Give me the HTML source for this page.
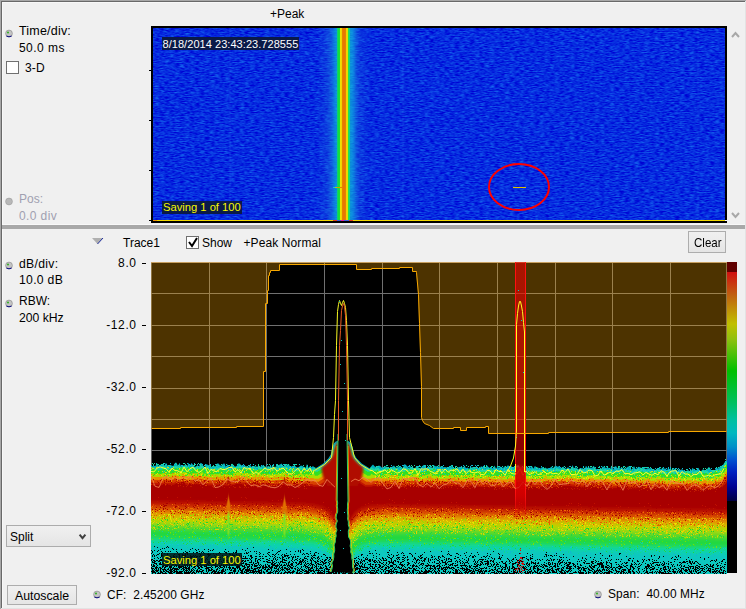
<!DOCTYPE html>
<html><head><meta charset="utf-8"><style>
html,body{margin:0;padding:0;width:746px;height:609px;overflow:hidden;background:#f0f0f0;font-family:"Liberation Sans", sans-serif;}
#root{position:absolute;left:0;top:0;width:746px;height:609px;background:#f0f0f0;}
.b{position:absolute;box-sizing:border-box;}
</style></head><body><div id="root">
<div class="b" style="left:0;top:0;width:746px;height:1px;background:#a8a8a8"></div>
<div class="b" style="left:0;top:0;width:1px;height:609px;background:#a8a8a8"></div>
<div class="b" style="left:1px;top:1px;width:744px;height:1px;background:#696969"></div>
<div class="b" style="left:1px;top:1px;width:1px;height:607px;background:#696969"></div>
<div class="b" style="left:2px;top:2px;width:743px;height:1px;background:#f8f8f8"></div>
<div class="b" style="left:2px;top:2px;width:1px;height:606px;background:#f8f8f8"></div>
<div class="b" style="left:745px;top:1px;width:1px;height:608px;background:#e3e3e3"></div>
<div class="b" style="left:1px;top:608px;width:745px;height:1px;background:#e3e3e3"></div>
<div class="b" style="left:2px;top:225px;width:743px;height:4px;background:#a8a8a8"></div>
<div class="b" style="left:2px;top:224px;width:743px;height:1px;background:#f8f8f8"></div>
<!-- checkbox 3-D -->
<div class="b" style="left:6px;top:61px;width:13px;height:13px;border:1px solid #707070;background:#fff"></div>
<!-- checkbox show -->
<div class="b" style="left:186px;top:236px;width:13px;height:13px;border:1px solid #707070;background:#fff"></div>
<!-- Clear button -->
<div class="b" style="left:688px;top:231px;width:38px;height:22px;border:1px solid #adadad;background:linear-gradient(#f0f0f0,#e5e5e5)"></div>
<!-- Split dropdown -->
<div class="b" style="left:6px;top:525px;width:85px;height:22px;border:1px solid #acacac;background:linear-gradient(#f0f0f0,#e5e5e5)"></div>
<!-- Autoscale button -->
<div class="b" style="left:7px;top:585px;width:70px;height:20px;border:1px solid #adadad;background:linear-gradient(#f0f0f0,#e5e5e5)"></div>
<svg width="746" height="609" style="position:absolute;left:0;top:0">
<defs>
<linearGradient id="dens" gradientUnits="userSpaceOnUse" x1="0" y1="460" x2="0" y2="573">
<stop offset="0" stop-color="#000"/>
<stop offset="0.04" stop-color="#00b8c8"/>
<stop offset="0.09" stop-color="#40e020"/>
<stop offset="0.15" stop-color="#b0e000"/>
<stop offset="0.19" stop-color="#f07000"/>
<stop offset="0.24" stop-color="#b00000"/>
<stop offset="0.41" stop-color="#a80000"/>
<stop offset="0.48" stop-color="#e03000"/>
<stop offset="0.55" stop-color="#e8a000"/>
<stop offset="0.62" stop-color="#b0e000"/>
<stop offset="0.70" stop-color="#30d810"/>
<stop offset="0.77" stop-color="#00d070"/>
<stop offset="0.85" stop-color="#00b0b0"/>
<stop offset="1" stop-color="#006868"/>
</linearGradient>
<linearGradient id="cbar" x1="0" y1="0" x2="0" y2="1">
<stop offset="0" stop-color="#d01010"/>
<stop offset="0.10" stop-color="#c06010"/>
<stop offset="0.227" stop-color="#c0c000"/>
<stop offset="0.293" stop-color="#90c010"/>
<stop offset="0.432" stop-color="#00c000"/>
<stop offset="0.572" stop-color="#00c060"/>
<stop offset="0.646" stop-color="#00c0a0"/>
<stop offset="0.703" stop-color="#00b8c0"/>
<stop offset="0.764" stop-color="#0090c8"/>
<stop offset="0.821" stop-color="#0050d0"/>
<stop offset="0.873" stop-color="#0020c0"/>
<stop offset="0.939" stop-color="#000090"/>
<stop offset="1" stop-color="#000040"/>
</linearGradient>
<linearGradient id="stripe" x1="0" y1="0" x2="1" y2="0">
<stop offset="0" stop-color="#1050e0"/>
<stop offset="0.14" stop-color="#10a8e8"/>
<stop offset="0.24" stop-color="#10c8c0"/>
<stop offset="0.30" stop-color="#10e040"/>
<stop offset="0.38" stop-color="#40e020"/>
<stop offset="0.40" stop-color="#e8e000"/>
<stop offset="0.46" stop-color="#f0c000"/>
<stop offset="0.48" stop-color="#e08000"/>
<stop offset="0.65" stop-color="#e08000"/>
<stop offset="0.67" stop-color="#f0d000"/>
<stop offset="0.74" stop-color="#c0e000"/>
<stop offset="0.77" stop-color="#20e060"/>
<stop offset="0.83" stop-color="#10c8b0"/>
<stop offset="0.90" stop-color="#10a8e8"/>
<stop offset="1" stop-color="#1050e0"/>
</linearGradient>
<linearGradient id="lower" gradientUnits="userSpaceOnUse" x1="0" y1="505" x2="0" y2="573">
<stop offset="0" stop-color="#a80000"/>
<stop offset="0.0735" stop-color="#c82000"/>
<stop offset="0.162" stop-color="#e06800"/>
<stop offset="0.235" stop-color="#e0b000"/>
<stop offset="0.309" stop-color="#b0d800"/>
<stop offset="0.397" stop-color="#50d820"/>
<stop offset="0.515" stop-color="#20d840"/>
<stop offset="0.603" stop-color="#10d890"/>
<stop offset="0.662" stop-color="#10d8c0"/>
<stop offset="1" stop-color="#10d0d8"/>
</linearGradient>
<clipPath id="plot"><rect x="151" y="262" width="576" height="312"/></clipPath>
</defs>
<rect x="151" y="26" width="576" height="197" fill="#000"/>
<filter id="bn" x="153" y="28" width="572" height="192" filterUnits="userSpaceOnUse" color-interpolation-filters="sRGB"><feTurbulence type="fractalNoise" baseFrequency="0.2 0.8" numOctaves="2" seed="4"/><feColorMatrix type="matrix" values="0.15 0 0 0 -0.05  0.6 0 0 0 -0.13  0.15 0 0 0 0.8  0 0 0 0 1"/></filter>
<rect x="153" y="28" width="572" height="192" fill="#1446d8"/>
<rect x="153" y="28" width="572" height="192" filter="url(#bn)"/>
<rect x="229" y="28" width="2" height="192" fill="rgba(90,150,255,0.10)"/><rect x="402" y="28" width="2" height="192" fill="rgba(90,150,255,0.10)"/><rect x="697" y="28" width="2" height="192" fill="rgba(90,150,255,0.08)"/>
<linearGradient id="halo" gradientUnits="userSpaceOnUse" x1="316" y1="0" x2="370" y2="0"><stop offset="0" stop-color="#2070e0" stop-opacity="0"/><stop offset="0.18" stop-color="#2070e0" stop-opacity="0.35"/><stop offset="0.296" stop-color="#1888e0" stop-opacity="0.8"/><stop offset="0.333" stop-color="#10a0e0" stop-opacity="0.95"/><stop offset="0.37" stop-color="#10b4e0"/><stop offset="0.389" stop-color="#10c0d0"/><stop offset="0.63" stop-color="#10c0d0"/><stop offset="0.667" stop-color="#10b4e0"/><stop offset="0.704" stop-color="#10a0e0" stop-opacity="0.95"/><stop offset="0.74" stop-color="#1888e0" stop-opacity="0.75"/><stop offset="0.82" stop-color="#2070e0" stop-opacity="0.3"/><stop offset="1" stop-color="#2070e0" stop-opacity="0"/></linearGradient>
<rect x="316" y="28" width="54" height="192" fill="url(#halo)"/>
<rect x="316" y="28" width="54" height="192" filter="url(#bn)" opacity="0.3"/>
<rect x="337" y="28" width="1" height="192" fill="#10d070"/><rect x="338" y="28" width="1" height="192" fill="#10e040"/><rect x="339" y="28" width="1" height="192" fill="#18e038"/><rect x="340" y="28" width="1" height="192" fill="#f0e000"/><rect x="341" y="28" width="1" height="192" fill="#f0d400"/><rect x="342" y="28" width="1" height="192" fill="#e88000"/><rect x="343" y="28" width="1" height="192" fill="#e87800"/><rect x="344" y="28" width="1" height="192" fill="#e87800"/><rect x="345" y="28" width="1" height="192" fill="#e88000"/><rect x="346" y="28" width="1" height="192" fill="#f0d400"/><rect x="347" y="28" width="1" height="192" fill="#e0e000"/><rect x="348" y="28" width="1" height="192" fill="#20e050"/><rect x="349" y="28" width="1" height="192" fill="#10d090"/>
<rect x="333" y="187" width="2" height="1" fill="#10d0c0"/><rect x="335" y="187" width="2" height="1" fill="#a0e000"/><rect x="337" y="187" width="5" height="1" fill="#e88000"/>
<rect x="153" y="220" width="572" height="1" fill="#f0d800"/><rect x="153" y="220" width="4" height="1" fill="#f09000"/><rect x="333" y="220" width="4" height="1" fill="#e04020"/><rect x="337" y="220" width="12" height="1" fill="#4060e0"/><rect x="341" y="220" width="3" height="1" fill="#e020a0"/><rect x="349" y="220" width="4" height="1" fill="#e04020"/>
<line x1="725" y1="220.5" x2="727" y2="220.5" stroke="#fff" stroke-width="1"/>
<rect x="149" y="70" width="2" height="1" fill="#000"/>
<rect x="149" y="120" width="2" height="1" fill="#000"/>
<rect x="149" y="170" width="2" height="1" fill="#000"/>
<rect x="149" y="220" width="2" height="1" fill="#000"/>
<ellipse cx="519" cy="187" rx="30" ry="23" fill="none" stroke="#ff0000" stroke-width="2"/>
<rect x="513" y="187" width="13" height="1" fill="#e0c000"/>
<rect x="162" y="37" width="137" height="13" fill="#0a1a48"/>
<rect x="162" y="201" width="80" height="13" fill="#0a1a48"/>
<g clip-path="url(#plot)">
<rect x="151" y="262" width="576" height="312" fill="#000"/>
<rect x="151" y="262" width="1" height="312" fill="#606060"/><rect x="726" y="262" width="1" height="312" fill="#606060"/>
<rect x="151" y="293" width="576" height="1" fill="#707070"/>
<rect x="151" y="325" width="576" height="1" fill="#707070"/>
<rect x="151" y="356" width="576" height="1" fill="#707070"/>
<rect x="151" y="388" width="576" height="1" fill="#707070"/>
<rect x="151" y="419" width="576" height="1" fill="#707070"/>
<rect x="151" y="450" width="576" height="1" fill="#707070"/>
<rect x="151" y="482" width="576" height="1" fill="#707070"/>
<rect x="151" y="513" width="576" height="1" fill="#707070"/>
<rect x="151" y="544" width="576" height="1" fill="#707070"/>
<rect x="209" y="262" width="1" height="312" fill="#707070"/>
<rect x="266" y="262" width="1" height="312" fill="#707070"/>
<rect x="324" y="262" width="1" height="312" fill="#707070"/>
<rect x="382" y="262" width="1" height="312" fill="#707070"/>
<rect x="439" y="262" width="1" height="312" fill="#707070"/>
<rect x="497" y="262" width="1" height="312" fill="#707070"/>
<rect x="555" y="262" width="1" height="312" fill="#707070"/>
<rect x="612" y="262" width="1" height="312" fill="#707070"/>
<rect x="670" y="262" width="1" height="312" fill="#707070"/>
<polygon points="151,262 151,428 180,428 180,427 236,427 236,426 263,426 263,371 265,371 265,303 267,303 267,290 268,290 268,275 269,275 269,272 270,272 270,270 279,270 279,264 356,264 356,269 371,269 371,268 399,268 399,267 412,267 412,271 416,271 416,272 418,294 419,323 420,352 421,386 421,417 422,420 424,423 429,425 433,428 453,428 453,427 460,427 460,430 466,430 466,427 485,427 485,426 488,426 488,433 548,433 548,432 668,432 668,431 726,431 727,431 727,262" fill="rgba(255,170,0,0.3)"/>
<rect x="151" y="262" width="576" height="1" fill="#c8a060"/>
<polygon points="130,465.2 151,465.2 152.5,466.3 154.0,465.9 155.5,465.8 157.0,463.2 158.5,465.8 160.0,465.3 161.5,464.0 163.0,464.6 164.5,465.4 166.0,462.7 167.5,465.4 169.0,465.3 170.5,464.7 172.0,465.8 173.5,466.3 175.0,462.7 176.5,462.7 178.0,465.8 179.5,462.8 181.0,466.5 182.5,465.6 184.0,466.1 185.5,463.4 187.0,466.7 188.5,462.8 190.0,465.4 191.5,463.1 193.0,464.7 194.5,466.8 196.0,466.5 197.5,464.9 199.0,466.7 200.5,462.7 202.0,463.5 203.5,466.7 205.0,466.9 206.5,464.1 208.0,464.9 209.5,465.5 211.0,466.8 212.5,466.4 214.0,466.1 215.5,466.3 217.0,463.4 218.5,463.6 220.0,465.2 221.5,465.8 223.0,463.8 224.5,463.4 226.0,467.0 227.5,464.3 229.0,466.9 230.5,465.9 232.0,463.6 233.5,465.0 235.0,466.8 236.5,466.3 238.0,463.4 239.5,463.6 241.0,465.0 242.5,465.9 244.0,465.1 245.5,466.0 247.0,467.2 248.5,466.7 250.0,464.7 251.5,466.7 253.0,467.2 254.5,466.1 256.0,466.6 257.5,466.4 259.0,466.3 260.5,466.7 262.0,465.5 263.5,465.5 265.0,466.6 266.5,467.7 268.0,465.7 269.5,466.7 271.0,467.5 272.5,465.3 274.0,466.9 275.5,467.4 277.0,465.1 278.5,465.1 280.0,464.6 281.5,463.5 283.0,465.8 284.5,466.4 286.0,465.8 287.5,464.2 289.0,464.2 290.5,467.5 292.0,465.9 293.5,465.7 295.0,465.8 296.5,467.3 298.0,467.4 299.5,466.4 301.0,465.4 302.5,465.9 304.0,467.1 305.5,468.0 307.0,464.1 308.5,467.9 310.0,465.9 311.5,467.3 313.0,465.9 315.3,468.5 323.3,463.5 328.3,458.5 330.8,454.5 332.3,447.5 333.8,443.5 335.8,441.5 337.3,441.0 347.7,441.0 349.2,441.5 351.2,443.5 352.7,447.5 354.2,454.5 356.7,458.5 361.7,463.5 369.7,468.5 371.5,465.9 373.0,464.6 374.5,466.2 376.0,467.1 377.5,466.2 379.0,465.4 380.5,466.2 382.0,467.8 383.5,467.6 385.0,466.3 386.5,466.5 388.0,468.2 389.5,468.0 391.0,467.4 392.5,466.6 394.0,465.6 395.5,467.4 397.0,467.4 398.5,466.4 400.0,466.3 401.5,468.2 403.0,467.5 404.5,464.0 406.0,465.0 407.5,466.5 409.0,468.0 410.5,466.0 412.0,467.7 413.5,467.9 415.0,467.9 416.5,466.6 418.0,467.1 419.5,468.2 421.0,467.4 422.5,466.1 424.0,464.7 425.5,468.1 427.0,467.8 428.5,466.7 430.0,466.8 431.5,468.6 433.0,467.3 434.5,465.6 436.0,466.5 437.5,465.7 439.0,467.1 440.5,466.5 442.0,466.6 443.5,467.2 445.0,466.9 446.5,467.4 448.0,467.5 449.5,466.5 451.0,465.8 452.5,467.1 454.0,468.1 455.5,468.1 457.0,468.6 458.5,467.3 460.0,466.8 461.5,466.9 463.0,467.5 464.5,465.5 466.0,468.3 467.5,467.6 469.0,468.8 470.5,468.5 472.0,466.9 473.5,467.5 475.0,468.6 476.5,467.7 478.0,468.1 479.5,468.4 481.0,466.3 482.5,467.0 484.0,465.4 485.5,468.5 487.0,465.6 488.5,467.0 490.0,468.1 491.5,467.8 493.0,468.3 494.5,465.5 496.0,468.6 497.5,466.8 499.0,467.7 500.5,466.6 502.0,467.7 503.5,467.5 505.0,465.9 506.5,467.0 508.0,465.0 509.5,467.1 511.0,465.4 512.5,468.1 514.0,466.7 515.5,466.9 517.0,465.6 518.5,465.3 520.0,467.4 521.5,467.6 523.0,467.1 524.5,467.1 526.0,467.0 527.5,466.7 529.0,468.3 530.5,467.6 532.0,466.3 533.5,468.5 535.0,465.8 536.5,467.8 538.0,467.2 539.5,469.2 541.0,467.8 542.5,467.1 544.0,468.6 545.5,467.4 547.0,468.7 548.5,467.9 550.0,468.1 551.5,466.6 553.0,468.3 554.5,466.4 556.0,465.8 557.5,466.8 559.0,466.3 560.5,468.3 562.0,467.4 563.5,466.6 565.0,469.5 566.5,468.7 568.0,466.9 569.5,468.7 571.0,469.4 572.5,465.1 574.0,468.5 575.5,466.9 577.0,468.1 578.5,469.5 580.0,467.9 581.5,468.3 583.0,468.2 584.5,469.6 586.0,465.7 587.5,467.7 589.0,467.7 590.5,467.5 592.0,467.7 593.5,465.8 595.0,467.6 596.5,469.3 598.0,469.1 599.5,469.1 601.0,469.5 602.5,466.6 604.0,466.8 605.5,467.8 607.0,467.8 608.5,467.7 610.0,469.5 611.5,465.5 613.0,469.8 614.5,466.8 616.0,466.0 617.5,468.2 619.0,466.6 620.5,468.4 622.0,467.6 623.5,469.1 625.0,468.9 626.5,467.8 628.0,466.5 629.5,466.6 631.0,469.7 632.5,468.4 634.0,466.1 635.5,468.9 637.0,468.3 638.5,466.8 640.0,467.2 641.5,468.1 643.0,467.1 644.5,468.2 646.0,469.1 647.5,468.3 649.0,468.2 650.5,468.0 652.0,470.3 653.5,468.9 655.0,469.7 656.5,469.9 658.0,468.8 659.5,467.8 661.0,469.5 662.5,467.6 664.0,468.6 665.5,468.5 667.0,470.3 668.5,467.0 670.0,470.4 671.5,469.6 673.0,469.7 674.5,468.4 676.0,470.2 677.5,470.8 679.0,469.1 680.5,470.0 682.0,469.2 683.5,470.2 685.0,471.3 686.5,471.1 688.0,470.1 689.5,471.0 691.0,471.2 692.5,467.7 694.0,469.3 695.5,470.0 697.0,469.8 698.5,467.7 700.0,471.0 701.5,470.7 703.0,469.2 704.5,470.1 706.0,470.2 707.5,468.6 709.0,466.8 710.5,468.9 712.0,470.9 713.5,469.7 715.0,470.6 716.5,467.1 718.0,468.7 719.5,467.1 721.0,465.8 722.5,465.9 724.0,463.3 725.5,461.0 745,455.0 745,625 130,625" fill="#00b0c0"/>
<filter id="er0p4_1p2" filterUnits="userSpaceOnUse" x="100" y="250" width="700" height="400"><feMorphology operator="erode" radius="0.4 1.2"/></filter>
<g filter="url(#er0p4_1p2)"><polygon points="130,465.9 151,465.9 153,466.2 155,466.4 157,466.9 159,466.3 161,466.9 163,464.2 165,465.5 167,467.0 169,466.1 171,466.9 173,464.6 175,465.6 177,465.0 179,465.9 181,466.0 183,464.4 185,465.0 187,465.2 189,467.1 191,466.7 193,464.9 195,466.8 197,464.9 199,466.3 201,464.9 203,464.5 205,467.2 207,465.2 209,465.2 211,467.6 213,467.2 215,465.5 217,467.5 219,466.3 221,466.7 223,465.3 225,467.6 227,466.8 229,467.7 231,467.5 233,465.7 235,465.9 237,465.4 239,465.3 241,465.1 243,465.8 245,466.8 247,465.0 249,467.0 251,466.0 253,466.0 255,467.5 257,466.5 259,466.0 261,466.6 263,467.2 265,465.3 267,468.1 269,465.3 271,467.5 273,467.8 275,465.3 277,467.6 279,466.4 281,467.0 283,465.4 285,465.5 287,465.9 289,468.3 291,466.0 293,467.7 295,468.2 297,468.3 299,466.5 301,466.6 303,467.1 305,467.8 307,465.9 309,467.8 311,467.9 313,468.1 315,465.7 316,469 324,464 329,459 331.5,455 333,448 334.5,444 336.5,442 338,441.5 347,441.5 348.5,442 350.5,444 352,448 353.5,455 356,459 361,464 369,469 371,465.9 373,467.3 375,468.3 377,466.2 379,468.0 381,468.7 383,467.7 385,468.2 387,466.2 389,467.2 391,466.3 393,468.4 395,466.8 397,467.3 399,468.9 401,468.5 403,468.9 405,467.3 407,467.4 409,468.1 411,467.4 413,466.8 415,467.2 417,466.4 419,467.1 421,469.0 423,468.9 425,467.9 427,467.5 429,467.1 431,466.3 433,466.9 435,468.5 437,468.7 439,467.2 441,468.5 443,468.5 445,468.3 447,468.2 449,468.5 451,467.3 453,468.3 455,467.1 457,467.7 459,468.6 461,468.4 463,467.2 465,469.2 467,468.3 469,468.1 471,466.4 473,468.0 475,467.1 477,468.4 479,467.8 481,468.9 483,468.4 485,468.8 487,467.5 489,468.4 491,468.7 493,469.0 495,467.6 497,469.1 499,469.2 501,468.6 503,469.5 505,469.5 507,468.2 509,468.2 511,467.1 513,469.2 515,469.5 517,468.1 519,468.8 521,468.9 523,468.9 525,467.2 527,469.1 529,468.5 531,468.8 533,468.1 535,468.7 537,469.1 539,468.7 541,469.0 543,466.9 545,467.4 547,468.2 549,468.9 551,467.6 553,469.0 555,468.8 557,467.1 559,468.4 561,467.7 563,467.2 565,467.4 567,468.0 569,467.6 571,467.6 573,467.2 575,468.5 577,468.2 579,468.9 581,468.9 583,467.9 585,469.9 587,467.2 589,468.4 591,468.0 593,468.4 595,467.6 597,469.7 599,468.4 601,467.4 603,469.1 605,467.6 607,468.9 609,468.3 611,469.1 613,470.2 615,469.8 617,468.6 619,469.8 621,469.3 623,468.5 625,467.9 627,469.2 629,469.1 631,470.3 633,470.4 635,469.3 637,468.6 639,470.3 641,467.7 643,468.0 645,469.5 647,469.7 649,468.3 651,469.8 653,470.7 655,469.2 657,469.4 659,468.8 661,469.1 663,471.2 665,469.5 667,471.3 669,471.2 671,470.3 673,469.3 675,471.5 677,470.1 679,469.9 681,469.7 683,471.8 685,470.3 687,469.8 689,470.4 691,469.3 693,470.8 695,470.2 697,469.7 699,471.2 701,471.3 703,468.8 705,470.3 707,469.5 709,471.4 711,470.9 713,469.3 715,469.3 717,468.1 719,469.8 721,466.8 723,465.6 725,461.7 745,455.7 745,625 130,625" fill="#20d8a0"/></g>
<filter id="er0p8_2p8" filterUnits="userSpaceOnUse" x="100" y="250" width="700" height="400"><feMorphology operator="erode" radius="0.8 2.8"/></filter>
<g filter="url(#er0p8_2p8)"><polygon points="130,465.9 151,465.9 153,466.2 155,466.4 157,466.9 159,466.3 161,466.9 163,464.2 165,465.5 167,467.0 169,466.1 171,466.9 173,464.6 175,465.6 177,465.0 179,465.9 181,466.0 183,464.4 185,465.0 187,465.2 189,467.1 191,466.7 193,464.9 195,466.8 197,464.9 199,466.3 201,464.9 203,464.5 205,467.2 207,465.2 209,465.2 211,467.6 213,467.2 215,465.5 217,467.5 219,466.3 221,466.7 223,465.3 225,467.6 227,466.8 229,467.7 231,467.5 233,465.7 235,465.9 237,465.4 239,465.3 241,465.1 243,465.8 245,466.8 247,465.0 249,467.0 251,466.0 253,466.0 255,467.5 257,466.5 259,466.0 261,466.6 263,467.2 265,465.3 267,468.1 269,465.3 271,467.5 273,467.8 275,465.3 277,467.6 279,466.4 281,467.0 283,465.4 285,465.5 287,465.9 289,468.3 291,466.0 293,467.7 295,468.2 297,468.3 299,466.5 301,466.6 303,467.1 305,467.8 307,465.9 309,467.8 311,467.9 313,468.1 315,465.7 316,469 324,464 329,459 331.5,455 333,448 334.5,444 336.5,442 338,441.5 347,441.5 348.5,442 350.5,444 352,448 353.5,455 356,459 361,464 369,469 371,465.9 373,467.3 375,468.3 377,466.2 379,468.0 381,468.7 383,467.7 385,468.2 387,466.2 389,467.2 391,466.3 393,468.4 395,466.8 397,467.3 399,468.9 401,468.5 403,468.9 405,467.3 407,467.4 409,468.1 411,467.4 413,466.8 415,467.2 417,466.4 419,467.1 421,469.0 423,468.9 425,467.9 427,467.5 429,467.1 431,466.3 433,466.9 435,468.5 437,468.7 439,467.2 441,468.5 443,468.5 445,468.3 447,468.2 449,468.5 451,467.3 453,468.3 455,467.1 457,467.7 459,468.6 461,468.4 463,467.2 465,469.2 467,468.3 469,468.1 471,466.4 473,468.0 475,467.1 477,468.4 479,467.8 481,468.9 483,468.4 485,468.8 487,467.5 489,468.4 491,468.7 493,469.0 495,467.6 497,469.1 499,469.2 501,468.6 503,469.5 505,469.5 507,468.2 509,468.2 511,467.1 513,469.2 515,469.5 517,468.1 519,468.8 521,468.9 523,468.9 525,467.2 527,469.1 529,468.5 531,468.8 533,468.1 535,468.7 537,469.1 539,468.7 541,469.0 543,466.9 545,467.4 547,468.2 549,468.9 551,467.6 553,469.0 555,468.8 557,467.1 559,468.4 561,467.7 563,467.2 565,467.4 567,468.0 569,467.6 571,467.6 573,467.2 575,468.5 577,468.2 579,468.9 581,468.9 583,467.9 585,469.9 587,467.2 589,468.4 591,468.0 593,468.4 595,467.6 597,469.7 599,468.4 601,467.4 603,469.1 605,467.6 607,468.9 609,468.3 611,469.1 613,470.2 615,469.8 617,468.6 619,469.8 621,469.3 623,468.5 625,467.9 627,469.2 629,469.1 631,470.3 633,470.4 635,469.3 637,468.6 639,470.3 641,467.7 643,468.0 645,469.5 647,469.7 649,468.3 651,469.8 653,470.7 655,469.2 657,469.4 659,468.8 661,469.1 663,471.2 665,469.5 667,471.3 669,471.2 671,470.3 673,469.3 675,471.5 677,470.1 679,469.9 681,469.7 683,471.8 685,470.3 687,469.8 689,470.4 691,469.3 693,470.8 695,470.2 697,469.7 699,471.2 701,471.3 703,468.8 705,470.3 707,469.5 709,471.4 711,470.9 713,469.3 715,469.3 717,468.1 719,469.8 721,466.8 723,465.6 725,461.7 745,455.7 745,625 130,625" fill="#30e020"/></g>
<filter id="er1p2_7" filterUnits="userSpaceOnUse" x="100" y="250" width="700" height="400"><feMorphology operator="erode" radius="1.2 7"/></filter>
<g filter="url(#er1p2_7)"><polygon points="130,465.9 151,465.9 153,466.2 155,466.4 157,466.9 159,466.3 161,466.9 163,464.2 165,465.5 167,467.0 169,466.1 171,466.9 173,464.6 175,465.6 177,465.0 179,465.9 181,466.0 183,464.4 185,465.0 187,465.2 189,467.1 191,466.7 193,464.9 195,466.8 197,464.9 199,466.3 201,464.9 203,464.5 205,467.2 207,465.2 209,465.2 211,467.6 213,467.2 215,465.5 217,467.5 219,466.3 221,466.7 223,465.3 225,467.6 227,466.8 229,467.7 231,467.5 233,465.7 235,465.9 237,465.4 239,465.3 241,465.1 243,465.8 245,466.8 247,465.0 249,467.0 251,466.0 253,466.0 255,467.5 257,466.5 259,466.0 261,466.6 263,467.2 265,465.3 267,468.1 269,465.3 271,467.5 273,467.8 275,465.3 277,467.6 279,466.4 281,467.0 283,465.4 285,465.5 287,465.9 289,468.3 291,466.0 293,467.7 295,468.2 297,468.3 299,466.5 301,466.6 303,467.1 305,467.8 307,465.9 309,467.8 311,467.9 313,468.1 315,465.7 316,469 324,464 329,459 331.5,455 333,448 334.5,444 336.5,442 338,441.5 347,441.5 348.5,442 350.5,444 352,448 353.5,455 356,459 361,464 369,469 371,465.9 373,467.3 375,468.3 377,466.2 379,468.0 381,468.7 383,467.7 385,468.2 387,466.2 389,467.2 391,466.3 393,468.4 395,466.8 397,467.3 399,468.9 401,468.5 403,468.9 405,467.3 407,467.4 409,468.1 411,467.4 413,466.8 415,467.2 417,466.4 419,467.1 421,469.0 423,468.9 425,467.9 427,467.5 429,467.1 431,466.3 433,466.9 435,468.5 437,468.7 439,467.2 441,468.5 443,468.5 445,468.3 447,468.2 449,468.5 451,467.3 453,468.3 455,467.1 457,467.7 459,468.6 461,468.4 463,467.2 465,469.2 467,468.3 469,468.1 471,466.4 473,468.0 475,467.1 477,468.4 479,467.8 481,468.9 483,468.4 485,468.8 487,467.5 489,468.4 491,468.7 493,469.0 495,467.6 497,469.1 499,469.2 501,468.6 503,469.5 505,469.5 507,468.2 509,468.2 511,467.1 513,469.2 515,469.5 517,468.1 519,468.8 521,468.9 523,468.9 525,467.2 527,469.1 529,468.5 531,468.8 533,468.1 535,468.7 537,469.1 539,468.7 541,469.0 543,466.9 545,467.4 547,468.2 549,468.9 551,467.6 553,469.0 555,468.8 557,467.1 559,468.4 561,467.7 563,467.2 565,467.4 567,468.0 569,467.6 571,467.6 573,467.2 575,468.5 577,468.2 579,468.9 581,468.9 583,467.9 585,469.9 587,467.2 589,468.4 591,468.0 593,468.4 595,467.6 597,469.7 599,468.4 601,467.4 603,469.1 605,467.6 607,468.9 609,468.3 611,469.1 613,470.2 615,469.8 617,468.6 619,469.8 621,469.3 623,468.5 625,467.9 627,469.2 629,469.1 631,470.3 633,470.4 635,469.3 637,468.6 639,470.3 641,467.7 643,468.0 645,469.5 647,469.7 649,468.3 651,469.8 653,470.7 655,469.2 657,469.4 659,468.8 661,469.1 663,471.2 665,469.5 667,471.3 669,471.2 671,470.3 673,469.3 675,471.5 677,470.1 679,469.9 681,469.7 683,471.8 685,470.3 687,469.8 689,470.4 691,469.3 693,470.8 695,470.2 697,469.7 699,471.2 701,471.3 703,468.8 705,470.3 707,469.5 709,471.4 711,470.9 713,469.3 715,469.3 717,468.1 719,469.8 721,466.8 723,465.6 725,461.7 745,455.7 745,625 130,625" fill="#a8e000"/></g>
<filter id="er1p6_10" filterUnits="userSpaceOnUse" x="100" y="250" width="700" height="400"><feMorphology operator="erode" radius="1.6 10"/></filter>
<g filter="url(#er1p6_10)"><polygon points="130,465.9 151,465.9 153,466.2 155,466.4 157,466.9 159,466.3 161,466.9 163,464.2 165,465.5 167,467.0 169,466.1 171,466.9 173,464.6 175,465.6 177,465.0 179,465.9 181,466.0 183,464.4 185,465.0 187,465.2 189,467.1 191,466.7 193,464.9 195,466.8 197,464.9 199,466.3 201,464.9 203,464.5 205,467.2 207,465.2 209,465.2 211,467.6 213,467.2 215,465.5 217,467.5 219,466.3 221,466.7 223,465.3 225,467.6 227,466.8 229,467.7 231,467.5 233,465.7 235,465.9 237,465.4 239,465.3 241,465.1 243,465.8 245,466.8 247,465.0 249,467.0 251,466.0 253,466.0 255,467.5 257,466.5 259,466.0 261,466.6 263,467.2 265,465.3 267,468.1 269,465.3 271,467.5 273,467.8 275,465.3 277,467.6 279,466.4 281,467.0 283,465.4 285,465.5 287,465.9 289,468.3 291,466.0 293,467.7 295,468.2 297,468.3 299,466.5 301,466.6 303,467.1 305,467.8 307,465.9 309,467.8 311,467.9 313,468.1 315,465.7 316,469 324,464 329,459 331.5,455 333,448 334.5,444 336.5,442 338,441.5 347,441.5 348.5,442 350.5,444 352,448 353.5,455 356,459 361,464 369,469 371,465.9 373,467.3 375,468.3 377,466.2 379,468.0 381,468.7 383,467.7 385,468.2 387,466.2 389,467.2 391,466.3 393,468.4 395,466.8 397,467.3 399,468.9 401,468.5 403,468.9 405,467.3 407,467.4 409,468.1 411,467.4 413,466.8 415,467.2 417,466.4 419,467.1 421,469.0 423,468.9 425,467.9 427,467.5 429,467.1 431,466.3 433,466.9 435,468.5 437,468.7 439,467.2 441,468.5 443,468.5 445,468.3 447,468.2 449,468.5 451,467.3 453,468.3 455,467.1 457,467.7 459,468.6 461,468.4 463,467.2 465,469.2 467,468.3 469,468.1 471,466.4 473,468.0 475,467.1 477,468.4 479,467.8 481,468.9 483,468.4 485,468.8 487,467.5 489,468.4 491,468.7 493,469.0 495,467.6 497,469.1 499,469.2 501,468.6 503,469.5 505,469.5 507,468.2 509,468.2 511,467.1 513,469.2 515,469.5 517,468.1 519,468.8 521,468.9 523,468.9 525,467.2 527,469.1 529,468.5 531,468.8 533,468.1 535,468.7 537,469.1 539,468.7 541,469.0 543,466.9 545,467.4 547,468.2 549,468.9 551,467.6 553,469.0 555,468.8 557,467.1 559,468.4 561,467.7 563,467.2 565,467.4 567,468.0 569,467.6 571,467.6 573,467.2 575,468.5 577,468.2 579,468.9 581,468.9 583,467.9 585,469.9 587,467.2 589,468.4 591,468.0 593,468.4 595,467.6 597,469.7 599,468.4 601,467.4 603,469.1 605,467.6 607,468.9 609,468.3 611,469.1 613,470.2 615,469.8 617,468.6 619,469.8 621,469.3 623,468.5 625,467.9 627,469.2 629,469.1 631,470.3 633,470.4 635,469.3 637,468.6 639,470.3 641,467.7 643,468.0 645,469.5 647,469.7 649,468.3 651,469.8 653,470.7 655,469.2 657,469.4 659,468.8 661,469.1 663,471.2 665,469.5 667,471.3 669,471.2 671,470.3 673,469.3 675,471.5 677,470.1 679,469.9 681,469.7 683,471.8 685,470.3 687,469.8 689,470.4 691,469.3 693,470.8 695,470.2 697,469.7 699,471.2 701,471.3 703,468.8 705,470.3 707,469.5 709,471.4 711,470.9 713,469.3 715,469.3 717,468.1 719,469.8 721,466.8 723,465.6 725,461.7 745,455.7 745,625 130,625" fill="#e89000"/></g>
<filter id="er2_13" filterUnits="userSpaceOnUse" x="100" y="250" width="700" height="400"><feMorphology operator="erode" radius="2 13"/></filter>
<g filter="url(#er2_13)"><polygon points="130,465.9 151,465.9 153,466.2 155,466.4 157,466.9 159,466.3 161,466.9 163,464.2 165,465.5 167,467.0 169,466.1 171,466.9 173,464.6 175,465.6 177,465.0 179,465.9 181,466.0 183,464.4 185,465.0 187,465.2 189,467.1 191,466.7 193,464.9 195,466.8 197,464.9 199,466.3 201,464.9 203,464.5 205,467.2 207,465.2 209,465.2 211,467.6 213,467.2 215,465.5 217,467.5 219,466.3 221,466.7 223,465.3 225,467.6 227,466.8 229,467.7 231,467.5 233,465.7 235,465.9 237,465.4 239,465.3 241,465.1 243,465.8 245,466.8 247,465.0 249,467.0 251,466.0 253,466.0 255,467.5 257,466.5 259,466.0 261,466.6 263,467.2 265,465.3 267,468.1 269,465.3 271,467.5 273,467.8 275,465.3 277,467.6 279,466.4 281,467.0 283,465.4 285,465.5 287,465.9 289,468.3 291,466.0 293,467.7 295,468.2 297,468.3 299,466.5 301,466.6 303,467.1 305,467.8 307,465.9 309,467.8 311,467.9 313,468.1 315,465.7 316,469 324,464 329,459 331.5,455 333,448 334.5,444 336.5,442 338,441.5 347,441.5 348.5,442 350.5,444 352,448 353.5,455 356,459 361,464 369,469 371,465.9 373,467.3 375,468.3 377,466.2 379,468.0 381,468.7 383,467.7 385,468.2 387,466.2 389,467.2 391,466.3 393,468.4 395,466.8 397,467.3 399,468.9 401,468.5 403,468.9 405,467.3 407,467.4 409,468.1 411,467.4 413,466.8 415,467.2 417,466.4 419,467.1 421,469.0 423,468.9 425,467.9 427,467.5 429,467.1 431,466.3 433,466.9 435,468.5 437,468.7 439,467.2 441,468.5 443,468.5 445,468.3 447,468.2 449,468.5 451,467.3 453,468.3 455,467.1 457,467.7 459,468.6 461,468.4 463,467.2 465,469.2 467,468.3 469,468.1 471,466.4 473,468.0 475,467.1 477,468.4 479,467.8 481,468.9 483,468.4 485,468.8 487,467.5 489,468.4 491,468.7 493,469.0 495,467.6 497,469.1 499,469.2 501,468.6 503,469.5 505,469.5 507,468.2 509,468.2 511,467.1 513,469.2 515,469.5 517,468.1 519,468.8 521,468.9 523,468.9 525,467.2 527,469.1 529,468.5 531,468.8 533,468.1 535,468.7 537,469.1 539,468.7 541,469.0 543,466.9 545,467.4 547,468.2 549,468.9 551,467.6 553,469.0 555,468.8 557,467.1 559,468.4 561,467.7 563,467.2 565,467.4 567,468.0 569,467.6 571,467.6 573,467.2 575,468.5 577,468.2 579,468.9 581,468.9 583,467.9 585,469.9 587,467.2 589,468.4 591,468.0 593,468.4 595,467.6 597,469.7 599,468.4 601,467.4 603,469.1 605,467.6 607,468.9 609,468.3 611,469.1 613,470.2 615,469.8 617,468.6 619,469.8 621,469.3 623,468.5 625,467.9 627,469.2 629,469.1 631,470.3 633,470.4 635,469.3 637,468.6 639,470.3 641,467.7 643,468.0 645,469.5 647,469.7 649,468.3 651,469.8 653,470.7 655,469.2 657,469.4 659,468.8 661,469.1 663,471.2 665,469.5 667,471.3 669,471.2 671,470.3 673,469.3 675,471.5 677,470.1 679,469.9 681,469.7 683,471.8 685,470.3 687,469.8 689,470.4 691,469.3 693,470.8 695,470.2 697,469.7 699,471.2 701,471.3 703,468.8 705,470.3 707,469.5 709,471.4 711,470.9 713,469.3 715,469.3 717,468.1 719,469.8 721,466.8 723,465.6 725,461.7 745,455.7 745,625 130,625" fill="#d84000"/></g>
<filter id="er2p5_15p5" filterUnits="userSpaceOnUse" x="100" y="250" width="700" height="400"><feMorphology operator="erode" radius="2.5 15.5"/></filter>
<g filter="url(#er2p5_15p5)"><polygon points="130,465.9 151,465.9 153,466.2 155,466.4 157,466.9 159,466.3 161,466.9 163,464.2 165,465.5 167,467.0 169,466.1 171,466.9 173,464.6 175,465.6 177,465.0 179,465.9 181,466.0 183,464.4 185,465.0 187,465.2 189,467.1 191,466.7 193,464.9 195,466.8 197,464.9 199,466.3 201,464.9 203,464.5 205,467.2 207,465.2 209,465.2 211,467.6 213,467.2 215,465.5 217,467.5 219,466.3 221,466.7 223,465.3 225,467.6 227,466.8 229,467.7 231,467.5 233,465.7 235,465.9 237,465.4 239,465.3 241,465.1 243,465.8 245,466.8 247,465.0 249,467.0 251,466.0 253,466.0 255,467.5 257,466.5 259,466.0 261,466.6 263,467.2 265,465.3 267,468.1 269,465.3 271,467.5 273,467.8 275,465.3 277,467.6 279,466.4 281,467.0 283,465.4 285,465.5 287,465.9 289,468.3 291,466.0 293,467.7 295,468.2 297,468.3 299,466.5 301,466.6 303,467.1 305,467.8 307,465.9 309,467.8 311,467.9 313,468.1 315,465.7 316,469 324,464 329,459 331.5,455 333,448 334.5,444 336.5,442 338,441.5 347,441.5 348.5,442 350.5,444 352,448 353.5,455 356,459 361,464 369,469 371,465.9 373,467.3 375,468.3 377,466.2 379,468.0 381,468.7 383,467.7 385,468.2 387,466.2 389,467.2 391,466.3 393,468.4 395,466.8 397,467.3 399,468.9 401,468.5 403,468.9 405,467.3 407,467.4 409,468.1 411,467.4 413,466.8 415,467.2 417,466.4 419,467.1 421,469.0 423,468.9 425,467.9 427,467.5 429,467.1 431,466.3 433,466.9 435,468.5 437,468.7 439,467.2 441,468.5 443,468.5 445,468.3 447,468.2 449,468.5 451,467.3 453,468.3 455,467.1 457,467.7 459,468.6 461,468.4 463,467.2 465,469.2 467,468.3 469,468.1 471,466.4 473,468.0 475,467.1 477,468.4 479,467.8 481,468.9 483,468.4 485,468.8 487,467.5 489,468.4 491,468.7 493,469.0 495,467.6 497,469.1 499,469.2 501,468.6 503,469.5 505,469.5 507,468.2 509,468.2 511,467.1 513,469.2 515,469.5 517,468.1 519,468.8 521,468.9 523,468.9 525,467.2 527,469.1 529,468.5 531,468.8 533,468.1 535,468.7 537,469.1 539,468.7 541,469.0 543,466.9 545,467.4 547,468.2 549,468.9 551,467.6 553,469.0 555,468.8 557,467.1 559,468.4 561,467.7 563,467.2 565,467.4 567,468.0 569,467.6 571,467.6 573,467.2 575,468.5 577,468.2 579,468.9 581,468.9 583,467.9 585,469.9 587,467.2 589,468.4 591,468.0 593,468.4 595,467.6 597,469.7 599,468.4 601,467.4 603,469.1 605,467.6 607,468.9 609,468.3 611,469.1 613,470.2 615,469.8 617,468.6 619,469.8 621,469.3 623,468.5 625,467.9 627,469.2 629,469.1 631,470.3 633,470.4 635,469.3 637,468.6 639,470.3 641,467.7 643,468.0 645,469.5 647,469.7 649,468.3 651,469.8 653,470.7 655,469.2 657,469.4 659,468.8 661,469.1 663,471.2 665,469.5 667,471.3 669,471.2 671,470.3 673,469.3 675,471.5 677,470.1 679,469.9 681,469.7 683,471.8 685,470.3 687,469.8 689,470.4 691,469.3 693,470.8 695,470.2 697,469.7 699,471.2 701,471.3 703,468.8 705,470.3 707,469.5 709,471.4 711,470.9 713,469.3 715,469.3 717,468.1 719,469.8 721,466.8 723,465.6 725,461.7 745,455.7 745,625 130,625" fill="#c01800"/></g>
<filter id="er3_18" filterUnits="userSpaceOnUse" x="100" y="250" width="700" height="400"><feMorphology operator="erode" radius="3 18"/></filter>
<g filter="url(#er3_18)"><polygon points="130,465.9 151,465.9 153,466.2 155,466.4 157,466.9 159,466.3 161,466.9 163,464.2 165,465.5 167,467.0 169,466.1 171,466.9 173,464.6 175,465.6 177,465.0 179,465.9 181,466.0 183,464.4 185,465.0 187,465.2 189,467.1 191,466.7 193,464.9 195,466.8 197,464.9 199,466.3 201,464.9 203,464.5 205,467.2 207,465.2 209,465.2 211,467.6 213,467.2 215,465.5 217,467.5 219,466.3 221,466.7 223,465.3 225,467.6 227,466.8 229,467.7 231,467.5 233,465.7 235,465.9 237,465.4 239,465.3 241,465.1 243,465.8 245,466.8 247,465.0 249,467.0 251,466.0 253,466.0 255,467.5 257,466.5 259,466.0 261,466.6 263,467.2 265,465.3 267,468.1 269,465.3 271,467.5 273,467.8 275,465.3 277,467.6 279,466.4 281,467.0 283,465.4 285,465.5 287,465.9 289,468.3 291,466.0 293,467.7 295,468.2 297,468.3 299,466.5 301,466.6 303,467.1 305,467.8 307,465.9 309,467.8 311,467.9 313,468.1 315,465.7 316,469 324,464 329,459 331.5,455 333,448 334.5,444 336.5,442 338,441.5 347,441.5 348.5,442 350.5,444 352,448 353.5,455 356,459 361,464 369,469 371,465.9 373,467.3 375,468.3 377,466.2 379,468.0 381,468.7 383,467.7 385,468.2 387,466.2 389,467.2 391,466.3 393,468.4 395,466.8 397,467.3 399,468.9 401,468.5 403,468.9 405,467.3 407,467.4 409,468.1 411,467.4 413,466.8 415,467.2 417,466.4 419,467.1 421,469.0 423,468.9 425,467.9 427,467.5 429,467.1 431,466.3 433,466.9 435,468.5 437,468.7 439,467.2 441,468.5 443,468.5 445,468.3 447,468.2 449,468.5 451,467.3 453,468.3 455,467.1 457,467.7 459,468.6 461,468.4 463,467.2 465,469.2 467,468.3 469,468.1 471,466.4 473,468.0 475,467.1 477,468.4 479,467.8 481,468.9 483,468.4 485,468.8 487,467.5 489,468.4 491,468.7 493,469.0 495,467.6 497,469.1 499,469.2 501,468.6 503,469.5 505,469.5 507,468.2 509,468.2 511,467.1 513,469.2 515,469.5 517,468.1 519,468.8 521,468.9 523,468.9 525,467.2 527,469.1 529,468.5 531,468.8 533,468.1 535,468.7 537,469.1 539,468.7 541,469.0 543,466.9 545,467.4 547,468.2 549,468.9 551,467.6 553,469.0 555,468.8 557,467.1 559,468.4 561,467.7 563,467.2 565,467.4 567,468.0 569,467.6 571,467.6 573,467.2 575,468.5 577,468.2 579,468.9 581,468.9 583,467.9 585,469.9 587,467.2 589,468.4 591,468.0 593,468.4 595,467.6 597,469.7 599,468.4 601,467.4 603,469.1 605,467.6 607,468.9 609,468.3 611,469.1 613,470.2 615,469.8 617,468.6 619,469.8 621,469.3 623,468.5 625,467.9 627,469.2 629,469.1 631,470.3 633,470.4 635,469.3 637,468.6 639,470.3 641,467.7 643,468.0 645,469.5 647,469.7 649,468.3 651,469.8 653,470.7 655,469.2 657,469.4 659,468.8 661,469.1 663,471.2 665,469.5 667,471.3 669,471.2 671,470.3 673,469.3 675,471.5 677,470.1 679,469.9 681,469.7 683,471.8 685,470.3 687,469.8 689,470.4 691,469.3 693,470.8 695,470.2 697,469.7 699,471.2 701,471.3 703,468.8 705,470.3 707,469.5 709,471.4 711,470.9 713,469.3 715,469.3 717,468.1 719,469.8 721,466.8 723,465.6 725,461.7 745,455.7 745,625 130,625" fill="#a80000"/></g>
<path d="M725 461h1v1h-1zm-569 2h1v1h-1zm8 0h1v1h-1zm6 0h1v1h-1zm17 0h1v1h-1zm7 0h1v1h-1zm-31 1h1v1h-1zm3 0h1v1h-1zm8 0h1v1h-1zm15 0h1v1h-1zm8 0h1v1h-1zm2 0h1v1h-1zm3 0h1v1h-1zm3 0h1v1h-1zm5 0h1v1h-1zm5 0h1v1h-1zm2 0h1v1h-1zm26 0h1v1h-1zm7 0h1v1h-1zm3 0h1v1h-1zm14 0h1v1h-1zm6 0h1v1h-1zm3 0h1v1h-1zm7 0h1v1h-1zm2 0h1v1h-1zm9 0h1v1h-1zm5 0h1v1h-1zm-148 1h1v1h-1zm8 0h2v1h-2zm22 0h2v1h-2zm7 0h1v1h-1zm3 0h1v1h-1zm14 0h1v1h-1zm5 0h1v1h-1zm14 0h1v1h-1zm4 0h1v1h-1zm3 0h2v1h-2zm11 0h1v1h-1zm2 0h1v1h-1zm5 0h1v1h-1zm12 0h1v1h-1zm2 0h1v1h-1zm3 0h1v1h-1zm4 0h1v1h-1zm2 0h1v1h-1zm4 0h1v1h-1zm6 0h1v1h-1zm2 0h1v1h-1zm23 0h1v1h-1zm84 0h1v1h-1zm11 0h2v1h-2zm3 0h1v1h-1zm4 0h1v1h-1zm10 0h1v1h-1zm6 0h1v1h-1zm2 0h1v1h-1zm6 0h1v1h-1zm10 0h1v1h-1zm8 0h1v1h-1zm12 0h1v1h-1zm8 0h2v1h-2zm4 0h1v1h-1zm2 0h1v1h-1zm7 0h1v1h-1zm238 0h1v1h-1zm-571 1h1v1h-1zm10 0h1v1h-1zm11 0h1v1h-1zm10 0h1v1h-1zm6 0h1v1h-1zm5 0h1v1h-1zm5 0h1v1h-1zm5 0h1v1h-1zm5 0h1v1h-1zm9 0h1v1h-1zm7 0h1v1h-1zm2 0h1v1h-1zm11 0h1v1h-1zm3 0h4v1h-4zm12 0h1v1h-1zm7 0h1v1h-1zm11 0h1v1h-1zm13 0h1v1h-1zm11 0h1v1h-1zm83 0h1v1h-1zm23 0h1v1h-1zm8 0h2v1h-2zm8 0h3v1h-3zm6 0h1v1h-1zm2 0h2v1h-2zm6 0h2v1h-2zm12 0h1v1h-1zm7 0h1v1h-1zm3 0h1v1h-1zm3 0h1v1h-1zm6 0h1v1h-1zm3 0h1v1h-1zm6 0h1v1h-1zm6 0h1v1h-1zm7 0h1v1h-1zm15 0h1v1h-1zm12 0h1v1h-1zm4 0h1v1h-1zm8 0h1v1h-1zm7 0h2v1h-2zm12 0h1v1h-1zm18 0h1v1h-1zm10 0h2v1h-2zm6 0h1v1h-1zm8 0h1v1h-1zm16 0h1v1h-1zm2 0h1v1h-1zm5 0h1v1h-1zm17 0h1v1h-1zm7 0h1v1h-1zm91 0h1v1h-1zm-518 1h1v1h-1zm2 0h1v1h-1zm4 0h1v1h-1zm2 0h1v1h-1zm3 0h1v1h-1zm3 0h2v1h-2zm26 0h1v1h-1zm8 0h1v1h-1zm10 0h1v1h-1zm12 0h1v1h-1zm17 0h2v1h-2zm3 0h1v1h-1zm7 0h1v1h-1zm3 0h1v1h-1zm6 0h1v1h-1zm77 0h1v1h-1zm5 0h2v1h-2zm13 0h1v1h-1zm8 0h1v1h-1zm13 0h1v1h-1zm2 0h1v1h-1zm13 0h1v1h-1zm8 0h1v1h-1zm11 0h2v1h-2zm11 0h1v1h-1zm5 0h2v1h-2zm8 0h1v1h-1zm7 0h2v1h-2zm10 0h2v1h-2zm11 0h1v1h-1zm2 0h1v1h-1zm2 0h1v1h-1zm3 0h1v1h-1zm11 0h1v1h-1zm22 0h1v1h-1zm4 0h1v1h-1zm5 0h1v1h-1zm2 0h1v1h-1zm3 0h1v1h-1zm23 0h1v1h-1zm7 0h1v1h-1zm16 0h1v1h-1zm3 0h2v1h-2zm16 0h1v1h-1zm8 0h1v1h-1zm5 0h1v1h-1zm2 0h1v1h-1zm3 0h1v1h-1zm11 0h1v1h-1zm4 0h1v1h-1zm5 0h1v1h-1zm2 0h1v1h-1zm-368 1h1v1h-1zm74 0h1v1h-1zm5 0h1v1h-1zm6 0h1v1h-1zm16 0h2v1h-2zm5 0h1v1h-1zm2 0h1v1h-1zm7 0h1v1h-1zm4 0h1v1h-1zm7 0h1v1h-1zm12 0h1v1h-1zm6 0h1v1h-1zm4 0h1v1h-1zm6 0h1v1h-1zm22 0h1v1h-1zm4 0h1v1h-1zm17 0h1v1h-1zm10 0h1v1h-1zm19 0h2v1h-2zm4 0h1v1h-1zm7 0h1v1h-1zm3 0h1v1h-1zm7 0h1v1h-1zm5 0h1v1h-1zm10 0h1v1h-1zm7 0h1v1h-1zm9 0h1v1h-1zm5 0h2v1h-2zm4 0h1v1h-1zm11 0h1v1h-1zm9 0h1v1h-1zm5 0h2v1h-2zm8 0h1v1h-1zm5 0h1v1h-1zm11 0h1v1h-1zm5 0h1v1h-1zm8 0h1v1h-1zm4 0h1v1h-1zm2 0h1v1h-1zm9 0h1v1h-1zm4 0h1v1h-1zm3 0h1v1h-1zm2 0h2v1h-2zm3 0h1v1h-1zm4 0h1v1h-1zm7 0h1v1h-1zm8 0h1v1h-1zm14 0h1v1h-1zm4 0h1v1h-1zm-221 1h2v1h-2zm4 0h1v1h-1zm3 0h1v1h-1zm2 0h1v1h-1zm4 0h1v1h-1zm2 0h1v1h-1zm10 0h2v1h-2zm6 0h1v1h-1zm5 0h1v1h-1zm5 0h1v1h-1zm4 0h1v1h-1zm10 0h1v1h-1zm11 0h1v1h-1zm8 0h2v1h-2zm5 0h1v1h-1zm11 0h1v1h-1zm7 0h1v1h-1zm6 0h1v1h-1zm6 0h1v1h-1zm12 0h1v1h-1zm8 0h1v1h-1zm3 0h1v1h-1zm4 0h1v1h-1zm5 0h1v1h-1zm4 0h1v1h-1zm12 0h1v1h-1zm6 0h1v1h-1zm5 0h1v1h-1zm7 0h1v1h-1zm10 0h1v1h-1zm8 0h1v1h-1zm3 0h1v1h-1zm7 0h1v1h-1zm19 0h2v1h-2zm3 0h1v1h-1zm-77 1h1v1h-1zm2 0h1v1h-1zm5 0h2v1h-2zm5 0h1v1h-1zm6 0h1v1h-1zm4 0h4v1h-4zm14 0h1v1h-1zm6 0h1v1h-1zm14 0h2v1h-2zm13 0h1v1h-1zm-36 1h1v1h-1zm2 0h1v1h-1zm2 0h3v1h-3zm11 0h2v1h-2z" fill="#10b8d0"/>
<path d="M725 465h1v1h-1zm-1 1h1v1h-1zm-573 1h1v1h-1zm5 0h1v1h-1zm11 0h2v1h-2zm6 0h1v1h-1zm-21 1h2v1h-2zm12 0h1v1h-1zm15 0h1v1h-1zm28 0h1v1h-1zm27 0h2v1h-2zm15 0h2v1h-2zm24 0h1v1h-1zm6 0h1v1h-1zm7 0h1v1h-1zm4 0h1v1h-1zm3 0h1v1h-1zm-142 1h1v1h-1zm20 0h1v1h-1zm26 0h1v1h-1zm11 0h1v1h-1zm5 0h2v1h-2zm11 0h1v1h-1zm11 0h1v1h-1zm2 0h1v1h-1zm2 0h1v1h-1zm10 0h1v1h-1zm4 0h1v1h-1zm19 0h1v1h-1zm17 0h1v1h-1zm3 0h1v1h-1zm12 0h1v1h-1zm85 0h1v1h-1zm7 0h1v1h-1zm32 0h1v1h-1zm9 0h1v1h-1zm2 0h2v1h-2zm3 0h1v1h-1zm11 0h1v1h-1zm23 0h1v1h-1zm6 0h1v1h-1zm-313 1h1v1h-1zm28 0h1v1h-1zm20 0h1v1h-1zm11 0h1v1h-1zm5 0h1v1h-1zm7 0h1v1h-1zm6 0h1v1h-1zm62 0h1v1h-1zm2 0h1v1h-1zm77 0h1v1h-1zm19 0h1v1h-1zm4 0h3v1h-3zm12 0h1v1h-1zm5 0h1v1h-1zm19 0h1v1h-1zm7 0h1v1h-1zm8 0h1v1h-1zm9 0h1v1h-1zm3 0h2v1h-2zm15 0h1v1h-1zm6 0h1v1h-1zm6 0h1v1h-1zm9 0h1v1h-1zm2 0h1v1h-1zm2 0h1v1h-1zm29 0h2v1h-2zm5 0h1v1h-1zm6 0h1v1h-1zm8 0h1v1h-1zm2 0h1v1h-1zm44 0h1v1h-1zm4 0h1v1h-1zm-453 1h1v1h-1zm4 0h1v1h-1zm16 0h1v1h-1zm2 0h1v1h-1zm38 0h1v1h-1zm9 0h1v1h-1zm17 0h1v1h-1zm8 0h1v1h-1zm8 0h1v1h-1zm5 0h1v1h-1zm21 0h1v1h-1zm6 0h1v1h-1zm17 0h1v1h-1zm81 0h1v1h-1zm27 0h1v1h-1zm7 0h1v1h-1zm12 0h1v1h-1zm2 0h1v1h-1zm17 0h1v1h-1zm10 0h1v1h-1zm14 0h1v1h-1zm15 0h1v1h-1zm10 0h1v1h-1zm4 0h1v1h-1zm11 0h1v1h-1zm9 0h1v1h-1zm4 0h1v1h-1zm4 0h1v1h-1zm15 0h1v1h-1zm20 0h1v1h-1zm4 0h1v1h-1zm7 0h1v1h-1zm15 0h1v1h-1zm2 0h1v1h-1zm19 0h1v1h-1zm12 0h1v1h-1zm21 0h2v1h-2zm3 0h1v1h-1zm62 0h1v1h-1zm4 0h1v1h-1zm-555 1h2v1h-2zm12 0h1v1h-1zm36 0h1v1h-1zm8 0h1v1h-1zm5 0h1v1h-1zm15 0h1v1h-1zm41 0h1v1h-1zm2 0h1v1h-1zm2 0h2v1h-2zm18 0h1v1h-1zm71 0h1v1h-1zm2 0h1v1h-1zm2 0h2v1h-2zm9 0h2v1h-2zm47 0h1v1h-1zm37 0h1v1h-1zm4 0h1v1h-1zm4 0h1v1h-1zm14 0h1v1h-1zm21 0h1v1h-1zm16 0h1v1h-1zm13 0h1v1h-1zm18 0h1v1h-1zm25 0h1v1h-1zm14 0h1v1h-1zm6 0h1v1h-1zm6 0h1v1h-1zm37 0h1v1h-1zm8 0h2v1h-2zm3 0h1v1h-1zm9 0h1v1h-1zm8 0h1v1h-1zm3 0h1v1h-1zm20 0h1v1h-1zm9 0h2v1h-2zm-463 1h1v1h-1zm31 0h1v1h-1zm5 0h1v1h-1zm11 0h1v1h-1zm16 0h1v1h-1zm81 0h1v1h-1zm11 0h1v1h-1zm6 0h2v1h-2zm14 0h1v1h-1zm2 0h1v1h-1zm6 0h1v1h-1zm7 0h1v1h-1zm4 0h1v1h-1zm9 0h1v1h-1zm3 0h1v1h-1zm9 0h1v1h-1zm29 0h1v1h-1zm30 0h1v1h-1zm10 0h1v1h-1zm15 0h1v1h-1zm18 0h1v1h-1zm11 0h1v1h-1zm5 0h1v1h-1zm26 0h1v1h-1zm13 0h1v1h-1zm6 0h2v1h-2zm4 0h1v1h-1zm12 0h1v1h-1zm6 0h1v1h-1zm45 0h1v1h-1zm5 0h1v1h-1zm12 0h1v1h-1zm10 0h1v1h-1zm-333 1h1v1h-1zm11 0h1v1h-1zm4 0h1v1h-1zm19 0h1v1h-1zm45 0h1v1h-1zm8 0h2v1h-2zm7 0h1v1h-1zm2 0h1v1h-1zm19 0h1v1h-1zm18 0h1v1h-1zm21 0h2v1h-2zm6 0h1v1h-1zm25 0h1v1h-1zm40 0h1v1h-1zm82 0h1v1h-1zm2 0h1v1h-1zm18 0h1v1h-1zm-214 1h1v1h-1zm16 0h1v1h-1zm4 0h1v1h-1zm16 0h1v1h-1zm20 0h1v1h-1zm25 0h1v1h-1zm13 0h1v1h-1zm3 0h1v1h-1zm16 0h1v1h-1zm27 0h1v1h-1zm32 0h1v1h-1zm31 0h1v1h-1zm-62 1h1v1h-1zm6 0h1v1h-1zm32 0h1v1h-1zm2 0h1v1h-1zm5 0h1v1h-1zm24 0h1v1h-1zm-36 1h1v1h-1zm5 0h1v1h-1zm23 0h1v1h-1z" fill="#e0e000"/>
<path d="M725 467h1v1h-1zm-1 1h1v1h-1zm-571 1h1v1h-1zm16 0h1v1h-1zm24 0h1v1h-1zm-42 1h1v1h-1zm11 0h1v1h-1zm14 0h3v1h-3zm15 0h1v1h-1zm7 0h1v1h-1zm6 0h1v1h-1zm9 0h1v1h-1zm9 0h1v1h-1zm15 0h1v1h-1zm14 0h1v1h-1zm13 0h1v1h-1zm10 0h1v1h-1zm8 0h1v1h-1zm-125 1h1v1h-1zm3 0h1v1h-1zm5 0h1v1h-1zm2 0h2v1h-2zm4 0h1v1h-1zm6 0h1v1h-1zm19 0h1v1h-1zm17 0h1v1h-1zm29 0h1v1h-1zm20 0h1v1h-1zm10 0h1v1h-1zm3 0h1v1h-1zm3 0h1v1h-1zm4 0h1v1h-1zm21 0h1v1h-1zm7 0h1v1h-1zm75 0h1v1h-1zm43 0h1v1h-1zm2 0h1v1h-1zm5 0h1v1h-1zm10 0h1v1h-1zm29 0h1v1h-1zm-310 1h1v1h-1zm3 0h2v1h-2zm6 0h1v1h-1zm3 0h1v1h-1zm19 0h1v1h-1zm24 0h1v1h-1zm11 0h1v1h-1zm4 0h1v1h-1zm9 0h1v1h-1zm2 0h1v1h-1zm3 0h1v1h-1zm2 0h1v1h-1zm12 0h1v1h-1zm3 0h1v1h-1zm3 0h1v1h-1zm2 0h1v1h-1zm11 0h1v1h-1zm2 0h1v1h-1zm11 0h1v1h-1zm7 0h2v1h-2zm7 0h1v1h-1zm85 0h1v1h-1zm6 0h1v1h-1zm7 0h1v1h-1zm12 0h1v1h-1zm20 0h1v1h-1zm3 0h1v1h-1zm28 0h1v1h-1zm55 0h1v1h-1zm11 0h1v1h-1zm24 0h1v1h-1zm9 0h1v1h-1zm20 0h1v1h-1zm9 0h1v1h-1zm3 0h1v1h-1zm5 0h2v1h-2zm6 0h1v1h-1zm-359 1h1v1h-1zm50 0h1v1h-1zm77 0h1v1h-1zm9 0h1v1h-1zm7 0h1v1h-1zm50 0h1v1h-1zm2 0h1v1h-1zm22 0h1v1h-1zm17 0h2v1h-2zm15 0h1v1h-1zm17 0h1v1h-1zm5 0h2v1h-2zm14 0h1v1h-1zm5 0h1v1h-1zm6 0h1v1h-1zm24 0h1v1h-1zm32 0h1v1h-1zm7 0h1v1h-1zm56 0h1v1h-1zm49 0h1v1h-1zm4 0h1v1h-1zm-325 1h1v1h-1zm5 0h1v1h-1zm8 0h1v1h-1zm15 0h1v1h-1zm39 0h1v1h-1zm19 0h1v1h-1zm7 0h1v1h-1zm5 0h1v1h-1zm20 0h1v1h-1zm9 0h1v1h-1zm5 0h1v1h-1zm30 0h1v1h-1zm17 0h1v1h-1zm18 0h1v1h-1zm6 0h1v1h-1zm2 0h2v1h-2zm12 0h1v1h-1zm14 0h1v1h-1zm5 0h1v1h-1zm2 0h1v1h-1zm3 0h1v1h-1zm12 0h1v1h-1zm22 0h1v1h-1zm6 0h1v1h-1zm8 0h1v1h-1zm3 0h1v1h-1zm23 0h1v1h-1zm-214 1h2v1h-2zm33 0h1v1h-1zm8 0h1v1h-1zm4 0h1v1h-1zm20 0h1v1h-1zm16 0h1v1h-1zm8 0h1v1h-1zm9 0h2v1h-2zm6 0h1v1h-1zm6 0h1v1h-1zm13 0h1v1h-1zm40 0h1v1h-1zm15 0h1v1h-1zm2 0h1v1h-1zm36 0h1v1h-1zm-75 1h1v1h-1zm5 0h1v1h-1zm12 0h1v1h-1zm21 0h1v1h-1zm22 0h1v1h-1zm-21 1h2v1h-2zm19 0h1v1h-1z" fill="#20d840"/>
<path d="M725 466h1v1h-1zm0 2h1v1h-1zm-552 1h1v1h-1zm6 0h1v1h-1zm9 0h2v1h-2zm535 0h1v1h-1zm-553 1h1v1h-1zm26 0h1v1h-1zm13 0h1v1h-1zm5 0h1v1h-1zm17 0h1v1h-1zm11 0h1v1h-1zm15 0h1v1h-1zm13 0h1v1h-1zm2 0h1v1h-1zm20 0h1v1h-1zm-141 1h1v1h-1zm13 0h1v1h-1zm24 0h1v1h-1zm3 0h1v1h-1zm39 0h1v1h-1zm5 0h1v1h-1zm20 0h2v1h-2zm6 0h1v1h-1zm6 0h1v1h-1zm3 0h1v1h-1zm6 0h1v1h-1zm9 0h1v1h-1zm20 0h1v1h-1zm2 0h1v1h-1zm76 0h1v1h-1zm9 0h1v1h-1zm10 0h1v1h-1zm5 0h1v1h-1zm5 0h1v1h-1zm41 0h1v1h-1zm17 0h1v1h-1zm-301 1h1v1h-1zm6 0h1v1h-1zm6 0h1v1h-1zm8 0h1v1h-1zm17 0h1v1h-1zm4 0h1v1h-1zm25 0h1v1h-1zm2 0h1v1h-1zm7 0h1v1h-1zm9 0h1v1h-1zm20 0h1v1h-1zm3 0h1v1h-1zm168 0h1v1h-1zm5 0h1v1h-1zm21 0h1v1h-1zm13 0h1v1h-1zm3 0h1v1h-1zm36 0h1v1h-1zm5 0h1v1h-1zm2 0h2v1h-2zm4 0h1v1h-1zm3 0h1v1h-1zm4 0h1v1h-1zm5 0h1v1h-1zm6 0h1v1h-1zm24 0h1v1h-1zm6 0h1v1h-1zm8 0h1v1h-1zm-382 1h1v1h-1zm38 0h2v1h-2zm27 0h1v1h-1zm9 0h1v1h-1zm9 0h1v1h-1zm10 0h2v1h-2zm78 0h1v1h-1zm4 0h1v1h-1zm5 0h1v1h-1zm7 0h1v1h-1zm25 0h1v1h-1zm14 0h2v1h-2zm33 0h1v1h-1zm8 0h1v1h-1zm11 0h1v1h-1zm18 0h1v1h-1zm5 0h2v1h-2zm21 0h1v1h-1zm4 0h1v1h-1zm16 0h1v1h-1zm14 0h1v1h-1zm3 0h1v1h-1zm13 0h1v1h-1zm8 0h1v1h-1zm6 0h1v1h-1zm31 0h1v1h-1zm31 0h1v1h-1zm-349 1h1v1h-1zm3 0h1v1h-1zm70 0h1v1h-1zm5 0h2v1h-2zm66 0h1v1h-1zm20 0h1v1h-1zm47 0h1v1h-1zm6 0h1v1h-1zm25 0h1v1h-1zm24 0h1v1h-1zm10 0h1v1h-1zm24 0h1v1h-1zm11 0h1v1h-1zm6 0h1v1h-1zm9 0h1v1h-1zm2 0h1v1h-1zm45 0h2v1h-2zm10 0h1v1h-1zm32 0h1v1h-1zm-220 1h1v1h-1zm9 0h1v1h-1zm21 0h1v1h-1zm15 0h1v1h-1zm5 0h2v1h-2zm9 0h1v1h-1zm22 0h1v1h-1zm16 0h1v1h-1zm17 0h2v1h-2zm22 0h1v1h-1zm9 0h1v1h-1zm3 0h1v1h-1zm5 0h1v1h-1zm6 0h1v1h-1zm15 0h1v1h-1zm28 0h1v1h-1zm7 0h1v1h-1zm-556 1h1v1h-1zm2 0h1v1h-1zm6 0h1v1h-1zm17 0h1v1h-1zm10 0h1v1h-1zm5 0h1v1h-1zm3 0h1v1h-1zm454 0h1v1h-1zm6 0h1v1h-1zm9 0h2v1h-2zm6 0h1v1h-1zm9 0h1v1h-1zm-514 1h1v1h-1zm35 0h1v1h-1zm13 0h1v1h-1zm6 0h1v1h-1zm2 0h1v1h-1zm12 0h1v1h-1zm13 0h3v1h-3zm21 0h1v1h-1zm16 0h1v1h-1zm7 0h1v1h-1zm7 0h1v1h-1zm376 0h1v1h-1zm5 0h1v1h-1zm3 0h1v1h-1zm25 0h1v1h-1zm-557 1h1v1h-1zm18 0h1v1h-1zm8 0h1v1h-1zm2 0h1v1h-1zm6 0h2v1h-2zm5 0h1v1h-1zm14 0h1v1h-1zm42 0h1v1h-1zm4 0h1v1h-1zm9 0h1v1h-1zm20 0h1v1h-1zm30 0h1v1h-1zm76 0h1v1h-1zm2 0h1v1h-1zm9 0h1v1h-1zm23 0h2v1h-2zm21 0h3v1h-3zm4 0h1v1h-1zm11 0h2v1h-2zm6 0h1v1h-1zm3 0h1v1h-1zm10 0h1v1h-1zm248 0h1v1h-1zm-514 1h1v1h-1zm4 0h1v1h-1zm2 0h1v1h-1zm9 0h1v1h-1zm3 0h1v1h-1zm12 0h1v1h-1zm19 0h1v1h-1zm8 0h1v1h-1zm5 0h1v1h-1zm3 0h1v1h-1zm2 0h1v1h-1zm2 0h1v1h-1zm3 0h2v1h-2zm3 0h1v1h-1zm13 0h1v1h-1zm2 0h2v1h-2zm77 0h1v1h-1zm13 0h1v1h-1zm4 0h1v1h-1zm6 0h1v1h-1zm2 0h1v1h-1zm8 0h1v1h-1zm5 0h1v1h-1zm8 0h1v1h-1zm6 0h1v1h-1zm12 0h1v1h-1zm18 0h1v1h-1zm3 0h1v1h-1zm2 0h1v1h-1zm12 0h1v1h-1zm2 0h1v1h-1zm12 0h1v1h-1zm27 0h2v1h-2zm14 0h1v1h-1zm56 0h1v1h-1zm2 0h1v1h-1zm7 0h1v1h-1zm5 0h1v1h-1zm3 0h2v1h-2zm9 0h1v1h-1zm10 0h1v1h-1zm10 0h1v1h-1zm3 0h1v1h-1zm85 0h2v1h-2zm-418 1h2v1h-2zm108 0h1v1h-1zm4 0h1v1h-1zm5 0h2v1h-2zm11 0h1v1h-1zm2 0h1v1h-1zm14 0h1v1h-1zm8 0h1v1h-1zm12 0h1v1h-1zm12 0h1v1h-1zm12 0h1v1h-1zm39 0h1v1h-1zm10 0h1v1h-1zm6 0h1v1h-1zm8 0h1v1h-1zm6 0h2v1h-2zm15 0h1v1h-1zm37 0h1v1h-1zm4 0h1v1h-1zm11 0h1v1h-1zm10 0h1v1h-1zm3 0h2v1h-2zm3 0h1v1h-1zm2 0h1v1h-1zm8 0h1v1h-1zm2 0h1v1h-1zm3 0h1v1h-1zm61 0h1v1h-1zm-210 1h1v1h-1zm11 0h1v1h-1zm16 0h1v1h-1zm7 0h1v1h-1zm26 0h1v1h-1zm14 0h1v1h-1zm36 0h1v1h-1zm6 0h1v1h-1zm5 0h1v1h-1zm17 0h1v1h-1zm2 0h1v1h-1zm8 0h1v1h-1zm5 0h1v1h-1zm7 0h1v1h-1zm5 0h1v1h-1zm7 0h1v1h-1zm6 0h1v1h-1zm7 0h1v1h-1zm22 0h1v1h-1zm-71 1h1v1h-1zm20 0h1v1h-1zm3 0h1v1h-1zm16 0h1v1h-1zm6 0h1v1h-1zm2 0h1v1h-1zm5 0h1v1h-1zm12 0h1v1h-1zm6 0h1v1h-1zm-40 1h1v1h-1zm8 0h1v1h-1zm16 0h1v1h-1zm3 0h1v1h-1z" fill="#a8e000"/>
<path d="M164 473h1v1h-1zm8 0h2v1h-2zm21 0h1v1h-1zm5 0h1v1h-1zm-47 1h1v1h-1zm2 0h1v1h-1zm6 0h1v1h-1zm23 0h2v1h-2zm7 0h1v1h-1zm6 0h1v1h-1zm14 0h1v1h-1zm11 0h1v1h-1zm4 0h1v1h-1zm3 0h1v1h-1zm6 0h1v1h-1zm11 0h1v1h-1zm11 0h1v1h-1zm8 0h1v1h-1zm2 0h1v1h-1zm20 0h2v1h-2zm5 0h2v1h-2zm3 0h1v1h-1zm5 0h1v1h-1zm-144 1h1v1h-1zm6 0h1v1h-1zm5 0h1v1h-1zm2 0h1v1h-1zm5 0h1v1h-1zm3 0h1v1h-1zm18 0h1v1h-1zm19 0h1v1h-1zm3 0h1v1h-1zm9 0h1v1h-1zm12 0h1v1h-1zm14 0h1v1h-1zm6 0h1v1h-1zm3 0h1v1h-1zm17 0h1v1h-1zm10 0h2v1h-2zm105 0h1v1h-1zm5 0h2v1h-2zm26 0h2v1h-2zm20 0h1v1h-1zm7 0h1v1h-1zm29 0h1v1h-1zm-277 1h1v1h-1zm4 0h1v1h-1zm12 0h1v1h-1zm4 0h1v1h-1zm2 0h2v1h-2zm3 0h1v1h-1zm9 0h1v1h-1zm14 0h1v1h-1zm6 0h1v1h-1zm6 0h1v1h-1zm2 0h1v1h-1zm3 0h1v1h-1zm8 0h1v1h-1zm7 0h1v1h-1zm12 0h1v1h-1zm16 0h1v1h-1zm73 0h1v1h-1zm10 0h1v1h-1zm2 0h2v1h-2zm34 0h1v1h-1zm2 0h1v1h-1zm12 0h1v1h-1zm7 0h2v1h-2zm15 0h1v1h-1zm2 0h1v1h-1zm30 0h1v1h-1zm3 0h1v1h-1zm4 0h1v1h-1zm42 0h1v1h-1zm18 0h1v1h-1zm8 0h1v1h-1zm29 0h1v1h-1zm121 0h1v1h-1zm4 0h1v1h-1zm-420 1h1v1h-1zm84 0h1v1h-1zm13 0h1v1h-1zm10 0h1v1h-1zm8 0h1v1h-1zm9 0h1v1h-1zm7 0h1v1h-1zm18 0h2v1h-2zm3 0h1v1h-1zm16 0h1v1h-1zm13 0h1v1h-1zm2 0h2v1h-2zm5 0h1v1h-1zm7 0h1v1h-1zm2 0h1v1h-1zm2 0h1v1h-1zm9 0h1v1h-1zm33 0h1v1h-1zm21 0h1v1h-1zm48 0h2v1h-2zm36 0h1v1h-1zm6 0h1v1h-1zm6 0h1v1h-1zm52 0h1v1h-1zm-214 1h1v1h-1zm10 0h1v1h-1zm13 0h1v1h-1zm15 0h1v1h-1zm14 0h1v1h-1zm14 0h1v1h-1zm3 0h1v1h-1zm11 0h1v1h-1zm32 0h2v1h-2zm24 0h1v1h-1zm10 0h1v1h-1zm4 0h1v1h-1zm10 0h1v1h-1zm6 0h1v1h-1zm4 0h2v1h-2zm7 0h1v1h-1zm20 0h1v1h-1zm21 0h1v1h-1zm-568 1h1v1h-1zm7 0h1v1h-1zm19 0h1v1h-1zm9 0h1v1h-1zm6 0h1v1h-1zm6 0h1v1h-1zm445 0h1v1h-1zm5 0h2v1h-2zm8 0h1v1h-1zm4 0h2v1h-2zm3 0h1v1h-1zm13 0h1v1h-1zm4 0h1v1h-1zm23 0h1v1h-1zm4 0h1v1h-1zm-545 1h1v1h-1zm9 0h1v1h-1zm6 0h1v1h-1zm4 0h1v1h-1zm3 0h2v1h-2zm4 0h1v1h-1zm9 0h1v1h-1zm3 0h1v1h-1zm2 0h1v1h-1zm17 0h1v1h-1zm19 0h1v1h-1zm15 0h1v1h-1zm3 0h1v1h-1zm10 0h1v1h-1zm5 0h1v1h-1zm14 0h1v1h-1zm8 0h1v1h-1zm7 0h1v1h-1zm373 0h1v1h-1zm6 0h1v1h-1zm16 0h1v1h-1zm9 0h2v1h-2zm5 0h1v1h-1zm-556 1h1v1h-1zm18 0h1v1h-1zm18 0h1v1h-1zm6 0h1v1h-1zm25 0h1v1h-1zm16 0h1v1h-1zm11 0h1v1h-1zm7 0h1v1h-1zm5 0h1v1h-1zm4 0h1v1h-1zm5 0h1v1h-1zm16 0h1v1h-1zm3 0h1v1h-1zm2 0h1v1h-1zm3 0h1v1h-1zm11 0h1v1h-1zm81 0h1v1h-1zm6 0h3v1h-3zm48 0h1v1h-1zm8 0h1v1h-1zm14 0h1v1h-1zm22 0h2v1h-2zm6 0h1v1h-1zm-281 1h1v1h-1zm9 0h1v1h-1zm11 0h1v1h-1zm8 0h1v1h-1zm2 0h1v1h-1zm13 0h1v1h-1zm10 0h1v1h-1zm9 0h1v1h-1zm2 0h3v1h-3zm8 0h1v1h-1zm13 0h1v1h-1zm3 0h1v1h-1zm3 0h1v1h-1zm83 0h1v1h-1zm16 0h1v1h-1zm4 0h1v1h-1zm6 0h1v1h-1zm17 0h1v1h-1zm9 0h2v1h-2zm3 0h1v1h-1zm4 0h1v1h-1zm10 0h1v1h-1zm23 0h1v1h-1zm4 0h2v1h-2zm11 0h1v1h-1zm4 0h1v1h-1zm10 0h1v1h-1zm9 0h1v1h-1zm31 0h1v1h-1zm9 0h1v1h-1zm32 0h1v1h-1zm2 0h1v1h-1zm4 0h1v1h-1zm9 0h1v1h-1zm5 0h1v1h-1zm10 0h1v1h-1zm-312 1h1v1h-1zm74 0h1v1h-1zm4 0h1v1h-1zm12 0h1v1h-1zm5 0h1v1h-1zm14 0h1v1h-1zm3 0h1v1h-1zm4 0h1v1h-1zm16 0h1v1h-1zm22 0h2v1h-2zm19 0h1v1h-1zm12 0h1v1h-1zm13 0h1v1h-1zm47 0h2v1h-2zm20 0h1v1h-1zm2 0h1v1h-1zm39 0h1v1h-1zm6 0h2v1h-2zm9 0h1v1h-1zm6 0h2v1h-2zm3 0h1v1h-1zm3 0h2v1h-2zm8 0h1v1h-1zm2 0h1v1h-1zm12 0h1v1h-1zm11 0h1v1h-1zm50 0h1v1h-1zm-225 1h1v1h-1zm6 0h1v1h-1zm24 0h1v1h-1zm6 0h1v1h-1zm23 0h2v1h-2zm39 0h1v1h-1zm8 0h1v1h-1zm5 0h1v1h-1zm12 0h1v1h-1zm3 0h1v1h-1zm21 0h1v1h-1zm9 0h1v1h-1zm19 0h1v1h-1zm3 0h1v1h-1zm21 0h1v1h-1zm8 0h1v1h-1zm2 0h1v1h-1zm6 0h1v1h-1zm12 0h1v1h-1zm-76 1h4v1h-4zm9 0h1v1h-1zm15 0h1v1h-1zm28 0h1v1h-1zm7 0h1v1h-1zm13 0h1v1h-1zm-37 1h1v1h-1zm13 0h1v1h-1zm7 0h1v1h-1zm13 0h1v1h-1zm3 0h1v1h-1z" fill="#e89000"/>
<path d="M157 473h1v1h-1zm18 0h1v1h-1zm10 0h2v1h-2zm538 0h1v1h-1zm-567 1h1v1h-1zm9 0h1v1h-1zm4 0h1v1h-1zm8 0h1v1h-1zm7 0h1v1h-1zm9 0h1v1h-1zm8 0h1v1h-1zm44 0h1v1h-1zm7 0h1v1h-1zm6 0h1v1h-1zm6 0h1v1h-1zm8 0h1v1h-1zm8 0h1v1h-1zm8 0h1v1h-1zm-137 1h1v1h-1zm10 0h1v1h-1zm40 0h1v1h-1zm8 0h1v1h-1zm16 0h1v1h-1zm3 0h1v1h-1zm3 0h1v1h-1zm17 0h1v1h-1zm19 0h1v1h-1zm7 0h1v1h-1zm22 0h1v1h-1zm83 0h1v1h-1zm15 0h2v1h-2zm7 0h1v1h-1zm15 0h2v1h-2zm41 0h1v1h-1zm4 0h1v1h-1zm3 0h1v1h-1zm2 0h1v1h-1zm14 0h1v1h-1zm-268 1h1v1h-1zm28 0h1v1h-1zm10 0h2v1h-2zm12 0h1v1h-1zm2 0h1v1h-1zm6 0h3v1h-3zm14 0h1v1h-1zm11 0h1v1h-1zm8 0h1v1h-1zm72 0h1v1h-1zm3 0h1v1h-1zm6 0h1v1h-1zm4 0h1v1h-1zm20 0h2v1h-2zm35 0h2v1h-2zm18 0h1v1h-1zm12 0h1v1h-1zm7 0h1v1h-1zm5 0h1v1h-1zm8 0h1v1h-1zm2 0h1v1h-1zm5 0h1v1h-1zm4 0h1v1h-1zm8 0h1v1h-1zm4 0h1v1h-1zm7 0h1v1h-1zm6 0h1v1h-1zm2 0h1v1h-1zm8 0h1v1h-1zm11 0h1v1h-1zm9 0h1v1h-1zm9 0h1v1h-1zm10 0h1v1h-1zm2 0h1v1h-1zm7 0h1v1h-1zm4 0h1v1h-1zm3 0h1v1h-1zm20 0h1v1h-1zm7 0h1v1h-1zm8 0h1v1h-1zm-326 1h1v1h-1zm72 0h1v1h-1zm10 0h1v1h-1zm5 0h1v1h-1zm2 0h2v1h-2zm3 0h1v1h-1zm8 0h1v1h-1zm2 0h1v1h-1zm3 0h1v1h-1zm3 0h1v1h-1zm10 0h1v1h-1zm18 0h1v1h-1zm3 0h1v1h-1zm41 0h1v1h-1zm15 0h1v1h-1zm14 0h1v1h-1zm17 0h1v1h-1zm6 0h1v1h-1zm5 0h1v1h-1zm17 0h1v1h-1zm7 0h1v1h-1zm10 0h1v1h-1zm12 0h1v1h-1zm2 0h1v1h-1zm5 0h1v1h-1zm12 0h1v1h-1zm3 0h1v1h-1zm10 0h1v1h-1zm6 0h1v1h-1zm7 0h1v1h-1zm89 0h2v1h-2zm-224 1h1v1h-1zm24 0h1v1h-1zm15 0h1v1h-1zm6 0h1v1h-1zm16 0h2v1h-2zm4 0h1v1h-1zm2 0h1v1h-1zm5 0h1v1h-1zm9 0h1v1h-1zm6 0h2v1h-2zm3 0h1v1h-1zm2 0h1v1h-1zm16 0h1v1h-1zm6 0h1v1h-1zm21 0h1v1h-1zm9 0h1v1h-1zm35 0h1v1h-1zm4 0h1v1h-1zm5 0h1v1h-1zm16 0h1v1h-1zm4 0h1v1h-1zm-63 1h1v1h-1zm29 0h1v1h-1zm8 0h1v1h-1zm6 0h1v1h-1zm9 0h1v1h-1zm3 0h1v1h-1zm6 0h1v1h-1zm9 0h2v1h-2zm6 0h1v1h-1zm-45 1h1v1h-1zm2 0h1v1h-1zm11 0h1v1h-1zm8 0h1v1h-1zm9 0h1v1h-1zm9 0h1v1h-1z" fill="#f0e000"/>
<path d="M725 474h1v1h-1zm-559 2h1v1h-1zm6 0h1v1h-1zm3 0h1v1h-1zm7 0h2v1h-2zm10 0h1v1h-1zm7 0h2v1h-2zm-15 1h1v1h-1zm8 0h1v1h-1zm12 0h1v1h-1zm12 0h1v1h-1zm8 0h1v1h-1zm3 0h1v1h-1zm4 0h1v1h-1zm47 0h1v1h-1zm8 0h2v1h-2zm7 0h1v1h-1zm-110 1h1v1h-1zm14 0h1v1h-1zm10 0h1v1h-1zm9 0h1v1h-1zm11 0h1v1h-1zm12 0h1v1h-1zm4 0h1v1h-1zm8 0h1v1h-1zm11 0h1v1h-1zm9 0h1v1h-1zm16 0h2v1h-2zm6 0h1v1h-1zm2 0h4v1h-4zm5 0h1v1h-1zm4 0h1v1h-1zm110 0h1v1h-1zm2 0h1v1h-1zm2 0h1v1h-1zm19 0h1v1h-1zm13 0h1v1h-1zm8 0h1v1h-1zm10 0h1v1h-1zm4 0h1v1h-1zm-271 1h1v1h-1zm17 0h1v1h-1zm7 0h1v1h-1zm3 0h1v1h-1zm9 0h1v1h-1zm5 0h1v1h-1zm6 0h1v1h-1zm2 0h1v1h-1zm5 0h1v1h-1zm31 0h1v1h-1zm113 0h1v1h-1zm4 0h1v1h-1zm19 0h1v1h-1zm13 0h1v1h-1zm2 0h1v1h-1zm11 0h2v1h-2zm10 0h1v1h-1zm8 0h1v1h-1zm23 0h2v1h-2zm29 0h1v1h-1zm14 0h1v1h-1zm25 0h1v1h-1zm5 0h1v1h-1zm8 0h1v1h-1zm2 0h1v1h-1zm8 0h1v1h-1zm9 0h1v1h-1zm16 0h1v1h-1zm12 0h1v1h-1zm8 0h1v1h-1zm8 0h1v1h-1zm-241 1h1v1h-1zm2 0h1v1h-1zm2 0h1v1h-1zm6 0h1v1h-1zm2 0h2v1h-2zm12 0h1v1h-1zm6 0h1v1h-1zm5 0h1v1h-1zm5 0h1v1h-1zm5 0h1v1h-1zm32 0h1v1h-1zm10 0h2v1h-2zm16 0h1v1h-1zm19 0h1v1h-1zm8 0h1v1h-1zm26 0h1v1h-1zm3 0h1v1h-1zm4 0h1v1h-1zm6 0h1v1h-1zm17 0h1v1h-1zm2 0h1v1h-1zm14 0h1v1h-1zm10 0h1v1h-1zm23 0h1v1h-1zm9 0h1v1h-1zm4 0h1v1h-1zm-148 1h1v1h-1zm11 0h1v1h-1zm11 0h1v1h-1zm32 0h3v1h-3zm6 0h1v1h-1zm3 0h1v1h-1zm6 0h1v1h-1zm3 0h1v1h-1zm21 0h1v1h-1zm9 0h1v1h-1zm8 0h1v1h-1zm28 0h1v1h-1zm3 0h1v1h-1zm13 0h1v1h-1zm2 0h1v1h-1zm11 0h1v1h-1zm3 0h1v1h-1zm12 0h1v1h-1zm9 0h1v1h-1zm32 0h1v1h-1zm-562 1h1v1h-1zm7 0h2v1h-2zm10 0h1v1h-1zm6 0h1v1h-1zm11 0h2v1h-2zm449 0h1v1h-1zm2 0h1v1h-1zm8 0h1v1h-1zm9 0h1v1h-1zm7 0h1v1h-1zm2 0h1v1h-1zm16 0h1v1h-1zm3 0h1v1h-1zm9 0h1v1h-1zm6 0h1v1h-1zm-520 1h1v1h-1zm10 0h1v1h-1zm4 0h2v1h-2zm7 0h1v1h-1zm4 0h2v1h-2zm3 0h1v1h-1zm20 0h1v1h-1zm34 0h1v1h-1zm10 0h1v1h-1zm5 0h1v1h-1zm2 0h1v1h-1zm5 0h1v1h-1zm408 0h1v1h-1zm6 0h1v1h-1zm2 0h1v1h-1zm15 0h1v1h-1zm-562 1h1v1h-1zm2 0h1v1h-1zm12 0h1v1h-1zm48 0h1v1h-1zm7 0h1v1h-1zm2 0h2v1h-2zm6 0h1v1h-1zm16 0h1v1h-1zm5 0h1v1h-1zm4 0h1v1h-1zm7 0h1v1h-1zm5 0h1v1h-1zm17 0h1v1h-1zm9 0h3v1h-3zm4 0h1v1h-1zm13 0h1v1h-1zm76 0h1v1h-1zm2 0h1v1h-1zm8 0h1v1h-1zm2 0h1v1h-1zm7 0h1v1h-1zm3 0h1v1h-1zm2 0h1v1h-1zm4 0h1v1h-1zm24 0h1v1h-1zm4 0h1v1h-1zm16 0h1v1h-1zm11 0h1v1h-1zm3 0h1v1h-1zm4 0h1v1h-1zm6 0h1v1h-1zm3 0h1v1h-1zm-278 1h2v1h-2zm10 0h1v1h-1zm29 0h2v1h-2zm7 0h1v1h-1zm6 0h2v1h-2zm12 0h1v1h-1zm2 0h1v1h-1zm2 0h2v1h-2zm3 0h1v1h-1zm11 0h1v1h-1zm2 0h1v1h-1zm2 0h1v1h-1zm18 0h1v1h-1zm68 0h1v1h-1zm2 0h1v1h-1zm4 0h2v1h-2zm3 0h1v1h-1zm3 0h1v1h-1zm3 0h1v1h-1zm2 0h1v1h-1zm11 0h1v1h-1zm5 0h1v1h-1zm4 0h1v1h-1zm3 0h1v1h-1zm2 0h2v1h-2zm11 0h1v1h-1zm6 0h1v1h-1zm2 0h1v1h-1zm13 0h2v1h-2zm10 0h2v1h-2zm18 0h1v1h-1zm2 0h1v1h-1zm13 0h2v1h-2zm12 0h1v1h-1zm12 0h1v1h-1zm4 0h1v1h-1zm4 0h1v1h-1zm3 0h1v1h-1zm12 0h1v1h-1zm5 0h1v1h-1zm4 0h1v1h-1zm6 0h1v1h-1zm19 0h1v1h-1zm3 0h1v1h-1zm14 0h1v1h-1zm4 0h1v1h-1zm24 0h1v1h-1zm8 0h2v1h-2zm-324 1h1v1h-1zm83 0h1v1h-1zm14 0h1v1h-1zm9 0h1v1h-1zm3 0h1v1h-1zm3 0h1v1h-1zm16 0h1v1h-1zm28 0h1v1h-1zm7 0h1v1h-1zm6 0h1v1h-1zm11 0h1v1h-1zm4 0h1v1h-1zm6 0h1v1h-1zm7 0h1v1h-1zm3 0h1v1h-1zm5 0h1v1h-1zm14 0h2v1h-2zm8 0h1v1h-1zm7 0h1v1h-1zm5 0h1v1h-1zm2 0h1v1h-1zm12 0h1v1h-1zm4 0h1v1h-1zm16 0h1v1h-1zm8 0h1v1h-1zm8 0h2v1h-2zm8 0h1v1h-1zm11 0h1v1h-1zm6 0h2v1h-2zm8 0h1v1h-1zm4 0h1v1h-1zm2 0h1v1h-1zm3 0h1v1h-1zm11 0h1v1h-1zm3 0h1v1h-1zm13 0h1v1h-1zm8 0h1v1h-1zm46 0h1v1h-1zm4 0h1v1h-1zm-225 1h1v1h-1zm15 0h1v1h-1zm2 0h3v1h-3zm5 0h1v1h-1zm11 0h2v1h-2zm3 0h1v1h-1zm5 0h2v1h-2zm3 0h1v1h-1zm7 0h1v1h-1zm5 0h2v1h-2zm7 0h1v1h-1zm33 0h1v1h-1zm6 0h2v1h-2zm3 0h1v1h-1zm5 0h1v1h-1zm2 0h1v1h-1zm2 0h1v1h-1zm12 0h1v1h-1zm3 0h1v1h-1zm21 0h2v1h-2zm6 0h1v1h-1zm2 0h1v1h-1zm21 0h1v1h-1zm4 0h1v1h-1zm7 0h1v1h-1zm3 0h1v1h-1zm11 0h2v1h-2zm11 0h1v1h-1zm3 0h1v1h-1zm6 0h1v1h-1zm-76 1h2v1h-2zm7 0h1v1h-1zm5 0h1v1h-1zm14 0h1v1h-1zm21 0h1v1h-1zm13 0h1v1h-1zm5 0h4v1h-4zm6 0h1v1h-1zm-39 1h1v1h-1zm2 0h1v1h-1zm11 0h1v1h-1zm4 0h1v1h-1zm2 0h2v1h-2zm6 0h1v1h-1zm3 0h1v1h-1zm5 0h1v1h-1zm2 0h1v1h-1z" fill="#d84000"/>
<path d="M725 459h1v1h-1zm-573 4h1v1h-1zm2 0h1v1h-1zm9 0h1v1h-1zm12 0h1v1h-1zm8 0h2v1h-2zm15 0h1v1h-1zm526 0h1v1h-1zm-571 1h1v1h-1zm3 0h3v1h-3zm5 0h2v1h-2zm15 0h1v1h-1zm9 0h1v1h-1zm9 0h2v1h-2zm6 0h1v1h-1zm16 0h1v1h-1zm5 0h1v1h-1zm5 0h1v1h-1zm5 0h2v1h-2zm6 0h1v1h-1zm21 0h1v1h-1zm11 0h1v1h-1zm8 0h1v1h-1zm7 0h1v1h-1zm2 0h1v1h-1zm2 0h1v1h-1zm5 0h1v1h-1zm2 0h2v1h-2zm-142 1h1v1h-1zm12 0h1v1h-1zm3 0h2v1h-2zm10 0h1v1h-1zm8 0h1v1h-1zm4 0h1v1h-1zm3 0h2v1h-2zm7 0h1v1h-1zm4 0h1v1h-1zm5 0h1v1h-1zm4 0h1v1h-1zm5 0h1v1h-1zm4 0h1v1h-1zm7 0h1v1h-1zm4 0h1v1h-1zm6 0h2v1h-2zm9 0h1v1h-1zm7 0h1v1h-1zm3 0h1v1h-1zm15 0h1v1h-1zm4 0h1v1h-1zm4 0h1v1h-1zm4 0h1v1h-1zm2 0h1v1h-1zm7 0h1v1h-1zm9 0h1v1h-1zm83 0h2v1h-2zm12 0h1v1h-1zm13 0h1v1h-1zm3 0h1v1h-1zm10 0h1v1h-1zm5 0h2v1h-2zm3 0h1v1h-1zm6 0h1v1h-1zm14 0h1v1h-1zm14 0h1v1h-1zm12 0h1v1h-1zm8 0h1v1h-1zm-329 1h1v1h-1zm10 0h1v1h-1zm3 0h1v1h-1zm5 0h1v1h-1zm4 0h1v1h-1zm4 0h1v1h-1zm19 0h1v1h-1zm8 0h1v1h-1zm2 0h2v1h-2zm4 0h1v1h-1zm15 0h2v1h-2zm16 0h1v1h-1zm6 0h1v1h-1zm5 0h1v1h-1zm5 0h1v1h-1zm9 0h1v1h-1zm6 0h1v1h-1zm12 0h1v1h-1zm3 0h1v1h-1zm14 0h1v1h-1zm3 0h1v1h-1zm66 0h1v1h-1zm2 0h1v1h-1zm6 0h1v1h-1zm12 0h2v1h-2zm3 0h1v1h-1zm13 0h1v1h-1zm7 0h2v1h-2zm9 0h1v1h-1zm5 0h1v1h-1zm4 0h1v1h-1zm4 0h1v1h-1zm9 0h1v1h-1zm6 0h1v1h-1zm12 0h1v1h-1zm16 0h1v1h-1zm2 0h1v1h-1zm5 0h2v1h-2zm6 0h1v1h-1zm2 0h1v1h-1zm3 0h1v1h-1zm3 0h1v1h-1zm4 0h1v1h-1zm7 0h3v1h-3zm10 0h1v1h-1zm2 0h1v1h-1zm3 0h1v1h-1zm21 0h1v1h-1zm12 0h1v1h-1zm12 0h1v1h-1zm12 0h1v1h-1zm2 0h2v1h-2zm14 0h1v1h-1zm3 0h1v1h-1zm4 0h1v1h-1zm7 0h2v1h-2zm6 0h1v1h-1zm5 0h1v1h-1zm2 0h1v1h-1zm89 0h1v1h-1zm2 0h1v1h-1zm-492 1h1v1h-1zm17 0h1v1h-1zm3 0h1v1h-1zm4 0h1v1h-1zm2 0h1v1h-1zm14 0h1v1h-1zm6 0h1v1h-1zm5 0h1v1h-1zm3 0h1v1h-1zm2 0h1v1h-1zm3 0h1v1h-1zm10 0h1v1h-1zm5 0h1v1h-1zm72 0h1v1h-1zm7 0h1v1h-1zm4 0h2v1h-2zm3 0h1v1h-1zm4 0h1v1h-1zm7 0h1v1h-1zm2 0h1v1h-1zm8 0h1v1h-1zm6 0h1v1h-1zm12 0h1v1h-1zm4 0h1v1h-1zm14 0h1v1h-1zm6 0h1v1h-1zm2 0h1v1h-1zm2 0h1v1h-1zm4 0h1v1h-1zm2 0h1v1h-1zm10 0h2v1h-2zm4 0h1v1h-1zm2 0h1v1h-1zm2 0h1v1h-1zm3 0h2v1h-2zm9 0h1v1h-1zm13 0h1v1h-1zm3 0h1v1h-1zm3 0h1v1h-1zm12 0h1v1h-1zm2 0h1v1h-1zm10 0h1v1h-1zm7 0h1v1h-1zm11 0h1v1h-1zm17 0h2v1h-2zm6 0h1v1h-1zm6 0h1v1h-1zm10 0h1v1h-1zm5 0h2v1h-2zm9 0h1v1h-1zm6 0h1v1h-1zm5 0h1v1h-1zm3 0h1v1h-1zm2 0h1v1h-1zm2 0h1v1h-1zm7 0h1v1h-1zm4 0h1v1h-1zm6 0h1v1h-1zm2 0h1v1h-1zm2 0h2v1h-2zm4 0h1v1h-1zm10 0h1v1h-1zm56 0h1v1h-1zm2 0h1v1h-1zm-414 1h1v1h-1zm6 0h1v1h-1zm65 0h1v1h-1zm2 0h2v1h-2zm8 0h1v1h-1zm3 0h1v1h-1zm3 0h1v1h-1zm2 0h1v1h-1zm4 0h1v1h-1zm3 0h1v1h-1zm2 0h1v1h-1zm17 0h1v1h-1zm5 0h1v1h-1zm11 0h1v1h-1zm13 0h1v1h-1zm31 0h2v1h-2zm9 0h1v1h-1zm6 0h1v1h-1zm7 0h1v1h-1zm3 0h1v1h-1zm7 0h1v1h-1zm4 0h1v1h-1zm12 0h1v1h-1zm9 0h2v1h-2zm17 0h1v1h-1zm3 0h1v1h-1zm5 0h1v1h-1zm13 0h1v1h-1zm10 0h1v1h-1zm3 0h2v1h-2zm7 0h1v1h-1zm8 0h1v1h-1zm16 0h1v1h-1zm6 0h1v1h-1zm6 0h1v1h-1zm10 0h2v1h-2zm18 0h1v1h-1zm4 0h1v1h-1zm10 0h1v1h-1zm24 0h1v1h-1zm7 0h1v1h-1zm2 0h1v1h-1zm3 0h2v1h-2zm13 0h1v1h-1zm-217 1h1v1h-1zm4 0h1v1h-1zm2 0h1v1h-1zm4 0h1v1h-1zm13 0h1v1h-1zm15 0h1v1h-1zm5 0h1v1h-1zm3 0h1v1h-1zm3 0h1v1h-1zm5 0h1v1h-1zm9 0h1v1h-1zm9 0h1v1h-1zm7 0h1v1h-1zm3 0h1v1h-1zm12 0h2v1h-2zm12 0h2v1h-2zm22 0h1v1h-1zm2 0h1v1h-1zm3 0h2v1h-2zm4 0h1v1h-1zm3 0h1v1h-1zm8 0h2v1h-2zm4 0h1v1h-1zm14 0h1v1h-1zm2 0h1v1h-1zm3 0h1v1h-1zm2 0h1v1h-1zm9 0h1v1h-1zm8 0h1v1h-1zm12 0h1v1h-1zm-61 1h1v1h-1zm12 0h1v1h-1zm4 0h1v1h-1zm7 0h2v1h-2zm8 0h1v1h-1zm14 0h1v1h-1zm2 0h1v1h-1zm13 0h1v1h-1zm7 0h3v1h-3zm-39 1h1v1h-1zm3 0h1v1h-1zm2 0h1v1h-1zm19 0h1v1h-1zm4 0h1v1h-1z" fill="#20d8a0"/>
<path d="M724 467h1v1h-1zm-564 2h2v1h-2zm5 0h1v1h-1zm13 0h1v1h-1zm17 0h1v1h-1zm-37 1h1v1h-1zm7 0h1v1h-1zm7 0h1v1h-1zm11 0h1v1h-1zm3 0h1v1h-1zm3 0h2v1h-2zm16 0h1v1h-1zm47 0h1v1h-1zm15 0h1v1h-1zm19 0h1v1h-1zm-134 1h1v1h-1zm11 0h1v1h-1zm18 0h1v1h-1zm3 0h1v1h-1zm31 0h1v1h-1zm8 0h1v1h-1zm3 0h1v1h-1zm13 0h1v1h-1zm4 0h1v1h-1zm34 0h1v1h-1zm13 0h1v1h-1zm99 0h1v1h-1zm36 0h1v1h-1zm7 0h1v1h-1zm2 0h1v1h-1zm23 0h1v1h-1zm2 0h1v1h-1zm8 0h1v1h-1zm13 0h1v1h-1zm9 0h1v1h-1zm-326 1h1v1h-1zm36 0h1v1h-1zm6 0h1v1h-1zm11 0h1v1h-1zm2 0h1v1h-1zm14 0h1v1h-1zm10 0h1v1h-1zm13 0h1v1h-1zm9 0h1v1h-1zm5 0h1v1h-1zm11 0h1v1h-1zm20 0h1v1h-1zm133 0h1v1h-1zm9 0h1v1h-1zm18 0h1v1h-1zm5 0h1v1h-1zm34 0h1v1h-1zm5 0h2v1h-2zm17 0h1v1h-1zm5 0h1v1h-1zm37 0h1v1h-1zm31 0h1v1h-1zm23 0h1v1h-1zm4 0h1v1h-1zm4 0h1v1h-1zm93 0h1v1h-1zm2 0h1v1h-1zm-512 1h2v1h-2zm15 0h1v1h-1zm6 0h1v1h-1zm40 0h1v1h-1zm5 0h1v1h-1zm13 0h1v1h-1zm2 0h1v1h-1zm92 0h1v1h-1zm45 0h1v1h-1zm16 0h1v1h-1zm2 0h1v1h-1zm12 0h1v1h-1zm2 0h1v1h-1zm9 0h2v1h-2zm21 0h1v1h-1zm18 0h1v1h-1zm50 0h1v1h-1zm3 0h1v1h-1zm27 0h1v1h-1zm10 0h1v1h-1zm27 0h1v1h-1zm11 0h1v1h-1zm19 0h1v1h-1zm5 0h1v1h-1zm4 0h1v1h-1zm7 0h1v1h-1zm-288 1h1v1h-1zm9 0h1v1h-1zm12 0h1v1h-1zm8 0h1v1h-1zm12 0h1v1h-1zm11 0h1v1h-1zm6 0h1v1h-1zm6 0h1v1h-1zm3 0h1v1h-1zm8 0h1v1h-1zm30 0h1v1h-1zm48 0h1v1h-1zm3 0h1v1h-1zm14 0h1v1h-1zm25 0h1v1h-1zm12 0h1v1h-1zm3 0h1v1h-1zm34 0h1v1h-1zm5 0h1v1h-1zm47 0h1v1h-1zm15 0h1v1h-1zm5 0h1v1h-1zm20 0h1v1h-1zm-225 1h1v1h-1zm6 0h1v1h-1zm7 0h1v1h-1zm8 0h1v1h-1zm5 0h1v1h-1zm3 0h1v1h-1zm9 0h1v1h-1zm40 0h1v1h-1zm9 0h1v1h-1zm7 0h1v1h-1zm17 0h1v1h-1zm31 0h1v1h-1zm6 0h1v1h-1zm30 0h1v1h-1zm8 0h1v1h-1zm6 0h1v1h-1zm3 0h1v1h-1zm29 0h1v1h-1zm-78 1h1v1h-1zm3 0h1v1h-1zm2 0h1v1h-1zm7 0h1v1h-1zm6 0h1v1h-1zm7 0h1v1h-1zm44 0h1v1h-1zm-2 1h1v1h-1zm5 0h1v1h-1zm3 0h1v1h-1z" fill="#10d0a0"/>
<path d="M725 472h1v1h-1zm-1 2h1v1h-1zm-543 2h1v1h-1zm6 0h2v1h-2zm-35 1h2v1h-2zm10 0h1v1h-1zm16 0h3v1h-3zm12 0h1v1h-1zm18 0h1v1h-1zm17 0h1v1h-1zm4 0h1v1h-1zm4 0h2v1h-2zm12 0h1v1h-1zm7 0h1v1h-1zm4 0h1v1h-1zm11 0h1v1h-1zm6 0h1v1h-1zm15 0h1v1h-1zm-134 1h1v1h-1zm8 0h1v1h-1zm10 0h2v1h-2zm8 0h1v1h-1zm2 0h1v1h-1zm2 0h1v1h-1zm17 0h1v1h-1zm14 0h1v1h-1zm4 0h1v1h-1zm6 0h1v1h-1zm3 0h1v1h-1zm6 0h1v1h-1zm20 0h1v1h-1zm2 0h1v1h-1zm18 0h1v1h-1zm11 0h2v1h-2zm97 0h1v1h-1zm7 0h1v1h-1zm11 0h1v1h-1zm5 0h2v1h-2zm7 0h2v1h-2zm5 0h1v1h-1zm7 0h1v1h-1zm9 0h1v1h-1zm10 0h1v1h-1zm38 0h1v1h-1zm7 0h2v1h-2zm3 0h1v1h-1zm230 0h1v1h-1zm-517 1h1v1h-1zm6 0h1v1h-1zm11 0h1v1h-1zm14 0h1v1h-1zm6 0h1v1h-1zm2 0h2v1h-2zm3 0h1v1h-1zm20 0h1v1h-1zm3 0h1v1h-1zm2 0h1v1h-1zm5 0h1v1h-1zm12 0h2v1h-2zm6 0h1v1h-1zm3 0h1v1h-1zm5 0h1v1h-1zm75 0h1v1h-1zm2 0h1v1h-1zm2 0h1v1h-1zm3 0h1v1h-1zm6 0h1v1h-1zm3 0h1v1h-1zm4 0h1v1h-1zm5 0h1v1h-1zm16 0h1v1h-1zm5 0h3v1h-3zm6 0h1v1h-1zm5 0h1v1h-1zm10 0h1v1h-1zm20 0h1v1h-1zm4 0h1v1h-1zm16 0h2v1h-2zm20 0h1v1h-1zm9 0h1v1h-1zm29 0h2v1h-2zm6 0h1v1h-1zm2 0h1v1h-1zm10 0h1v1h-1zm5 0h1v1h-1zm6 0h1v1h-1zm5 0h2v1h-2zm8 0h1v1h-1zm20 0h1v1h-1zm2 0h1v1h-1zm9 0h2v1h-2zm12 0h1v1h-1zm-321 1h1v1h-1zm82 0h1v1h-1zm22 0h1v1h-1zm10 0h1v1h-1zm21 0h1v1h-1zm18 0h1v1h-1zm2 0h1v1h-1zm2 0h2v1h-2zm13 0h1v1h-1zm5 0h1v1h-1zm3 0h1v1h-1zm4 0h1v1h-1zm3 0h1v1h-1zm17 0h1v1h-1zm10 0h1v1h-1zm5 0h2v1h-2zm13 0h1v1h-1zm5 0h2v1h-2zm22 0h1v1h-1zm3 0h1v1h-1zm6 0h1v1h-1zm3 0h1v1h-1zm40 0h1v1h-1zm6 0h1v1h-1zm2 0h1v1h-1zm14 0h1v1h-1zm8 0h1v1h-1zm10 0h1v1h-1zm8 0h1v1h-1zm5 0h1v1h-1zm3 0h1v1h-1zm45 0h1v1h-1zm5 0h1v1h-1zm-226 1h2v1h-2zm4 0h1v1h-1zm13 0h1v1h-1zm11 0h1v1h-1zm6 0h2v1h-2zm3 0h1v1h-1zm8 0h1v1h-1zm26 0h1v1h-1zm11 0h1v1h-1zm19 0h1v1h-1zm8 0h1v1h-1zm15 0h1v1h-1zm20 0h1v1h-1zm5 0h1v1h-1zm13 0h1v1h-1zm9 0h1v1h-1zm2 0h1v1h-1zm3 0h1v1h-1zm6 0h1v1h-1zm14 0h1v1h-1zm16 0h1v1h-1zm3 0h1v1h-1zm3 0h1v1h-1zm-65 1h1v1h-1zm9 0h1v1h-1zm17 0h1v1h-1zm2 0h1v1h-1zm9 0h1v1h-1zm4 0h1v1h-1zm-7 1h1v1h-1zm6 0h1v1h-1zm18 0h2v1h-2zm3 0h1v1h-1zm3 0h1v1h-1zm2 0h1v1h-1z" fill="#f0a000"/>
<path d="M724 478h2v1h-2zm-571 1h1v1h-1zm13 0h1v1h-1zm10 0h1v1h-1zm6 0h1v1h-1zm-22 1h1v1h-1zm10 0h1v1h-1zm8 0h1v1h-1zm11 0h1v1h-1zm5 0h1v1h-1zm10 0h1v1h-1zm8 0h1v1h-1zm6 0h1v1h-1zm25 0h1v1h-1zm20 0h1v1h-1zm6 0h1v1h-1zm18 0h1v1h-1zm5 0h1v1h-1zm431 0h1v1h-1zm2 0h1v1h-1zm-564 1h1v1h-1zm5 0h1v1h-1zm2 0h1v1h-1zm2 0h1v1h-1zm15 0h1v1h-1zm2 0h1v1h-1zm7 0h1v1h-1zm2 0h1v1h-1zm8 0h1v1h-1zm4 0h1v1h-1zm11 0h1v1h-1zm3 0h1v1h-1zm6 0h1v1h-1zm4 0h1v1h-1zm2 0h1v1h-1zm23 0h1v1h-1zm44 0h2v1h-2zm6 0h1v1h-1zm113 0h3v1h-3zm13 0h1v1h-1zm3 0h1v1h-1zm6 0h1v1h-1zm7 0h1v1h-1zm4 0h1v1h-1zm22 0h1v1h-1zm3 0h1v1h-1zm6 0h1v1h-1zm3 0h1v1h-1zm-329 1h1v1h-1zm6 0h1v1h-1zm7 0h1v1h-1zm7 0h1v1h-1zm3 0h3v1h-3zm14 0h1v1h-1zm3 0h1v1h-1zm3 0h1v1h-1zm16 0h1v1h-1zm2 0h1v1h-1zm21 0h1v1h-1zm13 0h1v1h-1zm2 0h1v1h-1zm15 0h1v1h-1zm24 0h1v1h-1zm2 0h2v1h-2zm13 0h1v1h-1zm71 0h1v1h-1zm5 0h1v1h-1zm14 0h2v1h-2zm3 0h1v1h-1zm17 0h1v1h-1zm6 0h1v1h-1zm2 0h1v1h-1zm12 0h1v1h-1zm5 0h1v1h-1zm2 0h1v1h-1zm25 0h1v1h-1zm15 0h1v1h-1zm22 0h1v1h-1zm9 0h1v1h-1zm7 0h1v1h-1zm5 0h1v1h-1zm2 0h1v1h-1zm19 0h1v1h-1zm5 0h1v1h-1zm8 0h1v1h-1zm11 0h1v1h-1zm3 0h1v1h-1zm5 0h1v1h-1zm2 0h1v1h-1zm8 0h1v1h-1zm8 0h1v1h-1zm20 0h1v1h-1zm10 0h1v1h-1zm2 0h1v1h-1zm88 0h1v1h-1zm2 0h1v1h-1zm2 0h1v1h-1zm-572 1h1v1h-1zm2 0h1v1h-1zm22 0h1v1h-1zm3 0h1v1h-1zm2 0h1v1h-1zm2 0h2v1h-2zm6 0h1v1h-1zm24 0h1v1h-1zm12 0h1v1h-1zm2 0h1v1h-1zm18 0h1v1h-1zm7 0h1v1h-1zm2 0h2v1h-2zm3 0h1v1h-1zm5 0h2v1h-2zm4 0h1v1h-1zm2 0h2v1h-2zm25 0h3v1h-3zm126 0h1v1h-1zm6 0h1v1h-1zm3 0h1v1h-1zm9 0h1v1h-1zm20 0h1v1h-1zm22 0h1v1h-1zm9 0h1v1h-1zm3 0h1v1h-1zm2 0h1v1h-1zm4 0h1v1h-1zm20 0h1v1h-1zm7 0h1v1h-1zm7 0h1v1h-1zm25 0h3v1h-3zm11 0h1v1h-1zm17 0h1v1h-1zm24 0h1v1h-1zm8 0h1v1h-1zm4 0h1v1h-1zm4 0h1v1h-1zm12 0h1v1h-1zm10 0h1v1h-1zm2 0h2v1h-2zm7 0h1v1h-1zm7 0h1v1h-1zm-508 1h1v1h-1zm5 0h1v1h-1zm4 0h2v1h-2zm4 0h1v1h-1zm11 0h1v1h-1zm11 0h2v1h-2zm3 0h1v1h-1zm2 0h1v1h-1zm2 0h1v1h-1zm4 0h1v1h-1zm5 0h1v1h-1zm14 0h1v1h-1zm11 0h1v1h-1zm7 0h1v1h-1zm4 0h1v1h-1zm17 0h1v1h-1zm9 0h1v1h-1zm6 0h1v1h-1zm5 0h1v1h-1zm8 0h1v1h-1zm4 0h1v1h-1zm6 0h2v1h-2zm6 0h1v1h-1zm2 0h2v1h-2zm3 0h1v1h-1zm68 0h1v1h-1zm7 0h1v1h-1zm5 0h2v1h-2zm4 0h1v1h-1zm14 0h1v1h-1zm19 0h1v1h-1zm8 0h1v1h-1zm10 0h1v1h-1zm4 0h1v1h-1zm5 0h1v1h-1zm17 0h1v1h-1zm17 0h1v1h-1zm24 0h1v1h-1zm4 0h1v1h-1zm4 0h1v1h-1zm8 0h1v1h-1zm5 0h1v1h-1zm17 0h1v1h-1zm2 0h1v1h-1zm7 0h1v1h-1zm7 0h1v1h-1zm6 0h1v1h-1zm16 0h2v1h-2zm11 0h1v1h-1zm21 0h1v1h-1zm4 0h2v1h-2zm4 0h1v1h-1zm6 0h1v1h-1zm10 0h1v1h-1zm2 0h1v1h-1zm13 0h1v1h-1zm30 0h1v1h-1zm18 0h1v1h-1zm16 0h2v1h-2zm-563 1h1v1h-1zm7 0h1v1h-1zm3 0h1v1h-1zm9 0h1v1h-1zm10 0h1v1h-1zm10 0h1v1h-1zm5 0h1v1h-1zm3 0h1v1h-1zm3 0h1v1h-1zm6 0h1v1h-1zm3 0h1v1h-1zm13 0h1v1h-1zm3 0h3v1h-3zm6 0h3v1h-3zm25 0h2v1h-2zm5 0h1v1h-1zm24 0h2v1h-2zm3 0h1v1h-1zm5 0h1v1h-1zm5 0h1v1h-1zm73 0h1v1h-1zm4 0h1v1h-1zm8 0h1v1h-1zm3 0h1v1h-1zm2 0h1v1h-1zm12 0h1v1h-1zm5 0h1v1h-1zm10 0h2v1h-2zm3 0h1v1h-1zm8 0h1v1h-1zm4 0h1v1h-1zm4 0h1v1h-1zm12 0h1v1h-1zm3 0h2v1h-2zm48 0h1v1h-1zm4 0h1v1h-1zm3 0h1v1h-1zm4 0h2v1h-2zm5 0h2v1h-2zm4 0h1v1h-1zm24 0h2v1h-2zm4 0h1v1h-1zm8 0h2v1h-2zm16 0h1v1h-1zm8 0h1v1h-1zm2 0h1v1h-1zm5 0h1v1h-1zm2 0h1v1h-1zm4 0h1v1h-1zm5 0h1v1h-1zm9 0h1v1h-1zm13 0h1v1h-1zm2 0h1v1h-1zm8 0h1v1h-1zm6 0h1v1h-1zm8 0h2v1h-2zm11 0h1v1h-1zm3 0h1v1h-1zm22 0h1v1h-1zm13 0h1v1h-1zm8 0h1v1h-1zm7 0h1v1h-1zm4 0h1v1h-1zm3 0h1v1h-1zm-562 1h1v1h-1zm14 0h1v1h-1zm3 0h1v1h-1zm32 0h1v1h-1zm10 0h1v1h-1zm12 0h1v1h-1zm30 0h3v1h-3zm5 0h3v1h-3zm16 0h2v1h-2zm4 0h1v1h-1zm2 0h1v1h-1zm2 0h1v1h-1zm92 0h2v1h-2zm9 0h1v1h-1zm4 0h1v1h-1zm27 0h1v1h-1zm18 0h3v1h-3zm9 0h1v1h-1zm4 0h1v1h-1zm7 0h1v1h-1zm15 0h1v1h-1zm28 0h1v1h-1zm20 0h1v1h-1zm8 0h1v1h-1zm24 0h1v1h-1zm8 0h1v1h-1zm9 0h1v1h-1zm10 0h1v1h-1zm5 0h1v1h-1zm7 0h2v1h-2zm8 0h1v1h-1zm18 0h1v1h-1zm7 0h1v1h-1zm3 0h1v1h-1zm6 0h1v1h-1zm3 0h1v1h-1zm6 0h1v1h-1zm6 0h1v1h-1zm2 0h1v1h-1zm15 0h1v1h-1zm6 0h1v1h-1zm4 0h1v1h-1zm5 0h1v1h-1zm2 0h2v1h-2zm12 0h1v1h-1zm15 0h1v1h-1zm-502 1h2v1h-2zm3 0h1v1h-1zm5 0h1v1h-1zm7 0h1v1h-1zm4 0h1v1h-1zm17 0h1v1h-1zm2 0h1v1h-1zm5 0h1v1h-1zm19 0h1v1h-1zm15 0h1v1h-1zm3 0h1v1h-1zm5 0h2v1h-2zm14 0h1v1h-1zm70 0h1v1h-1zm14 0h2v1h-2zm6 0h2v1h-2zm7 0h1v1h-1zm25 0h2v1h-2zm3 0h1v1h-1zm7 0h1v1h-1zm2 0h1v1h-1zm9 0h1v1h-1zm5 0h4v1h-4zm13 0h1v1h-1zm7 0h1v1h-1zm7 0h1v1h-1zm7 0h1v1h-1zm4 0h2v1h-2zm15 0h1v1h-1zm2 0h1v1h-1zm6 0h1v1h-1zm3 0h1v1h-1zm2 0h1v1h-1zm18 0h1v1h-1zm16 0h1v1h-1zm12 0h1v1h-1zm14 0h1v1h-1zm2 0h1v1h-1zm2 0h1v1h-1zm2 0h2v1h-2zm3 0h1v1h-1zm3 0h1v1h-1zm3 0h2v1h-2zm9 0h1v1h-1zm13 0h2v1h-2zm10 0h1v1h-1zm4 0h1v1h-1zm8 0h1v1h-1zm15 0h2v1h-2zm5 0h1v1h-1zm8 0h2v1h-2zm14 0h3v1h-3zm23 0h1v1h-1zm4 0h1v1h-1zm8 0h1v1h-1zm5 0h1v1h-1zm-418 1h1v1h-1zm6 0h1v1h-1zm75 0h1v1h-1zm6 0h1v1h-1zm5 0h1v1h-1zm2 0h1v1h-1zm19 0h1v1h-1zm2 0h1v1h-1zm5 0h1v1h-1zm3 0h2v1h-2zm6 0h1v1h-1zm2 0h1v1h-1zm3 0h2v1h-2zm3 0h1v1h-1zm4 0h1v1h-1zm9 0h1v1h-1zm6 0h1v1h-1zm17 0h1v1h-1zm9 0h2v1h-2zm4 0h1v1h-1zm2 0h1v1h-1zm11 0h3v1h-3zm7 0h1v1h-1zm11 0h1v1h-1zm4 0h1v1h-1zm9 0h1v1h-1zm2 0h1v1h-1zm6 0h1v1h-1zm13 0h1v1h-1zm3 0h1v1h-1zm18 0h1v1h-1zm18 0h1v1h-1zm10 0h1v1h-1zm2 0h1v1h-1zm2 0h1v1h-1zm2 0h1v1h-1zm10 0h1v1h-1zm13 0h1v1h-1zm2 0h1v1h-1zm7 0h1v1h-1zm5 0h3v1h-3zm14 0h1v1h-1zm15 0h1v1h-1zm3 0h1v1h-1zm3 0h1v1h-1zm7 0h1v1h-1zm3 0h1v1h-1zm10 0h1v1h-1zm19 0h1v1h-1zm-222 1h1v1h-1zm5 0h1v1h-1zm5 0h1v1h-1zm17 0h1v1h-1zm5 0h1v1h-1zm12 0h1v1h-1zm6 0h2v1h-2zm3 0h1v1h-1zm20 0h1v1h-1zm2 0h1v1h-1zm7 0h1v1h-1zm19 0h1v1h-1zm9 0h1v1h-1zm8 0h1v1h-1zm9 0h1v1h-1zm2 0h1v1h-1zm15 0h1v1h-1zm12 0h1v1h-1zm3 0h1v1h-1zm2 0h1v1h-1zm13 0h1v1h-1zm2 0h1v1h-1zm16 0h1v1h-1zm3 0h1v1h-1zm14 0h1v1h-1zm4 0h1v1h-1zm6 0h2v1h-2zm-80 1h1v1h-1zm3 0h1v1h-1zm3 0h1v1h-1zm2 0h1v1h-1zm4 0h1v1h-1zm2 0h1v1h-1zm5 0h1v1h-1zm3 0h1v1h-1zm29 0h1v1h-1zm4 0h1v1h-1zm5 0h1v1h-1zm7 0h1v1h-1zm12 0h1v1h-1zm-37 1h1v1h-1zm3 0h1v1h-1zm10 0h1v1h-1zm9 0h1v1h-1zm3 0h1v1h-1zm5 0h1v1h-1z" fill="#a80000"/>
<path d="M181 467h1v1h-1zm7 0h1v1h-1zm2 0h1v1h-1zm-27 1h1v1h-1zm15 0h1v1h-1zm2 0h2v1h-2zm7 0h2v1h-2zm5 0h1v1h-1zm30 0h1v1h-1zm20 0h1v1h-1zm38 0h1v1h-1zm15 0h1v1h-1zm-93 1h1v1h-1zm3 0h2v1h-2zm20 0h1v1h-1zm2 0h1v1h-1zm4 0h1v1h-1zm17 0h1v1h-1zm13 0h2v1h-2zm8 0h1v1h-1zm10 0h1v1h-1zm8 0h1v1h-1zm6 0h1v1h-1zm93 0h1v1h-1zm2 0h1v1h-1zm17 0h1v1h-1zm3 0h1v1h-1zm2 0h1v1h-1zm23 0h2v1h-2zm12 0h1v1h-1zm7 0h1v1h-1zm2 0h1v1h-1zm8 0h1v1h-1zm6 0h1v1h-1zm21 0h2v1h-2zm233 0h1v1h-1zm-345 1h1v1h-1zm7 0h1v1h-1zm5 0h1v1h-1zm7 0h2v1h-2zm17 0h1v1h-1zm15 0h1v1h-1zm2 0h1v1h-1zm2 0h1v1h-1zm4 0h1v1h-1zm11 0h1v1h-1zm25 0h1v1h-1zm3 0h1v1h-1zm2 0h1v1h-1zm15 0h1v1h-1zm4 0h1v1h-1zm2 0h1v1h-1zm3 0h1v1h-1zm7 0h1v1h-1zm2 0h1v1h-1zm11 0h1v1h-1zm9 0h1v1h-1zm46 0h1v1h-1zm33 0h1v1h-1zm12 0h1v1h-1zm6 0h1v1h-1zm4 0h1v1h-1zm87 0h1v1h-1zm-223 1h1v1h-1zm3 0h2v1h-2zm8 0h1v1h-1zm11 0h1v1h-1zm7 0h1v1h-1zm9 0h1v1h-1zm23 0h1v1h-1zm12 0h1v1h-1zm4 0h1v1h-1zm24 0h1v1h-1zm7 0h1v1h-1zm18 0h1v1h-1zm16 0h1v1h-1zm20 0h1v1h-1zm6 0h1v1h-1zm3 0h2v1h-2zm49 0h1v1h-1zm-75 1h1v1h-1zm12 0h1v1h-1zm34 0h1v1h-1zm11 0h1v1h-1zm-537 1h1v1h-1zm39 0h1v1h-1zm481 0h1v1h-1zm31 0h1v1h-1zm-557 1h1v1h-1zm12 0h1v1h-1zm21 0h1v1h-1zm4 0h1v1h-1zm6 0h1v1h-1zm6 0h1v1h-1zm3 0h2v1h-2zm15 0h2v1h-2zm7 0h1v1h-1zm3 0h2v1h-2zm4 0h1v1h-1zm6 0h1v1h-1zm15 0h1v1h-1zm5 0h1v1h-1zm5 0h1v1h-1zm29 0h1v1h-1zm-142 1h1v1h-1zm11 0h1v1h-1zm4 0h1v1h-1zm11 0h1v1h-1zm6 0h2v1h-2zm9 0h1v1h-1zm3 0h1v1h-1zm5 0h2v1h-2zm4 0h1v1h-1zm4 0h1v1h-1zm22 0h1v1h-1zm19 0h1v1h-1zm13 0h1v1h-1zm20 0h1v1h-1zm5 0h2v1h-2zm4 0h1v1h-1zm7 0h1v1h-1zm4 0h1v1h-1zm72 0h1v1h-1zm4 0h1v1h-1zm4 0h1v1h-1zm19 0h2v1h-2zm6 0h1v1h-1zm3 0h1v1h-1zm20 0h1v1h-1zm5 0h2v1h-2zm3 0h1v1h-1zm7 0h1v1h-1zm6 0h1v1h-1zm19 0h1v1h-1zm5 0h1v1h-1zm5 0h1v1h-1zm8 0h1v1h-1zm-246 1h1v1h-1zm4 0h1v1h-1zm43 0h1v1h-1zm8 0h1v1h-1zm7 0h1v1h-1zm71 0h1v1h-1zm3 0h1v1h-1zm3 0h1v1h-1zm2 0h1v1h-1zm34 0h1v1h-1zm2 0h1v1h-1zm6 0h1v1h-1zm11 0h1v1h-1zm2 0h1v1h-1zm14 0h1v1h-1zm2 0h1v1h-1zm3 0h1v1h-1zm10 0h1v1h-1zm6 0h1v1h-1zm13 0h1v1h-1zm2 0h1v1h-1zm18 0h1v1h-1zm9 0h1v1h-1zm4 0h1v1h-1zm3 0h1v1h-1zm8 0h1v1h-1zm3 0h1v1h-1zm30 0h1v1h-1zm41 0h1v1h-1zm12 0h1v1h-1zm4 0h1v1h-1zm96 0h1v1h-1zm-411 1h1v1h-1zm69 0h1v1h-1zm5 0h1v1h-1zm7 0h1v1h-1zm10 0h1v1h-1zm29 0h1v1h-1zm17 0h1v1h-1zm19 0h1v1h-1zm2 0h2v1h-2zm15 0h2v1h-2zm14 0h1v1h-1zm13 0h1v1h-1zm15 0h1v1h-1zm2 0h1v1h-1zm9 0h1v1h-1zm5 0h1v1h-1zm3 0h2v1h-2zm11 0h2v1h-2zm11 0h1v1h-1zm8 0h1v1h-1zm6 0h1v1h-1zm2 0h2v1h-2zm27 0h1v1h-1zm26 0h1v1h-1zm2 0h2v1h-2zm6 0h1v1h-1zm5 0h3v1h-3zm10 0h1v1h-1zm-148 1h1v1h-1zm14 0h1v1h-1zm4 0h1v1h-1zm11 0h1v1h-1zm4 0h1v1h-1zm2 0h1v1h-1zm22 0h1v1h-1zm36 0h1v1h-1zm2 0h1v1h-1zm3 0h1v1h-1zm21 0h1v1h-1zm9 0h1v1h-1zm3 0h1v1h-1zm11 0h1v1h-1zm37 0h1v1h-1zm9 0h1v1h-1zm21 0h1v1h-1zm-78 1h1v1h-1zm4 0h1v1h-1zm23 0h1v1h-1zm3 0h2v1h-2zm24 0h1v1h-1zm7 0h1v1h-1zm9 0h1v1h-1zm-28 1h1v1h-1zm20 0h2v1h-2zm12 0h1v1h-1z" fill="#30e020"/>
<path d="M724 477h2v1h-2zm-563 2h1v1h-1zm3 1h1v1h-1zm2 0h1v1h-1zm27 0h1v1h-1zm2 0h1v1h-1zm10 0h1v1h-1zm35 0h1v1h-1zm5 0h1v1h-1zm2 0h1v1h-1zm7 0h2v1h-2zm27 0h2v1h-2zm16 0h1v1h-1zm2 0h1v1h-1zm-142 1h1v1h-1zm7 0h1v1h-1zm5 0h1v1h-1zm7 0h1v1h-1zm7 0h1v1h-1zm14 0h1v1h-1zm19 0h1v1h-1zm15 0h1v1h-1zm7 0h2v1h-2zm18 0h1v1h-1zm14 0h1v1h-1zm6 0h1v1h-1zm15 0h1v1h-1zm86 0h1v1h-1zm8 0h1v1h-1zm16 0h1v1h-1zm3 0h1v1h-1zm3 0h1v1h-1zm2 0h1v1h-1zm30 0h1v1h-1zm22 0h1v1h-1zm6 0h1v1h-1zm3 0h1v1h-1zm7 0h1v1h-1zm-247 1h1v1h-1zm6 0h1v1h-1zm13 0h1v1h-1zm5 0h1v1h-1zm3 0h1v1h-1zm30 0h1v1h-1zm4 0h1v1h-1zm11 0h1v1h-1zm6 0h1v1h-1zm68 0h1v1h-1zm18 0h1v1h-1zm10 0h1v1h-1zm11 0h1v1h-1zm30 0h1v1h-1zm6 0h1v1h-1zm5 0h1v1h-1zm11 0h1v1h-1zm2 0h1v1h-1zm22 0h1v1h-1zm8 0h1v1h-1zm5 0h1v1h-1zm8 0h1v1h-1zm7 0h1v1h-1zm7 0h1v1h-1zm8 0h1v1h-1zm18 0h1v1h-1zm2 0h1v1h-1zm3 0h1v1h-1zm10 0h1v1h-1zm12 0h1v1h-1zm8 0h1v1h-1zm7 0h1v1h-1zm2 0h1v1h-1zm11 0h1v1h-1zm3 0h1v1h-1zm5 0h1v1h-1zm12 0h1v1h-1zm98 0h1v1h-1zm-419 1h1v1h-1zm75 0h2v1h-2zm22 0h2v1h-2zm6 0h1v1h-1zm9 0h1v1h-1zm2 0h1v1h-1zm2 0h1v1h-1zm7 0h1v1h-1zm10 0h1v1h-1zm27 0h1v1h-1zm29 0h2v1h-2zm9 0h2v1h-2zm6 0h1v1h-1zm2 0h1v1h-1zm3 0h1v1h-1zm11 0h2v1h-2zm4 0h1v1h-1zm4 0h2v1h-2zm5 0h1v1h-1zm3 0h1v1h-1zm10 0h1v1h-1zm9 0h1v1h-1zm13 0h1v1h-1zm5 0h1v1h-1zm13 0h2v1h-2zm17 0h1v1h-1zm16 0h1v1h-1zm15 0h2v1h-2zm-146 1h2v1h-2zm16 0h2v1h-2zm11 0h1v1h-1zm2 0h1v1h-1zm6 0h1v1h-1zm2 0h1v1h-1zm22 0h1v1h-1zm5 0h1v1h-1zm19 0h1v1h-1zm3 0h1v1h-1zm11 0h1v1h-1zm2 0h2v1h-2zm7 0h1v1h-1zm5 0h1v1h-1zm14 0h1v1h-1zm9 0h1v1h-1zm7 0h1v1h-1zm5 0h1v1h-1zm5 0h1v1h-1zm13 0h1v1h-1zm6 0h1v1h-1zm4 0h1v1h-1zm15 0h1v1h-1zm25 0h1v1h-1zm4 0h1v1h-1zm6 0h1v1h-1zm6 0h1v1h-1zm-571 1h1v1h-1zm7 0h1v1h-1zm5 0h1v1h-1zm6 0h1v1h-1zm7 0h1v1h-1zm2 0h1v1h-1zm7 0h1v1h-1zm13 0h1v1h-1zm438 0h2v1h-2zm18 0h1v1h-1zm9 0h1v1h-1zm14 0h1v1h-1zm2 0h1v1h-1zm4 0h1v1h-1zm21 0h1v1h-1zm4 0h1v1h-1zm-552 1h1v1h-1zm20 0h1v1h-1zm5 0h1v1h-1zm3 0h1v1h-1zm4 0h2v1h-2zm22 0h3v1h-3zm10 0h1v1h-1zm11 0h1v1h-1zm6 0h1v1h-1zm6 0h1v1h-1zm6 0h1v1h-1zm2 0h1v1h-1zm14 0h1v1h-1zm2 0h1v1h-1zm12 0h1v1h-1zm17 0h1v1h-1zm2 0h1v1h-1zm386 0h1v1h-1zm3 0h1v1h-1zm3 0h1v1h-1zm4 0h1v1h-1zm6 0h1v1h-1zm-500 1h1v1h-1zm11 0h1v1h-1zm4 0h1v1h-1zm7 0h1v1h-1zm5 0h1v1h-1zm5 0h2v1h-2zm5 0h2v1h-2zm5 0h1v1h-1zm2 0h1v1h-1zm2 0h1v1h-1zm9 0h1v1h-1zm3 0h2v1h-2zm8 0h1v1h-1zm2 0h1v1h-1zm4 0h1v1h-1zm6 0h1v1h-1zm8 0h1v1h-1zm10 0h2v1h-2zm94 0h1v1h-1zm6 0h3v1h-3zm6 0h1v1h-1zm14 0h1v1h-1zm4 0h2v1h-2zm3 0h1v1h-1zm8 0h2v1h-2zm3 0h1v1h-1zm7 0h1v1h-1zm2 0h1v1h-1zm3 0h1v1h-1zm3 0h1v1h-1zm11 0h1v1h-1zm6 0h1v1h-1zm4 0h1v1h-1zm17 0h1v1h-1zm-185 1h1v1h-1zm2 0h1v1h-1zm76 0h1v1h-1zm4 0h1v1h-1zm13 0h1v1h-1zm7 0h1v1h-1zm30 0h1v1h-1zm5 0h1v1h-1zm2 0h1v1h-1zm14 0h1v1h-1zm4 0h1v1h-1zm3 0h1v1h-1zm2 0h1v1h-1zm3 0h2v1h-2zm5 0h1v1h-1zm10 0h1v1h-1zm10 0h1v1h-1zm5 0h1v1h-1zm6 0h1v1h-1zm2 0h1v1h-1zm4 0h1v1h-1zm3 0h1v1h-1zm2 0h1v1h-1zm5 0h3v1h-3zm5 0h1v1h-1zm2 0h1v1h-1zm4 0h1v1h-1zm6 0h2v1h-2zm9 0h1v1h-1zm2 0h1v1h-1zm7 0h1v1h-1zm8 0h1v1h-1zm3 0h1v1h-1zm4 0h1v1h-1zm3 0h1v1h-1zm3 0h1v1h-1zm10 0h1v1h-1zm3 0h1v1h-1zm8 0h1v1h-1zm4 0h1v1h-1zm10 0h1v1h-1zm11 0h2v1h-2zm4 0h1v1h-1zm2 0h1v1h-1zm2 0h1v1h-1zm-137 1h1v1h-1zm2 0h1v1h-1zm6 0h1v1h-1zm15 0h1v1h-1zm11 0h1v1h-1zm13 0h1v1h-1zm3 0h1v1h-1zm28 0h1v1h-1zm7 0h1v1h-1zm6 0h1v1h-1zm16 0h3v1h-3zm19 0h1v1h-1zm8 0h1v1h-1zm13 0h1v1h-1zm25 0h1v1h-1zm50 0h1v1h-1zm-77 1h1v1h-1zm8 0h1v1h-1zm6 0h1v1h-1zm10 0h1v1h-1zm7 0h1v1h-1zm3 0h1v1h-1zm4 0h1v1h-1zm3 0h1v1h-1zm6 0h1v1h-1zm9 0h2v1h-2zm3 0h1v1h-1zm3 0h1v1h-1zm4 0h1v1h-1zm-31 1h1v1h-1zm16 0h1v1h-1zm4 0h1v1h-1zm6 0h1v1h-1zm3 0h1v1h-1zm12 0h1v1h-1z" fill="#c01800"/>
<path d="M155 467h1v1h-1zm14 0h2v1h-2zm3 0h1v1h-1zm20 0h2v1h-2zm6 0h1v1h-1zm525 0h1v1h-1zm-552 1h1v1h-1zm4 0h1v1h-1zm34 0h1v1h-1zm4 0h1v1h-1zm11 0h1v1h-1zm5 0h1v1h-1zm2 0h1v1h-1zm10 0h1v1h-1zm4 0h1v1h-1zm2 0h1v1h-1zm7 0h1v1h-1zm2 0h2v1h-2zm6 0h1v1h-1zm7 0h1v1h-1zm-50 1h1v1h-1zm19 0h1v1h-1zm3 0h1v1h-1zm16 0h1v1h-1zm6 0h1v1h-1zm15 0h1v1h-1zm7 0h1v1h-1zm3 0h1v1h-1zm7 0h1v1h-1zm6 0h1v1h-1zm4 0h2v1h-2zm76 0h1v1h-1zm19 0h1v1h-1zm20 0h1v1h-1zm16 0h1v1h-1zm15 0h1v1h-1zm9 0h1v1h-1zm11 0h1v1h-1zm6 0h1v1h-1zm6 0h1v1h-1zm2 0h1v1h-1zm-182 1h1v1h-1zm6 0h1v1h-1zm85 0h1v1h-1zm32 0h1v1h-1zm3 0h1v1h-1zm6 0h1v1h-1zm3 0h1v1h-1zm7 0h1v1h-1zm5 0h1v1h-1zm4 0h1v1h-1zm17 0h1v1h-1zm15 0h1v1h-1zm11 0h1v1h-1zm5 0h1v1h-1zm66 0h1v1h-1zm29 0h2v1h-2zm18 0h1v1h-1zm9 0h1v1h-1zm6 0h1v1h-1zm3 0h1v1h-1zm-123 1h1v1h-1zm2 0h1v1h-1zm13 0h1v1h-1zm2 0h1v1h-1zm15 0h1v1h-1zm12 0h2v1h-2zm3 0h1v1h-1zm13 0h1v1h-1zm6 0h1v1h-1zm4 0h1v1h-1zm7 0h1v1h-1zm8 0h1v1h-1zm5 0h1v1h-1zm7 0h1v1h-1zm2 0h1v1h-1zm33 0h1v1h-1zm6 0h1v1h-1zm5 0h1v1h-1zm14 1h1v1h-1zm15 0h1v1h-1zm9 0h1v1h-1zm21 0h1v1h-1zm-37 1h1v1h-1zm6 0h1v1h-1zm10 0h1v1h-1zm3 0h1v1h-1zm10 0h1v1h-1z" fill="#00b0c0"/>
<filter id="sblur" filterUnits="userSpaceOnUse" x="290" y="420" width="110" height="90"><feGaussianBlur stdDeviation="0.9"/></filter>
<g filter="url(#sblur)"><polygon points="337.5,442.5 336,444.5 334.5,448.5 333,455 330.5,459.5 325.5,464.5 321.5,467.5 322.5,475 327,486 339,486 339,441" fill="#b00800"/><polygon points="347.5,442.5 349,444.5 350.5,448.5 352,455 354.5,459.5 359.5,464.5 363.5,467.5 362.5,475 358,486 346,486 346,441" fill="#b00800"/></g>
<filter id="vblur" filterUnits="userSpaceOnUse" x="100" y="440" width="700" height="200"><feGaussianBlur stdDeviation="0.6 2"/></filter>
<g filter="url(#vblur)">
<polygon points="140,502.0 151,502.0 153,502.0 155,502.1 157,502.1 159,502.1 161,502.2 163,502.2 165,502.2 167,502.3 169,502.3 171,502.3 173,502.3 175,502.4 177,502.4 179,502.4 181,502.5 183,502.5 185,502.5 187,502.6 189,502.6 191,502.6 193,502.7 195,502.7 197,502.7 199,502.8 201,502.8 203,502.8 205,502.8 207,502.9 209,502.9 211,502.9 213,503.0 215,503.0 217,503.0 219,503.1 221,503.1 223,503.1 225,503.2 227,503.2 229,503.2 231,503.3 233,503.3 235,503.3 237,503.3 239,503.4 241,503.4 243,503.4 245,503.5 247,503.5 249,503.5 251,503.6 253,503.6 255,503.6 257,503.7 259,503.7 261,503.7 263,503.8 265,503.8 267,503.8 269,503.9 271,503.9 273,503.9 275,503.9 277,504.0 279,504.0 281,504.1 283,504.1 285,504.1 287,504.2 289,504.2 291,504.3 293,504.3 295,504.4 297,504.4 299,504.5 301,504.6 303,504.7 305,504.8 307,504.9 309,505.1 311,505.3 313,505.5 315,505.8 317,506.2 319,506.7 321,507.3 323,508.1 325,509.1 327,510.3 329,511.9 331,514.0 333,516.6 335,520.0 337,524.3 339,526.9 341,527.0 343,527.0 345,527.0 347,527.1 349,522.2 351,518.5 353,515.6 355,513.3 357,511.5 359,510.2 361,509.1 363,508.3 365,507.7 367,507.2 369,506.8 371,506.5 373,506.3 375,506.2 377,506.1 379,506.0 381,505.9 383,505.9 385,505.9 387,505.8 389,505.8 391,505.8 393,505.9 395,505.9 397,505.9 399,505.9 401,505.9 403,506.0 405,506.0 407,506.0 409,506.0 411,506.1 413,506.1 415,506.1 417,506.2 419,506.2 421,506.2 423,506.3 425,506.3 427,506.3 429,506.4 431,506.4 433,506.4 435,506.4 437,506.5 439,506.5 441,506.5 443,506.6 445,506.6 447,506.6 449,506.7 451,506.7 453,506.7 455,506.8 457,506.8 459,506.8 461,506.9 463,506.9 465,506.9 467,506.9 469,507.0 471,507.0 473,507.0 475,507.1 477,507.1 479,507.1 481,507.2 483,507.2 485,507.2 487,507.3 489,507.3 491,507.3 493,507.4 495,507.4 497,507.4 499,507.4 501,507.5 503,507.5 505,507.5 507,507.6 509,507.6 511,507.6 513,507.7 515,507.7 517,507.7 519,507.8 521,507.8 523,507.8 525,507.9 527,507.9 529,507.9 531,507.9 533,508.0 535,508.0 537,508.0 539,508.1 541,508.1 543,508.1 545,508.2 547,508.2 549,508.2 551,508.3 553,508.3 555,508.3 557,508.4 559,508.4 561,508.4 563,508.4 565,508.5 567,508.5 569,508.5 571,508.6 573,508.6 575,508.6 577,508.7 579,508.7 581,508.7 583,508.8 585,508.8 587,508.8 589,508.9 591,508.9 593,508.9 595,508.9 597,509.0 599,509.0 601,509.0 603,509.1 605,509.1 607,509.1 609,509.2 611,509.2 613,509.2 615,509.3 617,509.3 619,509.3 621,509.4 623,509.4 625,509.4 627,509.5 629,509.5 631,509.5 633,509.5 635,509.6 637,509.6 639,509.6 641,509.7 643,509.7 645,509.7 647,509.8 649,509.8 651,509.8 653,509.9 655,509.9 657,509.9 659,510.0 661,510.0 663,510.0 665,510.0 667,510.1 669,510.1 671,510.1 673,510.2 675,510.2 677,510.2 679,510.3 681,510.3 683,510.3 685,510.4 687,510.4 689,510.4 691,510.5 693,510.5 695,510.5 697,510.5 699,510.6 701,510.6 703,510.6 705,510.7 707,510.7 709,510.7 711,510.8 713,510.8 715,510.8 717,510.9 719,510.9 721,510.9 723,511.0 725,511.0 740,511.0 740,620 140,620" fill="#c82000"/>
<polygon points="140,508.0 151,508.0 153,508.0 155,508.1 157,508.1 159,508.1 161,508.2 163,508.2 165,508.2 167,508.3 169,508.3 171,508.3 173,508.3 175,508.4 177,508.4 179,508.4 181,508.5 183,508.5 185,508.5 187,508.6 189,508.6 191,508.6 193,508.7 195,508.7 197,508.7 199,508.8 201,508.8 203,508.8 205,508.8 207,508.9 209,508.9 211,508.9 213,509.0 215,509.0 217,509.0 219,509.1 221,509.1 223,509.1 225,509.2 227,509.2 229,509.2 231,509.3 233,509.3 235,509.3 237,509.3 239,509.4 241,509.4 243,509.4 245,509.5 247,509.5 249,509.5 251,509.6 253,509.6 255,509.6 257,509.7 259,509.7 261,509.7 263,509.8 265,509.8 267,509.8 269,509.9 271,509.9 273,509.9 275,509.9 277,510.0 279,510.0 281,510.1 283,510.1 285,510.1 287,510.2 289,510.2 291,510.3 293,510.3 295,510.4 297,510.4 299,510.5 301,510.6 303,510.7 305,510.8 307,510.9 309,511.1 311,511.3 313,511.5 315,511.8 317,512.2 319,512.7 321,513.3 323,514.1 325,515.1 327,516.3 329,517.9 331,520.0 333,522.6 335,526.0 337,530.3 339,532.9 341,533.0 343,533.0 345,533.0 347,533.1 349,528.2 351,524.5 353,521.6 355,519.3 357,517.5 359,516.2 361,515.1 363,514.3 365,513.7 367,513.2 369,512.8 371,512.5 373,512.3 375,512.2 377,512.1 379,512.0 381,511.9 383,511.9 385,511.9 387,511.8 389,511.8 391,511.8 393,511.9 395,511.9 397,511.9 399,511.9 401,511.9 403,512.0 405,512.0 407,512.0 409,512.0 411,512.1 413,512.1 415,512.1 417,512.2 419,512.2 421,512.2 423,512.3 425,512.3 427,512.3 429,512.4 431,512.4 433,512.4 435,512.4 437,512.5 439,512.5 441,512.5 443,512.6 445,512.6 447,512.6 449,512.7 451,512.7 453,512.7 455,512.8 457,512.8 459,512.8 461,512.9 463,512.9 465,512.9 467,512.9 469,513.0 471,513.0 473,513.0 475,513.1 477,513.1 479,513.1 481,513.2 483,513.2 485,513.2 487,513.3 489,513.3 491,513.3 493,513.4 495,513.4 497,513.4 499,513.4 501,513.5 503,513.5 505,513.5 507,513.6 509,513.6 511,513.6 513,513.7 515,513.7 517,513.7 519,513.8 521,513.8 523,513.8 525,513.9 527,513.9 529,513.9 531,513.9 533,514.0 535,514.0 537,514.0 539,514.1 541,514.1 543,514.1 545,514.2 547,514.2 549,514.2 551,514.3 553,514.3 555,514.3 557,514.4 559,514.4 561,514.4 563,514.4 565,514.5 567,514.5 569,514.5 571,514.6 573,514.6 575,514.6 577,514.7 579,514.7 581,514.7 583,514.8 585,514.8 587,514.8 589,514.9 591,514.9 593,514.9 595,514.9 597,515.0 599,515.0 601,515.0 603,515.1 605,515.1 607,515.1 609,515.2 611,515.2 613,515.2 615,515.3 617,515.3 619,515.3 621,515.4 623,515.4 625,515.4 627,515.5 629,515.5 631,515.5 633,515.5 635,515.6 637,515.6 639,515.6 641,515.7 643,515.7 645,515.7 647,515.8 649,515.8 651,515.8 653,515.9 655,515.9 657,515.9 659,516.0 661,516.0 663,516.0 665,516.0 667,516.1 669,516.1 671,516.1 673,516.2 675,516.2 677,516.2 679,516.3 681,516.3 683,516.3 685,516.4 687,516.4 689,516.4 691,516.5 693,516.5 695,516.5 697,516.5 699,516.6 701,516.6 703,516.6 705,516.7 707,516.7 709,516.7 711,516.8 713,516.8 715,516.8 717,516.9 719,516.9 721,516.9 723,517.0 725,517.0 740,517.0 740,620 140,620" fill="#e06800"/>
<polygon points="140,513.0 151,513.0 153,513.0 155,513.1 157,513.1 159,513.1 161,513.2 163,513.2 165,513.2 167,513.3 169,513.3 171,513.3 173,513.3 175,513.4 177,513.4 179,513.4 181,513.5 183,513.5 185,513.5 187,513.6 189,513.6 191,513.6 193,513.7 195,513.7 197,513.7 199,513.8 201,513.8 203,513.8 205,513.8 207,513.9 209,513.9 211,513.9 213,514.0 215,514.0 217,514.0 219,514.1 221,514.1 223,514.1 225,514.2 227,514.2 229,514.2 231,514.3 233,514.3 235,514.3 237,514.3 239,514.4 241,514.4 243,514.4 245,514.5 247,514.5 249,514.5 251,514.6 253,514.6 255,514.6 257,514.7 259,514.7 261,514.7 263,514.8 265,514.8 267,514.8 269,514.9 271,514.9 273,514.9 275,514.9 277,515.0 279,515.0 281,515.1 283,515.1 285,515.1 287,515.2 289,515.2 291,515.3 293,515.3 295,515.4 297,515.4 299,515.5 301,515.6 303,515.7 305,515.8 307,515.9 309,516.1 311,516.3 313,516.5 315,516.8 317,517.2 319,517.7 321,518.3 323,519.1 325,520.1 327,521.3 329,522.9 331,525.0 333,527.6 335,531.0 337,535.3 339,537.9 341,538.0 343,538.0 345,538.0 347,538.1 349,533.2 351,529.5 353,526.6 355,524.3 357,522.5 359,521.2 361,520.1 363,519.3 365,518.7 367,518.2 369,517.8 371,517.5 373,517.3 375,517.2 377,517.1 379,517.0 381,516.9 383,516.9 385,516.9 387,516.8 389,516.8 391,516.8 393,516.9 395,516.9 397,516.9 399,516.9 401,516.9 403,517.0 405,517.0 407,517.0 409,517.0 411,517.1 413,517.1 415,517.1 417,517.2 419,517.2 421,517.2 423,517.3 425,517.3 427,517.3 429,517.4 431,517.4 433,517.4 435,517.4 437,517.5 439,517.5 441,517.5 443,517.6 445,517.6 447,517.6 449,517.7 451,517.7 453,517.7 455,517.8 457,517.8 459,517.8 461,517.9 463,517.9 465,517.9 467,517.9 469,518.0 471,518.0 473,518.0 475,518.1 477,518.1 479,518.1 481,518.2 483,518.2 485,518.2 487,518.3 489,518.3 491,518.3 493,518.4 495,518.4 497,518.4 499,518.4 501,518.5 503,518.5 505,518.5 507,518.6 509,518.6 511,518.6 513,518.7 515,518.7 517,518.7 519,518.8 521,518.8 523,518.8 525,518.9 527,518.9 529,518.9 531,518.9 533,519.0 535,519.0 537,519.0 539,519.1 541,519.1 543,519.1 545,519.2 547,519.2 549,519.2 551,519.3 553,519.3 555,519.3 557,519.4 559,519.4 561,519.4 563,519.4 565,519.5 567,519.5 569,519.5 571,519.6 573,519.6 575,519.6 577,519.7 579,519.7 581,519.7 583,519.8 585,519.8 587,519.8 589,519.9 591,519.9 593,519.9 595,519.9 597,520.0 599,520.0 601,520.0 603,520.1 605,520.1 607,520.1 609,520.2 611,520.2 613,520.2 615,520.3 617,520.3 619,520.3 621,520.4 623,520.4 625,520.4 627,520.5 629,520.5 631,520.5 633,520.5 635,520.6 637,520.6 639,520.6 641,520.7 643,520.7 645,520.7 647,520.8 649,520.8 651,520.8 653,520.9 655,520.9 657,520.9 659,521.0 661,521.0 663,521.0 665,521.0 667,521.1 669,521.1 671,521.1 673,521.2 675,521.2 677,521.2 679,521.3 681,521.3 683,521.3 685,521.4 687,521.4 689,521.4 691,521.5 693,521.5 695,521.5 697,521.5 699,521.6 701,521.6 703,521.6 705,521.7 707,521.7 709,521.7 711,521.8 713,521.8 715,521.8 717,521.9 719,521.9 721,521.9 723,522.0 725,522.0 740,522.0 740,620 140,620" fill="#e0b000"/>
<polygon points="140,518.0 151,518.0 153,518.0 155,518.1 157,518.1 159,518.1 161,518.2 163,518.2 165,518.2 167,518.3 169,518.3 171,518.3 173,518.3 175,518.4 177,518.4 179,518.4 181,518.5 183,518.5 185,518.5 187,518.6 189,518.6 191,518.6 193,518.7 195,518.7 197,518.7 199,518.8 201,518.8 203,518.8 205,518.8 207,518.9 209,518.9 211,518.9 213,519.0 215,519.0 217,519.0 219,519.1 221,519.1 223,519.1 225,519.2 227,519.2 229,519.2 231,519.3 233,519.3 235,519.3 237,519.3 239,519.4 241,519.4 243,519.4 245,519.5 247,519.5 249,519.5 251,519.6 253,519.6 255,519.6 257,519.7 259,519.7 261,519.7 263,519.8 265,519.8 267,519.8 269,519.9 271,519.9 273,519.9 275,519.9 277,520.0 279,520.0 281,520.1 283,520.1 285,520.1 287,520.2 289,520.2 291,520.3 293,520.3 295,520.4 297,520.4 299,520.5 301,520.6 303,520.7 305,520.8 307,520.9 309,521.1 311,521.3 313,521.5 315,521.8 317,522.2 319,522.7 321,523.3 323,524.1 325,525.1 327,526.3 329,527.9 331,530.0 333,532.6 335,536.0 337,540.3 339,542.9 341,543.0 343,543.0 345,543.0 347,543.1 349,538.2 351,534.5 353,531.6 355,529.3 357,527.5 359,526.2 361,525.1 363,524.3 365,523.7 367,523.2 369,522.8 371,522.5 373,522.3 375,522.2 377,522.1 379,522.0 381,521.9 383,521.9 385,521.9 387,521.8 389,521.8 391,521.8 393,521.9 395,521.9 397,521.9 399,521.9 401,521.9 403,522.0 405,522.0 407,522.0 409,522.0 411,522.1 413,522.1 415,522.1 417,522.2 419,522.2 421,522.2 423,522.3 425,522.3 427,522.3 429,522.4 431,522.4 433,522.4 435,522.4 437,522.5 439,522.5 441,522.5 443,522.6 445,522.6 447,522.6 449,522.7 451,522.7 453,522.7 455,522.8 457,522.8 459,522.8 461,522.9 463,522.9 465,522.9 467,522.9 469,523.0 471,523.0 473,523.0 475,523.1 477,523.1 479,523.1 481,523.2 483,523.2 485,523.2 487,523.3 489,523.3 491,523.3 493,523.4 495,523.4 497,523.4 499,523.4 501,523.5 503,523.5 505,523.5 507,523.6 509,523.6 511,523.6 513,523.7 515,523.7 517,523.7 519,523.8 521,523.8 523,523.8 525,523.9 527,523.9 529,523.9 531,523.9 533,524.0 535,524.0 537,524.0 539,524.1 541,524.1 543,524.1 545,524.2 547,524.2 549,524.2 551,524.3 553,524.3 555,524.3 557,524.4 559,524.4 561,524.4 563,524.4 565,524.5 567,524.5 569,524.5 571,524.6 573,524.6 575,524.6 577,524.7 579,524.7 581,524.7 583,524.8 585,524.8 587,524.8 589,524.9 591,524.9 593,524.9 595,524.9 597,525.0 599,525.0 601,525.0 603,525.1 605,525.1 607,525.1 609,525.2 611,525.2 613,525.2 615,525.3 617,525.3 619,525.3 621,525.4 623,525.4 625,525.4 627,525.5 629,525.5 631,525.5 633,525.5 635,525.6 637,525.6 639,525.6 641,525.7 643,525.7 645,525.7 647,525.8 649,525.8 651,525.8 653,525.9 655,525.9 657,525.9 659,526.0 661,526.0 663,526.0 665,526.0 667,526.1 669,526.1 671,526.1 673,526.2 675,526.2 677,526.2 679,526.3 681,526.3 683,526.3 685,526.4 687,526.4 689,526.4 691,526.5 693,526.5 695,526.5 697,526.5 699,526.6 701,526.6 703,526.6 705,526.7 707,526.7 709,526.7 711,526.8 713,526.8 715,526.8 717,526.9 719,526.9 721,526.9 723,527.0 725,527.0 740,527.0 740,620 140,620" fill="#b0d800"/>
<polygon points="140,524.0 151,524.0 153,524.0 155,524.1 157,524.1 159,524.1 161,524.2 163,524.2 165,524.2 167,524.3 169,524.3 171,524.3 173,524.3 175,524.4 177,524.4 179,524.4 181,524.5 183,524.5 185,524.5 187,524.6 189,524.6 191,524.6 193,524.7 195,524.7 197,524.7 199,524.8 201,524.8 203,524.8 205,524.8 207,524.9 209,524.9 211,524.9 213,525.0 215,525.0 217,525.0 219,525.1 221,525.1 223,525.1 225,525.2 227,525.2 229,525.2 231,525.3 233,525.3 235,525.3 237,525.3 239,525.4 241,525.4 243,525.4 245,525.5 247,525.5 249,525.5 251,525.6 253,525.6 255,525.6 257,525.7 259,525.7 261,525.7 263,525.8 265,525.8 267,525.8 269,525.9 271,525.9 273,525.9 275,525.9 277,526.0 279,526.0 281,526.1 283,526.1 285,526.1 287,526.2 289,526.2 291,526.3 293,526.3 295,526.4 297,526.4 299,526.5 301,526.6 303,526.7 305,526.8 307,526.9 309,527.1 311,527.3 313,527.5 315,527.8 317,528.2 319,528.7 321,529.3 323,530.1 325,531.1 327,532.3 329,533.9 331,536.0 333,538.6 335,542.0 337,546.3 339,548.9 341,549.0 343,549.0 345,549.0 347,549.1 349,544.2 351,540.5 353,537.6 355,535.3 357,533.5 359,532.2 361,531.1 363,530.3 365,529.7 367,529.2 369,528.8 371,528.5 373,528.3 375,528.2 377,528.1 379,528.0 381,527.9 383,527.9 385,527.9 387,527.8 389,527.8 391,527.8 393,527.9 395,527.9 397,527.9 399,527.9 401,527.9 403,528.0 405,528.0 407,528.0 409,528.0 411,528.1 413,528.1 415,528.1 417,528.2 419,528.2 421,528.2 423,528.3 425,528.3 427,528.3 429,528.4 431,528.4 433,528.4 435,528.4 437,528.5 439,528.5 441,528.5 443,528.6 445,528.6 447,528.6 449,528.7 451,528.7 453,528.7 455,528.8 457,528.8 459,528.8 461,528.9 463,528.9 465,528.9 467,528.9 469,529.0 471,529.0 473,529.0 475,529.1 477,529.1 479,529.1 481,529.2 483,529.2 485,529.2 487,529.3 489,529.3 491,529.3 493,529.4 495,529.4 497,529.4 499,529.4 501,529.5 503,529.5 505,529.5 507,529.6 509,529.6 511,529.6 513,529.7 515,529.7 517,529.7 519,529.8 521,529.8 523,529.8 525,529.9 527,529.9 529,529.9 531,529.9 533,530.0 535,530.0 537,530.0 539,530.1 541,530.1 543,530.1 545,530.2 547,530.2 549,530.2 551,530.3 553,530.3 555,530.3 557,530.4 559,530.4 561,530.4 563,530.4 565,530.5 567,530.5 569,530.5 571,530.6 573,530.6 575,530.6 577,530.7 579,530.7 581,530.7 583,530.8 585,530.8 587,530.8 589,530.9 591,530.9 593,530.9 595,530.9 597,531.0 599,531.0 601,531.0 603,531.1 605,531.1 607,531.1 609,531.2 611,531.2 613,531.2 615,531.3 617,531.3 619,531.3 621,531.4 623,531.4 625,531.4 627,531.5 629,531.5 631,531.5 633,531.5 635,531.6 637,531.6 639,531.6 641,531.7 643,531.7 645,531.7 647,531.8 649,531.8 651,531.8 653,531.9 655,531.9 657,531.9 659,532.0 661,532.0 663,532.0 665,532.0 667,532.1 669,532.1 671,532.1 673,532.2 675,532.2 677,532.2 679,532.3 681,532.3 683,532.3 685,532.4 687,532.4 689,532.4 691,532.5 693,532.5 695,532.5 697,532.5 699,532.6 701,532.6 703,532.6 705,532.7 707,532.7 709,532.7 711,532.8 713,532.8 715,532.8 717,532.9 719,532.9 721,532.9 723,533.0 725,533.0 740,533.0 740,620 140,620" fill="#60d820"/>
<polygon points="140,529.0 151,529.0 153,529.0 155,529.1 157,529.1 159,529.1 161,529.2 163,529.2 165,529.2 167,529.3 169,529.3 171,529.3 173,529.3 175,529.4 177,529.4 179,529.4 181,529.5 183,529.5 185,529.5 187,529.6 189,529.6 191,529.6 193,529.7 195,529.7 197,529.7 199,529.8 201,529.8 203,529.8 205,529.8 207,529.9 209,529.9 211,529.9 213,530.0 215,530.0 217,530.0 219,530.1 221,530.1 223,530.1 225,530.2 227,530.2 229,530.2 231,530.3 233,530.3 235,530.3 237,530.3 239,530.4 241,530.4 243,530.4 245,530.5 247,530.5 249,530.5 251,530.6 253,530.6 255,530.6 257,530.7 259,530.7 261,530.7 263,530.8 265,530.8 267,530.8 269,530.9 271,530.9 273,530.9 275,530.9 277,531.0 279,531.0 281,531.1 283,531.1 285,531.1 287,531.2 289,531.2 291,531.3 293,531.3 295,531.4 297,531.4 299,531.5 301,531.6 303,531.7 305,531.8 307,531.9 309,532.1 311,532.3 313,532.5 315,532.8 317,533.2 319,533.7 321,534.3 323,535.1 325,536.1 327,537.3 329,538.9 331,541.0 333,543.6 335,547.0 337,551.3 339,553.9 341,554.0 343,554.0 345,554.0 347,554.1 349,549.2 351,545.5 353,542.6 355,540.3 357,538.5 359,537.2 361,536.1 363,535.3 365,534.7 367,534.2 369,533.8 371,533.5 373,533.3 375,533.2 377,533.1 379,533.0 381,532.9 383,532.9 385,532.9 387,532.8 389,532.8 391,532.8 393,532.9 395,532.9 397,532.9 399,532.9 401,532.9 403,533.0 405,533.0 407,533.0 409,533.0 411,533.1 413,533.1 415,533.1 417,533.2 419,533.2 421,533.2 423,533.3 425,533.3 427,533.3 429,533.4 431,533.4 433,533.4 435,533.4 437,533.5 439,533.5 441,533.5 443,533.6 445,533.6 447,533.6 449,533.7 451,533.7 453,533.7 455,533.8 457,533.8 459,533.8 461,533.9 463,533.9 465,533.9 467,533.9 469,534.0 471,534.0 473,534.0 475,534.1 477,534.1 479,534.1 481,534.2 483,534.2 485,534.2 487,534.3 489,534.3 491,534.3 493,534.4 495,534.4 497,534.4 499,534.4 501,534.5 503,534.5 505,534.5 507,534.6 509,534.6 511,534.6 513,534.7 515,534.7 517,534.7 519,534.8 521,534.8 523,534.8 525,534.9 527,534.9 529,534.9 531,534.9 533,535.0 535,535.0 537,535.0 539,535.1 541,535.1 543,535.1 545,535.2 547,535.2 549,535.2 551,535.3 553,535.3 555,535.3 557,535.4 559,535.4 561,535.4 563,535.4 565,535.5 567,535.5 569,535.5 571,535.6 573,535.6 575,535.6 577,535.7 579,535.7 581,535.7 583,535.8 585,535.8 587,535.8 589,535.9 591,535.9 593,535.9 595,535.9 597,536.0 599,536.0 601,536.0 603,536.1 605,536.1 607,536.1 609,536.2 611,536.2 613,536.2 615,536.3 617,536.3 619,536.3 621,536.4 623,536.4 625,536.4 627,536.5 629,536.5 631,536.5 633,536.5 635,536.6 637,536.6 639,536.6 641,536.7 643,536.7 645,536.7 647,536.8 649,536.8 651,536.8 653,536.9 655,536.9 657,536.9 659,537.0 661,537.0 663,537.0 665,537.0 667,537.1 669,537.1 671,537.1 673,537.2 675,537.2 677,537.2 679,537.3 681,537.3 683,537.3 685,537.4 687,537.4 689,537.4 691,537.5 693,537.5 695,537.5 697,537.5 699,537.6 701,537.6 703,537.6 705,537.7 707,537.7 709,537.7 711,537.8 713,537.8 715,537.8 717,537.9 719,537.9 721,537.9 723,538.0 725,538.0 740,538.0 740,620 140,620" fill="#20d840"/>
<polygon points="140,539.0 151,539.0 153,539.0 155,539.1 157,539.1 159,539.1 161,539.2 163,539.2 165,539.2 167,539.3 169,539.3 171,539.3 173,539.3 175,539.4 177,539.4 179,539.4 181,539.5 183,539.5 185,539.5 187,539.6 189,539.6 191,539.6 193,539.7 195,539.7 197,539.7 199,539.8 201,539.8 203,539.8 205,539.8 207,539.9 209,539.9 211,539.9 213,540.0 215,540.0 217,540.0 219,540.1 221,540.1 223,540.1 225,540.2 227,540.2 229,540.2 231,540.3 233,540.3 235,540.3 237,540.3 239,540.4 241,540.4 243,540.4 245,540.5 247,540.5 249,540.5 251,540.6 253,540.6 255,540.6 257,540.7 259,540.7 261,540.7 263,540.8 265,540.8 267,540.8 269,540.9 271,540.9 273,540.9 275,540.9 277,541.0 279,541.0 281,541.1 283,541.1 285,541.1 287,541.2 289,541.2 291,541.3 293,541.3 295,541.4 297,541.4 299,541.5 301,541.6 303,541.7 305,541.8 307,541.9 309,542.1 311,542.3 313,542.5 315,542.8 317,543.2 319,543.7 321,544.3 323,545.1 325,546.1 327,547.3 329,548.9 331,551.0 333,553.6 335,557.0 337,561.3 339,563.9 341,564.0 343,564.0 345,564.0 347,564.1 349,559.2 351,555.5 353,552.6 355,550.3 357,548.5 359,547.2 361,546.1 363,545.3 365,544.7 367,544.2 369,543.8 371,543.5 373,543.3 375,543.2 377,543.1 379,543.0 381,542.9 383,542.9 385,542.9 387,542.8 389,542.8 391,542.8 393,542.9 395,542.9 397,542.9 399,542.9 401,542.9 403,543.0 405,543.0 407,543.0 409,543.0 411,543.1 413,543.1 415,543.1 417,543.2 419,543.2 421,543.2 423,543.3 425,543.3 427,543.3 429,543.4 431,543.4 433,543.4 435,543.4 437,543.5 439,543.5 441,543.5 443,543.6 445,543.6 447,543.6 449,543.7 451,543.7 453,543.7 455,543.8 457,543.8 459,543.8 461,543.9 463,543.9 465,543.9 467,543.9 469,544.0 471,544.0 473,544.0 475,544.1 477,544.1 479,544.1 481,544.2 483,544.2 485,544.2 487,544.3 489,544.3 491,544.3 493,544.4 495,544.4 497,544.4 499,544.4 501,544.5 503,544.5 505,544.5 507,544.6 509,544.6 511,544.6 513,544.7 515,544.7 517,544.7 519,544.8 521,544.8 523,544.8 525,544.9 527,544.9 529,544.9 531,544.9 533,545.0 535,545.0 537,545.0 539,545.1 541,545.1 543,545.1 545,545.2 547,545.2 549,545.2 551,545.3 553,545.3 555,545.3 557,545.4 559,545.4 561,545.4 563,545.4 565,545.5 567,545.5 569,545.5 571,545.6 573,545.6 575,545.6 577,545.7 579,545.7 581,545.7 583,545.8 585,545.8 587,545.8 589,545.9 591,545.9 593,545.9 595,545.9 597,546.0 599,546.0 601,546.0 603,546.1 605,546.1 607,546.1 609,546.2 611,546.2 613,546.2 615,546.3 617,546.3 619,546.3 621,546.4 623,546.4 625,546.4 627,546.5 629,546.5 631,546.5 633,546.5 635,546.6 637,546.6 639,546.6 641,546.7 643,546.7 645,546.7 647,546.8 649,546.8 651,546.8 653,546.9 655,546.9 657,546.9 659,547.0 661,547.0 663,547.0 665,547.0 667,547.1 669,547.1 671,547.1 673,547.2 675,547.2 677,547.2 679,547.3 681,547.3 683,547.3 685,547.4 687,547.4 689,547.4 691,547.5 693,547.5 695,547.5 697,547.5 699,547.6 701,547.6 703,547.6 705,547.7 707,547.7 709,547.7 711,547.8 713,547.8 715,547.8 717,547.9 719,547.9 721,547.9 723,548.0 725,548.0 740,548.0 740,620 140,620" fill="#10d8a0"/>
<polygon points="140,544.0 151,544.0 153,544.0 155,544.1 157,544.1 159,544.1 161,544.2 163,544.2 165,544.2 167,544.3 169,544.3 171,544.3 173,544.3 175,544.4 177,544.4 179,544.4 181,544.5 183,544.5 185,544.5 187,544.6 189,544.6 191,544.6 193,544.7 195,544.7 197,544.7 199,544.8 201,544.8 203,544.8 205,544.8 207,544.9 209,544.9 211,544.9 213,545.0 215,545.0 217,545.0 219,545.1 221,545.1 223,545.1 225,545.2 227,545.2 229,545.2 231,545.3 233,545.3 235,545.3 237,545.3 239,545.4 241,545.4 243,545.4 245,545.5 247,545.5 249,545.5 251,545.6 253,545.6 255,545.6 257,545.7 259,545.7 261,545.7 263,545.8 265,545.8 267,545.8 269,545.9 271,545.9 273,545.9 275,545.9 277,546.0 279,546.0 281,546.1 283,546.1 285,546.1 287,546.2 289,546.2 291,546.3 293,546.3 295,546.4 297,546.4 299,546.5 301,546.6 303,546.7 305,546.8 307,546.9 309,547.1 311,547.3 313,547.5 315,547.8 317,548.2 319,548.7 321,549.3 323,550.1 325,551.1 327,552.3 329,553.9 331,556.0 333,558.6 335,562.0 337,566.3 339,568.9 341,569.0 343,569.0 345,569.0 347,569.1 349,564.2 351,560.5 353,557.6 355,555.3 357,553.5 359,552.2 361,551.1 363,550.3 365,549.7 367,549.2 369,548.8 371,548.5 373,548.3 375,548.2 377,548.1 379,548.0 381,547.9 383,547.9 385,547.9 387,547.8 389,547.8 391,547.8 393,547.9 395,547.9 397,547.9 399,547.9 401,547.9 403,548.0 405,548.0 407,548.0 409,548.0 411,548.1 413,548.1 415,548.1 417,548.2 419,548.2 421,548.2 423,548.3 425,548.3 427,548.3 429,548.4 431,548.4 433,548.4 435,548.4 437,548.5 439,548.5 441,548.5 443,548.6 445,548.6 447,548.6 449,548.7 451,548.7 453,548.7 455,548.8 457,548.8 459,548.8 461,548.9 463,548.9 465,548.9 467,548.9 469,549.0 471,549.0 473,549.0 475,549.1 477,549.1 479,549.1 481,549.2 483,549.2 485,549.2 487,549.3 489,549.3 491,549.3 493,549.4 495,549.4 497,549.4 499,549.4 501,549.5 503,549.5 505,549.5 507,549.6 509,549.6 511,549.6 513,549.7 515,549.7 517,549.7 519,549.8 521,549.8 523,549.8 525,549.9 527,549.9 529,549.9 531,549.9 533,550.0 535,550.0 537,550.0 539,550.1 541,550.1 543,550.1 545,550.2 547,550.2 549,550.2 551,550.3 553,550.3 555,550.3 557,550.4 559,550.4 561,550.4 563,550.4 565,550.5 567,550.5 569,550.5 571,550.6 573,550.6 575,550.6 577,550.7 579,550.7 581,550.7 583,550.8 585,550.8 587,550.8 589,550.9 591,550.9 593,550.9 595,550.9 597,551.0 599,551.0 601,551.0 603,551.1 605,551.1 607,551.1 609,551.2 611,551.2 613,551.2 615,551.3 617,551.3 619,551.3 621,551.4 623,551.4 625,551.4 627,551.5 629,551.5 631,551.5 633,551.5 635,551.6 637,551.6 639,551.6 641,551.7 643,551.7 645,551.7 647,551.8 649,551.8 651,551.8 653,551.9 655,551.9 657,551.9 659,552.0 661,552.0 663,552.0 665,552.0 667,552.1 669,552.1 671,552.1 673,552.2 675,552.2 677,552.2 679,552.3 681,552.3 683,552.3 685,552.4 687,552.4 689,552.4 691,552.5 693,552.5 695,552.5 697,552.5 699,552.6 701,552.6 703,552.6 705,552.7 707,552.7 709,552.7 711,552.8 713,552.8 715,552.8 717,552.9 719,552.9 721,552.9 723,553.0 725,553.0 740,553.0 740,620 140,620" fill="#10c8c0"/>
</g>
<path d="M172 504h1v1h-1zm15 0h1v1h-1zm-27 1h1v1h-1zm37 0h1v1h-1zm20 0h1v1h-1zm3 0h1v1h-1zm11 0h1v1h-1zm3 0h1v1h-1zm4 0h2v1h-2zm19 0h1v1h-1zm15 0h1v1h-1zm-120 1h1v1h-1zm9 0h1v1h-1zm17 0h1v1h-1zm26 0h1v1h-1zm7 0h1v1h-1zm4 0h1v1h-1zm5 0h1v1h-1zm6 0h1v1h-1zm30 0h1v1h-1zm6 0h1v1h-1zm4 0h1v1h-1zm20 0h1v1h-1zm13 0h1v1h-1zm9 0h1v1h-1zm-157 1h1v1h-1zm22 0h1v1h-1zm15 0h1v1h-1zm10 0h1v1h-1zm25 0h2v1h-2zm4 0h1v1h-1zm11 0h1v1h-1zm23 0h1v1h-1zm8 0h1v1h-1zm12 0h2v1h-2zm16 0h1v1h-1zm-141 1h1v1h-1zm14 0h1v1h-1zm4 0h1v1h-1zm16 0h3v1h-3zm12 0h1v1h-1zm10 0h1v1h-1zm4 0h1v1h-1zm9 0h1v1h-1zm9 0h1v1h-1zm19 0h1v1h-1zm10 0h1v1h-1zm23 0h1v1h-1zm5 0h1v1h-1zm77 0h1v1h-1zm19 0h1v1h-1zm9 0h1v1h-1zm5 0h2v1h-2zm5 0h1v1h-1zm4 0h1v1h-1zm2 0h1v1h-1zm3 0h1v1h-1zm17 0h1v1h-1zm10 0h1v1h-1zm4 0h1v1h-1zm17 0h1v1h-1zm-302 1h1v1h-1zm10 0h1v1h-1zm8 0h1v1h-1zm14 0h1v1h-1zm17 0h1v1h-1zm21 0h1v1h-1zm6 0h1v1h-1zm8 0h1v1h-1zm3 0h1v1h-1zm29 0h1v1h-1zm27 0h1v1h-1zm5 0h1v1h-1zm12 0h1v1h-1zm47 0h1v1h-1zm14 0h1v1h-1zm3 0h1v1h-1zm7 0h1v1h-1zm25 0h2v1h-2zm20 0h1v1h-1zm5 0h1v1h-1zm6 0h1v1h-1zm13 0h1v1h-1zm9 0h2v1h-2zm6 0h2v1h-2zm3 0h1v1h-1zm12 0h1v1h-1zm3 0h1v1h-1zm4 0h3v1h-3zm8 0h1v1h-1zm8 0h1v1h-1zm2 0h1v1h-1zm-291 1h1v1h-1zm8 0h1v1h-1zm14 0h1v1h-1zm9 0h1v1h-1zm17 0h1v1h-1zm5 0h1v1h-1zm3 0h1v1h-1zm18 0h1v1h-1zm19 0h1v1h-1zm49 0h1v1h-1zm17 0h1v1h-1zm2 0h2v1h-2zm16 0h1v1h-1zm6 0h1v1h-1zm17 0h1v1h-1zm11 0h2v1h-2zm22 0h1v1h-1zm15 0h1v1h-1zm16 0h1v1h-1zm6 0h1v1h-1zm3 0h1v1h-1zm9 0h1v1h-1zm17 0h1v1h-1zm5 0h1v1h-1zm3 0h1v1h-1zm29 0h1v1h-1zm3 0h2v1h-2zm3 0h1v1h-1zm2 0h1v1h-1zm27 0h1v1h-1zm-298 1h1v1h-1zm20 0h1v1h-1zm53 0h1v1h-1zm16 0h1v1h-1zm24 0h1v1h-1zm29 0h1v1h-1zm2 0h1v1h-1zm7 0h1v1h-1zm4 0h1v1h-1zm24 0h1v1h-1zm22 0h2v1h-2zm15 0h1v1h-1zm6 0h1v1h-1zm11 0h1v1h-1zm19 0h1v1h-1zm28 0h1v1h-1zm4 0h1v1h-1zm15 0h1v1h-1zm-273 1h1v1h-1zm36 0h1v1h-1zm16 0h1v1h-1zm6 0h2v1h-2zm6 0h1v1h-1zm6 0h1v1h-1zm12 0h1v1h-1zm4 0h1v1h-1zm5 0h1v1h-1zm5 0h1v1h-1zm9 0h1v1h-1zm16 0h2v1h-2zm5 0h1v1h-1zm10 0h1v1h-1zm4 0h1v1h-1zm14 0h1v1h-1zm20 0h1v1h-1zm15 0h1v1h-1zm7 0h2v1h-2zm12 0h1v1h-1zm5 0h1v1h-1zm13 0h1v1h-1zm29 0h1v1h-1zm23 0h1v1h-1zm4 0h1v1h-1zm6 0h1v1h-1zm5 0h1v1h-1zm12 0h1v1h-1zm14 0h1v1h-1zm4 0h1v1h-1zm2 0h1v1h-1zm2 0h1v1h-1zm3 0h1v1h-1zm8 0h1v1h-1zm10 0h1v1h-1zm9 0h1v1h-1zm32 0h1v1h-1zm6 0h1v1h-1zm-397 1h1v1h-1zm2 0h1v1h-1zm34 0h1v1h-1zm8 0h1v1h-1zm40 0h1v1h-1zm4 0h1v1h-1zm6 0h1v1h-1zm26 0h1v1h-1zm12 0h2v1h-2zm32 0h1v1h-1zm25 0h1v1h-1zm4 0h2v1h-2zm12 0h1v1h-1zm4 0h1v1h-1zm9 0h1v1h-1zm5 0h1v1h-1zm11 0h1v1h-1zm27 0h1v1h-1zm10 0h1v1h-1zm11 0h1v1h-1zm2 0h1v1h-1zm2 0h1v1h-1zm3 0h1v1h-1zm12 0h1v1h-1zm28 0h1v1h-1zm15 0h2v1h-2zm5 0h1v1h-1zm2 0h1v1h-1zm2 0h1v1h-1zm40 0h1v1h-1zm7 0h1v1h-1zm-399 1h1v1h-1zm4 0h1v1h-1zm32 0h1v1h-1zm7 0h1v1h-1zm110 0h1v1h-1zm13 0h1v1h-1zm4 0h1v1h-1zm5 0h1v1h-1zm11 0h1v1h-1zm11 0h1v1h-1zm19 0h1v1h-1zm12 0h1v1h-1zm21 0h1v1h-1zm2 0h1v1h-1zm14 0h1v1h-1zm9 0h1v1h-1zm16 0h1v1h-1zm9 0h1v1h-1zm16 0h2v1h-2zm7 0h1v1h-1zm13 0h1v1h-1zm5 0h1v1h-1zm20 0h1v1h-1zm3 0h1v1h-1zm5 0h1v1h-1zm-366 1h1v1h-1zm33 0h1v1h-1zm2 0h1v1h-1zm182 0h1v1h-1zm11 0h1v1h-1zm2 0h1v1h-1zm8 0h1v1h-1zm19 0h1v1h-1zm14 0h1v1h-1zm18 0h1v1h-1zm4 0h1v1h-1zm17 0h1v1h-1zm6 0h1v1h-1zm5 0h1v1h-1zm10 0h1v1h-1zm18 0h2v1h-2zm7 0h1v1h-1zm6 0h1v1h-1zm10 0h1v1h-1zm7 0h1v1h-1zm3 0h1v1h-1zm10 0h1v1h-1zm6 0h1v1h-1zm-100 1h1v1h-1zm6 0h1v1h-1zm13 0h1v1h-1zm2 0h1v1h-1zm33 0h1v1h-1zm5 0h1v1h-1zm8 0h1v1h-1zm7 0h1v1h-1zm-338 1h1v1h-1zm307 0h1v1h-1zm5 0h1v1h-1zm6 0h1v1h-1zm16 0h1v1h-1zm3 0h1v1h-1zm16 0h1v1h-1zm9 0h1v1h-1zm-365 2h1v1h-1zm-25 1h1v1h-1zm2 2h1v1h-1zm3 2h1v1h-1zm14 0h1v1h-1zm0 2h1v1h-1zm-11 2h1v1h-1zm1 1h1v1h-1zm-1 1h2v1h-2zm3 0h1v1h-1zm-2 1h1v1h-1zm2 0h1v1h-1zm2 1h1v1h-1zm1 1h1v1h-1zm2 1h1v1h-1z" fill="#f07000"/>
<path d="M159 510h1v1h-1zm12 0h2v1h-2zm8 0h1v1h-1zm3 0h1v1h-1zm27 0h1v1h-1zm-57 1h1v1h-1zm20 0h1v1h-1zm6 0h1v1h-1zm12 0h3v1h-3zm4 0h1v1h-1zm10 0h1v1h-1zm2 0h1v1h-1zm13 0h1v1h-1zm4 0h1v1h-1zm5 0h1v1h-1zm5 0h1v1h-1zm4 0h2v1h-2zm15 0h1v1h-1zm22 0h1v1h-1zm-123 1h1v1h-1zm2 0h1v1h-1zm20 0h1v1h-1zm8 0h1v1h-1zm9 0h1v1h-1zm14 0h1v1h-1zm31 0h2v1h-2zm5 0h1v1h-1zm11 0h1v1h-1zm3 0h1v1h-1zm44 0h1v1h-1zm3 0h1v1h-1zm6 0h1v1h-1zm-151 1h1v1h-1zm33 0h1v1h-1zm17 0h1v1h-1zm27 0h1v1h-1zm4 0h1v1h-1zm6 0h1v1h-1zm8 0h1v1h-1zm20 0h1v1h-1zm5 0h1v1h-1zm2 0h1v1h-1zm16 0h1v1h-1zm11 0h1v1h-1zm91 0h1v1h-1zm-180 1h1v1h-1zm15 0h1v1h-1zm33 0h1v1h-1zm18 0h2v1h-2zm11 0h1v1h-1zm7 0h2v1h-2zm7 0h1v1h-1zm90 0h1v1h-1zm31 0h1v1h-1zm6 0h2v1h-2zm10 0h1v1h-1zm9 0h1v1h-1zm10 0h1v1h-1zm-183 1h1v1h-1zm2 0h1v1h-1zm19 0h1v1h-1zm11 0h1v1h-1zm69 0h2v1h-2zm3 0h1v1h-1zm23 0h1v1h-1zm19 0h1v1h-1zm46 0h1v1h-1zm2 0h1v1h-1zm21 0h1v1h-1zm3 0h1v1h-1zm10 0h1v1h-1zm3 0h1v1h-1zm7 0h1v1h-1zm-209 1h1v1h-1zm56 0h1v1h-1zm6 0h1v1h-1zm4 0h1v1h-1zm5 0h1v1h-1zm17 0h2v1h-2zm29 0h1v1h-1zm27 0h1v1h-1zm34 0h1v1h-1zm5 0h1v1h-1zm15 0h1v1h-1zm3 0h1v1h-1zm2 0h1v1h-1zm9 0h1v1h-1zm7 0h1v1h-1zm4 0h1v1h-1zm9 0h1v1h-1zm6 0h1v1h-1zm15 0h1v1h-1zm10 0h1v1h-1zm6 0h1v1h-1zm2 0h1v1h-1zm9 0h1v1h-1zm4 0h1v1h-1zm-272 1h2v1h-2zm4 0h1v1h-1zm81 0h1v1h-1zm2 0h2v1h-2zm31 0h1v1h-1zm13 0h1v1h-1zm28 0h1v1h-1zm6 0h1v1h-1zm9 0h2v1h-2zm13 0h2v1h-2zm15 0h1v1h-1zm21 0h1v1h-1zm3 0h1v1h-1zm7 0h2v1h-2zm5 0h1v1h-1zm39 0h1v1h-1zm9 0h1v1h-1zm15 0h1v1h-1zm11 0h1v1h-1zm8 0h1v1h-1zm4 0h2v1h-2zm3 0h1v1h-1zm-287 1h1v1h-1zm133 0h1v1h-1zm17 0h1v1h-1zm31 0h1v1h-1zm12 0h1v1h-1zm6 0h1v1h-1zm4 0h1v1h-1zm17 0h1v1h-1zm6 0h1v1h-1zm12 0h1v1h-1zm12 0h1v1h-1zm4 0h1v1h-1zm10 0h2v1h-2zm8 0h1v1h-1zm17 0h1v1h-1zm8 0h2v1h-2zm11 0h1v1h-1zm5 0h1v1h-1zm4 0h2v1h-2zm24 0h1v1h-1zm2 0h2v1h-2zm17 0h1v1h-1zm-396 1h1v1h-1zm214 0h1v1h-1zm21 0h1v1h-1zm7 0h1v1h-1zm3 0h1v1h-1zm2 0h1v1h-1zm5 0h1v1h-1zm20 0h1v1h-1zm3 0h1v1h-1zm5 0h1v1h-1zm6 0h1v1h-1zm8 0h2v1h-2zm8 0h1v1h-1zm16 0h1v1h-1zm11 0h1v1h-1zm25 0h1v1h-1zm4 0h1v1h-1zm4 0h4v1h-4zm11 0h2v1h-2zm8 0h1v1h-1zm17 0h1v1h-1zm-366 1h1v1h-1zm262 0h2v1h-2zm14 0h1v1h-1zm15 0h1v1h-1zm14 0h1v1h-1zm27 0h2v1h-2zm6 0h1v1h-1zm3 0h2v1h-2zm8 0h1v1h-1zm3 0h1v1h-1zm6 0h1v1h-1zm-388 1h1v1h-1zm344 0h1v1h-1zm9 0h1v1h-1zm-327 2h1v1h-1zm-195 2h1v1h-1zm3 0h2v1h-2zm12 0h1v1h-1zm8 0h1v1h-1zm2 0h1v1h-1zm14 0h1v1h-1zm6 0h1v1h-1zm4 0h1v1h-1zm4 0h1v1h-1zm141 0h1v1h-1zm2 0h1v1h-1zm-191 1h1v1h-1zm6 0h1v1h-1zm22 0h1v1h-1zm26 0h1v1h-1zm2 0h1v1h-1zm40 0h1v1h-1zm7 0h2v1h-2zm-113 1h2v1h-2zm25 0h1v1h-1zm31 0h1v1h-1zm13 0h1v1h-1zm17 0h1v1h-1zm3 0h1v1h-1zm8 0h1v1h-1zm6 0h1v1h-1zm24 0h1v1h-1zm7 0h1v1h-1zm-133 1h1v1h-1zm7 0h1v1h-1zm4 0h1v1h-1zm3 0h1v1h-1zm6 0h1v1h-1zm53 0h1v1h-1zm16 0h1v1h-1zm2 0h1v1h-1zm21 0h1v1h-1zm20 0h1v1h-1zm9 0h1v1h-1zm4 0h1v1h-1zm13 0h1v1h-1zm69 0h1v1h-1zm-226 1h1v1h-1zm46 0h1v1h-1zm3 0h1v1h-1zm5 0h1v1h-1zm6 0h4v1h-4zm6 0h1v1h-1zm8 0h1v1h-1zm5 0h1v1h-1zm2 0h1v1h-1zm57 0h1v1h-1zm25 0h1v1h-1zm50 0h1v1h-1zm5 0h1v1h-1zm4 0h1v1h-1zm9 0h2v1h-2zm4 0h2v1h-2zm4 0h1v1h-1zm5 0h1v1h-1zm5 0h1v1h-1zm17 0h1v1h-1zm4 0h1v1h-1zm25 0h1v1h-1zm18 0h1v1h-1zm-244 1h1v1h-1zm20 0h1v1h-1zm17 0h1v1h-1zm20 0h1v1h-1zm9 0h1v1h-1zm12 0h1v1h-1zm6 0h1v1h-1zm27 0h1v1h-1zm48 0h1v1h-1zm2 0h1v1h-1zm12 0h1v1h-1zm4 0h1v1h-1zm4 0h1v1h-1zm3 0h1v1h-1zm3 0h1v1h-1zm24 0h2v1h-2zm10 0h1v1h-1zm8 0h1v1h-1zm2 0h1v1h-1zm13 0h1v1h-1zm2 0h2v1h-2zm9 0h1v1h-1zm13 0h1v1h-1zm29 0h1v1h-1zm2 0h1v1h-1zm9 0h1v1h-1zm-234 1h1v1h-1zm12 0h1v1h-1zm4 0h1v1h-1zm52 0h1v1h-1zm7 0h1v1h-1zm3 0h1v1h-1zm13 0h2v1h-2zm15 0h1v1h-1zm4 0h1v1h-1zm8 0h1v1h-1zm27 0h1v1h-1zm10 0h1v1h-1zm4 0h1v1h-1zm2 0h1v1h-1zm7 0h1v1h-1zm21 0h1v1h-1zm30 0h1v1h-1zm17 0h1v1h-1zm24 0h1v1h-1zm-245 1h1v1h-1zm2 0h1v1h-1zm10 0h1v1h-1zm43 0h1v1h-1zm2 0h1v1h-1zm2 0h1v1h-1zm6 0h1v1h-1zm5 0h1v1h-1zm4 0h1v1h-1zm29 0h1v1h-1zm6 0h1v1h-1zm25 0h1v1h-1zm5 0h1v1h-1zm5 0h1v1h-1zm29 0h1v1h-1zm40 0h2v1h-2zm16 0h1v1h-1zm17 0h1v1h-1zm5 0h1v1h-1zm20 0h2v1h-2zm3 0h1v1h-1zm15 0h1v1h-1zm4 0h1v1h-1zm2 0h1v1h-1zm17 0h1v1h-1zm4 0h1v1h-1zm10 0h1v1h-1zm2 0h1v1h-1zm11 0h1v1h-1zm3 0h1v1h-1zm-294 1h1v1h-1zm53 0h1v1h-1zm2 0h1v1h-1zm6 0h1v1h-1zm13 0h1v1h-1zm20 0h1v1h-1zm11 0h1v1h-1zm15 0h1v1h-1zm2 0h1v1h-1zm15 0h1v1h-1zm28 0h1v1h-1zm19 0h1v1h-1zm2 0h2v1h-2zm6 0h1v1h-1zm8 0h1v1h-1zm2 0h2v1h-2zm10 0h1v1h-1zm2 0h1v1h-1zm4 0h1v1h-1zm13 0h1v1h-1zm23 0h1v1h-1zm20 0h1v1h-1zm3 0h1v1h-1zm10 0h1v1h-1zm18 0h1v1h-1zm3 0h1v1h-1zm7 0h3v1h-3zm5 0h1v1h-1zm7 0h1v1h-1zm8 0h2v1h-2zm7 0h1v1h-1zm20 0h1v1h-1zm-386 1h1v1h-1zm21 0h1v1h-1zm3 0h1v1h-1zm114 0h1v1h-1zm8 0h1v1h-1zm26 0h1v1h-1zm7 0h1v1h-1zm3 0h1v1h-1zm9 0h1v1h-1zm4 0h2v1h-2zm17 0h1v1h-1zm3 0h1v1h-1zm14 0h1v1h-1zm44 0h1v1h-1zm12 0h1v1h-1zm22 0h1v1h-1zm10 0h1v1h-1zm5 0h3v1h-3zm11 0h1v1h-1zm23 0h1v1h-1zm2 0h1v1h-1zm16 0h1v1h-1zm-386 1h1v1h-1zm2 0h1v1h-1zm30 0h1v1h-1zm3 0h1v1h-1zm181 0h2v1h-2zm4 0h2v1h-2zm5 0h1v1h-1zm37 0h1v1h-1zm5 0h1v1h-1zm2 0h1v1h-1zm9 0h1v1h-1zm4 0h1v1h-1zm13 0h1v1h-1zm7 0h1v1h-1zm2 0h1v1h-1zm40 0h1v1h-1zm22 0h1v1h-1zm14 0h1v1h-1zm-375 1h1v1h-1zm9 0h1v1h-1zm267 0h1v1h-1zm9 0h1v1h-1zm7 0h1v1h-1zm4 0h1v1h-1zm3 0h1v1h-1zm9 0h1v1h-1zm8 0h1v1h-1zm11 0h1v1h-1zm16 0h1v1h-1zm39 0h1v1h-1zm5 0h1v1h-1zm-386 1h1v1h-1zm8 0h1v1h-1zm325 0h1v1h-1zm3 0h1v1h-1zm20 0h1v1h-1zm2 0h1v1h-1zm-360 1h1v1h-1zm2 1h1v1h-1zm25 0h1v1h-1zm-2 1h1v1h-1zm-1 2h1v1h-1zm-12 7h1v1h-1zm-2 1h1v1h-1zm6 1h1v1h-1zm-2 1h1v1h-1zm3 0h1v1h-1z" fill="#e0d000"/>
<path d="M195 514h1v1h-1zm11 0h1v1h-1zm4 0h1v1h-1zm-59 1h1v1h-1zm3 0h1v1h-1zm2 0h1v1h-1zm11 0h1v1h-1zm4 0h1v1h-1zm16 0h1v1h-1zm7 0h2v1h-2zm3 0h1v1h-1zm4 0h1v1h-1zm18 0h1v1h-1zm14 0h1v1h-1zm9 0h1v1h-1zm3 0h1v1h-1zm11 0h1v1h-1zm13 0h1v1h-1zm-103 1h1v1h-1zm7 0h1v1h-1zm8 0h1v1h-1zm24 0h2v1h-2zm4 0h1v1h-1zm2 0h1v1h-1zm19 0h1v1h-1zm7 0h1v1h-1zm12 0h1v1h-1zm30 0h1v1h-1zm9 0h1v1h-1zm18 0h1v1h-1zm-153 1h1v1h-1zm11 0h1v1h-1zm9 0h1v1h-1zm18 0h1v1h-1zm9 0h1v1h-1zm5 0h2v1h-2zm3 0h1v1h-1zm11 0h1v1h-1zm5 0h1v1h-1zm4 0h1v1h-1zm4 0h2v1h-2zm4 0h1v1h-1zm10 0h1v1h-1zm6 0h1v1h-1zm9 0h2v1h-2zm5 0h1v1h-1zm8 0h1v1h-1zm8 0h1v1h-1zm6 0h1v1h-1zm4 0h1v1h-1zm2 0h1v1h-1zm13 0h2v1h-2zm79 0h2v1h-2zm-231 1h1v1h-1zm7 0h1v1h-1zm2 0h1v1h-1zm17 0h1v1h-1zm2 0h1v1h-1zm2 0h1v1h-1zm8 0h1v1h-1zm2 0h1v1h-1zm3 0h1v1h-1zm15 0h1v1h-1zm11 0h1v1h-1zm4 0h3v1h-3zm46 0h1v1h-1zm2 0h1v1h-1zm3 0h1v1h-1zm10 0h1v1h-1zm10 0h1v1h-1zm11 0h1v1h-1zm10 0h1v1h-1zm83 0h1v1h-1zm3 0h1v1h-1zm10 0h1v1h-1zm29 0h1v1h-1zm21 0h1v1h-1zm4 0h1v1h-1zm-255 1h1v1h-1zm10 0h2v1h-2zm10 0h1v1h-1zm4 0h1v1h-1zm32 0h1v1h-1zm13 0h1v1h-1zm2 0h1v1h-1zm3 0h1v1h-1zm24 0h1v1h-1zm7 0h1v1h-1zm46 0h1v1h-1zm8 0h1v1h-1zm2 0h1v1h-1zm30 0h1v1h-1zm3 0h2v1h-2zm5 0h1v1h-1zm5 0h1v1h-1zm10 0h1v1h-1zm23 0h1v1h-1zm3 0h1v1h-1zm13 0h1v1h-1zm17 0h1v1h-1zm26 0h1v1h-1zm11 0h1v1h-1zm3 0h1v1h-1zm9 0h1v1h-1zm-255 1h1v1h-1zm12 0h1v1h-1zm16 0h1v1h-1zm12 0h1v1h-1zm43 0h1v1h-1zm5 0h1v1h-1zm14 0h1v1h-1zm7 0h1v1h-1zm30 0h1v1h-1zm55 0h1v1h-1zm6 0h1v1h-1zm31 0h1v1h-1zm14 0h1v1h-1zm10 0h1v1h-1zm11 0h1v1h-1zm4 0h1v1h-1zm28 0h1v1h-1zm4 0h1v1h-1zm3 0h1v1h-1zm7 0h1v1h-1zm-273 1h2v1h-2zm48 0h1v1h-1zm13 0h1v1h-1zm7 0h1v1h-1zm52 0h2v1h-2zm21 0h1v1h-1zm20 0h1v1h-1zm20 0h2v1h-2zm40 0h1v1h-1zm2 0h1v1h-1zm5 0h1v1h-1zm3 0h1v1h-1zm4 0h1v1h-1zm13 0h1v1h-1zm26 0h2v1h-2zm17 0h1v1h-1zm20 0h1v1h-1zm13 0h1v1h-1zm7 0h1v1h-1zm-240 1h1v1h-1zm2 0h2v1h-2zm16 0h1v1h-1zm5 0h1v1h-1zm2 0h1v1h-1zm3 0h1v1h-1zm32 0h1v1h-1zm12 0h1v1h-1zm30 0h1v1h-1zm5 0h2v1h-2zm9 0h1v1h-1zm6 0h1v1h-1zm17 0h2v1h-2zm35 0h1v1h-1zm17 0h2v1h-2zm4 0h1v1h-1zm2 0h1v1h-1zm11 0h2v1h-2zm11 0h1v1h-1zm3 0h1v1h-1zm21 0h1v1h-1zm13 0h1v1h-1zm6 0h1v1h-1zm10 0h2v1h-2zm9 0h1v1h-1zm2 0h1v1h-1zm3 0h1v1h-1zm6 0h1v1h-1zm3 0h1v1h-1zm7 0h1v1h-1zm11 0h1v1h-1zm-244 1h1v1h-1zm3 0h1v1h-1zm8 0h1v1h-1zm27 0h1v1h-1zm5 0h1v1h-1zm2 0h1v1h-1zm10 0h1v1h-1zm3 0h2v1h-2zm13 0h1v1h-1zm29 0h1v1h-1zm32 0h1v1h-1zm8 0h1v1h-1zm5 0h1v1h-1zm12 0h1v1h-1zm14 0h1v1h-1zm7 0h1v1h-1zm13 0h1v1h-1zm8 0h1v1h-1zm4 0h2v1h-2zm25 0h1v1h-1zm11 0h2v1h-2zm-360 1h1v1h-1zm179 0h1v1h-1zm3 0h1v1h-1zm2 0h1v1h-1zm8 0h1v1h-1zm34 0h1v1h-1zm10 0h1v1h-1zm7 0h1v1h-1zm4 0h1v1h-1zm16 0h1v1h-1zm11 0h1v1h-1zm6 0h1v1h-1zm3 0h1v1h-1zm18 0h1v1h-1zm2 0h1v1h-1zm2 0h1v1h-1zm4 0h1v1h-1zm7 0h1v1h-1zm13 0h1v1h-1zm4 0h2v1h-2zm4 0h1v1h-1zm4 0h1v1h-1zm5 0h1v1h-1zm-372 1h1v1h-1zm29 0h1v1h-1zm252 0h1v1h-1zm14 0h1v1h-1zm14 0h2v1h-2zm13 0h1v1h-1zm4 0h4v1h-4zm24 0h1v1h-1zm2 0h1v1h-1zm11 0h1v1h-1zm15 0h1v1h-1zm3 0h1v1h-1zm5 0h1v1h-1zm5 0h1v1h-1zm-392 1h1v1h-1zm25 0h1v1h-1zm319 0h1v1h-1zm7 0h1v1h-1zm29 0h1v1h-1zm2 0h1v1h-1zm12 0h1v1h-1zm-372 2h1v1h-1zm-1 2h1v1h-1zm1 2h1v1h-1zm-3 6h1v1h-1zm-8 1h1v1h-1zm4 1h1v1h-1zm-2 1h1v1h-1zm4 0h1v1h-1z" fill="#e06000"/>
<path d="M166 514h1v1h-1zm6 0h1v1h-1zm10 0h1v1h-1zm11 0h1v1h-1zm3 0h1v1h-1zm7 0h1v1h-1zm9 0h1v1h-1zm2 0h1v1h-1zm-45 1h1v1h-1zm21 0h2v1h-2zm3 0h1v1h-1zm13 0h1v1h-1zm9 0h1v1h-1zm17 0h1v1h-1zm9 0h1v1h-1zm12 0h1v1h-1zm6 0h3v1h-3zm-108 1h1v1h-1zm11 0h1v1h-1zm3 0h1v1h-1zm17 0h1v1h-1zm43 0h1v1h-1zm2 0h2v1h-2zm14 0h1v1h-1zm3 0h1v1h-1zm2 0h1v1h-1zm10 0h1v1h-1zm14 0h1v1h-1zm2 0h1v1h-1zm14 0h1v1h-1zm13 0h1v1h-1zm3 0h1v1h-1zm-144 1h1v1h-1zm7 0h1v1h-1zm3 0h1v1h-1zm26 0h1v1h-1zm19 0h1v1h-1zm10 0h1v1h-1zm12 0h1v1h-1zm2 0h1v1h-1zm2 0h1v1h-1zm6 0h1v1h-1zm2 0h1v1h-1zm6 0h1v1h-1zm19 0h1v1h-1zm31 0h1v1h-1zm2 0h1v1h-1zm5 0h1v1h-1zm4 0h1v1h-1zm84 0h1v1h-1zm4 0h1v1h-1zm2 0h1v1h-1zm-247 1h1v1h-1zm4 0h1v1h-1zm8 0h1v1h-1zm10 0h1v1h-1zm17 0h1v1h-1zm3 0h1v1h-1zm10 0h1v1h-1zm11 0h1v1h-1zm5 0h1v1h-1zm22 0h1v1h-1zm13 0h2v1h-2zm6 0h1v1h-1zm16 0h1v1h-1zm2 0h1v1h-1zm6 0h1v1h-1zm19 0h1v1h-1zm2 0h1v1h-1zm4 0h2v1h-2zm4 0h1v1h-1zm51 0h1v1h-1zm8 0h1v1h-1zm8 0h1v1h-1zm6 0h1v1h-1zm8 0h1v1h-1zm4 0h1v1h-1zm7 0h1v1h-1zm41 0h1v1h-1zm13 0h1v1h-1zm-237 1h1v1h-1zm12 0h1v1h-1zm2 0h1v1h-1zm19 0h1v1h-1zm21 0h1v1h-1zm15 0h1v1h-1zm22 0h1v1h-1zm67 0h1v1h-1zm19 0h1v1h-1zm10 0h1v1h-1zm19 0h1v1h-1zm29 0h1v1h-1zm2 0h1v1h-1zm7 0h1v1h-1zm11 0h1v1h-1zm4 0h1v1h-1zm4 0h1v1h-1zm5 0h1v1h-1zm2 0h1v1h-1zm26 0h1v1h-1zm-244 1h1v1h-1zm14 0h1v1h-1zm72 0h1v1h-1zm3 0h1v1h-1zm14 0h2v1h-2zm14 0h1v1h-1zm7 0h1v1h-1zm4 0h1v1h-1zm6 0h1v1h-1zm7 0h1v1h-1zm41 0h1v1h-1zm3 0h1v1h-1zm12 0h1v1h-1zm21 0h1v1h-1zm6 0h1v1h-1zm7 0h1v1h-1zm5 0h1v1h-1zm7 0h1v1h-1zm5 0h1v1h-1zm8 0h1v1h-1zm11 0h1v1h-1zm23 0h1v1h-1zm3 0h2v1h-2zm23 0h1v1h-1zm-284 1h1v1h-1zm8 0h1v1h-1zm3 0h1v1h-1zm41 0h2v1h-2zm11 0h1v1h-1zm13 0h1v1h-1zm2 0h1v1h-1zm13 0h1v1h-1zm2 0h1v1h-1zm2 0h3v1h-3zm4 0h1v1h-1zm11 0h1v1h-1zm3 0h1v1h-1zm25 0h1v1h-1zm6 0h1v1h-1zm24 0h1v1h-1zm18 0h1v1h-1zm15 0h1v1h-1zm10 0h2v1h-2zm3 0h1v1h-1zm7 0h1v1h-1zm2 0h2v1h-2zm16 0h1v1h-1zm12 0h1v1h-1zm11 0h1v1h-1zm2 0h1v1h-1zm28 0h1v1h-1zm3 0h1v1h-1zm5 0h1v1h-1zm15 0h1v1h-1zm7 0h1v1h-1zm6 0h1v1h-1zm12 0h1v1h-1zm3 0h1v1h-1zm7 0h1v1h-1zm-335 1h1v1h-1zm33 0h1v1h-1zm13 0h1v1h-1zm2 0h1v1h-1zm31 0h1v1h-1zm13 0h1v1h-1zm4 0h1v1h-1zm5 0h1v1h-1zm22 0h1v1h-1zm24 0h1v1h-1zm3 0h1v1h-1zm12 0h1v1h-1zm18 0h1v1h-1zm3 0h1v1h-1zm11 0h1v1h-1zm8 0h1v1h-1zm3 0h1v1h-1zm13 0h1v1h-1zm16 0h1v1h-1zm7 0h1v1h-1zm8 0h1v1h-1zm11 0h1v1h-1zm4 0h1v1h-1zm2 0h2v1h-2zm32 0h1v1h-1zm9 0h1v1h-1zm14 0h1v1h-1zm29 0h1v1h-1zm17 0h1v1h-1zm4 0h1v1h-1zm-341 1h1v1h-1zm6 0h1v1h-1zm119 0h1v1h-1zm8 0h1v1h-1zm19 0h1v1h-1zm22 0h1v1h-1zm10 0h1v1h-1zm6 0h1v1h-1zm12 0h1v1h-1zm4 0h1v1h-1zm4 0h1v1h-1zm3 0h1v1h-1zm6 0h1v1h-1zm13 0h1v1h-1zm4 0h1v1h-1zm9 0h1v1h-1zm2 0h1v1h-1zm26 0h1v1h-1zm17 0h1v1h-1zm3 0h1v1h-1zm20 0h1v1h-1zm8 0h1v1h-1zm18 0h1v1h-1zm4 0h1v1h-1zm11 0h1v1h-1zm-388 1h1v1h-1zm40 0h1v1h-1zm184 0h1v1h-1zm60 0h1v1h-1zm9 0h1v1h-1zm2 0h1v1h-1zm16 0h1v1h-1zm4 0h1v1h-1zm6 0h1v1h-1zm8 0h2v1h-2zm15 0h1v1h-1zm4 0h1v1h-1zm17 0h1v1h-1zm16 0h2v1h-2zm-378 1h1v1h-1zm4 0h1v1h-1zm29 0h1v1h-1zm242 0h2v1h-2zm6 0h1v1h-1zm32 0h1v1h-1zm39 0h1v1h-1zm9 0h1v1h-1zm17 0h1v1h-1zm7 0h1v1h-1zm2 0h1v1h-1zm3 0h1v1h-1zm3 0h1v1h-1zm-362 1h1v1h-1zm310 0h1v1h-1zm8 0h1v1h-1zm2 0h1v1h-1zm6 0h1v1h-1zm19 0h1v1h-1zm6 0h1v1h-1zm6 0h1v1h-1zm6 0h1v1h-1zm-365 2h1v1h-1zm-3 2h1v1h-1zm-17 5h1v1h-1zm1 1h1v1h-1zm12 0h2v1h-2zm-11 3h1v1h-1zm8 0h1v1h-1z" fill="#90e000"/>
<path d="M154 519h1v1h-1zm16 0h1v1h-1zm11 0h1v1h-1zm3 0h1v1h-1zm4 0h2v1h-2zm-26 1h1v1h-1zm9 0h1v1h-1zm7 0h1v1h-1zm3 0h2v1h-2zm5 0h1v1h-1zm7 0h1v1h-1zm24 0h1v1h-1zm5 0h2v1h-2zm35 0h1v1h-1zm2 0h1v1h-1zm7 0h2v1h-2zm-115 1h1v1h-1zm9 0h1v1h-1zm11 0h1v1h-1zm3 0h1v1h-1zm5 0h2v1h-2zm9 0h1v1h-1zm12 0h1v1h-1zm20 0h2v1h-2zm11 0h1v1h-1zm8 0h1v1h-1zm17 0h1v1h-1zm11 0h1v1h-1zm32 0h1v1h-1zm7 0h1v1h-1zm2 0h1v1h-1zm-155 1h1v1h-1zm27 0h1v1h-1zm8 0h1v1h-1zm30 0h1v1h-1zm21 0h1v1h-1zm3 0h1v1h-1zm16 0h1v1h-1zm12 0h1v1h-1zm5 0h1v1h-1zm12 0h1v1h-1zm3 0h1v1h-1zm7 0h1v1h-1zm18 0h1v1h-1zm68 0h1v1h-1zm7 0h1v1h-1zm-238 1h1v1h-1zm6 0h1v1h-1zm12 0h1v1h-1zm35 0h1v1h-1zm17 0h2v1h-2zm5 0h1v1h-1zm11 0h1v1h-1zm15 0h1v1h-1zm5 0h1v1h-1zm5 0h1v1h-1zm13 0h1v1h-1zm3 0h1v1h-1zm32 0h1v1h-1zm6 0h1v1h-1zm117 0h1v1h-1zm2 0h1v1h-1zm4 0h1v1h-1zm10 0h1v1h-1zm14 0h1v1h-1zm2 0h1v1h-1zm-289 1h1v1h-1zm6 0h1v1h-1zm17 0h1v1h-1zm11 0h1v1h-1zm69 0h1v1h-1zm7 0h1v1h-1zm15 0h1v1h-1zm4 0h1v1h-1zm10 0h1v1h-1zm50 0h1v1h-1zm3 0h1v1h-1zm3 0h1v1h-1zm9 0h1v1h-1zm10 0h1v1h-1zm24 0h1v1h-1zm5 0h1v1h-1zm9 0h3v1h-3zm15 0h1v1h-1zm3 0h1v1h-1zm2 0h1v1h-1zm16 0h1v1h-1zm3 0h1v1h-1zm2 0h1v1h-1zm10 0h1v1h-1zm2 0h1v1h-1zm9 0h1v1h-1zm3 0h3v1h-3zm6 0h1v1h-1zm2 0h1v1h-1zm19 0h1v1h-1zm8 0h1v1h-1zm2 0h1v1h-1zm-290 1h1v1h-1zm12 0h1v1h-1zm4 0h2v1h-2zm64 0h1v1h-1zm66 0h1v1h-1zm9 0h1v1h-1zm30 0h1v1h-1zm3 0h1v1h-1zm7 0h1v1h-1zm2 0h1v1h-1zm5 0h1v1h-1zm10 0h1v1h-1zm2 0h1v1h-1zm3 0h1v1h-1zm11 0h1v1h-1zm7 0h1v1h-1zm30 0h1v1h-1zm12 0h1v1h-1zm16 0h1v1h-1zm11 0h1v1h-1zm32 0h1v1h-1zm3 0h1v1h-1zm4 0h1v1h-1zm3 0h1v1h-1zm2 0h1v1h-1zm9 0h1v1h-1zm-318 1h1v1h-1zm31 0h1v1h-1zm9 0h1v1h-1zm40 0h1v1h-1zm8 0h1v1h-1zm6 0h1v1h-1zm2 0h1v1h-1zm16 0h1v1h-1zm9 0h1v1h-1zm18 0h1v1h-1zm13 0h1v1h-1zm19 0h1v1h-1zm7 0h1v1h-1zm13 0h1v1h-1zm19 0h1v1h-1zm25 0h2v1h-2zm17 0h1v1h-1zm12 0h1v1h-1zm19 0h4v1h-4zm8 0h1v1h-1zm13 0h1v1h-1zm9 0h1v1h-1zm11 0h1v1h-1zm8 0h1v1h-1zm4 0h1v1h-1zm5 0h1v1h-1zm11 0h1v1h-1zm3 0h1v1h-1zm15 0h1v1h-1zm12 0h1v1h-1zm-342 1h1v1h-1zm2 0h1v1h-1zm42 0h1v1h-1zm5 0h1v1h-1zm9 0h1v1h-1zm3 0h1v1h-1zm7 0h1v1h-1zm6 0h1v1h-1zm25 0h1v1h-1zm2 0h1v1h-1zm9 0h1v1h-1zm14 0h1v1h-1zm14 0h1v1h-1zm3 0h1v1h-1zm12 0h1v1h-1zm2 0h1v1h-1zm10 0h1v1h-1zm27 0h1v1h-1zm7 0h1v1h-1zm22 0h1v1h-1zm17 0h1v1h-1zm8 0h1v1h-1zm7 0h1v1h-1zm15 0h1v1h-1zm11 0h1v1h-1zm5 0h1v1h-1zm3 0h1v1h-1zm3 0h1v1h-1zm2 0h1v1h-1zm5 0h1v1h-1zm3 0h1v1h-1zm6 0h1v1h-1zm12 0h1v1h-1zm29 0h1v1h-1zm4 0h1v1h-1zm3 0h1v1h-1zm3 0h2v1h-2zm8 0h1v1h-1zm21 0h1v1h-1zm-343 1h1v1h-1zm5 0h1v1h-1zm10 0h1v1h-1zm32 0h2v1h-2zm5 0h1v1h-1zm21 0h1v1h-1zm6 0h1v1h-1zm11 0h3v1h-3zm16 0h1v1h-1zm9 0h1v1h-1zm7 0h1v1h-1zm13 0h1v1h-1zm2 0h1v1h-1zm51 0h1v1h-1zm28 0h1v1h-1zm2 0h1v1h-1zm3 0h1v1h-1zm17 0h1v1h-1zm11 0h1v1h-1zm4 0h1v1h-1zm8 0h1v1h-1zm21 0h1v1h-1zm25 0h1v1h-1zm5 0h1v1h-1zm4 0h1v1h-1zm5 0h1v1h-1zm9 0h1v1h-1zm3 0h1v1h-1zm20 0h1v1h-1zm-386 1h1v1h-1zm31 0h1v1h-1zm4 0h1v1h-1zm119 0h1v1h-1zm9 0h1v1h-1zm9 0h1v1h-1zm15 0h1v1h-1zm7 0h1v1h-1zm6 0h1v1h-1zm16 0h1v1h-1zm6 0h1v1h-1zm6 0h2v1h-2zm3 0h1v1h-1zm31 0h1v1h-1zm7 0h1v1h-1zm11 0h2v1h-2zm12 0h1v1h-1zm5 0h2v1h-2zm17 0h1v1h-1zm2 0h1v1h-1zm8 0h2v1h-2zm6 0h1v1h-1zm12 0h1v1h-1zm13 0h1v1h-1zm4 0h1v1h-1zm7 0h1v1h-1zm4 0h1v1h-1zm12 0h1v1h-1zm-386 1h1v1h-1zm29 0h2v1h-2zm185 0h1v1h-1zm2 0h1v1h-1zm9 0h1v1h-1zm3 0h1v1h-1zm8 0h1v1h-1zm3 0h1v1h-1zm7 0h1v1h-1zm6 0h1v1h-1zm13 0h1v1h-1zm6 0h1v1h-1zm10 0h1v1h-1zm76 0h1v1h-1zm13 0h1v1h-1zm7 0h1v1h-1zm9 0h1v1h-1zm11 0h1v1h-1zm-395 1h1v1h-1zm2 0h1v1h-1zm27 0h1v1h-1zm2 0h1v1h-1zm252 0h1v1h-1zm5 0h1v1h-1zm2 0h1v1h-1zm30 0h1v1h-1zm16 0h1v1h-1zm10 0h2v1h-2zm7 0h2v1h-2zm9 0h1v1h-1zm5 0h1v1h-1zm5 0h1v1h-1zm6 0h1v1h-1zm19 0h1v1h-1zm-59 1h1v1h-1zm16 0h1v1h-1zm9 0h1v1h-1zm30 0h1v1h-1zm-366 1h1v1h-1zm-1 2h1v1h-1zm-20 1h1v1h-1zm19 1h1v1h-1zm-3 1h1v1h-1zm-16 1h1v1h-1zm2 0h1v1h-1zm14 1h1v1h-1zm-9 3h1v1h-1zm-5 1h1v1h-1zm5 0h1v1h-1zm7 0h1v1h-1zm-8 1h1v1h-1zm0 1h1v1h-1zm7 0h2v1h-2zm0 1h1v1h-1z" fill="#e0e000"/>
<path d="M164 525h1v1h-1zm11 0h1v1h-1zm11 0h1v1h-1zm-26 1h1v1h-1zm2 0h1v1h-1zm10 0h1v1h-1zm6 0h1v1h-1zm8 0h1v1h-1zm10 0h1v1h-1zm5 0h1v1h-1zm4 0h2v1h-2zm3 0h1v1h-1zm6 0h1v1h-1zm8 0h1v1h-1zm6 0h1v1h-1zm2 0h1v1h-1zm8 0h2v1h-2zm25 0h2v1h-2zm13 0h1v1h-1zm-125 1h1v1h-1zm12 0h1v1h-1zm22 0h1v1h-1zm36 0h1v1h-1zm7 0h2v1h-2zm10 0h1v1h-1zm7 0h1v1h-1zm6 0h1v1h-1zm9 0h1v1h-1zm7 0h1v1h-1zm9 0h2v1h-2zm14 0h1v1h-1zm16 0h2v1h-2zm-154 1h1v1h-1zm5 0h1v1h-1zm10 0h1v1h-1zm8 0h2v1h-2zm12 0h2v1h-2zm7 0h1v1h-1zm3 0h1v1h-1zm2 0h1v1h-1zm27 0h1v1h-1zm21 0h1v1h-1zm14 0h1v1h-1zm4 0h1v1h-1zm2 0h1v1h-1zm14 0h1v1h-1zm2 0h1v1h-1zm22 0h2v1h-2zm10 0h1v1h-1zm65 0h1v1h-1zm8 0h1v1h-1zm10 0h1v1h-1zm2 0h1v1h-1zm4 0h1v1h-1zm-251 1h1v1h-1zm7 0h1v1h-1zm3 0h1v1h-1zm9 0h1v1h-1zm39 0h1v1h-1zm14 0h1v1h-1zm3 0h1v1h-1zm7 0h1v1h-1zm37 0h1v1h-1zm4 0h1v1h-1zm8 0h1v1h-1zm2 0h1v1h-1zm3 0h1v1h-1zm10 0h1v1h-1zm9 0h1v1h-1zm3 0h1v1h-1zm61 0h1v1h-1zm4 0h1v1h-1zm34 0h2v1h-2zm17 0h1v1h-1zm6 0h1v1h-1zm3 0h1v1h-1zm5 0h1v1h-1zm3 0h1v1h-1zm4 0h1v1h-1zm7 0h1v1h-1zm10 0h1v1h-1zm-205 1h1v1h-1zm33 0h1v1h-1zm4 0h1v1h-1zm77 0h1v1h-1zm7 0h1v1h-1zm12 0h1v1h-1zm7 0h1v1h-1zm21 0h1v1h-1zm3 0h3v1h-3zm13 0h1v1h-1zm14 0h1v1h-1zm13 0h1v1h-1zm27 0h1v1h-1zm9 0h1v1h-1zm14 0h1v1h-1zm20 0h1v1h-1zm-229 1h1v1h-1zm10 0h1v1h-1zm5 0h1v1h-1zm2 0h1v1h-1zm2 0h1v1h-1zm45 0h1v1h-1zm19 0h1v1h-1zm6 0h1v1h-1zm6 0h1v1h-1zm26 0h1v1h-1zm29 0h1v1h-1zm30 0h1v1h-1zm19 0h1v1h-1zm5 0h1v1h-1zm10 0h1v1h-1zm5 0h2v1h-2zm12 0h1v1h-1zm12 0h1v1h-1zm3 0h1v1h-1zm9 0h1v1h-1zm10 0h1v1h-1zm9 0h1v1h-1zm13 0h1v1h-1zm-281 1h1v1h-1zm6 0h1v1h-1zm5 0h1v1h-1zm2 0h1v1h-1zm89 0h1v1h-1zm23 0h1v1h-1zm3 0h1v1h-1zm12 0h1v1h-1zm10 0h1v1h-1zm11 0h1v1h-1zm12 0h1v1h-1zm3 0h1v1h-1zm16 0h1v1h-1zm10 0h1v1h-1zm6 0h1v1h-1zm24 0h1v1h-1zm3 0h1v1h-1zm16 0h1v1h-1zm13 0h1v1h-1zm29 0h1v1h-1zm10 0h1v1h-1zm17 0h1v1h-1zm7 0h1v1h-1zm6 0h1v1h-1zm16 0h1v1h-1zm-342 1h1v1h-1zm49 0h2v1h-2zm4 0h1v1h-1zm74 0h1v1h-1zm3 0h1v1h-1zm3 0h1v1h-1zm14 0h1v1h-1zm15 0h1v1h-1zm21 0h2v1h-2zm12 0h1v1h-1zm12 0h1v1h-1zm11 0h1v1h-1zm23 0h1v1h-1zm22 0h1v1h-1zm5 0h1v1h-1zm5 0h1v1h-1zm30 0h1v1h-1zm3 0h1v1h-1zm12 0h2v1h-2zm13 0h1v1h-1zm16 0h1v1h-1zm2 0h1v1h-1zm19 0h1v1h-1zm13 0h1v1h-1zm-375 1h1v1h-1zm4 0h2v1h-2zm36 0h1v1h-1zm117 0h1v1h-1zm3 0h1v1h-1zm16 0h2v1h-2zm25 0h1v1h-1zm16 0h1v1h-1zm2 0h1v1h-1zm5 0h1v1h-1zm7 0h1v1h-1zm6 0h1v1h-1zm6 0h1v1h-1zm19 0h2v1h-2zm4 0h1v1h-1zm39 0h1v1h-1zm13 0h1v1h-1zm37 0h1v1h-1zm7 0h1v1h-1zm2 0h1v1h-1zm20 0h1v1h-1zm4 0h1v1h-1zm-386 1h1v1h-1zm212 0h1v1h-1zm26 0h1v1h-1zm21 0h2v1h-2zm24 0h1v1h-1zm4 0h1v1h-1zm6 0h1v1h-1zm3 0h1v1h-1zm14 0h4v1h-4zm9 0h1v1h-1zm23 0h1v1h-1zm2 0h1v1h-1zm3 0h1v1h-1zm8 0h1v1h-1zm8 0h1v1h-1zm19 0h1v1h-1zm9 0h2v1h-2zm-391 1h1v1h-1zm31 0h1v1h-1zm266 0h1v1h-1zm9 0h1v1h-1zm9 0h1v1h-1zm14 0h1v1h-1zm11 0h1v1h-1zm4 0h1v1h-1zm5 0h1v1h-1zm7 0h2v1h-2zm4 0h1v1h-1zm14 0h2v1h-2zm6 0h1v1h-1zm-376 1h1v1h-1zm335 0h1v1h-1zm6 0h1v1h-1zm13 0h3v1h-3zm10 0h1v1h-1zm18 0h1v1h-1zm3 0h1v1h-1zm2 0h1v1h-1zm3 0h1v1h-1zm2 0h1v1h-1zm-369 1h1v1h-1zm2 0h1v1h-1zm2 0h1v1h-1zm-2 2h1v1h-1zm-19 5h1v1h-1zm13 0h1v1h-1zm2 0h1v1h-1zm-16 1h1v1h-1zm7 3h1v1h-1zm4 1h1v1h-1zm2 1h1v1h-1zm-1 1h1v1h-1zm-6 1h1v1h-1z" fill="#a0e000"/>
<path d="M192 540h1v1h-1zm6 0h1v1h-1zm4 0h1v1h-1zm-37 1h1v1h-1zm6 0h1v1h-1zm5 0h1v1h-1zm12 0h1v1h-1zm45 0h1v1h-1zm3 0h1v1h-1zm4 0h1v1h-1zm6 0h1v1h-1zm9 0h1v1h-1zm13 0h1v1h-1zm2 0h1v1h-1zm5 0h1v1h-1zm-114 1h2v1h-2zm3 0h1v1h-1zm11 0h1v1h-1zm7 0h1v1h-1zm9 0h1v1h-1zm8 0h1v1h-1zm4 0h1v1h-1zm42 0h1v1h-1zm2 0h1v1h-1zm5 0h1v1h-1zm10 0h1v1h-1zm20 0h1v1h-1zm5 0h1v1h-1zm17 0h1v1h-1zm-153 1h1v1h-1zm14 0h1v1h-1zm20 0h1v1h-1zm40 0h1v1h-1zm12 0h1v1h-1zm3 0h1v1h-1zm3 0h1v1h-1zm16 0h1v1h-1zm25 0h1v1h-1zm13 0h1v1h-1zm-138 1h1v1h-1zm6 0h1v1h-1zm2 0h1v1h-1zm2 0h2v1h-2zm3 0h1v1h-1zm5 0h2v1h-2zm10 0h1v1h-1zm25 0h1v1h-1zm24 0h1v1h-1zm14 0h1v1h-1zm24 0h1v1h-1zm26 0h1v1h-1zm19 0h1v1h-1zm101 0h1v1h-1zm-191 1h1v1h-1zm19 0h1v1h-1zm43 0h1v1h-1zm27 0h1v1h-1zm48 0h1v1h-1zm39 0h1v1h-1zm4 0h1v1h-1zm11 0h1v1h-1zm26 0h1v1h-1zm15 0h1v1h-1zm17 0h1v1h-1zm6 0h1v1h-1zm9 0h1v1h-1zm23 0h1v1h-1zm-227 1h1v1h-1zm13 0h3v1h-3zm19 0h1v1h-1zm54 0h1v1h-1zm15 0h1v1h-1zm52 0h1v1h-1zm66 0h1v1h-1zm25 0h1v1h-1zm19 0h1v1h-1zm11 0h1v1h-1zm8 0h1v1h-1zm18 0h2v1h-2zm-278 1h1v1h-1zm65 0h1v1h-1zm8 0h1v1h-1zm2 0h1v1h-1zm4 0h1v1h-1zm27 0h2v1h-2zm35 0h2v1h-2zm34 0h1v1h-1zm9 0h1v1h-1zm8 0h1v1h-1zm35 0h3v1h-3zm32 0h2v1h-2zm6 0h1v1h-1zm6 0h1v1h-1zm17 0h1v1h-1zm4 0h1v1h-1zm16 0h1v1h-1zm2 0h1v1h-1zm27 0h1v1h-1zm-322 1h1v1h-1zm38 0h1v1h-1zm9 0h2v1h-2zm51 0h1v1h-1zm4 0h2v1h-2zm4 0h1v1h-1zm21 0h1v1h-1zm23 0h1v1h-1zm26 0h1v1h-1zm8 0h1v1h-1zm28 0h1v1h-1zm5 0h1v1h-1zm41 0h1v1h-1zm9 0h1v1h-1zm3 0h1v1h-1zm30 0h1v1h-1zm10 0h1v1h-1zm4 0h1v1h-1zm40 0h1v1h-1zm8 0h1v1h-1zm19 0h1v1h-1zm16 0h1v1h-1zm2 0h1v1h-1zm-358 1h1v1h-1zm167 0h1v1h-1zm41 0h1v1h-1zm2 0h1v1h-1zm14 0h1v1h-1zm21 0h1v1h-1zm21 0h1v1h-1zm16 0h1v1h-1zm22 0h1v1h-1zm6 0h1v1h-1zm9 0h1v1h-1zm3 0h1v1h-1zm10 0h2v1h-2zm7 0h1v1h-1zm-164 1h1v1h-1zm62 0h1v1h-1zm17 0h1v1h-1zm4 0h1v1h-1zm3 0h1v1h-1zm12 0h2v1h-2zm7 0h1v1h-1zm18 0h1v1h-1zm17 0h1v1h-1zm2 0h1v1h-1zm11 0h1v1h-1zm20 0h1v1h-1zm-89 1h1v1h-1zm3 0h1v1h-1zm8 0h1v1h-1zm6 0h1v1h-1zm14 0h1v1h-1zm14 0h1v1h-1zm4 0h1v1h-1zm6 0h1v1h-1zm43 0h1v1h-1zm-5 1h1v1h-1zm-388 3h1v1h-1zm4 7h1v1h-1zm13 0h2v1h-2zm-11 1h1v1h-1zm0 1h1v1h-1zm2 1h1v1h-1zm5 0h1v1h-1zm4 1h1v1h-1z" fill="#10c8d0"/>
<path d="M154 545h1v1h-1zm-3 1h1v1h-1zm12 0h1v1h-1zm4 0h1v1h-1zm26 0h1v1h-1zm29 0h1v1h-1zm16 0h1v1h-1zm10 0h1v1h-1zm17 0h1v1h-1zm-112 1h1v1h-1zm7 0h1v1h-1zm11 0h1v1h-1zm16 0h1v1h-1zm41 0h1v1h-1zm36 0h1v1h-1zm12 0h1v1h-1zm16 0h1v1h-1zm5 0h1v1h-1zm-74 1h1v1h-1zm9 0h1v1h-1zm7 0h1v1h-1zm36 0h1v1h-1zm25 0h1v1h-1zm3 0h2v1h-2zm83 0h2v1h-2zm15 0h1v1h-1zm2 0h1v1h-1zm-92 1h1v1h-1zm82 0h1v1h-1zm43 0h1v1h-1zm7 0h1v1h-1zm4 0h1v1h-1zm13 0h2v1h-2zm8 0h1v1h-1zm-146 1h1v1h-1zm57 0h1v1h-1zm23 0h1v1h-1zm5 0h1v1h-1zm7 0h1v1h-1zm12 0h1v1h-1zm7 0h1v1h-1zm5 0h2v1h-2zm18 0h1v1h-1zm15 0h1v1h-1zm11 0h1v1h-1zm-65 1h1v1h-1zm8 0h1v1h-1zm6 0h1v1h-1zm27 0h1v1h-1zm8 0h2v1h-2zm38 0h1v1h-1zm14 0h1v1h-1zm28 0h1v1h-1zm4 0h1v1h-1zm18 0h1v1h-1zm17 0h1v1h-1zm-225 1h1v1h-1zm7 0h1v1h-1zm125 0h1v1h-1zm12 0h1v1h-1zm3 0h1v1h-1zm6 0h1v1h-1zm15 0h1v1h-1zm25 0h1v1h-1zm15 0h1v1h-1zm28 0h1v1h-1zm11 0h1v1h-1zm4 0h2v1h-2zm7 0h1v1h-1zm8 0h1v1h-1zm14 0h1v1h-1zm12 0h1v1h-1zm-329 1h1v1h-1zm35 0h2v1h-2zm193 0h1v1h-1zm10 0h1v1h-1zm3 0h1v1h-1zm14 0h1v1h-1zm52 0h1v1h-1zm3 0h1v1h-1zm16 0h1v1h-1zm9 0h1v1h-1zm16 0h1v1h-1zm22 0h1v1h-1zm15 0h1v1h-1zm-111 1h1v1h-1zm29 0h1v1h-1zm2 0h1v1h-1zm18 0h1v1h-1zm6 0h1v1h-1zm14 0h1v1h-1zm8 0h1v1h-1zm3 0h1v1h-1zm6 0h1v1h-1zm24 0h1v1h-1zm15 0h1v1h-1zm-390 10h1v1h-1zm1 2h1v1h-1zm4 3h1v1h-1z" fill="#10d890"/>
<path d="M235 497h1v1h-1zm34 0h1v1h-1zm-107 1h1v1h-1zm7 0h1v1h-1zm49 0h2v1h-2zm3 0h1v1h-1zm32 0h1v1h-1zm23 0h1v1h-1zm-106 1h1v1h-1zm26 0h1v1h-1zm114 0h1v1h-1zm71 0h1v1h-1zm24 0h1v1h-1zm-163 1h1v1h-1zm207 0h1v1h-1zm13 0h1v1h-1zm-293 1h1v1h-1zm61 0h1v1h-1zm65 0h1v1h-1zm91 0h1v1h-1zm25 0h1v1h-1zm43 0h1v1h-1zm6 0h1v1h-1zm12 0h1v1h-1zm46 0h1v1h-1zm10 0h1v1h-1zm-341 1h1v1h-1zm65 0h1v1h-1zm122 0h2v1h-2zm5 0h1v1h-1zm25 0h1v1h-1zm19 0h1v1h-1zm85 0h1v1h-1zm31 0h1v1h-1zm53 0h1v1h-1zm-426 1h2v1h-2zm9 0h1v1h-1zm6 0h1v1h-1zm13 0h1v1h-1zm2 0h2v1h-2zm15 0h1v1h-1zm5 0h1v1h-1zm30 0h1v1h-1zm10 0h1v1h-1zm7 0h1v1h-1zm26 0h1v1h-1zm6 0h1v1h-1zm79 0h1v1h-1zm129 0h1v1h-1zm95 0h1v1h-1zm18 0h1v1h-1zm-453 1h1v1h-1zm35 0h1v1h-1zm14 0h1v1h-1zm10 0h1v1h-1zm16 0h1v1h-1zm5 0h2v1h-2zm9 0h1v1h-1zm4 0h1v1h-1zm4 0h1v1h-1zm12 0h2v1h-2zm3 0h1v1h-1zm28 0h1v1h-1zm108 0h1v1h-1zm18 0h1v1h-1zm39 0h1v1h-1zm62 0h1v1h-1zm7 0h1v1h-1zm86 0h1v1h-1zm37 0h1v1h-1zm9 0h1v1h-1zm5 0h1v1h-1zm9 0h1v1h-1zm-522 1h1v1h-1zm3 0h3v1h-3zm31 0h1v1h-1zm13 0h1v1h-1zm8 0h1v1h-1zm7 0h2v1h-2zm12 0h1v1h-1zm14 0h1v1h-1zm7 0h1v1h-1zm30 0h1v1h-1zm4 0h1v1h-1zm3 0h2v1h-2zm8 0h1v1h-1zm7 0h1v1h-1zm4 0h1v1h-1zm48 0h1v1h-1zm28 0h1v1h-1zm22 0h1v1h-1zm49 0h1v1h-1zm79 0h1v1h-1zm90 0h1v1h-1zm-465 1h2v1h-2zm12 0h2v1h-2zm10 0h1v1h-1zm8 0h1v1h-1zm12 0h1v1h-1zm38 0h1v1h-1zm5 0h1v1h-1zm9 0h1v1h-1zm11 0h1v1h-1zm3 0h1v1h-1zm6 0h1v1h-1zm16 0h1v1h-1zm9 0h1v1h-1zm7 0h1v1h-1zm49 0h1v1h-1zm31 0h1v1h-1zm2 0h2v1h-2zm6 0h2v1h-2zm43 0h1v1h-1zm21 0h1v1h-1zm175 0h1v1h-1zm2 0h1v1h-1zm14 0h1v1h-1zm12 0h1v1h-1zm45 0h1v1h-1zm-553 1h1v1h-1zm4 0h1v1h-1zm15 0h1v1h-1zm11 0h1v1h-1zm8 0h1v1h-1zm10 0h1v1h-1zm7 0h1v1h-1zm19 0h1v1h-1zm62 0h1v1h-1zm23 0h1v1h-1zm110 0h1v1h-1zm13 0h1v1h-1zm11 0h1v1h-1zm6 0h1v1h-1zm38 0h1v1h-1zm29 0h1v1h-1zm78 0h1v1h-1zm67 0h1v1h-1zm17 0h1v1h-1zm-521 1h1v1h-1zm2 0h1v1h-1zm14 0h1v1h-1zm6 0h1v1h-1zm12 0h1v1h-1zm6 0h2v1h-2zm4 0h1v1h-1zm10 0h1v1h-1zm29 0h1v1h-1zm6 0h1v1h-1zm6 0h1v1h-1zm11 0h1v1h-1zm5 0h1v1h-1zm21 0h1v1h-1zm2 0h1v1h-1zm5 0h1v1h-1zm3 0h1v1h-1zm17 0h1v1h-1zm2 0h1v1h-1zm30 0h1v1h-1zm15 0h1v1h-1zm6 0h1v1h-1zm2 0h1v1h-1zm6 0h1v1h-1zm22 0h1v1h-1zm2 0h1v1h-1zm24 0h1v1h-1zm16 0h1v1h-1zm4 0h1v1h-1zm38 0h1v1h-1zm13 0h1v1h-1zm9 0h1v1h-1zm3 0h1v1h-1zm5 0h1v1h-1zm5 0h1v1h-1zm8 0h1v1h-1zm14 0h1v1h-1zm44 0h1v1h-1zm7 0h1v1h-1zm59 0h1v1h-1zm-504 1h1v1h-1zm3 0h1v1h-1zm4 0h1v1h-1zm4 0h1v1h-1zm4 0h1v1h-1zm14 0h1v1h-1zm2 0h1v1h-1zm30 0h1v1h-1zm34 0h1v1h-1zm2 0h1v1h-1zm4 0h1v1h-1zm31 0h1v1h-1zm6 0h1v1h-1zm9 0h2v1h-2zm55 0h1v1h-1zm16 0h1v1h-1zm3 0h1v1h-1zm14 0h1v1h-1zm33 0h1v1h-1zm12 0h1v1h-1zm3 0h1v1h-1zm6 0h1v1h-1zm44 0h1v1h-1zm4 0h1v1h-1zm20 0h1v1h-1zm17 0h1v1h-1zm3 0h1v1h-1zm7 0h1v1h-1zm2 0h1v1h-1zm7 0h1v1h-1zm5 0h1v1h-1zm5 0h1v1h-1zm4 0h1v1h-1zm3 0h1v1h-1zm4 0h1v1h-1zm5 0h1v1h-1zm6 0h1v1h-1zm8 0h1v1h-1zm8 0h1v1h-1zm4 0h1v1h-1zm50 0h2v1h-2zm43 0h1v1h-1zm-475 1h1v1h-1zm6 0h1v1h-1zm2 0h1v1h-1zm8 0h1v1h-1zm7 0h1v1h-1zm20 0h1v1h-1zm9 0h1v1h-1zm31 0h1v1h-1zm10 0h1v1h-1zm18 0h1v1h-1zm34 0h1v1h-1zm8 0h1v1h-1zm3 0h4v1h-4zm12 0h1v1h-1zm8 0h1v1h-1zm6 0h1v1h-1zm9 0h1v1h-1zm4 0h1v1h-1zm17 0h1v1h-1zm14 0h1v1h-1zm2 0h1v1h-1zm9 0h1v1h-1zm7 0h1v1h-1zm12 0h1v1h-1zm43 0h1v1h-1zm11 0h1v1h-1zm24 0h1v1h-1zm13 0h1v1h-1zm6 0h1v1h-1zm5 0h1v1h-1zm9 0h1v1h-1zm7 0h3v1h-3zm18 0h1v1h-1zm3 0h1v1h-1zm4 0h1v1h-1zm2 0h2v1h-2zm10 0h1v1h-1zm6 0h1v1h-1zm15 0h1v1h-1zm9 0h1v1h-1zm22 0h1v1h-1zm3 0h1v1h-1zm16 0h1v1h-1zm-380 1h1v1h-1zm47 0h2v1h-2zm5 0h2v1h-2zm9 0h1v1h-1zm15 0h1v1h-1zm5 0h1v1h-1zm21 0h1v1h-1zm10 0h1v1h-1zm8 0h1v1h-1zm4 0h1v1h-1zm5 0h1v1h-1zm32 0h1v1h-1zm13 0h1v1h-1zm4 0h1v1h-1zm6 0h1v1h-1zm6 0h1v1h-1zm33 0h1v1h-1zm17 0h1v1h-1zm2 0h1v1h-1zm46 0h1v1h-1zm23 0h1v1h-1zm7 0h1v1h-1zm12 0h1v1h-1zm2 0h1v1h-1zm7 0h1v1h-1zm9 0h2v1h-2zm6 0h1v1h-1zm2 0h1v1h-1zm2 0h1v1h-1zm10 0h1v1h-1zm3 0h1v1h-1zm3 0h1v1h-1zm12 0h1v1h-1zm3 0h1v1h-1zm6 0h1v1h-1zm8 0h2v1h-2zm-401 1h1v1h-1zm40 0h1v1h-1zm5 0h1v1h-1zm3 0h1v1h-1zm46 0h2v1h-2zm8 0h1v1h-1zm12 0h1v1h-1zm2 0h1v1h-1zm19 0h1v1h-1zm2 0h1v1h-1zm6 0h1v1h-1zm8 0h1v1h-1zm6 0h2v1h-2zm4 0h1v1h-1zm21 0h1v1h-1zm13 0h1v1h-1zm4 0h1v1h-1zm12 0h2v1h-2zm6 0h1v1h-1zm4 0h2v1h-2zm8 0h1v1h-1zm4 0h1v1h-1zm11 0h1v1h-1zm2 0h1v1h-1zm3 0h1v1h-1zm3 0h1v1h-1zm2 0h1v1h-1zm9 0h1v1h-1zm4 0h2v1h-2zm10 0h1v1h-1zm7 0h1v1h-1zm7 0h1v1h-1zm5 0h1v1h-1zm26 0h1v1h-1zm27 0h1v1h-1zm6 0h1v1h-1zm14 0h1v1h-1zm7 0h1v1h-1zm17 0h1v1h-1zm9 0h1v1h-1zm-356 1h1v1h-1zm52 0h1v1h-1zm60 0h1v1h-1zm2 0h1v1h-1zm29 0h1v1h-1zm17 0h1v1h-1zm18 0h1v1h-1zm39 0h1v1h-1zm4 0h1v1h-1zm6 0h1v1h-1zm3 0h2v1h-2zm4 0h1v1h-1zm10 0h1v1h-1zm10 0h1v1h-1zm3 0h1v1h-1zm9 0h1v1h-1zm39 0h1v1h-1zm8 0h1v1h-1zm5 0h1v1h-1zm12 0h1v1h-1zm7 0h1v1h-1zm2 0h1v1h-1zm20 0h1v1h-1zm-402 1h1v1h-1zm4 0h1v1h-1zm4 0h1v1h-1zm32 0h1v1h-1zm5 0h1v1h-1zm108 0h1v1h-1zm7 0h1v1h-1zm17 0h1v1h-1zm3 0h1v1h-1zm2 0h1v1h-1zm7 0h1v1h-1zm3 0h1v1h-1zm4 0h2v1h-2zm13 0h1v1h-1zm2 0h1v1h-1zm21 0h1v1h-1zm45 0h1v1h-1zm49 0h1v1h-1zm25 0h1v1h-1zm2 0h1v1h-1zm7 0h1v1h-1zm11 0h2v1h-2zm10 0h1v1h-1zm5 0h1v1h-1zm4 0h1v1h-1zm8 0h1v1h-1zm-397 1h1v1h-1zm4 0h1v1h-1zm28 0h1v1h-1zm2 0h1v1h-1zm4 0h2v1h-2zm175 0h2v1h-2zm14 0h1v1h-1zm6 0h1v1h-1zm14 0h2v1h-2zm33 0h1v1h-1zm2 0h1v1h-1zm7 0h1v1h-1zm3 0h2v1h-2zm4 0h1v1h-1zm2 0h1v1h-1zm6 0h1v1h-1zm10 0h1v1h-1zm13 0h2v1h-2zm16 0h1v1h-1zm3 0h1v1h-1zm4 0h1v1h-1zm27 0h1v1h-1zm-375 1h1v1h-1zm29 0h1v1h-1zm6 0h1v1h-1zm261 0h1v1h-1zm9 0h1v1h-1zm49 0h1v1h-1zm-350 1h1v1h-1zm20 0h1v1h-1zm4 0h1v1h-1zm320 0h1v1h-1zm12 0h1v1h-1zm12 0h1v1h-1zm23 0h1v1h-1zm-387 2h2v1h-2zm18 0h2v1h-2zm-16 2h1v1h-1zm0 1h1v1h-1zm7 0h1v1h-1zm-6 1h1v1h-1zm-2 1h1v1h-1zm13 0h2v1h-2zm4 0h1v1h-1zm-14 2h1v1h-1zm8 0h1v1h-1zm3 1h1v1h-1zm-8 1h1v1h-1zm3 0h1v1h-1zm-4 1h1v1h-1zm8 1h1v1h-1zm-9 1h1v1h-1zm9 0h1v1h-1zm-4 1h1v1h-1zm-3 1h1v1h-1zm3 0h1v1h-1zm2 1h2v1h-2z" fill="#a80000"/>
<path d="M158 497h1v1h-1zm9 0h1v1h-1zm10 0h1v1h-1zm13 0h1v1h-1zm26 0h1v1h-1zm25 0h1v1h-1zm4 0h1v1h-1zm-19 1h1v1h-1zm20 0h1v1h-1zm46 0h1v1h-1zm6 0h1v1h-1zm-17 1h1v1h-1zm108 0h1v1h-1zm15 0h1v1h-1zm-217 1h1v1h-1zm11 0h1v1h-1zm14 0h1v1h-1zm13 0h1v1h-1zm47 0h1v1h-1zm6 0h1v1h-1zm114 0h1v1h-1zm27 0h1v1h-1zm-262 1h1v1h-1zm87 0h1v1h-1zm128 0h1v1h-1zm-187 1h2v1h-2zm14 0h1v1h-1zm124 0h1v1h-1zm71 0h1v1h-1zm9 0h1v1h-1zm48 0h1v1h-1zm5 0h1v1h-1zm63 0h1v1h-1zm-358 1h1v1h-1zm4 0h1v1h-1zm4 0h1v1h-1zm3 0h1v1h-1zm6 0h1v1h-1zm4 0h2v1h-2zm7 0h1v1h-1zm9 0h3v1h-3zm4 0h1v1h-1zm7 0h1v1h-1zm9 0h1v1h-1zm5 0h1v1h-1zm46 0h1v1h-1zm9 0h1v1h-1zm90 0h1v1h-1zm49 0h1v1h-1zm104 0h1v1h-1zm48 0h1v1h-1zm2 0h1v1h-1zm7 0h1v1h-1zm16 0h1v1h-1zm45 0h1v1h-1zm9 0h1v1h-1zm-427 1h1v1h-1zm16 0h1v1h-1zm8 0h1v1h-1zm14 0h1v1h-1zm106 0h1v1h-1zm12 0h1v1h-1zm7 0h1v1h-1zm5 0h1v1h-1zm130 0h1v1h-1zm33 0h1v1h-1zm28 0h1v1h-1zm88 0h1v1h-1zm47 0h1v1h-1zm-416 1h1v1h-1zm5 0h2v1h-2zm75 0h1v1h-1zm3 0h1v1h-1zm33 0h1v1h-1zm11 0h1v1h-1zm30 0h1v1h-1zm5 0h1v1h-1zm13 0h1v1h-1zm92 0h1v1h-1zm2 0h1v1h-1zm10 0h1v1h-1zm38 0h1v1h-1zm34 0h1v1h-1zm10 0h1v1h-1zm42 0h1v1h-1zm14 0h1v1h-1zm-322 1h1v1h-1zm6 0h2v1h-2zm51 0h1v1h-1zm25 0h1v1h-1zm59 0h1v1h-1zm57 0h1v1h-1zm28 0h1v1h-1zm24 0h1v1h-1zm61 0h1v1h-1zm-377 1h1v1h-1zm38 0h1v1h-1zm4 0h1v1h-1zm2 0h1v1h-1zm34 0h1v1h-1zm3 0h1v1h-1zm3 0h1v1h-1zm16 0h2v1h-2zm6 0h1v1h-1zm7 0h1v1h-1zm4 0h2v1h-2zm14 0h1v1h-1zm56 0h1v1h-1zm8 0h1v1h-1zm58 0h1v1h-1zm37 0h1v1h-1zm10 0h1v1h-1zm44 0h1v1h-1zm52 0h1v1h-1zm-363 1h1v1h-1zm122 0h2v1h-2zm3 0h1v1h-1zm5 0h1v1h-1zm3 0h2v1h-2zm3 0h1v1h-1zm2 0h1v1h-1zm14 0h1v1h-1zm2 0h1v1h-1zm5 0h1v1h-1zm10 0h1v1h-1zm154 0h1v1h-1zm25 0h1v1h-1zm4 0h1v1h-1zm-384 1h1v1h-1zm208 0h1v1h-1zm15 0h1v1h-1zm13 0h1v1h-1zm15 0h1v1h-1zm83 0h1v1h-1zm44 0h1v1h-1zm-550 1h1v1h-1zm46 0h1v1h-1zm122 0h1v1h-1zm286 0h1v1h-1zm10 0h1v1h-1zm12 0h1v1h-1zm2 0h1v1h-1zm4 0h2v1h-2zm12 0h1v1h-1zm23 0h1v1h-1zm-519 1h1v1h-1zm6 0h1v1h-1zm3 0h1v1h-1zm6 0h1v1h-1zm5 0h1v1h-1zm7 0h1v1h-1zm29 0h1v1h-1zm11 0h1v1h-1zm2 0h1v1h-1zm15 0h1v1h-1zm2 0h1v1h-1zm25 0h1v1h-1zm3 0h2v1h-2zm62 0h1v1h-1zm28 0h1v1h-1zm311 0h1v1h-1zm8 0h1v1h-1zm4 0h1v1h-1zm2 0h1v1h-1zm10 0h1v1h-1zm11 0h1v1h-1zm-553 1h1v1h-1zm26 0h1v1h-1zm4 0h1v1h-1zm2 0h1v1h-1zm8 0h1v1h-1zm17 0h2v1h-2zm9 0h1v1h-1zm9 0h1v1h-1zm5 0h1v1h-1zm15 0h1v1h-1zm17 0h1v1h-1zm7 0h1v1h-1zm3 0h1v1h-1zm7 0h1v1h-1zm7 0h1v1h-1zm41 0h1v1h-1zm-168 1h1v1h-1zm10 0h1v1h-1zm3 0h1v1h-1zm6 0h1v1h-1zm6 0h1v1h-1zm2 0h1v1h-1zm17 0h1v1h-1zm2 0h1v1h-1zm6 0h1v1h-1zm4 0h1v1h-1zm8 0h2v1h-2zm6 0h1v1h-1zm3 0h1v1h-1zm5 0h1v1h-1zm10 0h2v1h-2zm4 0h1v1h-1zm24 0h1v1h-1zm6 0h2v1h-2zm8 0h1v1h-1zm39 0h1v1h-1zm49 0h1v1h-1zm3 0h1v1h-1zm23 0h1v1h-1zm-190 1h1v1h-1zm3 0h1v1h-1zm20 0h1v1h-1zm16 0h1v1h-1zm6 0h1v1h-1zm3 0h1v1h-1zm47 0h1v1h-1zm9 0h1v1h-1zm36 0h1v1h-1zm17 0h3v1h-3zm9 0h1v1h-1zm12 0h1v1h-1zm13 0h1v1h-1zm30 0h1v1h-1zm13 0h1v1h-1zm12 0h1v1h-1zm4 0h1v1h-1zm-184 1h1v1h-1zm11 0h1v1h-1zm5 0h2v1h-2zm5 0h1v1h-1zm5 0h1v1h-1zm4 0h1v1h-1zm24 0h1v1h-1zm18 0h1v1h-1zm14 0h1v1h-1zm3 0h1v1h-1zm25 0h1v1h-1zm13 0h1v1h-1zm5 0h1v1h-1zm8 0h1v1h-1zm18 0h1v1h-1zm39 0h1v1h-1zm8 0h1v1h-1zm11 0h1v1h-1zm22 0h1v1h-1zm-196 1h1v1h-1zm51 0h1v1h-1zm7 0h1v1h-1zm4 0h1v1h-1zm8 0h1v1h-1zm20 0h1v1h-1zm4 0h1v1h-1zm2 0h1v1h-1zm21 0h1v1h-1zm12 0h1v1h-1zm2 0h1v1h-1zm13 0h1v1h-1zm13 0h1v1h-1zm10 0h1v1h-1zm8 0h1v1h-1zm16 0h1v1h-1zm2 0h2v1h-2zm4 0h1v1h-1zm6 0h1v1h-1zm5 0h1v1h-1zm4 0h1v1h-1zm5 0h1v1h-1zm4 0h2v1h-2zm19 0h1v1h-1zm2 0h1v1h-1zm5 0h1v1h-1zm7 0h1v1h-1zm-258 1h1v1h-1zm51 0h1v1h-1zm7 0h1v1h-1zm46 0h1v1h-1zm4 0h1v1h-1zm4 0h1v1h-1zm4 0h1v1h-1zm10 0h1v1h-1zm3 0h1v1h-1zm49 0h1v1h-1zm25 0h1v1h-1zm5 0h1v1h-1zm4 0h1v1h-1zm17 0h1v1h-1zm12 0h1v1h-1zm12 0h1v1h-1zm2 0h1v1h-1zm4 0h1v1h-1zm12 0h1v1h-1zm28 0h1v1h-1zm34 0h1v1h-1zm-136 1h1v1h-1zm2 0h1v1h-1zm4 0h1v1h-1zm4 0h1v1h-1zm32 0h1v1h-1zm17 0h1v1h-1zm2 0h1v1h-1zm5 0h1v1h-1zm21 0h2v1h-2zm7 0h1v1h-1zm8 0h1v1h-1zm10 0h1v1h-1zm17 0h1v1h-1zm2 0h2v1h-2zm19 0h1v1h-1zm5 0h1v1h-1zm28 0h1v1h-1zm-375 1h1v1h-1zm5 0h1v1h-1zm8 0h1v1h-1zm203 0h1v1h-1zm7 0h1v1h-1zm11 0h1v1h-1zm4 0h1v1h-1zm3 0h1v1h-1zm9 0h1v1h-1zm8 0h1v1h-1zm3 0h1v1h-1zm13 0h1v1h-1zm4 0h1v1h-1zm8 0h1v1h-1zm28 0h1v1h-1zm2 0h1v1h-1zm2 0h1v1h-1zm6 0h1v1h-1zm19 0h1v1h-1zm24 0h1v1h-1zm12 0h1v1h-1zm10 0h1v1h-1zm4 0h1v1h-1zm2 0h1v1h-1zm-359 1h1v1h-1zm254 0h1v1h-1zm31 0h1v1h-1zm11 0h1v1h-1zm5 0h1v1h-1zm12 0h1v1h-1zm12 0h1v1h-1zm17 0h1v1h-1zm-39 1h1v1h-1zm16 0h1v1h-1zm33 0h1v1h-1zm-366 1h1v1h-1zm3 1h1v1h-1zm-10 1h1v1h-1zm6 0h1v1h-1zm-5 3h1v1h-1zm5 1h1v1h-1zm5 0h1v1h-1zm-15 1h1v1h-1zm14 2h1v1h-1zm0 1h1v1h-1zm-8 2h1v1h-1zm7 0h1v1h-1zm-7 2h1v1h-1zm5 0h1v1h-1zm-3 1h1v1h-1zm3 0h1v1h-1z" fill="#c01000"/>
<path d="M152 514h1v1h-1zm12 0h1v1h-1zm4 0h2v1h-2zm30 0h1v1h-1zm-39 1h1v1h-1zm9 0h1v1h-1zm2 0h1v1h-1zm4 0h1v1h-1zm6 0h1v1h-1zm38 0h1v1h-1zm47 0h1v1h-1zm7 0h1v1h-1zm3 0h1v1h-1zm-123 1h1v1h-1zm11 0h1v1h-1zm7 0h1v1h-1zm10 0h1v1h-1zm6 0h2v1h-2zm16 0h1v1h-1zm21 0h1v1h-1zm6 0h1v1h-1zm2 0h1v1h-1zm21 0h1v1h-1zm3 0h1v1h-1zm7 0h1v1h-1zm13 0h1v1h-1zm3 0h1v1h-1zm4 0h2v1h-2zm5 0h1v1h-1zm3 0h1v1h-1zm7 0h1v1h-1zm4 0h1v1h-1zm-141 1h1v1h-1zm10 0h1v1h-1zm14 0h1v1h-1zm2 0h1v1h-1zm2 0h1v1h-1zm4 0h2v1h-2zm22 0h1v1h-1zm3 0h1v1h-1zm14 0h1v1h-1zm7 0h1v1h-1zm3 0h1v1h-1zm8 0h1v1h-1zm16 0h1v1h-1zm14 0h1v1h-1zm21 0h1v1h-1zm81 0h1v1h-1zm7 0h1v1h-1zm7 0h1v1h-1zm5 0h1v1h-1zm-247 1h2v1h-2zm3 0h1v1h-1zm7 0h1v1h-1zm7 0h1v1h-1zm6 0h1v1h-1zm18 0h1v1h-1zm8 0h1v1h-1zm9 0h1v1h-1zm8 0h1v1h-1zm12 0h1v1h-1zm6 0h1v1h-1zm2 0h1v1h-1zm16 0h2v1h-2zm8 0h2v1h-2zm15 0h1v1h-1zm7 0h1v1h-1zm2 0h1v1h-1zm5 0h1v1h-1zm6 0h1v1h-1zm2 0h1v1h-1zm3 0h2v1h-2zm10 0h1v1h-1zm58 0h1v1h-1zm11 0h1v1h-1zm14 0h1v1h-1zm2 0h1v1h-1zm35 0h1v1h-1zm2 0h2v1h-2zm5 0h1v1h-1zm2 0h1v1h-1zm11 0h1v1h-1zm15 0h1v1h-1zm-246 1h1v1h-1zm26 0h1v1h-1zm9 0h1v1h-1zm6 0h1v1h-1zm6 0h1v1h-1zm4 0h1v1h-1zm6 0h1v1h-1zm2 0h1v1h-1zm113 0h1v1h-1zm24 0h1v1h-1zm43 0h1v1h-1zm6 0h1v1h-1zm30 0h1v1h-1zm2 0h1v1h-1zm16 0h1v1h-1zm-210 1h1v1h-1zm3 0h2v1h-2zm3 0h3v1h-3zm92 0h1v1h-1zm4 0h1v1h-1zm20 0h1v1h-1zm8 0h1v1h-1zm8 0h1v1h-1zm3 0h1v1h-1zm7 0h1v1h-1zm25 0h1v1h-1zm5 0h1v1h-1zm2 0h1v1h-1zm5 0h1v1h-1zm5 0h1v1h-1zm8 0h1v1h-1zm4 0h1v1h-1zm11 0h1v1h-1zm2 0h1v1h-1zm6 0h1v1h-1zm4 0h1v1h-1zm26 0h1v1h-1zm5 0h1v1h-1zm5 0h1v1h-1zm10 0h1v1h-1zm6 0h1v1h-1zm6 0h1v1h-1zm-279 1h1v1h-1zm5 0h1v1h-1zm3 0h1v1h-1zm57 0h1v1h-1zm2 0h2v1h-2zm5 0h1v1h-1zm3 0h1v1h-1zm14 0h1v1h-1zm2 0h1v1h-1zm12 0h1v1h-1zm23 0h1v1h-1zm5 0h1v1h-1zm7 0h1v1h-1zm4 0h1v1h-1zm9 0h1v1h-1zm2 0h1v1h-1zm6 0h2v1h-2zm7 0h1v1h-1zm10 0h1v1h-1zm2 0h1v1h-1zm21 0h1v1h-1zm11 0h1v1h-1zm6 0h1v1h-1zm12 0h1v1h-1zm19 0h1v1h-1zm2 0h1v1h-1zm17 0h1v1h-1zm8 0h1v1h-1zm36 0h1v1h-1zm9 0h1v1h-1zm7 0h1v1h-1zm22 0h1v1h-1zm-338 1h1v1h-1zm4 0h1v1h-1zm39 0h1v1h-1zm3 0h3v1h-3zm51 0h1v1h-1zm2 0h1v1h-1zm31 0h1v1h-1zm6 0h2v1h-2zm4 0h2v1h-2zm11 0h1v1h-1zm2 0h2v1h-2zm7 0h1v1h-1zm13 0h1v1h-1zm5 0h1v1h-1zm2 0h1v1h-1zm3 0h1v1h-1zm18 0h1v1h-1zm16 0h1v1h-1zm4 0h1v1h-1zm3 0h1v1h-1zm31 0h1v1h-1zm3 0h1v1h-1zm3 0h1v1h-1zm5 0h1v1h-1zm29 0h2v1h-2zm7 0h1v1h-1zm2 0h1v1h-1zm12 0h1v1h-1zm4 0h1v1h-1zm4 0h1v1h-1zm3 0h1v1h-1zm16 0h1v1h-1zm7 0h1v1h-1zm36 0h1v1h-1zm14 0h1v1h-1zm2 0h1v1h-1zm-400 1h1v1h-1zm6 0h1v1h-1zm33 0h1v1h-1zm6 0h1v1h-1zm107 0h1v1h-1zm14 0h1v1h-1zm5 0h1v1h-1zm9 0h1v1h-1zm5 0h1v1h-1zm6 0h1v1h-1zm28 0h1v1h-1zm21 0h2v1h-2zm24 0h1v1h-1zm5 0h1v1h-1zm19 0h1v1h-1zm8 0h1v1h-1zm5 0h1v1h-1zm7 0h1v1h-1zm31 0h1v1h-1zm14 0h3v1h-3zm6 0h1v1h-1zm9 0h1v1h-1zm2 0h1v1h-1zm2 0h1v1h-1zm11 0h1v1h-1zm16 0h1v1h-1zm3 0h1v1h-1zm-394 1h1v1h-1zm235 0h3v1h-3zm15 0h1v1h-1zm3 0h1v1h-1zm10 0h1v1h-1zm3 0h2v1h-2zm6 0h2v1h-2zm11 0h1v1h-1zm16 0h1v1h-1zm11 0h1v1h-1zm11 0h1v1h-1zm4 0h1v1h-1zm21 0h1v1h-1zm12 0h1v1h-1zm5 0h1v1h-1zm30 0h1v1h-1zm-393 1h1v1h-1zm282 0h1v1h-1zm10 0h1v1h-1zm30 0h1v1h-1zm11 0h1v1h-1zm8 0h1v1h-1zm21 0h1v1h-1zm7 0h2v1h-2zm3 0h1v1h-1zm2 0h1v1h-1zm15 0h1v1h-1zm3 0h1v1h-1zm-363 1h1v1h-1zm305 0h1v1h-1zm2 0h1v1h-1zm6 0h1v1h-1zm9 0h1v1h-1zm17 0h3v1h-3zm7 0h2v1h-2zm7 0h1v1h-1zm2 0h1v1h-1zm-382 1h1v1h-1zm-1 1h1v1h-1zm22 1h2v1h-2zm-18 2h1v1h-1zm-1 1h1v1h-1zm2 1h1v1h-1zm16 0h1v1h-1zm-5 6h1v1h-1zm2 0h1v1h-1zm-10 2h1v1h-1zm3 0h1v1h-1z" fill="#f0e000"/>
<path d="M168 530h1v1h-1zm-14 1h1v1h-1zm24 0h1v1h-1zm15 0h1v1h-1zm10 0h1v1h-1zm10 0h1v1h-1zm39 0h1v1h-1zm5 0h1v1h-1zm16 0h1v1h-1zm5 0h1v1h-1zm-108 1h1v1h-1zm22 0h1v1h-1zm84 0h1v1h-1zm26 0h1v1h-1zm-62 1h1v1h-1zm22 0h1v1h-1zm12 0h1v1h-1zm30 0h1v1h-1zm-131 1h1v1h-1zm94 0h1v1h-1zm2 0h1v1h-1zm40 0h2v1h-2zm69 0h1v1h-1zm4 0h1v1h-1zm-227 1h1v1h-1zm80 0h1v1h-1zm3 0h1v1h-1zm15 0h1v1h-1zm10 0h1v1h-1zm12 0h1v1h-1zm42 0h1v1h-1zm62 0h1v1h-1zm97 0h1v1h-1zm42 0h1v1h-1zm9 0h1v1h-1zm-366 1h1v1h-1zm6 0h1v1h-1zm12 0h1v1h-1zm13 0h1v1h-1zm77 0h1v1h-1zm13 0h1v1h-1zm31 0h1v1h-1zm58 0h1v1h-1zm3 0h1v1h-1zm11 0h1v1h-1zm24 0h1v1h-1zm4 0h1v1h-1zm32 0h1v1h-1zm50 0h1v1h-1zm29 0h1v1h-1zm17 0h1v1h-1zm21 0h2v1h-2zm-373 1h1v1h-1zm30 0h1v1h-1zm10 0h1v1h-1zm30 0h1v1h-1zm5 0h1v1h-1zm28 0h1v1h-1zm4 0h1v1h-1zm69 0h1v1h-1zm45 0h1v1h-1zm22 0h1v1h-1zm35 0h1v1h-1zm19 0h1v1h-1zm9 0h1v1h-1zm5 0h1v1h-1zm13 0h1v1h-1zm93 0h1v1h-1zm9 0h1v1h-1zm25 0h1v1h-1zm-481 1h1v1h-1zm12 0h1v1h-1zm13 0h1v1h-1zm15 0h1v1h-1zm22 0h1v1h-1zm42 0h1v1h-1zm51 0h1v1h-1zm2 0h1v1h-1zm93 0h1v1h-1zm11 0h1v1h-1zm23 0h2v1h-2zm11 0h2v1h-2zm17 0h1v1h-1zm15 0h1v1h-1zm5 0h1v1h-1zm53 0h1v1h-1zm8 0h1v1h-1zm16 0h1v1h-1zm31 0h1v1h-1zm31 0h1v1h-1zm20 0h1v1h-1zm12 0h1v1h-1zm23 0h1v1h-1zm11 0h1v1h-1zm10 0h1v1h-1zm-554 1h1v1h-1zm119 0h1v1h-1zm22 0h1v1h-1zm16 0h1v1h-1zm55 0h1v1h-1zm24 0h1v1h-1zm75 0h1v1h-1zm16 0h1v1h-1zm18 0h2v1h-2zm138 0h1v1h-1zm17 0h1v1h-1zm-431 1h1v1h-1zm72 0h1v1h-1zm15 0h1v1h-1zm12 0h2v1h-2zm7 0h1v1h-1zm62 0h1v1h-1zm2 0h1v1h-1zm29 0h1v1h-1zm27 0h1v1h-1zm19 0h1v1h-1zm40 0h1v1h-1zm48 0h1v1h-1zm7 0h1v1h-1zm19 0h1v1h-1zm11 0h2v1h-2zm25 0h1v1h-1zm-335 1h1v1h-1zm18 0h1v1h-1zm3 0h1v1h-1zm67 0h1v1h-1zm107 0h2v1h-2zm41 0h1v1h-1zm19 0h1v1h-1zm41 0h1v1h-1zm35 0h1v1h-1zm9 0h1v1h-1zm8 0h1v1h-1zm13 0h1v1h-1zm9 0h1v1h-1zm34 0h1v1h-1zm-363 1h1v1h-1zm50 0h1v1h-1zm18 0h1v1h-1zm2 0h1v1h-1zm5 0h1v1h-1zm34 0h1v1h-1zm20 0h1v1h-1zm24 0h1v1h-1zm12 0h1v1h-1zm19 0h1v1h-1zm31 0h1v1h-1zm94 0h1v1h-1zm18 0h1v1h-1zm-324 1h1v1h-1zm6 0h1v1h-1zm38 0h1v1h-1zm6 0h1v1h-1zm49 0h1v1h-1zm9 0h1v1h-1zm31 0h1v1h-1zm17 0h1v1h-1zm21 0h1v1h-1zm31 0h1v1h-1zm31 0h1v1h-1zm52 0h1v1h-1zm36 0h1v1h-1zm3 0h1v1h-1zm54 0h1v1h-1zm-223 1h1v1h-1zm47 0h1v1h-1zm7 0h1v1h-1zm21 0h1v1h-1zm60 0h1v1h-1zm3 0h1v1h-1zm58 0h1v1h-1zm11 0h1v1h-1zm-370 1h1v1h-1zm31 0h1v1h-1zm2 0h1v1h-1zm232 0h1v1h-1zm59 0h1v1h-1zm20 0h1v1h-1zm-312 1h1v1h-1zm246 0h1v1h-1zm42 0h1v1h-1zm15 0h2v1h-2zm58 0h1v1h-1zm-47 1h1v1h-1zm44 0h1v1h-1zm3 0h1v1h-1zm4 0h1v1h-1zm-389 1h1v1h-1zm3 0h1v1h-1zm-2 1h1v1h-1zm18 0h1v1h-1zm0 3h1v1h-1zm2 0h1v1h-1zm-4 2h1v1h-1zm2 2h1v1h-1zm-15 1h1v1h-1zm9 1h1v1h-1zm-4 4h1v1h-1z" fill="#80e000"/>
<path d="M153 504h1v1h-1zm21 0h1v1h-1zm8 0h1v1h-1zm2 0h1v1h-1zm5 0h1v1h-1zm15 0h1v1h-1zm3 0h1v1h-1zm3 0h1v1h-1zm-57 1h1v1h-1zm2 0h1v1h-1zm22 0h1v1h-1zm11 0h1v1h-1zm55 0h1v1h-1zm2 0h1v1h-1zm9 0h1v1h-1zm-100 1h1v1h-1zm8 0h1v1h-1zm11 0h2v1h-2zm21 0h1v1h-1zm18 0h1v1h-1zm25 0h1v1h-1zm33 0h1v1h-1zm11 0h1v1h-1zm7 0h1v1h-1zm15 0h1v1h-1zm-146 1h1v1h-1zm21 0h1v1h-1zm25 0h1v1h-1zm2 0h1v1h-1zm16 0h1v1h-1zm10 0h1v1h-1zm18 0h1v1h-1zm14 0h2v1h-2zm8 0h1v1h-1zm22 0h1v1h-1zm2 0h1v1h-1zm10 0h1v1h-1zm5 0h1v1h-1zm73 0h1v1h-1zm11 0h1v1h-1zm-221 1h1v1h-1zm7 0h1v1h-1zm2 0h1v1h-1zm18 0h2v1h-2zm9 0h1v1h-1zm34 0h1v1h-1zm4 0h1v1h-1zm7 0h1v1h-1zm19 0h1v1h-1zm21 0h1v1h-1zm6 0h1v1h-1zm8 0h1v1h-1zm3 0h1v1h-1zm2 0h1v1h-1zm59 0h1v1h-1zm17 0h2v1h-2zm4 0h1v1h-1zm2 0h1v1h-1zm13 0h1v1h-1zm5 0h1v1h-1zm16 0h1v1h-1zm9 0h1v1h-1zm20 0h1v1h-1zm12 0h1v1h-1zm-314 1h1v1h-1zm10 0h1v1h-1zm6 0h2v1h-2zm8 0h1v1h-1zm18 0h1v1h-1zm7 0h1v1h-1zm14 0h1v1h-1zm6 0h1v1h-1zm4 0h1v1h-1zm5 0h1v1h-1zm4 0h1v1h-1zm5 0h2v1h-2zm8 0h1v1h-1zm9 0h1v1h-1zm7 0h1v1h-1zm4 0h1v1h-1zm25 0h1v1h-1zm7 0h1v1h-1zm14 0h1v1h-1zm52 0h1v1h-1zm15 0h1v1h-1zm18 0h1v1h-1zm8 0h1v1h-1zm9 0h1v1h-1zm9 0h1v1h-1zm3 0h1v1h-1zm13 0h1v1h-1zm21 0h1v1h-1zm2 0h1v1h-1zm15 0h1v1h-1zm35 0h1v1h-1zm-300 1h1v1h-1zm13 0h1v1h-1zm20 0h1v1h-1zm40 0h1v1h-1zm6 0h1v1h-1zm7 0h1v1h-1zm9 0h1v1h-1zm68 0h2v1h-2zm35 0h1v1h-1zm3 0h1v1h-1zm30 0h1v1h-1zm2 0h2v1h-2zm52 0h1v1h-1zm33 0h2v1h-2zm21 0h1v1h-1zm4 0h1v1h-1zm15 0h1v1h-1zm6 0h1v1h-1zm5 0h1v1h-1zm11 0h1v1h-1zm-308 1h1v1h-1zm18 0h1v1h-1zm4 0h1v1h-1zm8 0h1v1h-1zm6 0h1v1h-1zm36 0h1v1h-1zm29 0h2v1h-2zm19 0h2v1h-2zm4 0h1v1h-1zm10 0h1v1h-1zm37 0h1v1h-1zm33 0h1v1h-1zm60 0h1v1h-1zm5 0h1v1h-1zm11 0h1v1h-1zm2 0h1v1h-1zm3 0h1v1h-1zm16 0h1v1h-1zm4 0h1v1h-1zm19 0h1v1h-1zm11 0h1v1h-1zm3 0h1v1h-1zm4 0h1v1h-1zm6 0h1v1h-1zm6 0h1v1h-1zm-330 1h1v1h-1zm9 0h1v1h-1zm49 0h2v1h-2zm9 0h1v1h-1zm36 0h2v1h-2zm9 0h1v1h-1zm13 0h1v1h-1zm13 0h1v1h-1zm7 0h1v1h-1zm23 0h1v1h-1zm6 0h1v1h-1zm5 0h1v1h-1zm20 0h1v1h-1zm10 0h1v1h-1zm7 0h1v1h-1zm4 0h1v1h-1zm6 0h1v1h-1zm4 0h2v1h-2zm14 0h1v1h-1zm3 0h2v1h-2zm10 0h1v1h-1zm4 0h1v1h-1zm6 0h1v1h-1zm8 0h1v1h-1zm6 0h1v1h-1zm10 0h1v1h-1zm15 0h1v1h-1zm3 0h1v1h-1zm3 0h1v1h-1zm3 0h1v1h-1zm14 0h1v1h-1zm18 0h1v1h-1zm13 0h1v1h-1zm2 0h1v1h-1zm21 0h1v1h-1zm7 0h1v1h-1zm-386 1h1v1h-1zm2 0h1v1h-1zm6 0h1v1h-1zm36 0h1v1h-1zm7 0h2v1h-2zm3 0h1v1h-1zm3 0h1v1h-1zm2 0h1v1h-1zm35 0h1v1h-1zm8 0h1v1h-1zm5 0h1v1h-1zm6 0h1v1h-1zm5 0h1v1h-1zm4 0h1v1h-1zm8 0h2v1h-2zm34 0h1v1h-1zm37 0h1v1h-1zm20 0h1v1h-1zm8 0h2v1h-2zm3 0h1v1h-1zm12 0h1v1h-1zm9 0h1v1h-1zm8 0h1v1h-1zm3 0h1v1h-1zm16 0h1v1h-1zm16 0h1v1h-1zm8 0h1v1h-1zm19 0h1v1h-1zm15 0h1v1h-1zm6 0h1v1h-1zm3 0h1v1h-1zm8 0h1v1h-1zm7 0h1v1h-1zm12 0h1v1h-1zm26 0h1v1h-1zm6 0h1v1h-1zm-220 1h1v1h-1zm46 0h1v1h-1zm3 0h1v1h-1zm9 0h1v1h-1zm33 0h1v1h-1zm6 0h1v1h-1zm14 0h1v1h-1zm7 0h1v1h-1zm2 0h1v1h-1zm4 0h1v1h-1zm4 0h1v1h-1zm4 0h1v1h-1zm31 0h1v1h-1zm6 0h1v1h-1zm4 0h1v1h-1zm3 0h1v1h-1zm2 0h1v1h-1zm7 0h1v1h-1zm16 0h1v1h-1zm-345 1h1v1h-1zm189 0h1v1h-1zm29 0h2v1h-2zm3 0h2v1h-2zm13 0h1v1h-1zm5 0h1v1h-1zm12 0h1v1h-1zm12 0h2v1h-2zm7 0h1v1h-1zm14 0h1v1h-1zm4 0h1v1h-1zm5 0h1v1h-1zm26 0h3v1h-3zm6 0h1v1h-1zm2 0h1v1h-1zm13 0h1v1h-1zm7 0h1v1h-1zm5 0h1v1h-1zm9 0h1v1h-1zm-394 1h1v1h-1zm284 0h1v1h-1zm17 0h1v1h-1zm5 0h2v1h-2zm5 0h1v1h-1zm9 0h1v1h-1zm2 0h1v1h-1zm3 0h1v1h-1zm2 0h1v1h-1zm4 0h1v1h-1zm4 0h1v1h-1zm5 0h2v1h-2zm5 0h1v1h-1zm14 0h1v1h-1zm6 0h1v1h-1zm2 0h1v1h-1zm10 0h1v1h-1zm6 0h1v1h-1zm2 0h1v1h-1zm9 0h1v1h-1zm3 0h1v1h-1zm2 0h1v1h-1zm-55 1h1v1h-1zm19 0h1v1h-1zm2 0h1v1h-1zm32 0h1v1h-1zm-391 2h1v1h-1zm1 1h1v1h-1zm21 0h2v1h-2zm0 1h1v1h-1zm-18 4h1v1h-1zm13 0h1v1h-1zm-14 2h1v1h-1zm3 1h1v1h-1zm10 2h1v1h-1zm-3 2h1v1h-1z" fill="#e04000"/>
<path d="M153 510h1v1h-1zm11 0h1v1h-1zm9 0h1v1h-1zm3 0h1v1h-1zm21 0h1v1h-1zm-35 1h1v1h-1zm21 0h1v1h-1zm5 0h2v1h-2zm7 0h1v1h-1zm12 0h1v1h-1zm3 0h1v1h-1zm4 0h1v1h-1zm11 0h1v1h-1zm2 0h1v1h-1zm4 0h1v1h-1zm23 0h1v1h-1zm6 0h1v1h-1zm8 0h1v1h-1zm3 0h1v1h-1zm-110 1h1v1h-1zm2 0h1v1h-1zm11 0h1v1h-1zm25 0h2v1h-2zm9 0h1v1h-1zm4 0h1v1h-1zm37 0h1v1h-1zm8 0h1v1h-1zm19 0h1v1h-1zm2 0h1v1h-1zm-97 1h1v1h-1zm19 0h1v1h-1zm3 0h1v1h-1zm13 0h1v1h-1zm26 0h1v1h-1zm4 0h1v1h-1zm6 0h1v1h-1zm9 0h1v1h-1zm9 0h1v1h-1zm3 0h1v1h-1zm2 0h1v1h-1zm22 0h1v1h-1zm4 0h1v1h-1zm91 0h2v1h-2zm-173 1h1v1h-1zm3 0h1v1h-1zm5 0h1v1h-1zm5 0h1v1h-1zm3 0h1v1h-1zm4 0h1v1h-1zm3 0h1v1h-1zm6 0h1v1h-1zm30 0h1v1h-1zm18 0h1v1h-1zm6 0h1v1h-1zm3 0h1v1h-1zm4 0h1v1h-1zm90 0h1v1h-1zm5 0h1v1h-1zm3 0h1v1h-1zm3 0h2v1h-2zm5 0h1v1h-1zm14 0h1v1h-1zm28 0h1v1h-1zm11 0h1v1h-1zm-168 1h1v1h-1zm8 0h1v1h-1zm8 0h1v1h-1zm59 0h1v1h-1zm13 0h1v1h-1zm4 0h1v1h-1zm6 0h1v1h-1zm30 0h1v1h-1zm3 0h1v1h-1zm44 0h1v1h-1zm30 0h1v1h-1zm21 0h1v1h-1zm-216 1h1v1h-1zm56 0h1v1h-1zm21 0h1v1h-1zm20 0h1v1h-1zm5 0h1v1h-1zm8 0h1v1h-1zm16 0h1v1h-1zm7 0h1v1h-1zm38 0h1v1h-1zm18 0h2v1h-2zm6 0h1v1h-1zm17 0h2v1h-2zm3 0h1v1h-1zm4 0h1v1h-1zm9 0h1v1h-1zm16 0h2v1h-2zm33 0h1v1h-1zm8 0h1v1h-1zm-224 1h1v1h-1zm53 0h1v1h-1zm8 0h1v1h-1zm6 0h1v1h-1zm12 0h1v1h-1zm3 0h1v1h-1zm18 0h1v1h-1zm3 0h1v1h-1zm2 0h1v1h-1zm6 0h1v1h-1zm22 0h1v1h-1zm13 0h1v1h-1zm9 0h1v1h-1zm3 0h1v1h-1zm4 0h1v1h-1zm4 0h1v1h-1zm8 0h1v1h-1zm20 0h1v1h-1zm22 0h1v1h-1zm10 0h1v1h-1zm2 0h1v1h-1zm13 0h1v1h-1zm13 0h1v1h-1zm2 0h1v1h-1zm26 0h1v1h-1zm-180 1h1v1h-1zm12 0h3v1h-3zm24 0h1v1h-1zm18 0h1v1h-1zm4 0h1v1h-1zm4 0h1v1h-1zm2 0h1v1h-1zm20 0h1v1h-1zm9 0h1v1h-1zm2 0h1v1h-1zm3 0h1v1h-1zm23 0h1v1h-1zm11 0h1v1h-1zm3 0h1v1h-1zm14 0h1v1h-1zm13 0h1v1h-1zm2 0h1v1h-1zm15 0h1v1h-1zm8 0h1v1h-1zm7 0h1v1h-1zm3 0h1v1h-1zm2 0h1v1h-1zm19 0h1v1h-1zm2 0h1v1h-1zm3 0h1v1h-1zm13 0h1v1h-1zm2 0h1v1h-1zm2 0h1v1h-1zm4 0h1v1h-1zm-355 1h1v1h-1zm186 0h4v1h-4zm7 0h1v1h-1zm34 0h1v1h-1zm12 0h1v1h-1zm16 0h2v1h-2zm22 0h1v1h-1zm14 0h1v1h-1zm2 0h1v1h-1zm4 0h1v1h-1zm5 0h1v1h-1zm7 0h1v1h-1zm5 0h1v1h-1zm5 0h1v1h-1zm33 0h1v1h-1zm11 0h1v1h-1zm-399 1h1v1h-1zm2 0h1v1h-1zm287 0h1v1h-1zm16 0h1v1h-1zm8 0h1v1h-1zm11 0h1v1h-1zm21 0h1v1h-1zm42 0h1v1h-1zm3 0h1v1h-1zm4 0h1v1h-1zm-50 1h1v1h-1zm5 0h1v1h-1zm6 0h1v1h-1zm2 0h2v1h-2zm3 0h1v1h-1zm3 0h2v1h-2zm8 0h1v1h-1zm3 0h1v1h-1zm2 0h1v1h-1zm5 0h2v1h-2zm8 0h1v1h-1zm3 0h1v1h-1zm-389 1h1v1h-1zm26 0h1v1h-1zm-3 2h1v1h-1zm-17 4h1v1h-1zm0 3h2v1h-2zm2 2h1v1h-1zm1 1h1v1h-1zm7 1h2v1h-2zm-7 1h1v1h-1zm4 0h1v1h-1zm0 1h1v1h-1zm3 0h1v1h-1z" fill="#f0a000"/>
<path d="M153 519h1v1h-1zm12 0h1v1h-1zm2 0h1v1h-1zm15 0h1v1h-1zm17 0h1v1h-1zm7 0h1v1h-1zm-45 1h1v1h-1zm6 0h1v1h-1zm16 0h1v1h-1zm20 0h1v1h-1zm13 0h1v1h-1zm10 0h1v1h-1zm9 0h1v1h-1zm35 0h1v1h-1zm6 0h1v1h-1zm-114 1h1v1h-1zm14 0h1v1h-1zm20 0h1v1h-1zm29 0h1v1h-1zm10 0h1v1h-1zm2 0h1v1h-1zm3 0h1v1h-1zm7 0h1v1h-1zm8 0h1v1h-1zm18 0h1v1h-1zm22 0h1v1h-1zm2 0h1v1h-1zm-108 1h1v1h-1zm4 0h1v1h-1zm7 0h1v1h-1zm6 0h2v1h-2zm5 0h1v1h-1zm4 0h1v1h-1zm10 0h1v1h-1zm29 0h1v1h-1zm5 0h1v1h-1zm5 0h1v1h-1zm3 0h1v1h-1zm33 0h1v1h-1zm5 0h1v1h-1zm5 0h3v1h-3zm71 0h1v1h-1zm11 0h1v1h-1zm-233 1h1v1h-1zm15 0h1v1h-1zm3 0h1v1h-1zm10 0h2v1h-2zm16 0h1v1h-1zm10 0h1v1h-1zm16 0h1v1h-1zm40 0h1v1h-1zm13 0h1v1h-1zm11 0h1v1h-1zm7 0h1v1h-1zm6 0h1v1h-1zm9 0h1v1h-1zm70 0h1v1h-1zm24 0h1v1h-1zm9 0h1v1h-1zm24 0h1v1h-1zm13 0h1v1h-1zm4 0h1v1h-1zm-302 1h2v1h-2zm29 0h1v1h-1zm2 0h1v1h-1zm5 0h1v1h-1zm11 0h1v1h-1zm25 0h4v1h-4zm17 0h1v1h-1zm15 0h1v1h-1zm18 0h1v1h-1zm10 0h1v1h-1zm8 0h1v1h-1zm2 0h1v1h-1zm74 0h1v1h-1zm9 0h1v1h-1zm15 0h1v1h-1zm11 0h1v1h-1zm2 0h1v1h-1zm13 0h1v1h-1zm5 0h1v1h-1zm17 0h1v1h-1zm38 0h1v1h-1zm5 0h1v1h-1zm5 0h1v1h-1zm12 0h1v1h-1zm4 0h1v1h-1zm11 0h1v1h-1zm4 0h2v1h-2zm-306 1h1v1h-1zm9 0h1v1h-1zm57 0h1v1h-1zm16 0h1v1h-1zm3 0h1v1h-1zm9 0h1v1h-1zm6 0h1v1h-1zm2 0h1v1h-1zm4 0h1v1h-1zm41 0h2v1h-2zm4 0h1v1h-1zm3 0h1v1h-1zm2 0h1v1h-1zm3 0h1v1h-1zm5 0h1v1h-1zm2 0h1v1h-1zm38 0h1v1h-1zm12 0h2v1h-2zm5 0h1v1h-1zm9 0h1v1h-1zm12 0h1v1h-1zm4 0h1v1h-1zm41 0h1v1h-1zm24 0h1v1h-1zm15 0h1v1h-1zm8 0h1v1h-1zm13 0h1v1h-1zm3 0h1v1h-1zm3 0h1v1h-1zm11 0h1v1h-1zm-292 1h1v1h-1zm7 0h1v1h-1zm4 0h1v1h-1zm68 0h1v1h-1zm33 0h1v1h-1zm2 0h1v1h-1zm5 0h1v1h-1zm4 0h2v1h-2zm3 0h2v1h-2zm7 0h1v1h-1zm3 0h1v1h-1zm7 0h2v1h-2zm7 0h1v1h-1zm4 0h1v1h-1zm3 0h1v1h-1zm10 0h1v1h-1zm5 0h1v1h-1zm20 0h1v1h-1zm13 0h1v1h-1zm45 0h1v1h-1zm12 0h1v1h-1zm55 0h1v1h-1zm13 0h1v1h-1zm-308 1h1v1h-1zm80 0h1v1h-1zm46 0h1v1h-1zm15 0h1v1h-1zm3 0h2v1h-2zm25 0h1v1h-1zm29 0h1v1h-1zm8 0h1v1h-1zm3 0h1v1h-1zm4 0h1v1h-1zm12 0h1v1h-1zm12 0h1v1h-1zm3 0h1v1h-1zm17 0h1v1h-1zm6 0h1v1h-1zm2 0h1v1h-1zm21 0h1v1h-1zm5 0h1v1h-1zm33 0h1v1h-1zm8 0h1v1h-1zm9 0h2v1h-2zm4 0h1v1h-1zm40 0h1v1h-1zm2 0h1v1h-1zm18 0h1v1h-1zm-390 1h1v1h-1zm46 0h2v1h-2zm40 0h1v1h-1zm14 0h1v1h-1zm7 0h1v1h-1zm28 0h2v1h-2zm5 0h1v1h-1zm7 0h1v1h-1zm6 0h1v1h-1zm19 0h1v1h-1zm21 0h1v1h-1zm6 0h1v1h-1zm60 0h3v1h-3zm5 0h1v1h-1zm6 0h1v1h-1zm3 0h1v1h-1zm11 0h1v1h-1zm3 0h1v1h-1zm11 0h1v1h-1zm10 0h1v1h-1zm3 0h1v1h-1zm8 0h1v1h-1zm15 0h1v1h-1zm17 0h1v1h-1zm11 0h1v1h-1zm11 0h1v1h-1zm4 0h1v1h-1zm5 0h1v1h-1zm-237 1h1v1h-1zm42 0h1v1h-1zm4 0h1v1h-1zm5 0h1v1h-1zm20 0h3v1h-3zm24 0h1v1h-1zm18 0h1v1h-1zm3 0h1v1h-1zm14 0h1v1h-1zm40 0h1v1h-1zm28 0h1v1h-1zm4 0h2v1h-2zm16 0h1v1h-1zm2 0h1v1h-1zm7 0h1v1h-1zm11 0h1v1h-1zm-383 1h1v1h-1zm32 0h1v1h-1zm225 0h1v1h-1zm14 0h1v1h-1zm16 0h1v1h-1zm15 0h1v1h-1zm21 0h1v1h-1zm3 0h1v1h-1zm44 0h2v1h-2zm3 0h1v1h-1zm-346 1h1v1h-1zm6 0h1v1h-1zm241 0h1v1h-1zm16 0h1v1h-1zm2 0h1v1h-1zm11 0h1v1h-1zm12 0h1v1h-1zm15 0h1v1h-1zm5 0h1v1h-1zm18 0h1v1h-1zm9 0h1v1h-1zm4 0h1v1h-1zm8 0h1v1h-1zm3 0h1v1h-1zm7 0h1v1h-1zm2 0h1v1h-1zm8 0h1v1h-1zm-393 1h1v1h-1zm360 0h1v1h-1zm9 0h1v1h-1zm-369 1h1v1h-1zm2 1h1v1h-1zm2 0h1v1h-1zm2 1h1v1h-1zm-2 1h1v1h-1zm2 1h2v1h-2zm17 2h1v1h-1zm-15 3h2v1h-2zm2 1h1v1h-1zm4 2h1v1h-1zm1 1h1v1h-1zm1 1h1v1h-1zm2 0h1v1h-1zm-8 1h1v1h-1zm8 0h1v1h-1z" fill="#20d830"/>
<path d="M153 525h1v1h-1zm12 0h1v1h-1zm11 0h1v1h-1zm4 0h1v1h-1zm7 0h1v1h-1zm23 0h1v1h-1zm-55 1h1v1h-1zm3 0h1v1h-1zm3 0h1v1h-1zm3 0h1v1h-1zm2 0h1v1h-1zm9 0h1v1h-1zm2 0h1v1h-1zm12 0h1v1h-1zm15 0h1v1h-1zm23 0h1v1h-1zm2 0h1v1h-1zm3 0h1v1h-1zm10 0h1v1h-1zm5 0h1v1h-1zm5 0h1v1h-1zm2 0h1v1h-1zm4 0h1v1h-1zm13 0h1v1h-1zm3 0h1v1h-1zm-116 1h2v1h-2zm11 0h1v1h-1zm7 0h1v1h-1zm12 0h1v1h-1zm28 0h2v1h-2zm11 0h1v1h-1zm9 0h1v1h-1zm5 0h1v1h-1zm2 0h1v1h-1zm39 0h1v1h-1zm7 0h1v1h-1zm2 0h1v1h-1zm5 0h1v1h-1zm-136 1h1v1h-1zm23 0h1v1h-1zm12 0h1v1h-1zm3 0h1v1h-1zm3 0h1v1h-1zm13 0h1v1h-1zm15 0h1v1h-1zm20 0h1v1h-1zm5 0h1v1h-1zm2 0h1v1h-1zm31 0h1v1h-1zm4 0h2v1h-2zm91 0h1v1h-1zm8 0h1v1h-1zm2 0h1v1h-1zm11 0h1v1h-1zm-245 1h1v1h-1zm3 0h1v1h-1zm23 0h1v1h-1zm8 0h1v1h-1zm5 0h1v1h-1zm50 0h1v1h-1zm11 0h1v1h-1zm20 0h1v1h-1zm13 0h2v1h-2zm10 0h1v1h-1zm77 0h1v1h-1zm10 0h1v1h-1zm17 0h1v1h-1zm3 0h1v1h-1zm34 0h1v1h-1zm4 0h1v1h-1zm-229 1h1v1h-1zm6 0h1v1h-1zm6 0h1v1h-1zm2 0h1v1h-1zm5 0h1v1h-1zm34 0h1v1h-1zm18 0h2v1h-2zm13 0h1v1h-1zm20 0h1v1h-1zm46 0h1v1h-1zm2 0h2v1h-2zm23 0h1v1h-1zm11 0h1v1h-1zm20 0h1v1h-1zm26 0h1v1h-1zm10 0h1v1h-1zm8 0h1v1h-1zm2 0h1v1h-1zm5 0h1v1h-1zm8 0h1v1h-1zm13 0h1v1h-1zm3 0h1v1h-1zm8 0h2v1h-2zm4 0h1v1h-1zm3 0h1v1h-1zm7 0h1v1h-1zm-228 1h1v1h-1zm3 0h1v1h-1zm4 0h1v1h-1zm9 0h1v1h-1zm5 0h1v1h-1zm82 0h1v1h-1zm3 0h1v1h-1zm9 0h1v1h-1zm4 0h1v1h-1zm7 0h1v1h-1zm5 0h1v1h-1zm19 0h1v1h-1zm2 0h1v1h-1zm6 0h3v1h-3zm18 0h1v1h-1zm20 0h1v1h-1zm17 0h1v1h-1zm23 0h1v1h-1zm15 0h1v1h-1zm9 0h1v1h-1zm21 0h1v1h-1zm12 0h1v1h-1zm-259 1h1v1h-1zm35 0h1v1h-1zm14 0h1v1h-1zm2 0h1v1h-1zm9 0h1v1h-1zm9 0h1v1h-1zm20 0h1v1h-1zm16 0h1v1h-1zm7 0h1v1h-1zm11 0h1v1h-1zm19 0h1v1h-1zm26 0h1v1h-1zm36 0h1v1h-1zm4 0h1v1h-1zm5 0h1v1h-1zm17 0h1v1h-1zm4 0h1v1h-1zm13 0h1v1h-1zm20 0h2v1h-2zm10 0h1v1h-1zm2 0h1v1h-1zm10 0h1v1h-1zm2 0h1v1h-1zm30 0h2v1h-2zm11 0h1v1h-1zm-333 1h1v1h-1zm2 0h1v1h-1zm38 0h1v1h-1zm44 0h3v1h-3zm6 0h1v1h-1zm15 0h1v1h-1zm13 0h1v1h-1zm19 0h1v1h-1zm11 0h1v1h-1zm14 0h2v1h-2zm13 0h1v1h-1zm5 0h2v1h-2zm7 0h1v1h-1zm5 0h1v1h-1zm2 0h1v1h-1zm8 0h1v1h-1zm6 0h1v1h-1zm4 0h1v1h-1zm20 0h1v1h-1zm8 0h1v1h-1zm9 0h1v1h-1zm9 0h2v1h-2zm6 0h1v1h-1zm6 0h1v1h-1zm8 0h2v1h-2zm13 0h2v1h-2zm7 0h1v1h-1zm3 0h1v1h-1zm16 0h1v1h-1zm8 0h1v1h-1zm3 0h1v1h-1zm20 0h1v1h-1zm2 0h1v1h-1zm12 0h1v1h-1zm17 0h1v1h-1zm-337 1h1v1h-1zm143 0h1v1h-1zm5 0h1v1h-1zm8 0h1v1h-1zm8 0h1v1h-1zm27 0h1v1h-1zm13 0h1v1h-1zm8 0h1v1h-1zm34 0h1v1h-1zm18 0h1v1h-1zm10 0h1v1h-1zm12 0h1v1h-1zm15 0h2v1h-2zm24 0h1v1h-1zm7 0h1v1h-1zm-375 1h1v1h-1zm6 0h1v1h-1zm205 0h1v1h-1zm4 0h1v1h-1zm18 0h2v1h-2zm9 0h1v1h-1zm5 0h1v1h-1zm9 0h2v1h-2zm10 0h1v1h-1zm11 0h1v1h-1zm30 0h1v1h-1zm9 0h1v1h-1zm9 0h1v1h-1zm5 0h1v1h-1zm3 0h1v1h-1zm25 0h2v1h-2zm17 0h1v1h-1zm20 0h2v1h-2zm-391 1h1v1h-1zm300 0h1v1h-1zm2 0h1v1h-1zm22 0h1v1h-1zm4 0h1v1h-1zm2 0h1v1h-1zm7 0h1v1h-1zm4 0h1v1h-1zm40 0h1v1h-1zm12 0h1v1h-1zm2 0h1v1h-1zm-366 1h1v1h-1zm2 0h1v1h-1zm304 0h1v1h-1zm16 0h1v1h-1zm2 0h3v1h-3zm9 0h1v1h-1zm2 0h1v1h-1zm5 0h1v1h-1zm26 0h1v1h-1zm-393 1h1v1h-1zm-155 2h1v1h-1zm7 0h1v1h-1zm3 0h1v1h-1zm10 0h1v1h-1zm10 0h1v1h-1zm8 0h1v1h-1zm-53 1h1v1h-1zm3 0h1v1h-1zm3 0h1v1h-1zm23 0h1v1h-1zm7 0h1v1h-1zm2 0h1v1h-1zm22 0h1v1h-1zm5 0h1v1h-1zm19 0h2v1h-2zm16 0h1v1h-1zm14 0h1v1h-1zm-121 1h1v1h-1zm5 0h1v1h-1zm61 0h1v1h-1zm3 0h2v1h-2zm8 0h2v1h-2zm3 0h1v1h-1zm50 0h1v1h-1zm2 0h1v1h-1zm10 0h1v1h-1zm56 0h1v1h-1zm-187 1h1v1h-1zm19 0h1v1h-1zm4 0h1v1h-1zm4 0h1v1h-1zm11 0h1v1h-1zm3 0h1v1h-1zm10 0h1v1h-1zm11 0h1v1h-1zm5 0h1v1h-1zm8 0h1v1h-1zm13 0h1v1h-1zm12 0h1v1h-1zm18 0h1v1h-1zm-96 1h1v1h-1zm17 0h1v1h-1zm14 0h1v1h-1zm7 0h1v1h-1zm25 0h1v1h-1zm32 0h2v1h-2zm22 0h1v1h-1zm76 0h1v1h-1zm10 0h1v1h-1zm35 0h1v1h-1zm5 0h1v1h-1zm11 0h1v1h-1zm24 0h1v1h-1zm5 0h1v1h-1zm-238 1h1v1h-1zm7 0h1v1h-1zm2 0h1v1h-1zm29 0h1v1h-1zm114 0h1v1h-1zm4 0h1v1h-1zm13 0h1v1h-1zm13 0h1v1h-1zm8 0h1v1h-1zm31 0h2v1h-2zm7 0h2v1h-2zm27 0h1v1h-1zm2 0h1v1h-1zm20 0h1v1h-1zm5 0h1v1h-1zm5 0h1v1h-1zm-230 1h1v1h-1zm75 0h1v1h-1zm4 0h2v1h-2zm25 0h1v1h-1zm2 0h1v1h-1zm56 0h1v1h-1zm5 0h1v1h-1zm6 0h1v1h-1zm4 0h1v1h-1zm17 0h1v1h-1zm30 0h1v1h-1zm14 0h1v1h-1zm29 0h1v1h-1zm4 0h1v1h-1zm-241 1h1v1h-1zm19 0h1v1h-1zm11 0h1v1h-1zm41 0h1v1h-1zm23 0h1v1h-1zm21 0h1v1h-1zm56 0h1v1h-1zm12 0h1v1h-1zm71 0h1v1h-1zm17 0h1v1h-1zm3 0h1v1h-1zm2 0h1v1h-1zm6 0h1v1h-1zm23 0h1v1h-1zm6 0h2v1h-2zm16 0h1v1h-1zm9 0h1v1h-1zm3 0h1v1h-1zm-299 1h1v1h-1zm2 0h1v1h-1zm2 0h1v1h-1zm8 0h1v1h-1zm39 0h1v1h-1zm33 0h1v1h-1zm20 0h1v1h-1zm9 0h1v1h-1zm23 0h1v1h-1zm5 0h1v1h-1zm16 0h1v1h-1zm14 0h1v1h-1zm31 0h1v1h-1zm22 0h1v1h-1zm18 0h1v1h-1zm37 0h1v1h-1zm29 0h1v1h-1zm2 0h1v1h-1zm17 0h1v1h-1zm10 0h1v1h-1zm25 0h1v1h-1zm-392 1h1v1h-1zm32 0h1v1h-1zm116 0h1v1h-1zm12 0h1v1h-1zm2 0h1v1h-1zm5 0h1v1h-1zm6 0h1v1h-1zm7 0h1v1h-1zm11 0h2v1h-2zm69 0h2v1h-2zm23 0h1v1h-1zm18 0h1v1h-1zm5 0h1v1h-1zm14 0h1v1h-1zm2 0h1v1h-1zm2 0h1v1h-1zm29 0h1v1h-1zm3 0h1v1h-1zm10 0h1v1h-1zm3 0h1v1h-1zm22 0h1v1h-1zm-379 1h1v1h-1zm5 0h1v1h-1zm2 0h1v1h-1zm12 0h1v1h-1zm2 0h1v1h-1zm182 0h1v1h-1zm17 0h1v1h-1zm56 0h1v1h-1zm14 0h1v1h-1zm26 0h1v1h-1zm8 0h1v1h-1zm38 0h2v1h-2zm-375 1h1v1h-1zm279 0h1v1h-1zm39 0h1v1h-1zm14 0h1v1h-1zm6 0h1v1h-1zm4 0h2v1h-2zm41 0h1v1h-1zm5 0h1v1h-1zm-386 1h1v1h-1zm9 0h1v1h-1zm348 0h1v1h-1zm7 0h1v1h-1zm7 0h1v1h-1zm9 0h1v1h-1zm4 0h1v1h-1zm8 0h1v1h-1zm-382 1h1v1h-1zm5 0h1v1h-1zm3 1h1v1h-1zm7 0h1v1h-1zm-3 2h1v1h-1zm-15 6h1v1h-1zm10 3h1v1h-1zm1 1h1v1h-1zm-3 1h1v1h-1zm-6 1h2v1h-2zm9 0h1v1h-1z" fill="#20d840"/>
<path d="M159 530h1v1h-1zm25 0h1v1h-1zm-22 1h1v1h-1zm19 0h1v1h-1zm28 0h2v1h-2zm34 0h1v1h-1zm-75 1h1v1h-1zm7 0h1v1h-1zm19 0h1v1h-1zm40 0h1v1h-1zm13 0h1v1h-1zm24 0h1v1h-1zm4 0h1v1h-1zm14 0h1v1h-1zm-94 1h1v1h-1zm8 0h1v1h-1zm7 0h1v1h-1zm5 0h1v1h-1zm15 0h1v1h-1zm14 0h1v1h-1zm136 0h1v1h-1zm6 0h1v1h-1zm-233 1h1v1h-1zm14 0h1v1h-1zm46 0h1v1h-1zm47 0h1v1h-1zm33 0h1v1h-1zm13 0h1v1h-1zm73 0h1v1h-1zm13 0h1v1h-1zm14 0h1v1h-1zm31 0h1v1h-1zm2 0h1v1h-1zm-285 1h1v1h-1zm31 0h1v1h-1zm33 0h1v1h-1zm8 0h1v1h-1zm29 0h1v1h-1zm18 0h1v1h-1zm39 0h1v1h-1zm66 0h1v1h-1zm4 0h2v1h-2zm29 0h1v1h-1zm21 0h1v1h-1zm33 0h1v1h-1zm26 0h1v1h-1zm10 0h1v1h-1zm11 0h1v1h-1zm13 0h1v1h-1zm-361 1h1v1h-1zm30 0h1v1h-1zm6 0h1v1h-1zm35 0h1v1h-1zm40 0h1v1h-1zm13 0h1v1h-1zm3 0h1v1h-1zm2 0h1v1h-1zm2 0h1v1h-1zm4 0h1v1h-1zm9 0h1v1h-1zm15 0h1v1h-1zm50 0h1v1h-1zm8 0h1v1h-1zm55 0h1v1h-1zm31 0h1v1h-1zm2 0h1v1h-1zm16 0h1v1h-1zm8 0h1v1h-1zm7 0h1v1h-1zm29 0h1v1h-1zm-365 1h1v1h-1zm4 0h1v1h-1zm29 0h1v1h-1zm12 0h1v1h-1zm7 0h1v1h-1zm16 0h1v1h-1zm3 0h1v1h-1zm25 0h1v1h-1zm29 0h1v1h-1zm4 0h1v1h-1zm12 0h1v1h-1zm5 0h1v1h-1zm4 0h2v1h-2zm57 0h1v1h-1zm48 0h1v1h-1zm12 0h1v1h-1zm9 0h1v1h-1zm6 0h1v1h-1zm28 0h1v1h-1zm54 0h1v1h-1zm12 0h1v1h-1zm27 0h1v1h-1zm8 0h1v1h-1zm6 0h1v1h-1zm39 0h1v1h-1zm-423 1h1v1h-1zm36 0h2v1h-2zm37 0h1v1h-1zm97 0h1v1h-1zm90 0h2v1h-2zm18 0h1v1h-1zm5 0h1v1h-1zm26 0h1v1h-1zm10 0h1v1h-1zm37 0h1v1h-1zm23 0h1v1h-1zm2 0h1v1h-1zm17 0h1v1h-1zm8 0h1v1h-1zm-442 1h1v1h-1zm21 0h1v1h-1zm52 0h1v1h-1zm51 0h1v1h-1zm25 0h1v1h-1zm4 0h1v1h-1zm6 0h1v1h-1zm37 0h1v1h-1zm29 0h1v1h-1zm5 0h1v1h-1zm28 0h1v1h-1zm31 0h1v1h-1zm3 0h1v1h-1zm16 0h1v1h-1zm24 0h1v1h-1zm12 0h1v1h-1zm24 0h1v1h-1zm67 0h1v1h-1zm85 0h1v1h-1zm15 0h1v1h-1zm-473 1h1v1h-1zm61 0h1v1h-1zm12 0h1v1h-1zm90 0h1v1h-1zm9 0h1v1h-1zm14 0h1v1h-1zm10 0h1v1h-1zm67 0h1v1h-1zm4 0h1v1h-1zm38 0h1v1h-1zm10 0h1v1h-1zm71 0h1v1h-1zm14 0h1v1h-1zm18 0h1v1h-1zm7 0h1v1h-1zm5 0h1v1h-1zm4 0h1v1h-1zm15 0h1v1h-1zm6 0h1v1h-1zm28 0h1v1h-1zm-382 1h1v1h-1zm64 0h1v1h-1zm49 0h2v1h-2zm116 0h1v1h-1zm12 0h1v1h-1zm9 0h1v1h-1zm78 0h1v1h-1zm-336 1h1v1h-1zm11 0h1v1h-1zm34 0h1v1h-1zm17 0h1v1h-1zm23 0h1v1h-1zm19 0h1v1h-1zm25 0h1v1h-1zm8 0h1v1h-1zm8 0h1v1h-1zm6 0h1v1h-1zm28 0h1v1h-1zm14 0h1v1h-1zm2 0h1v1h-1zm73 0h1v1h-1zm56 0h1v1h-1zm2 0h1v1h-1zm5 0h1v1h-1zm50 0h1v1h-1zm-329 1h1v1h-1zm38 0h1v1h-1zm46 0h1v1h-1zm27 0h1v1h-1zm30 0h1v1h-1zm65 0h1v1h-1zm35 0h1v1h-1zm32 0h2v1h-2zm18 0h1v1h-1zm15 0h1v1h-1zm36 0h1v1h-1zm-383 1h1v1h-1zm192 0h1v1h-1zm10 0h1v1h-1zm83 0h1v1h-1zm18 0h1v1h-1zm17 0h1v1h-1zm59 0h1v1h-1zm3 0h1v1h-1zm-384 1h1v1h-1zm3 0h1v1h-1zm35 0h1v1h-1zm182 0h1v1h-1zm44 0h1v1h-1zm44 0h1v1h-1zm5 0h1v1h-1zm41 0h1v1h-1zm-353 1h1v1h-1zm2 0h1v1h-1zm29 0h1v1h-1zm278 0h2v1h-2zm4 0h1v1h-1zm66 0h1v1h-1zm-22 1h1v1h-1zm41 0h2v1h-2zm-389 1h1v1h-1zm0 7h1v1h-1zm14 0h1v1h-1zm0 2h1v1h-1zm-9 1h1v1h-1zm2 0h1v1h-1zm7 0h1v1h-1zm0 1h1v1h-1zm-11 1h1v1h-1z" fill="#10d0a0"/>
<path d="M158 519h1v1h-1zm13 0h1v1h-1zm2 0h1v1h-1zm2 0h2v1h-2zm10 0h2v1h-2zm-11 1h1v1h-1zm2 0h1v1h-1zm11 0h1v1h-1zm11 0h1v1h-1zm3 0h1v1h-1zm3 0h2v1h-2zm4 0h1v1h-1zm25 0h1v1h-1zm11 0h2v1h-2zm5 0h2v1h-2zm13 0h1v1h-1zm3 0h1v1h-1zm6 0h2v1h-2zm-117 1h1v1h-1zm11 0h1v1h-1zm30 0h1v1h-1zm24 0h1v1h-1zm22 0h1v1h-1zm3 0h1v1h-1zm10 0h1v1h-1zm34 0h1v1h-1zm17 0h1v1h-1zm-149 1h1v1h-1zm8 0h1v1h-1zm14 0h1v1h-1zm5 0h1v1h-1zm16 0h1v1h-1zm21 0h1v1h-1zm28 0h1v1h-1zm47 0h1v1h-1zm6 0h1v1h-1zm83 0h1v1h-1zm15 0h1v1h-1zm-234 1h1v1h-1zm16 0h1v1h-1zm18 0h1v1h-1zm7 0h2v1h-2zm5 0h1v1h-1zm14 0h1v1h-1zm22 0h1v1h-1zm10 0h1v1h-1zm15 0h1v1h-1zm2 0h1v1h-1zm15 0h1v1h-1zm30 0h1v1h-1zm52 0h1v1h-1zm21 0h1v1h-1zm21 0h1v1h-1zm10 0h1v1h-1zm18 0h1v1h-1zm2 0h1v1h-1zm17 0h1v1h-1zm5 0h1v1h-1zm-306 1h1v1h-1zm12 0h2v1h-2zm9 0h1v1h-1zm38 0h1v1h-1zm3 0h1v1h-1zm15 0h1v1h-1zm18 0h2v1h-2zm8 0h1v1h-1zm5 0h1v1h-1zm14 0h1v1h-1zm4 0h1v1h-1zm20 0h1v1h-1zm63 0h1v1h-1zm7 0h1v1h-1zm11 0h1v1h-1zm4 0h1v1h-1zm8 0h1v1h-1zm4 0h1v1h-1zm15 0h1v1h-1zm20 0h1v1h-1zm14 0h1v1h-1zm5 0h2v1h-2zm15 0h2v1h-2zm41 0h1v1h-1zm18 0h1v1h-1zm2 0h2v1h-2zm-315 1h1v1h-1zm5 0h1v1h-1zm22 0h1v1h-1zm2 0h1v1h-1zm2 0h1v1h-1zm39 0h1v1h-1zm7 0h1v1h-1zm5 0h1v1h-1zm5 0h1v1h-1zm2 0h1v1h-1zm57 0h1v1h-1zm23 0h1v1h-1zm6 0h1v1h-1zm3 0h1v1h-1zm3 0h1v1h-1zm19 0h2v1h-2zm10 0h1v1h-1zm6 0h1v1h-1zm7 0h1v1h-1zm9 0h1v1h-1zm13 0h1v1h-1zm3 0h1v1h-1zm8 0h2v1h-2zm5 0h1v1h-1zm9 0h1v1h-1zm2 0h1v1h-1zm15 0h1v1h-1zm20 0h1v1h-1zm19 0h1v1h-1zm18 0h1v1h-1zm6 0h1v1h-1zm9 0h1v1h-1zm10 0h1v1h-1zm7 0h1v1h-1zm2 0h1v1h-1zm-313 1h2v1h-2zm16 0h1v1h-1zm16 0h1v1h-1zm51 0h1v1h-1zm5 0h1v1h-1zm23 0h1v1h-1zm12 0h1v1h-1zm37 0h1v1h-1zm4 0h1v1h-1zm8 0h1v1h-1zm19 0h1v1h-1zm28 0h1v1h-1zm6 0h1v1h-1zm54 0h1v1h-1zm21 0h1v1h-1zm13 0h1v1h-1zm3 0h1v1h-1zm8 0h1v1h-1zm3 0h1v1h-1zm8 0h1v1h-1zm7 0h1v1h-1zm22 0h1v1h-1zm2 0h1v1h-1zm5 0h1v1h-1zm3 0h1v1h-1zm-271 1h1v1h-1zm16 0h1v1h-1zm5 0h1v1h-1zm5 0h1v1h-1zm2 0h1v1h-1zm2 0h1v1h-1zm13 0h1v1h-1zm6 0h1v1h-1zm8 0h1v1h-1zm24 0h2v1h-2zm14 0h1v1h-1zm6 0h2v1h-2zm8 0h1v1h-1zm5 0h1v1h-1zm7 0h1v1h-1zm2 0h1v1h-1zm24 0h1v1h-1zm42 0h1v1h-1zm2 0h1v1h-1zm8 0h1v1h-1zm7 0h1v1h-1zm6 0h1v1h-1zm8 0h1v1h-1zm4 0h1v1h-1zm13 0h1v1h-1zm3 0h1v1h-1zm3 0h1v1h-1zm6 0h1v1h-1zm24 0h1v1h-1zm5 0h1v1h-1zm3 0h1v1h-1zm13 0h1v1h-1zm2 0h1v1h-1zm5 0h1v1h-1zm12 0h1v1h-1zm5 0h2v1h-2zm10 0h1v1h-1zm-384 1h1v1h-1zm33 0h1v1h-1zm5 0h1v1h-1zm10 0h1v1h-1zm42 0h1v1h-1zm2 0h1v1h-1zm8 0h1v1h-1zm29 0h1v1h-1zm18 0h1v1h-1zm7 0h1v1h-1zm6 0h1v1h-1zm3 0h1v1h-1zm2 0h1v1h-1zm3 0h1v1h-1zm8 0h3v1h-3zm5 0h1v1h-1zm4 0h1v1h-1zm14 0h1v1h-1zm13 0h1v1h-1zm21 0h1v1h-1zm10 0h1v1h-1zm30 0h1v1h-1zm24 0h1v1h-1zm2 0h1v1h-1zm9 0h1v1h-1zm15 0h1v1h-1zm7 0h1v1h-1zm6 0h1v1h-1zm7 0h1v1h-1zm25 0h1v1h-1zm6 0h1v1h-1zm3 0h1v1h-1zm2 0h1v1h-1zm4 0h1v1h-1zm2 0h1v1h-1zm5 0h1v1h-1zm-360 1h1v1h-1zm126 0h2v1h-2zm14 0h1v1h-1zm4 0h1v1h-1zm5 0h1v1h-1zm2 0h1v1h-1zm9 0h1v1h-1zm2 0h1v1h-1zm4 0h1v1h-1zm3 0h1v1h-1zm21 0h1v1h-1zm19 0h2v1h-2zm11 0h1v1h-1zm5 0h1v1h-1zm3 0h1v1h-1zm25 0h1v1h-1zm3 0h2v1h-2zm9 0h1v1h-1zm10 0h1v1h-1zm6 0h1v1h-1zm7 0h1v1h-1zm4 0h1v1h-1zm25 0h1v1h-1zm-351 1h1v1h-1zm212 0h1v1h-1zm2 0h1v1h-1zm5 0h1v1h-1zm17 0h1v1h-1zm2 0h1v1h-1zm17 0h3v1h-3zm15 0h1v1h-1zm41 0h1v1h-1zm18 0h1v1h-1zm8 0h1v1h-1zm4 0h2v1h-2zm10 0h1v1h-1zm3 0h1v1h-1zm5 0h1v1h-1zm24 0h1v1h-1zm9 0h1v1h-1zm-392 1h1v1h-1zm36 0h1v1h-1zm245 0h1v1h-1zm9 0h1v1h-1zm8 0h1v1h-1zm24 0h1v1h-1zm13 0h1v1h-1zm6 0h1v1h-1zm5 0h1v1h-1zm8 0h1v1h-1zm4 0h1v1h-1zm4 0h1v1h-1zm4 0h1v1h-1zm12 0h1v1h-1zm21 0h1v1h-1zm-57 1h1v1h-1zm11 0h2v1h-2zm7 0h1v1h-1zm4 0h1v1h-1zm10 0h1v1h-1zm4 0h1v1h-1zm19 0h1v1h-1zm-393 1h1v1h-1zm24 0h1v1h-1zm-22 2h1v1h-1zm8 9h1v1h-1zm8 1h1v1h-1zm-2 4h1v1h-1z" fill="#f0c000"/>
<path d="M177 545h1v1h-1zm4 0h1v1h-1zm2 0h1v1h-1zm23 0h1v1h-1zm4 0h1v1h-1zm3 0h1v1h-1zm-52 1h1v1h-1zm39 0h1v1h-1zm2 0h1v1h-1zm5 0h1v1h-1zm9 0h1v1h-1zm12 0h1v1h-1zm6 0h1v1h-1zm2 0h1v1h-1zm34 0h1v1h-1zm-115 1h1v1h-1zm14 0h1v1h-1zm30 0h1v1h-1zm18 0h1v1h-1zm15 0h1v1h-1zm6 0h1v1h-1zm3 0h1v1h-1zm9 0h1v1h-1zm-28 1h1v1h-1zm6 0h1v1h-1zm13 0h1v1h-1zm5 0h1v1h-1zm26 0h1v1h-1zm19 0h1v1h-1zm3 0h1v1h-1zm7 0h1v1h-1zm81 0h2v1h-2zm23 0h1v1h-1zm-116 1h1v1h-1zm4 0h1v1h-1zm4 0h1v1h-1zm10 0h1v1h-1zm83 0h1v1h-1zm22 0h1v1h-1zm-28 1h1v1h-1zm12 0h1v1h-1zm15 0h1v1h-1zm31 0h1v1h-1zm8 0h1v1h-1zm22 0h1v1h-1zm3 0h1v1h-1zm25 0h1v1h-1zm31 0h1v1h-1zm2 0h1v1h-1zm-214 1h2v1h-2zm53 0h1v1h-1zm34 0h2v1h-2zm55 0h1v1h-1zm10 0h1v1h-1zm7 0h1v1h-1zm13 0h1v1h-1zm12 0h1v1h-1zm3 0h1v1h-1zm4 0h1v1h-1zm2 0h1v1h-1zm32 0h1v1h-1zm18 0h1v1h-1zm5 0h1v1h-1zm3 0h1v1h-1zm-245 1h1v1h-1zm147 0h1v1h-1zm12 0h1v1h-1zm17 0h1v1h-1zm9 0h1v1h-1zm13 0h1v1h-1zm26 0h1v1h-1zm2 0h1v1h-1zm4 0h2v1h-2zm10 0h1v1h-1zm5 0h1v1h-1zm13 0h1v1h-1zm16 0h1v1h-1zm10 0h1v1h-1zm15 0h1v1h-1zm34 0h1v1h-1zm-331 1h1v1h-1zm220 0h1v1h-1zm6 0h1v1h-1zm18 0h1v1h-1zm19 0h1v1h-1zm9 0h1v1h-1zm2 0h1v1h-1zm9 0h1v1h-1zm24 0h1v1h-1zm10 0h1v1h-1zm29 0h1v1h-1zm5 0h1v1h-1zm9 0h1v1h-1zm12 0h1v1h-1zm7 0h1v1h-1zm3 0h1v1h-1zm-351 1h1v1h-1zm269 0h1v1h-1zm3 0h1v1h-1zm27 0h1v1h-1zm17 0h2v1h-2zm16 0h1v1h-1zm6 0h1v1h-1zm5 0h2v1h-2zm6 0h2v1h-2zm-42 1h1v1h-1zm22 0h1v1h-1zm9 0h1v1h-1zm10 0h1v1h-1zm8 0h1v1h-1zm-362 5h1v1h-1zm-1 3h1v1h-1zm-15 4h1v1h-1zm7 5h1v1h-1z" fill="#10b8d0"/>
<path d="M164 530h1v1h-1zm49 0h1v1h-1zm-30 1h1v1h-1zm22 0h1v1h-1zm30 0h1v1h-1zm11 0h1v1h-1zm15 0h1v1h-1zm-88 1h1v1h-1zm70 0h1v1h-1zm44 0h1v1h-1zm-117 1h1v1h-1zm19 0h1v1h-1zm4 0h1v1h-1zm23 0h1v1h-1zm11 0h1v1h-1zm12 0h1v1h-1zm44 0h1v1h-1zm24 0h1v1h-1zm-131 1h1v1h-1zm32 0h1v1h-1zm11 0h1v1h-1zm11 0h1v1h-1zm8 0h1v1h-1zm18 0h1v1h-1zm22 0h1v1h-1zm42 0h1v1h-1zm48 0h1v1h-1zm-202 1h1v1h-1zm29 0h1v1h-1zm63 0h1v1h-1zm8 0h2v1h-2zm16 0h1v1h-1zm95 0h1v1h-1zm13 0h1v1h-1zm17 0h1v1h-1zm2 0h1v1h-1zm15 0h1v1h-1zm20 0h1v1h-1zm4 0h1v1h-1zm21 0h1v1h-1zm15 0h1v1h-1zm-309 1h1v1h-1zm48 0h1v1h-1zm20 0h1v1h-1zm16 0h1v1h-1zm11 0h1v1h-1zm15 0h1v1h-1zm19 0h1v1h-1zm10 0h1v1h-1zm77 0h1v1h-1zm37 0h1v1h-1zm21 0h1v1h-1zm14 0h1v1h-1zm8 0h1v1h-1zm35 0h1v1h-1zm76 0h1v1h-1zm15 0h1v1h-1zm-418 1h1v1h-1zm9 0h1v1h-1zm4 0h1v1h-1zm3 0h1v1h-1zm36 0h1v1h-1zm144 0h1v1h-1zm77 0h1v1h-1zm66 0h1v1h-1zm25 0h1v1h-1zm33 0h1v1h-1zm25 0h1v1h-1zm21 0h1v1h-1zm3 0h1v1h-1zm27 0h1v1h-1zm2 0h1v1h-1zm-481 1h1v1h-1zm32 0h1v1h-1zm10 0h1v1h-1zm13 0h1v1h-1zm13 0h1v1h-1zm5 0h1v1h-1zm12 0h1v1h-1zm9 0h1v1h-1zm15 0h1v1h-1zm27 0h1v1h-1zm14 0h1v1h-1zm102 0h1v1h-1zm2 0h1v1h-1zm6 0h1v1h-1zm4 0h1v1h-1zm4 0h1v1h-1zm9 0h1v1h-1zm3 0h1v1h-1zm13 0h1v1h-1zm4 0h1v1h-1zm56 0h1v1h-1zm49 0h1v1h-1zm47 0h1v1h-1zm24 0h1v1h-1zm58 0h1v1h-1zm12 0h1v1h-1zm-496 1h1v1h-1zm26 0h2v1h-2zm18 0h1v1h-1zm11 0h1v1h-1zm32 0h1v1h-1zm6 0h1v1h-1zm2 0h1v1h-1zm13 0h1v1h-1zm74 0h1v1h-1zm11 0h1v1h-1zm17 0h1v1h-1zm56 0h1v1h-1zm23 0h1v1h-1zm43 0h1v1h-1zm64 0h1v1h-1zm28 0h1v1h-1zm40 0h1v1h-1zm-466 1h1v1h-1zm159 0h1v1h-1zm13 0h1v1h-1zm3 0h1v1h-1zm19 0h1v1h-1zm20 0h1v1h-1zm18 0h2v1h-2zm32 0h1v1h-1zm13 0h1v1h-1zm19 0h1v1h-1zm6 0h1v1h-1zm40 0h1v1h-1zm5 0h1v1h-1zm12 0h1v1h-1zm8 0h1v1h-1zm17 0h1v1h-1zm13 0h1v1h-1zm65 0h1v1h-1zm8 0h1v1h-1zm34 0h1v1h-1zm-442 1h1v1h-1zm36 0h1v1h-1zm11 0h1v1h-1zm35 0h1v1h-1zm3 0h1v1h-1zm12 0h1v1h-1zm41 0h1v1h-1zm33 0h1v1h-1zm42 0h1v1h-1zm13 0h1v1h-1zm26 0h1v1h-1zm30 0h1v1h-1zm8 0h1v1h-1zm3 0h1v1h-1zm25 0h1v1h-1zm5 0h1v1h-1zm21 0h1v1h-1zm25 0h1v1h-1zm13 0h1v1h-1zm-260 1h1v1h-1zm48 0h1v1h-1zm19 0h1v1h-1zm21 0h1v1h-1zm10 0h1v1h-1zm17 0h1v1h-1zm4 0h1v1h-1zm7 0h1v1h-1zm6 0h1v1h-1zm6 0h1v1h-1zm7 0h1v1h-1zm27 0h1v1h-1zm92 0h1v1h-1zm9 0h1v1h-1zm-357 1h1v1h-1zm40 0h1v1h-1zm16 0h1v1h-1zm52 0h1v1h-1zm17 0h1v1h-1zm2 0h1v1h-1zm22 0h1v1h-1zm24 0h1v1h-1zm68 0h1v1h-1zm33 0h1v1h-1zm31 0h1v1h-1zm8 0h1v1h-1zm44 0h1v1h-1zm30 0h1v1h-1zm-381 1h1v1h-1zm159 0h1v1h-1zm48 0h1v1h-1zm49 0h1v1h-1zm15 0h1v1h-1zm5 0h1v1h-1zm5 0h1v1h-1zm84 0h1v1h-1zm12 0h1v1h-1zm-160 1h1v1h-1zm64 0h1v1h-1zm17 0h1v1h-1zm43 0h1v1h-1zm9 0h1v1h-1zm6 0h1v1h-1zm7 0h1v1h-1zm3 0h1v1h-1zm4 0h1v1h-1zm-87 1h1v1h-1zm14 0h1v1h-1zm16 0h1v1h-1zm35 0h1v1h-1zm14 0h1v1h-1zm22 0h1v1h-1zm-38 1h1v1h-1zm36 0h1v1h-1zm3 0h1v1h-1zm-381 1h1v1h-1zm4 0h1v1h-1zm22 1h1v1h-1zm-20 1h1v1h-1zm20 1h1v1h-1zm-6 1h1v1h-1zm0 3h1v1h-1zm-2 2h1v1h-1zm2 0h1v1h-1zm-8 3h1v1h-1zm2 0h1v1h-1z" fill="#50e010"/>
<path d="M154 546h1v1h-1zm13 0h1v1h-1zm-10 1h1v1h-1zm9 0h1v1h-1zm2 0h1v1h-1zm85 0h1v1h-1zm-91 1h1v1h-1zm2 0h1v1h-1zm8 0h1v1h-1zm20 0h1v1h-1zm55 0h1v1h-1zm-87 1h1v1h-1zm13 0h1v1h-1zm3 0h1v1h-1zm5 0h1v1h-1zm9 0h1v1h-1zm5 0h1v1h-1zm3 0h1v1h-1zm6 0h1v1h-1zm4 0h1v1h-1zm5 0h1v1h-1zm12 0h1v1h-1zm17 0h1v1h-1zm26 0h1v1h-1zm18 0h1v1h-1zm16 0h1v1h-1zm-151 1h1v1h-1zm3 0h1v1h-1zm4 0h1v1h-1zm38 0h1v1h-1zm14 0h1v1h-1zm2 0h1v1h-1zm24 0h1v1h-1zm9 0h1v1h-1zm27 0h1v1h-1zm8 0h1v1h-1zm18 0h1v1h-1zm2 0h1v1h-1zm3 0h1v1h-1zm72 0h1v1h-1zm14 0h1v1h-1zm-237 1h1v1h-1zm5 0h1v1h-1zm4 0h1v1h-1zm4 0h1v1h-1zm3 0h1v1h-1zm2 0h1v1h-1zm6 0h1v1h-1zm9 0h1v1h-1zm4 0h1v1h-1zm10 0h1v1h-1zm3 0h1v1h-1zm6 0h1v1h-1zm16 0h1v1h-1zm4 0h1v1h-1zm8 0h1v1h-1zm14 0h1v1h-1zm4 0h1v1h-1zm2 0h1v1h-1zm22 0h2v1h-2zm12 0h1v1h-1zm5 0h1v1h-1zm3 0h1v1h-1zm2 0h1v1h-1zm10 0h1v1h-1zm59 0h1v1h-1zm61 0h1v1h-1zm11 0h1v1h-1zm7 0h1v1h-1zm45 0h1v1h-1zm-341 1h1v1h-1zm10 0h1v1h-1zm15 0h1v1h-1zm6 0h1v1h-1zm3 0h2v1h-2zm7 0h1v1h-1zm3 0h2v1h-2zm5 0h1v1h-1zm2 0h1v1h-1zm16 0h1v1h-1zm6 0h2v1h-2zm8 0h1v1h-1zm2 0h2v1h-2zm11 0h1v1h-1zm2 0h1v1h-1zm11 0h1v1h-1zm9 0h2v1h-2zm9 0h1v1h-1zm23 0h1v1h-1zm15 0h2v1h-2zm72 0h2v1h-2zm10 0h1v1h-1zm5 0h1v1h-1zm22 0h1v1h-1zm42 0h1v1h-1zm11 0h1v1h-1zm69 0h1v1h-1zm-395 1h1v1h-1zm8 0h1v1h-1zm2 0h1v1h-1zm3 0h1v1h-1zm3 0h1v1h-1zm18 0h1v1h-1zm2 0h1v1h-1zm12 0h1v1h-1zm5 0h1v1h-1zm4 0h1v1h-1zm5 0h1v1h-1zm5 0h1v1h-1zm2 0h1v1h-1zm6 0h1v1h-1zm3 0h1v1h-1zm11 0h1v1h-1zm4 0h1v1h-1zm2 0h2v1h-2zm10 0h1v1h-1zm4 0h1v1h-1zm7 0h1v1h-1zm9 0h1v1h-1zm10 0h1v1h-1zm17 0h1v1h-1zm3 0h2v1h-2zm4 0h1v1h-1zm4 0h1v1h-1zm4 0h1v1h-1zm51 0h2v1h-2zm3 0h1v1h-1zm4 0h1v1h-1zm25 0h1v1h-1zm2 0h1v1h-1zm6 0h2v1h-2zm6 0h1v1h-1zm33 0h1v1h-1zm8 0h2v1h-2zm8 0h1v1h-1zm7 0h1v1h-1zm16 0h1v1h-1zm11 0h1v1h-1zm21 0h1v1h-1zm8 0h1v1h-1zm29 0h1v1h-1zm44 0h1v1h-1zm19 0h2v1h-2zm-466 1h1v1h-1zm4 0h2v1h-2zm4 0h1v1h-1zm6 0h1v1h-1zm7 0h1v1h-1zm4 0h2v1h-2zm4 0h1v1h-1zm3 0h1v1h-1zm2 0h1v1h-1zm13 0h1v1h-1zm7 0h4v1h-4zm9 0h1v1h-1zm13 0h2v1h-2zm3 0h1v1h-1zm4 0h1v1h-1zm23 0h1v1h-1zm4 0h1v1h-1zm5 0h1v1h-1zm4 0h2v1h-2zm3 0h1v1h-1zm3 0h1v1h-1zm4 0h1v1h-1zm2 0h1v1h-1zm6 0h1v1h-1zm4 0h1v1h-1zm8 0h1v1h-1zm2 0h1v1h-1zm4 0h1v1h-1zm6 0h1v1h-1zm9 0h2v1h-2zm38 0h2v1h-2zm18 0h1v1h-1zm9 0h1v1h-1zm3 0h1v1h-1zm7 0h1v1h-1zm13 0h1v1h-1zm11 0h1v1h-1zm25 0h1v1h-1zm2 0h1v1h-1zm9 0h1v1h-1zm20 0h1v1h-1zm12 0h1v1h-1zm9 0h1v1h-1zm33 0h1v1h-1zm13 0h2v1h-2zm18 0h1v1h-1zm32 0h1v1h-1zm24 0h1v1h-1zm-467 1h1v1h-1zm2 0h1v1h-1zm2 0h1v1h-1zm5 0h2v1h-2zm12 0h1v1h-1zm6 0h1v1h-1zm3 0h4v1h-4zm8 0h1v1h-1zm3 0h1v1h-1zm2 0h1v1h-1zm5 0h1v1h-1zm8 0h2v1h-2zm6 0h1v1h-1zm8 0h1v1h-1zm10 0h3v1h-3zm7 0h1v1h-1zm2 0h1v1h-1zm7 0h1v1h-1zm2 0h2v1h-2zm19 0h1v1h-1zm5 0h1v1h-1zm7 0h1v1h-1zm3 0h5v1h-5zm27 0h1v1h-1zm2 0h3v1h-3zm12 0h1v1h-1zm36 0h1v1h-1zm6 0h1v1h-1zm6 0h1v1h-1zm16 0h1v1h-1zm4 0h1v1h-1zm3 0h2v1h-2zm7 0h2v1h-2zm9 0h1v1h-1zm8 0h2v1h-2zm11 0h1v1h-1zm11 0h1v1h-1zm8 0h2v1h-2zm10 0h1v1h-1zm5 0h1v1h-1zm5 0h1v1h-1zm4 0h1v1h-1zm13 0h1v1h-1zm15 0h1v1h-1zm13 0h1v1h-1zm15 0h1v1h-1zm16 0h1v1h-1zm2 0h1v1h-1zm2 0h2v1h-2zm4 0h1v1h-1zm2 0h1v1h-1zm30 0h1v1h-1zm16 0h1v1h-1zm7 0h1v1h-1zm2 0h1v1h-1zm40 0h1v1h-1zm3 0h1v1h-1zm24 0h1v1h-1zm-526 1h1v1h-1zm2 0h1v1h-1zm7 0h1v1h-1zm7 0h1v1h-1zm2 0h1v1h-1zm3 0h2v1h-2zm3 0h1v1h-1zm3 0h1v1h-1zm5 0h2v1h-2zm6 0h3v1h-3zm4 0h1v1h-1zm2 0h2v1h-2zm3 0h1v1h-1zm2 0h2v1h-2zm7 0h1v1h-1zm7 0h1v1h-1zm2 0h1v1h-1zm10 0h1v1h-1zm6 0h1v1h-1zm5 0h2v1h-2zm3 0h1v1h-1zm2 0h1v1h-1zm2 0h1v1h-1zm5 0h2v1h-2zm5 0h2v1h-2zm4 0h2v1h-2zm3 0h1v1h-1zm3 0h2v1h-2zm5 0h1v1h-1zm2 0h1v1h-1zm3 0h1v1h-1zm7 0h1v1h-1zm2 0h2v1h-2zm3 0h1v1h-1zm4 0h1v1h-1zm2 0h1v1h-1zm2 0h1v1h-1zm2 0h2v1h-2zm8 0h1v1h-1zm2 0h2v1h-2zm5 0h1v1h-1zm6 0h1v1h-1zm3 0h1v1h-1zm37 0h1v1h-1zm18 0h1v1h-1zm11 0h1v1h-1zm6 0h1v1h-1zm14 0h1v1h-1zm5 0h1v1h-1zm6 0h1v1h-1zm2 0h1v1h-1zm12 0h1v1h-1zm2 0h1v1h-1zm4 0h2v1h-2zm4 0h2v1h-2zm13 0h1v1h-1zm14 0h1v1h-1zm3 0h2v1h-2zm3 0h1v1h-1zm8 0h2v1h-2zm3 0h1v1h-1zm3 0h1v1h-1zm10 0h1v1h-1zm27 0h1v1h-1zm6 0h1v1h-1zm12 0h1v1h-1zm2 0h1v1h-1zm6 0h1v1h-1zm7 0h1v1h-1zm14 0h1v1h-1zm36 0h1v1h-1zm17 0h1v1h-1zm18 0h1v1h-1zm7 0h1v1h-1zm8 0h1v1h-1zm4 0h1v1h-1zm12 0h1v1h-1zm3 0h1v1h-1zm-521 1h1v1h-1zm3 0h1v1h-1zm4 0h1v1h-1zm4 0h1v1h-1zm3 0h1v1h-1zm2 0h2v1h-2zm6 0h1v1h-1zm5 0h1v1h-1zm3 0h2v1h-2zm3 0h2v1h-2zm6 0h1v1h-1zm8 0h1v1h-1zm3 0h1v1h-1zm4 0h1v1h-1zm4 0h1v1h-1zm2 0h1v1h-1zm3 0h1v1h-1zm2 0h2v1h-2zm4 0h1v1h-1zm3 0h1v1h-1zm7 0h1v1h-1zm2 0h1v1h-1zm3 0h1v1h-1zm4 0h1v1h-1zm6 0h2v1h-2zm23 0h1v1h-1zm3 0h1v1h-1zm2 0h1v1h-1zm3 0h2v1h-2zm6 0h2v1h-2zm4 0h2v1h-2zm3 0h1v1h-1zm9 0h1v1h-1zm7 0h1v1h-1zm2 0h2v1h-2zm4 0h2v1h-2zm9 0h2v1h-2zm3 0h2v1h-2zm27 0h1v1h-1zm7 0h1v1h-1zm3 0h1v1h-1zm7 0h1v1h-1zm9 0h1v1h-1zm6 0h2v1h-2zm4 0h1v1h-1zm5 0h3v1h-3zm5 0h2v1h-2zm3 0h1v1h-1zm2 0h1v1h-1zm7 0h1v1h-1zm5 0h1v1h-1zm2 0h2v1h-2zm5 0h1v1h-1zm5 0h2v1h-2zm7 0h1v1h-1zm2 0h1v1h-1zm4 0h1v1h-1zm13 0h2v1h-2zm9 0h1v1h-1zm6 0h2v1h-2zm9 0h1v1h-1zm4 0h1v1h-1zm6 0h1v1h-1zm8 0h1v1h-1zm2 0h1v1h-1zm14 0h1v1h-1zm5 0h5v1h-5zm10 0h1v1h-1zm30 0h2v1h-2zm3 0h1v1h-1zm3 0h1v1h-1zm16 0h1v1h-1zm8 0h1v1h-1zm4 0h1v1h-1zm65 0h1v1h-1zm13 0h1v1h-1zm4 0h1v1h-1zm4 0h1v1h-1zm8 0h1v1h-1zm12 0h1v1h-1zm8 0h1v1h-1zm-554 1h1v1h-1zm4 0h1v1h-1zm7 0h1v1h-1zm2 0h2v1h-2zm5 0h1v1h-1zm3 0h1v1h-1zm3 0h1v1h-1zm3 0h2v1h-2zm3 0h1v1h-1zm2 0h1v1h-1zm4 0h5v1h-5zm12 0h1v1h-1zm4 0h1v1h-1zm19 0h1v1h-1zm5 0h2v1h-2zm5 0h1v1h-1zm5 0h1v1h-1zm2 0h6v1h-6zm7 0h1v1h-1zm2 0h1v1h-1zm4 0h2v1h-2zm5 0h1v1h-1zm2 0h2v1h-2zm7 0h1v1h-1zm4 0h1v1h-1zm2 0h1v1h-1zm5 0h1v1h-1zm2 0h1v1h-1zm4 0h1v1h-1zm2 0h1v1h-1zm4 0h1v1h-1zm5 0h1v1h-1zm3 0h1v1h-1zm4 0h3v1h-3zm7 0h2v1h-2zm4 0h1v1h-1zm2 0h1v1h-1zm2 0h1v1h-1zm8 0h1v1h-1zm3 0h1v1h-1zm24 0h2v1h-2zm4 0h1v1h-1zm7 0h1v1h-1zm2 0h1v1h-1zm9 0h1v1h-1zm3 0h1v1h-1zm3 0h2v1h-2zm3 0h1v1h-1zm5 0h2v1h-2zm6 0h1v1h-1zm2 0h1v1h-1zm6 0h1v1h-1zm10 0h2v1h-2zm6 0h2v1h-2zm4 0h2v1h-2zm4 0h1v1h-1zm7 0h1v1h-1zm3 0h1v1h-1zm8 0h1v1h-1zm2 0h2v1h-2zm6 0h2v1h-2zm8 0h1v1h-1zm6 0h1v1h-1zm20 0h1v1h-1zm4 0h1v1h-1zm2 0h1v1h-1zm4 0h3v1h-3zm9 0h1v1h-1zm6 0h1v1h-1zm7 0h1v1h-1zm2 0h1v1h-1zm4 0h1v1h-1zm4 0h3v1h-3zm20 0h1v1h-1zm32 0h1v1h-1zm3 0h1v1h-1zm15 0h1v1h-1zm5 0h1v1h-1zm2 0h1v1h-1zm22 0h2v1h-2zm4 0h1v1h-1zm25 0h1v1h-1zm13 0h1v1h-1zm33 0h1v1h-1zm-553 1h2v1h-2zm9 0h2v1h-2zm6 0h1v1h-1zm6 0h2v1h-2zm3 0h4v1h-4zm7 0h6v1h-6zm10 0h1v1h-1zm2 0h1v1h-1zm5 0h1v1h-1zm2 0h1v1h-1zm2 0h1v1h-1zm2 0h1v1h-1zm2 0h1v1h-1zm6 0h1v1h-1zm3 0h2v1h-2zm4 0h1v1h-1zm4 0h1v1h-1zm8 0h6v1h-6zm18 0h1v1h-1zm5 0h1v1h-1zm3 0h2v1h-2zm8 0h2v1h-2zm7 0h1v1h-1zm2 0h1v1h-1zm2 0h1v1h-1zm5 0h3v1h-3zm10 0h1v1h-1zm3 0h2v1h-2zm4 0h1v1h-1zm3 0h2v1h-2zm5 0h1v1h-1zm3 0h1v1h-1zm2 0h1v1h-1zm6 0h1v1h-1zm4 0h1v1h-1zm3 0h2v1h-2zm4 0h1v1h-1zm2 0h2v1h-2zm21 0h1v1h-1zm7 0h1v1h-1zm2 0h1v1h-1zm4 0h3v1h-3zm4 0h2v1h-2zm3 0h1v1h-1zm8 0h1v1h-1zm3 0h1v1h-1zm3 0h1v1h-1zm5 0h1v1h-1zm6 0h1v1h-1zm2 0h1v1h-1zm3 0h2v1h-2zm5 0h2v1h-2zm6 0h1v1h-1zm2 0h1v1h-1zm2 0h2v1h-2zm7 0h2v1h-2zm4 0h1v1h-1zm2 0h1v1h-1zm2 0h1v1h-1zm2 0h1v1h-1zm2 0h1v1h-1zm3 0h1v1h-1zm5 0h1v1h-1zm2 0h1v1h-1zm2 0h1v1h-1zm2 0h2v1h-2zm9 0h1v1h-1zm5 0h1v1h-1zm4 0h1v1h-1zm6 0h1v1h-1zm5 0h5v1h-5zm6 0h1v1h-1zm9 0h1v1h-1zm6 0h1v1h-1zm8 0h1v1h-1zm4 0h2v1h-2zm4 0h1v1h-1zm11 0h2v1h-2zm3 0h1v1h-1zm7 0h1v1h-1zm2 0h1v1h-1zm3 0h1v1h-1zm5 0h1v1h-1zm4 0h1v1h-1zm2 0h2v1h-2zm4 0h1v1h-1zm2 0h1v1h-1zm2 0h1v1h-1zm8 0h1v1h-1zm9 0h1v1h-1zm8 0h1v1h-1zm7 0h1v1h-1zm18 0h1v1h-1zm5 0h1v1h-1zm2 0h1v1h-1zm3 0h1v1h-1zm7 0h1v1h-1zm14 0h1v1h-1zm2 0h1v1h-1zm4 0h2v1h-2zm4 0h1v1h-1zm22 0h2v1h-2zm3 0h1v1h-1zm9 0h1v1h-1zm5 0h1v1h-1zm13 0h1v1h-1zm12 0h1v1h-1zm7 0h2v1h-2zm-572 1h1v1h-1zm2 0h2v1h-2zm3 0h2v1h-2zm3 0h3v1h-3zm7 0h2v1h-2zm7 0h2v1h-2zm6 0h2v1h-2zm7 0h1v1h-1zm2 0h2v1h-2zm3 0h1v1h-1zm7 0h2v1h-2zm5 0h1v1h-1zm2 0h1v1h-1zm8 0h1v1h-1zm2 0h2v1h-2zm8 0h2v1h-2zm3 0h3v1h-3zm5 0h1v1h-1zm2 0h1v1h-1zm3 0h1v1h-1zm2 0h3v1h-3zm4 0h2v1h-2zm3 0h1v1h-1zm2 0h2v1h-2zm4 0h1v1h-1zm4 0h1v1h-1zm2 0h1v1h-1zm3 0h1v1h-1zm8 0h2v1h-2zm3 0h2v1h-2zm5 0h1v1h-1zm6 0h1v1h-1zm2 0h3v1h-3zm7 0h1v1h-1zm3 0h1v1h-1zm3 0h1v1h-1zm3 0h1v1h-1zm2 0h2v1h-2zm3 0h1v1h-1zm5 0h2v1h-2zm3 0h1v1h-1zm4 0h1v1h-1zm3 0h1v1h-1zm4 0h2v1h-2zm4 0h1v1h-1zm3 0h1v1h-1zm23 0h1v1h-1zm2 0h1v1h-1zm5 0h1v1h-1zm2 0h2v1h-2zm5 0h3v1h-3zm4 0h1v1h-1zm2 0h2v1h-2zm4 0h1v1h-1zm3 0h1v1h-1zm2 0h4v1h-4zm8 0h1v1h-1zm3 0h2v1h-2zm10 0h1v1h-1zm3 0h1v1h-1zm9 0h2v1h-2zm3 0h1v1h-1zm2 0h1v1h-1zm2 0h2v1h-2zm5 0h1v1h-1zm2 0h1v1h-1zm7 0h2v1h-2zm4 0h2v1h-2zm5 0h1v1h-1zm5 0h1v1h-1zm5 0h1v1h-1zm4 0h1v1h-1zm6 0h1v1h-1zm2 0h1v1h-1zm6 0h1v1h-1zm4 0h1v1h-1zm4 0h1v1h-1zm5 0h1v1h-1zm3 0h2v1h-2zm3 0h1v1h-1zm16 0h1v1h-1zm2 0h1v1h-1zm6 0h4v1h-4zm11 0h1v1h-1zm7 0h1v1h-1zm5 0h1v1h-1zm6 0h1v1h-1zm2 0h2v1h-2zm3 0h1v1h-1zm2 0h1v1h-1zm6 0h2v1h-2zm4 0h1v1h-1zm4 0h1v1h-1zm14 0h1v1h-1zm3 0h1v1h-1zm11 0h1v1h-1zm6 0h1v1h-1zm7 0h1v1h-1zm2 0h1v1h-1zm18 0h2v1h-2zm4 0h1v1h-1zm5 0h1v1h-1zm6 0h1v1h-1zm3 0h1v1h-1zm3 0h1v1h-1zm5 0h1v1h-1zm2 0h1v1h-1zm33 0h1v1h-1zm22 0h2v1h-2zm3 0h1v1h-1zm2 0h1v1h-1zm6 0h1v1h-1zm-570 1h1v1h-1zm2 0h2v1h-2zm4 0h2v1h-2zm13 0h2v1h-2zm4 0h1v1h-1zm4 0h1v1h-1zm2 0h1v1h-1zm2 0h1v1h-1zm3 0h1v1h-1zm3 0h2v1h-2zm9 0h2v1h-2zm6 0h1v1h-1zm4 0h3v1h-3zm4 0h2v1h-2zm7 0h1v1h-1zm2 0h1v1h-1zm6 0h1v1h-1zm5 0h2v1h-2zm3 0h1v1h-1zm3 0h1v1h-1zm3 0h2v1h-2zm3 0h2v1h-2zm7 0h1v1h-1zm4 0h1v1h-1zm2 0h1v1h-1zm6 0h2v1h-2zm3 0h2v1h-2zm6 0h1v1h-1zm2 0h1v1h-1zm6 0h3v1h-3zm9 0h1v1h-1zm3 0h1v1h-1zm7 0h4v1h-4zm5 0h1v1h-1zm3 0h1v1h-1zm4 0h1v1h-1zm3 0h2v1h-2zm3 0h2v1h-2zm4 0h2v1h-2zm3 0h1v1h-1zm5 0h2v1h-2zm23 0h1v1h-1zm2 0h1v1h-1zm4 0h1v1h-1zm2 0h1v1h-1zm2 0h1v1h-1zm2 0h1v1h-1zm5 0h2v1h-2zm4 0h2v1h-2zm3 0h1v1h-1zm3 0h1v1h-1zm9 0h2v1h-2zm3 0h1v1h-1zm2 0h1v1h-1zm2 0h1v1h-1zm2 0h2v1h-2zm5 0h2v1h-2zm10 0h1v1h-1zm4 0h1v1h-1zm6 0h1v1h-1zm2 0h1v1h-1zm4 0h1v1h-1zm6 0h1v1h-1zm5 0h1v1h-1zm3 0h1v1h-1zm3 0h1v1h-1zm3 0h4v1h-4zm7 0h1v1h-1zm2 0h1v1h-1zm2 0h1v1h-1zm3 0h1v1h-1zm5 0h1v1h-1zm6 0h1v1h-1zm2 0h1v1h-1zm2 0h1v1h-1zm3 0h2v1h-2zm4 0h5v1h-5zm6 0h1v1h-1zm2 0h2v1h-2zm9 0h2v1h-2zm5 0h1v1h-1zm3 0h1v1h-1zm3 0h1v1h-1zm7 0h1v1h-1zm2 0h2v1h-2zm10 0h1v1h-1zm27 0h2v1h-2zm4 0h1v1h-1zm15 0h1v1h-1zm2 0h1v1h-1zm6 0h1v1h-1zm6 0h3v1h-3zm5 0h1v1h-1zm2 0h1v1h-1zm8 0h1v1h-1zm14 0h1v1h-1zm12 0h1v1h-1zm5 0h2v1h-2zm6 0h1v1h-1zm9 0h1v1h-1zm11 0h1v1h-1zm5 0h1v1h-1zm6 0h1v1h-1zm9 0h2v1h-2zm3 0h2v1h-2zm3 0h2v1h-2zm3 0h1v1h-1zm3 0h2v1h-2zm15 0h1v1h-1zm5 0h1v1h-1zm6 0h2v1h-2zm-569 1h3v1h-3zm8 0h1v1h-1zm2 0h2v1h-2zm3 0h1v1h-1zm4 0h2v1h-2zm4 0h3v1h-3zm5 0h1v1h-1zm5 0h2v1h-2zm3 0h1v1h-1zm5 0h1v1h-1zm2 0h4v1h-4zm7 0h2v1h-2zm4 0h2v1h-2zm4 0h3v1h-3zm4 0h2v1h-2zm3 0h1v1h-1zm7 0h1v1h-1zm2 0h1v1h-1zm3 0h3v1h-3zm5 0h3v1h-3zm11 0h1v1h-1zm6 0h3v1h-3zm4 0h1v1h-1zm4 0h2v1h-2zm10 0h4v1h-4zm5 0h2v1h-2zm4 0h1v1h-1zm2 0h1v1h-1zm2 0h1v1h-1zm2 0h4v1h-4zm6 0h2v1h-2zm5 0h1v1h-1zm2 0h2v1h-2zm4 0h3v1h-3zm4 0h1v1h-1zm2 0h1v1h-1zm6 0h1v1h-1zm4 0h2v1h-2zm5 0h1v1h-1zm2 0h2v1h-2zm3 0h2v1h-2zm3 0h1v1h-1zm24 0h1v1h-1zm2 0h1v1h-1zm2 0h2v1h-2zm4 0h2v1h-2zm7 0h1v1h-1zm7 0h2v1h-2zm3 0h1v1h-1zm2 0h2v1h-2zm4 0h1v1h-1zm3 0h1v1h-1zm3 0h5v1h-5zm9 0h1v1h-1zm2 0h2v1h-2zm7 0h2v1h-2zm7 0h1v1h-1zm2 0h1v1h-1zm3 0h1v1h-1zm10 0h1v1h-1zm3 0h1v1h-1zm2 0h1v1h-1zm5 0h1v1h-1zm3 0h4v1h-4zm5 0h1v1h-1zm10 0h1v1h-1zm3 0h1v1h-1zm3 0h1v1h-1zm2 0h3v1h-3zm10 0h1v1h-1zm2 0h1v1h-1zm4 0h2v1h-2zm6 0h2v1h-2zm6 0h1v1h-1zm3 0h1v1h-1zm3 0h1v1h-1zm3 0h1v1h-1zm3 0h1v1h-1zm5 0h1v1h-1zm5 0h5v1h-5zm12 0h1v1h-1zm4 0h3v1h-3zm4 0h1v1h-1zm3 0h1v1h-1zm6 0h1v1h-1zm4 0h2v1h-2zm4 0h1v1h-1zm6 0h1v1h-1zm2 0h3v1h-3zm4 0h1v1h-1zm2 0h1v1h-1zm2 0h3v1h-3zm15 0h2v1h-2zm8 0h2v1h-2zm4 0h1v1h-1zm5 0h2v1h-2zm3 0h1v1h-1zm3 0h2v1h-2zm3 0h1v1h-1zm6 0h2v1h-2zm9 0h1v1h-1zm2 0h2v1h-2zm8 0h1v1h-1zm8 0h1v1h-1zm11 0h6v1h-6zm7 0h1v1h-1zm4 0h1v1h-1zm6 0h2v1h-2zm9 0h2v1h-2zm3 0h4v1h-4zm7 0h2v1h-2zm3 0h1v1h-1zm2 0h1v1h-1zm3 0h1v1h-1zm22 0h1v1h-1zm6 0h1v1h-1zm-571 1h3v1h-3zm5 0h2v1h-2zm3 0h2v1h-2zm3 0h1v1h-1zm2 0h3v1h-3zm6 0h1v1h-1zm3 0h1v1h-1zm7 0h1v1h-1zm9 0h2v1h-2zm3 0h1v1h-1zm3 0h1v1h-1zm3 0h1v1h-1zm3 0h2v1h-2zm3 0h1v1h-1zm2 0h1v1h-1zm6 0h1v1h-1zm2 0h3v1h-3zm6 0h1v1h-1zm3 0h2v1h-2zm5 0h2v1h-2zm7 0h1v1h-1zm3 0h3v1h-3zm4 0h2v1h-2zm8 0h1v1h-1zm2 0h2v1h-2zm3 0h1v1h-1zm13 0h2v1h-2zm3 0h2v1h-2zm5 0h1v1h-1zm7 0h1v1h-1zm2 0h1v1h-1zm3 0h2v1h-2zm5 0h1v1h-1zm2 0h2v1h-2zm3 0h1v1h-1zm4 0h1v1h-1zm2 0h2v1h-2zm3 0h2v1h-2zm5 0h1v1h-1zm2 0h2v1h-2zm6 0h3v1h-3zm6 0h1v1h-1zm21 0h3v1h-3zm5 0h1v1h-1zm2 0h2v1h-2zm3 0h1v1h-1zm2 0h1v1h-1zm3 0h1v1h-1zm5 0h1v1h-1zm11 0h2v1h-2zm5 0h1v1h-1zm3 0h1v1h-1zm3 0h2v1h-2zm8 0h1v1h-1zm8 0h2v1h-2zm7 0h1v1h-1zm3 0h1v1h-1zm3 0h3v1h-3zm6 0h1v1h-1zm9 0h3v1h-3zm4 0h1v1h-1zm5 0h2v1h-2zm7 0h2v1h-2zm3 0h1v1h-1zm5 0h1v1h-1zm2 0h1v1h-1zm2 0h1v1h-1zm4 0h1v1h-1zm6 0h1v1h-1zm2 0h1v1h-1zm4 0h1v1h-1zm2 0h1v1h-1zm3 0h4v1h-4zm5 0h1v1h-1zm4 0h1v1h-1zm3 0h1v1h-1zm6 0h3v1h-3zm6 0h1v1h-1zm3 0h4v1h-4zm7 0h1v1h-1zm7 0h2v1h-2zm3 0h1v1h-1zm2 0h1v1h-1zm2 0h3v1h-3zm4 0h2v1h-2zm9 0h1v1h-1zm2 0h1v1h-1zm2 0h1v1h-1zm2 0h1v1h-1zm2 0h2v1h-2zm3 0h1v1h-1zm2 0h2v1h-2zm6 0h2v1h-2zm4 0h2v1h-2zm3 0h2v1h-2zm5 0h1v1h-1zm7 0h1v1h-1zm2 0h4v1h-4zm6 0h2v1h-2zm5 0h6v1h-6zm9 0h1v1h-1zm4 0h2v1h-2zm12 0h1v1h-1zm3 0h2v1h-2zm6 0h1v1h-1zm4 0h1v1h-1zm4 0h1v1h-1zm6 0h1v1h-1zm5 0h1v1h-1zm2 0h2v1h-2zm10 0h1v1h-1zm2 0h1v1h-1zm2 0h1v1h-1zm2 0h1v1h-1zm13 0h1v1h-1zm6 0h1v1h-1zm3 0h2v1h-2zm3 0h2v1h-2zm5 0h1v1h-1zm19 0h1v1h-1zm4 0h1v1h-1zm-570 1h1v1h-1zm2 0h1v1h-1zm3 0h1v1h-1zm3 0h3v1h-3zm4 0h1v1h-1zm4 0h2v1h-2zm5 0h2v1h-2zm3 0h1v1h-1zm4 0h1v1h-1zm3 0h1v1h-1zm2 0h1v1h-1zm2 0h2v1h-2zm3 0h2v1h-2zm5 0h1v1h-1zm3 0h1v1h-1zm3 0h1v1h-1zm5 0h4v1h-4zm8 0h1v1h-1zm2 0h1v1h-1zm6 0h1v1h-1zm2 0h1v1h-1zm3 0h2v1h-2zm3 0h1v1h-1zm3 0h1v1h-1zm2 0h4v1h-4zm7 0h1v1h-1zm4 0h5v1h-5zm6 0h2v1h-2zm3 0h1v1h-1zm4 0h1v1h-1zm2 0h1v1h-1zm5 0h1v1h-1zm2 0h1v1h-1zm4 0h4v1h-4zm6 0h1v1h-1zm2 0h1v1h-1zm2 0h1v1h-1zm3 0h1v1h-1zm2 0h1v1h-1zm2 0h1v1h-1zm2 0h3v1h-3zm7 0h2v1h-2zm3 0h2v1h-2zm4 0h1v1h-1zm2 0h1v1h-1zm3 0h1v1h-1zm2 0h3v1h-3zm5 0h1v1h-1zm2 0h4v1h-4zm5 0h1v1h-1zm6 0h1v1h-1zm2 0h1v1h-1zm4 0h1v1h-1zm16 0h1v1h-1zm2 0h1v1h-1zm2 0h2v1h-2zm3 0h1v1h-1zm4 0h1v1h-1zm2 0h1v1h-1zm4 0h3v1h-3zm4 0h2v1h-2zm3 0h2v1h-2zm3 0h2v1h-2zm5 0h1v1h-1zm2 0h1v1h-1zm3 0h1v1h-1zm5 0h3v1h-3zm6 0h4v1h-4zm5 0h1v1h-1zm3 0h2v1h-2zm6 0h1v1h-1zm7 0h2v1h-2zm3 0h1v1h-1zm5 0h1v1h-1zm11 0h1v1h-1zm6 0h2v1h-2zm3 0h1v1h-1zm2 0h3v1h-3zm7 0h1v1h-1zm7 0h1v1h-1zm10 0h2v1h-2zm3 0h2v1h-2zm3 0h2v1h-2zm3 0h1v1h-1zm2 0h1v1h-1zm2 0h2v1h-2zm4 0h1v1h-1zm2 0h2v1h-2zm3 0h3v1h-3zm9 0h2v1h-2zm7 0h2v1h-2zm5 0h2v1h-2zm6 0h2v1h-2zm3 0h1v1h-1zm2 0h2v1h-2zm7 0h1v1h-1zm6 0h1v1h-1zm2 0h2v1h-2zm5 0h3v1h-3zm4 0h1v1h-1zm3 0h1v1h-1zm2 0h1v1h-1zm2 0h1v1h-1zm5 0h1v1h-1zm3 0h3v1h-3zm6 0h2v1h-2zm4 0h1v1h-1zm3 0h1v1h-1zm11 0h1v1h-1zm6 0h6v1h-6zm9 0h1v1h-1zm5 0h1v1h-1zm5 0h1v1h-1zm2 0h1v1h-1zm3 0h1v1h-1zm10 0h2v1h-2zm3 0h1v1h-1zm2 0h1v1h-1zm2 0h1v1h-1zm3 0h1v1h-1zm6 0h2v1h-2zm4 0h1v1h-1zm5 0h2v1h-2zm3 0h1v1h-1zm2 0h1v1h-1zm2 0h2v1h-2zm5 0h1v1h-1zm3 0h1v1h-1zm2 0h1v1h-1zm4 0h1v1h-1zm3 0h1v1h-1zm11 0h1v1h-1zm8 0h2v1h-2zm7 0h2v1h-2zm4 0h1v1h-1zm3 0h1v1h-1zm3 0h1v1h-1zm8 0h2v1h-2zm-573 1h1v1h-1zm2 0h2v1h-2zm4 0h1v1h-1zm6 0h5v1h-5zm8 0h1v1h-1zm4 0h2v1h-2zm3 0h2v1h-2zm6 0h2v1h-2zm3 0h1v1h-1zm2 0h2v1h-2zm4 0h2v1h-2zm3 0h2v1h-2zm3 0h1v1h-1zm2 0h1v1h-1zm3 0h1v1h-1zm2 0h1v1h-1zm2 0h2v1h-2zm4 0h1v1h-1zm2 0h2v1h-2zm5 0h3v1h-3zm4 0h1v1h-1zm2 0h1v1h-1zm4 0h1v1h-1zm2 0h2v1h-2zm4 0h1v1h-1zm2 0h3v1h-3zm5 0h1v1h-1zm2 0h1v1h-1zm2 0h1v1h-1zm3 0h1v1h-1zm3 0h1v1h-1zm2 0h4v1h-4zm5 0h1v1h-1zm2 0h1v1h-1zm2 0h1v1h-1zm2 0h1v1h-1zm3 0h2v1h-2zm4 0h7v1h-7zm8 0h2v1h-2zm3 0h3v1h-3zm4 0h3v1h-3zm4 0h2v1h-2zm5 0h1v1h-1zm8 0h2v1h-2zm4 0h1v1h-1zm2 0h1v1h-1zm2 0h1v1h-1zm2 0h1v1h-1zm2 0h1v1h-1zm6 0h1v1h-1zm3 0h1v1h-1zm3 0h1v1h-1zm3 0h2v1h-2zm3 0h1v1h-1zm2 0h1v1h-1zm14 0h2v1h-2zm4 0h4v1h-4zm5 0h1v1h-1zm2 0h1v1h-1zm3 0h1v1h-1zm6 0h1v1h-1zm5 0h1v1h-1zm4 0h2v1h-2zm5 0h1v1h-1zm2 0h1v1h-1zm4 0h3v1h-3zm6 0h1v1h-1zm5 0h3v1h-3zm6 0h1v1h-1zm3 0h1v1h-1zm2 0h3v1h-3zm4 0h1v1h-1zm3 0h1v1h-1zm3 0h1v1h-1zm3 0h7v1h-7zm8 0h2v1h-2zm4 0h3v1h-3zm5 0h1v1h-1zm2 0h1v1h-1zm5 0h2v1h-2zm3 0h1v1h-1zm2 0h4v1h-4zm6 0h7v1h-7zm9 0h1v1h-1zm2 0h1v1h-1zm5 0h2v1h-2zm3 0h2v1h-2zm8 0h1v1h-1zm4 0h1v1h-1zm2 0h1v1h-1zm3 0h1v1h-1zm4 0h1v1h-1zm5 0h2v1h-2zm7 0h1v1h-1zm5 0h4v1h-4zm10 0h1v1h-1zm2 0h1v1h-1zm5 0h1v1h-1zm2 0h2v1h-2zm3 0h1v1h-1zm3 0h1v1h-1zm2 0h3v1h-3zm5 0h1v1h-1zm5 0h2v1h-2zm3 0h1v1h-1zm4 0h1v1h-1zm5 0h3v1h-3zm7 0h1v1h-1zm2 0h1v1h-1zm5 0h2v1h-2zm9 0h1v1h-1zm2 0h1v1h-1zm3 0h3v1h-3zm5 0h1v1h-1zm2 0h3v1h-3zm6 0h2v1h-2zm4 0h1v1h-1zm8 0h1v1h-1zm4 0h1v1h-1zm3 0h2v1h-2zm4 0h2v1h-2zm10 0h1v1h-1zm7 0h3v1h-3zm4 0h1v1h-1zm4 0h1v1h-1zm2 0h3v1h-3zm5 0h2v1h-2zm10 0h1v1h-1zm5 0h1v1h-1zm2 0h1v1h-1zm2 0h1v1h-1zm3 0h1v1h-1zm4 0h1v1h-1zm8 0h2v1h-2zm8 0h2v1h-2zm4 0h1v1h-1zm2 0h1v1h-1zm2 0h2v1h-2zm5 0h2v1h-2zm3 0h1v1h-1zm-568 1h3v1h-3zm4 0h1v1h-1zm6 0h2v1h-2zm3 0h3v1h-3zm4 0h3v1h-3zm5 0h1v1h-1zm2 0h1v1h-1zm2 0h6v1h-6zm7 0h1v1h-1zm2 0h1v1h-1zm2 0h1v1h-1zm2 0h1v1h-1zm3 0h2v1h-2zm3 0h2v1h-2zm3 0h2v1h-2zm4 0h3v1h-3zm7 0h1v1h-1zm4 0h3v1h-3zm4 0h2v1h-2zm4 0h2v1h-2zm3 0h1v1h-1zm3 0h1v1h-1zm7 0h4v1h-4zm6 0h3v1h-3zm5 0h3v1h-3zm4 0h1v1h-1zm3 0h3v1h-3zm6 0h1v1h-1zm2 0h2v1h-2zm3 0h2v1h-2zm3 0h2v1h-2zm3 0h2v1h-2zm4 0h3v1h-3zm4 0h1v1h-1zm3 0h1v1h-1zm5 0h1v1h-1zm2 0h2v1h-2zm4 0h1v1h-1zm2 0h1v1h-1zm6 0h1v1h-1zm2 0h1v1h-1zm2 0h3v1h-3zm7 0h1v1h-1zm3 0h2v1h-2zm3 0h1v1h-1zm2 0h1v1h-1zm5 0h2v1h-2zm5 0h1v1h-1zm2 0h2v1h-2zm17 0h2v1h-2zm5 0h2v1h-2zm5 0h4v1h-4zm5 0h1v1h-1zm6 0h3v1h-3zm5 0h2v1h-2zm4 0h2v1h-2zm3 0h2v1h-2zm5 0h2v1h-2zm3 0h3v1h-3zm6 0h1v1h-1zm2 0h1v1h-1zm4 0h1v1h-1zm2 0h1v1h-1zm8 0h2v1h-2zm3 0h3v1h-3zm11 0h2v1h-2zm4 0h1v1h-1zm2 0h3v1h-3zm4 0h2v1h-2zm3 0h2v1h-2zm7 0h1v1h-1zm2 0h1v1h-1zm7 0h1v1h-1zm6 0h1v1h-1zm4 0h1v1h-1zm2 0h1v1h-1zm2 0h2v1h-2zm4 0h5v1h-5zm15 0h3v1h-3zm4 0h1v1h-1zm3 0h1v1h-1zm2 0h2v1h-2zm3 0h1v1h-1zm2 0h1v1h-1zm3 0h2v1h-2zm4 0h1v1h-1zm3 0h2v1h-2zm5 0h1v1h-1zm4 0h3v1h-3zm4 0h1v1h-1zm3 0h1v1h-1zm3 0h1v1h-1zm2 0h4v1h-4zm5 0h1v1h-1zm2 0h2v1h-2zm3 0h1v1h-1zm2 0h3v1h-3zm5 0h2v1h-2zm3 0h3v1h-3zm4 0h2v1h-2zm7 0h1v1h-1zm3 0h5v1h-5zm7 0h2v1h-2zm3 0h2v1h-2zm8 0h1v1h-1zm4 0h2v1h-2zm3 0h3v1h-3zm7 0h1v1h-1zm2 0h3v1h-3zm4 0h2v1h-2zm4 0h1v1h-1zm2 0h1v1h-1zm7 0h4v1h-4zm6 0h2v1h-2zm6 0h3v1h-3zm5 0h1v1h-1zm3 0h2v1h-2zm7 0h5v1h-5zm7 0h2v1h-2zm12 0h2v1h-2zm3 0h2v1h-2zm5 0h1v1h-1zm2 0h1v1h-1zm7 0h1v1h-1zm2 0h2v1h-2zm6 0h5v1h-5zm6 0h1v1h-1zm3 0h2v1h-2zm3 0h2v1h-2zm5 0h1v1h-1zm3 0h4v1h-4zm8 0h1v1h-1zm5 0h1v1h-1zm2 0h1v1h-1zm-573 1h1v1h-1zm4 0h3v1h-3zm4 0h2v1h-2zm3 0h1v1h-1zm2 0h2v1h-2zm5 0h3v1h-3zm4 0h1v1h-1zm5 0h4v1h-4zm5 0h4v1h-4zm5 0h2v1h-2zm5 0h2v1h-2zm5 0h2v1h-2zm3 0h2v1h-2zm5 0h5v1h-5zm6 0h1v1h-1zm3 0h1v1h-1zm3 0h1v1h-1zm2 0h3v1h-3zm4 0h1v1h-1zm2 0h1v1h-1zm2 0h3v1h-3zm4 0h2v1h-2zm4 0h4v1h-4zm8 0h2v1h-2zm3 0h2v1h-2zm4 0h1v1h-1zm6 0h4v1h-4zm5 0h6v1h-6zm7 0h4v1h-4zm5 0h1v1h-1zm2 0h1v1h-1zm3 0h1v1h-1zm2 0h2v1h-2zm3 0h2v1h-2zm4 0h1v1h-1zm2 0h3v1h-3zm7 0h1v1h-1zm4 0h1v1h-1zm4 0h1v1h-1zm2 0h3v1h-3zm4 0h2v1h-2zm3 0h1v1h-1zm2 0h1v1h-1zm4 0h2v1h-2zm3 0h1v1h-1zm3 0h1v1h-1zm3 0h2v1h-2zm3 0h6v1h-6zm20 0h1v1h-1zm2 0h1v1h-1zm2 0h2v1h-2zm4 0h1v1h-1zm2 0h6v1h-6zm7 0h1v1h-1zm3 0h1v1h-1zm2 0h1v1h-1zm4 0h2v1h-2zm3 0h2v1h-2zm4 0h2v1h-2zm3 0h2v1h-2zm5 0h1v1h-1zm2 0h1v1h-1zm2 0h3v1h-3zm4 0h1v1h-1zm4 0h1v1h-1zm3 0h2v1h-2zm4 0h1v1h-1zm6 0h1v1h-1zm4 0h1v1h-1zm3 0h1v1h-1zm5 0h1v1h-1zm4 0h2v1h-2zm5 0h1v1h-1zm2 0h1v1h-1zm2 0h7v1h-7zm8 0h3v1h-3zm6 0h2v1h-2zm5 0h1v1h-1zm4 0h1v1h-1zm3 0h2v1h-2zm6 0h1v1h-1zm4 0h1v1h-1zm5 0h1v1h-1zm2 0h1v1h-1zm8 0h2v1h-2zm7 0h1v1h-1zm2 0h3v1h-3zm4 0h1v1h-1zm2 0h1v1h-1zm3 0h3v1h-3zm6 0h1v1h-1zm2 0h1v1h-1zm2 0h3v1h-3zm4 0h1v1h-1zm4 0h1v1h-1zm3 0h2v1h-2zm4 0h1v1h-1zm5 0h2v1h-2zm7 0h1v1h-1zm3 0h1v1h-1zm3 0h1v1h-1zm7 0h2v1h-2zm4 0h2v1h-2zm3 0h2v1h-2zm6 0h1v1h-1zm3 0h3v1h-3zm4 0h2v1h-2zm5 0h1v1h-1zm3 0h2v1h-2zm3 0h2v1h-2zm5 0h1v1h-1zm3 0h3v1h-3zm4 0h4v1h-4zm5 0h2v1h-2zm3 0h2v1h-2zm3 0h2v1h-2zm4 0h3v1h-3zm6 0h1v1h-1zm4 0h1v1h-1zm2 0h2v1h-2zm5 0h1v1h-1zm8 0h2v1h-2zm3 0h1v1h-1zm2 0h2v1h-2zm4 0h1v1h-1zm4 0h1v1h-1zm5 0h3v1h-3zm5 0h1v1h-1zm2 0h1v1h-1zm10 0h1v1h-1zm5 0h4v1h-4zm5 0h1v1h-1zm3 0h1v1h-1zm2 0h3v1h-3zm4 0h1v1h-1zm5 0h1v1h-1zm3 0h1v1h-1zm5 0h2v1h-2zm8 0h2v1h-2zm3 0h1v1h-1zm-572 1h3v1h-3zm4 0h2v1h-2zm3 0h1v1h-1zm2 0h2v1h-2zm4 0h1v1h-1zm4 0h1v1h-1zm2 0h1v1h-1zm2 0h6v1h-6zm7 0h1v1h-1zm3 0h2v1h-2zm3 0h5v1h-5zm7 0h1v1h-1zm3 0h1v1h-1zm3 0h2v1h-2zm7 0h4v1h-4zm6 0h1v1h-1zm6 0h1v1h-1zm2 0h1v1h-1zm4 0h1v1h-1zm6 0h2v1h-2zm3 0h4v1h-4zm5 0h1v1h-1zm2 0h2v1h-2zm4 0h2v1h-2zm4 0h1v1h-1zm2 0h1v1h-1zm2 0h2v1h-2zm3 0h4v1h-4zm5 0h1v1h-1zm3 0h2v1h-2zm3 0h1v1h-1zm3 0h1v1h-1zm2 0h2v1h-2zm4 0h3v1h-3zm4 0h1v1h-1zm2 0h1v1h-1zm2 0h1v1h-1zm2 0h4v1h-4zm5 0h1v1h-1zm2 0h2v1h-2zm3 0h2v1h-2zm4 0h1v1h-1zm2 0h1v1h-1zm6 0h1v1h-1zm2 0h1v1h-1zm2 0h3v1h-3zm6 0h2v1h-2zm3 0h4v1h-4zm6 0h3v1h-3zm10 0h2v1h-2zm16 0h10v1h-10zm16 0h2v1h-2zm3 0h1v1h-1zm2 0h3v1h-3zm5 0h1v1h-1zm3 0h1v1h-1zm5 0h2v1h-2zm3 0h1v1h-1zm4 0h1v1h-1zm2 0h1v1h-1zm5 0h3v1h-3zm4 0h1v1h-1zm4 0h1v1h-1zm2 0h3v1h-3zm4 0h2v1h-2zm3 0h1v1h-1zm3 0h1v1h-1zm2 0h1v1h-1zm3 0h1v1h-1zm3 0h1v1h-1zm2 0h4v1h-4zm5 0h2v1h-2zm3 0h3v1h-3zm4 0h3v1h-3zm4 0h1v1h-1zm2 0h1v1h-1zm2 0h3v1h-3zm4 0h2v1h-2zm7 0h5v1h-5zm6 0h2v1h-2zm5 0h2v1h-2zm3 0h1v1h-1zm2 0h2v1h-2zm4 0h4v1h-4zm5 0h2v1h-2zm4 0h1v1h-1zm6 0h1v1h-1zm3 0h2v1h-2zm4 0h1v1h-1zm3 0h1v1h-1zm2 0h1v1h-1zm2 0h1v1h-1zm2 0h2v1h-2zm3 0h6v1h-6zm7 0h1v1h-1zm2 0h3v1h-3zm7 0h1v1h-1zm3 0h3v1h-3zm4 0h2v1h-2zm7 0h1v1h-1zm3 0h1v1h-1zm4 0h2v1h-2zm6 0h3v1h-3zm4 0h1v1h-1zm2 0h1v1h-1zm3 0h6v1h-6zm7 0h1v1h-1zm4 0h3v1h-3zm4 0h1v1h-1zm2 0h4v1h-4zm5 0h1v1h-1zm3 0h2v1h-2zm6 0h1v1h-1zm6 0h1v1h-1zm4 0h1v1h-1zm2 0h1v1h-1zm3 0h1v1h-1zm3 0h1v1h-1zm3 0h3v1h-3zm9 0h1v1h-1zm3 0h1v1h-1zm3 0h2v1h-2zm5 0h2v1h-2zm6 0h1v1h-1zm2 0h2v1h-2zm3 0h1v1h-1zm3 0h3v1h-3zm8 0h2v1h-2zm3 0h1v1h-1zm2 0h1v1h-1zm3 0h1v1h-1zm2 0h1v1h-1zm4 0h2v1h-2zm4 0h1v1h-1zm3 0h3v1h-3zm7 0h1v1h-1zm2 0h1v1h-1zm2 0h2v1h-2zm3 0h1v1h-1zm2 0h2v1h-2zm3 0h4v1h-4zm6 0h1v1h-1zm2 0h3v1h-3zm7 0h4v1h-4zm5 0h1v1h-1zm4 0h1v1h-1zm-572 1h1v1h-1zm2 0h1v1h-1zm2 0h1v1h-1zm2 0h1v1h-1zm2 0h1v1h-1zm2 0h4v1h-4zm5 0h2v1h-2zm3 0h3v1h-3zm4 0h5v1h-5zm7 0h1v1h-1zm2 0h2v1h-2zm3 0h1v1h-1zm2 0h2v1h-2zm3 0h1v1h-1zm2 0h1v1h-1zm4 0h1v1h-1zm3 0h2v1h-2zm6 0h1v1h-1zm2 0h2v1h-2zm3 0h2v1h-2zm5 0h2v1h-2zm6 0h2v1h-2zm3 0h1v1h-1zm2 0h1v1h-1zm2 0h1v1h-1zm2 0h1v1h-1zm3 0h2v1h-2zm5 0h2v1h-2zm3 0h2v1h-2zm3 0h5v1h-5zm8 0h3v1h-3zm5 0h1v1h-1zm3 0h1v1h-1zm3 0h2v1h-2zm3 0h3v1h-3zm4 0h1v1h-1zm6 0h2v1h-2zm4 0h3v1h-3zm5 0h4v1h-4zm9 0h1v1h-1zm2 0h1v1h-1zm2 0h1v1h-1zm2 0h2v1h-2zm3 0h1v1h-1zm4 0h3v1h-3zm5 0h1v1h-1zm3 0h1v1h-1zm2 0h1v1h-1zm6 0h1v1h-1zm2 0h4v1h-4zm5 0h2v1h-2zm3 0h2v1h-2zm6 0h3v1h-3zm9 0h2v1h-2zm3 0h6v1h-6zm7 0h1v1h-1zm2 0h3v1h-3zm4 0h3v1h-3zm10 0h1v1h-1zm3 0h1v1h-1zm3 0h2v1h-2zm3 0h2v1h-2zm6 0h2v1h-2zm4 0h3v1h-3zm8 0h6v1h-6zm11 0h3v1h-3zm12 0h1v1h-1zm5 0h1v1h-1zm3 0h1v1h-1zm2 0h1v1h-1zm3 0h1v1h-1zm3 0h2v1h-2zm3 0h3v1h-3zm8 0h1v1h-1zm3 0h2v1h-2zm3 0h1v1h-1zm4 0h1v1h-1zm2 0h6v1h-6zm9 0h1v1h-1zm2 0h1v1h-1zm3 0h2v1h-2zm3 0h1v1h-1zm10 0h2v1h-2zm3 0h2v1h-2zm3 0h1v1h-1zm4 0h2v1h-2zm3 0h2v1h-2zm4 0h2v1h-2zm5 0h2v1h-2zm5 0h2v1h-2zm6 0h1v1h-1zm2 0h2v1h-2zm3 0h2v1h-2zm4 0h1v1h-1zm4 0h4v1h-4zm9 0h5v1h-5zm6 0h1v1h-1zm3 0h4v1h-4zm6 0h2v1h-2zm8 0h2v1h-2zm9 0h1v1h-1zm3 0h1v1h-1zm2 0h2v1h-2zm5 0h2v1h-2zm4 0h2v1h-2zm5 0h1v1h-1zm2 0h1v1h-1zm3 0h3v1h-3zm4 0h1v1h-1zm2 0h1v1h-1zm3 0h2v1h-2zm4 0h1v1h-1zm4 0h1v1h-1zm3 0h4v1h-4zm6 0h3v1h-3zm5 0h1v1h-1zm5 0h1v1h-1zm4 0h1v1h-1zm4 0h1v1h-1zm4 0h4v1h-4zm6 0h2v1h-2zm4 0h1v1h-1zm3 0h4v1h-4zm6 0h1v1h-1zm3 0h2v1h-2zm4 0h1v1h-1zm3 0h1v1h-1zm2 0h1v1h-1zm2 0h1v1h-1zm2 0h2v1h-2zm3 0h2v1h-2zm6 0h3v1h-3zm5 0h1v1h-1zm3 0h1v1h-1zm2 0h1v1h-1zm4 0h1v1h-1zm2 0h1v1h-1zm2 0h2v1h-2zm3 0h1v1h-1zm5 0h2v1h-2zm-568 1h2v1h-2zm3 0h4v1h-4zm5 0h1v1h-1zm3 0h1v1h-1zm2 0h2v1h-2zm4 0h3v1h-3zm4 0h2v1h-2zm3 0h1v1h-1zm7 0h1v1h-1zm2 0h3v1h-3zm4 0h1v1h-1zm2 0h2v1h-2zm3 0h1v1h-1zm2 0h2v1h-2zm3 0h1v1h-1zm3 0h2v1h-2zm4 0h1v1h-1zm2 0h4v1h-4zm5 0h2v1h-2zm3 0h1v1h-1zm3 0h1v1h-1zm2 0h3v1h-3zm4 0h1v1h-1zm5 0h2v1h-2zm3 0h3v1h-3zm5 0h1v1h-1zm2 0h3v1h-3zm5 0h9v1h-9zm10 0h1v1h-1zm3 0h4v1h-4zm8 0h2v1h-2zm5 0h1v1h-1zm3 0h1v1h-1zm2 0h1v1h-1zm2 0h1v1h-1zm2 0h1v1h-1zm2 0h1v1h-1zm2 0h1v1h-1zm3 0h1v1h-1zm3 0h1v1h-1zm3 0h1v1h-1zm4 0h3v1h-3zm5 0h2v1h-2zm3 0h2v1h-2zm3 0h6v1h-6zm7 0h5v1h-5zm6 0h2v1h-2zm3 0h1v1h-1zm4 0h1v1h-1zm5 0h3v1h-3zm4 0h1v1h-1zm4 0h1v1h-1zm5 0h1v1h-1zm5 0h1v1h-1zm2 0h3v1h-3zm6 0h2v1h-2zm5 0h2v1h-2zm5 0h1v1h-1zm2 0h4v1h-4zm5 0h3v1h-3zm7 0h1v1h-1zm3 0h4v1h-4zm5 0h1v1h-1zm2 0h1v1h-1zm7 0h2v1h-2zm3 0h3v1h-3zm5 0h2v1h-2zm4 0h2v1h-2zm3 0h4v1h-4zm6 0h1v1h-1zm4 0h2v1h-2zm3 0h2v1h-2zm4 0h1v1h-1zm2 0h1v1h-1zm4 0h2v1h-2zm5 0h1v1h-1zm2 0h1v1h-1zm8 0h1v1h-1zm2 0h3v1h-3zm4 0h1v1h-1zm4 0h2v1h-2zm3 0h2v1h-2zm3 0h3v1h-3zm4 0h1v1h-1zm2 0h4v1h-4zm5 0h2v1h-2zm3 0h1v1h-1zm2 0h2v1h-2zm4 0h2v1h-2zm3 0h2v1h-2zm4 0h2v1h-2zm5 0h1v1h-1zm7 0h2v1h-2zm5 0h1v1h-1zm2 0h1v1h-1zm2 0h1v1h-1zm2 0h1v1h-1zm4 0h2v1h-2zm5 0h1v1h-1zm3 0h1v1h-1zm3 0h1v1h-1zm3 0h2v1h-2zm4 0h2v1h-2zm4 0h1v1h-1zm2 0h3v1h-3zm4 0h3v1h-3zm5 0h1v1h-1zm2 0h1v1h-1zm3 0h3v1h-3zm4 0h1v1h-1zm3 0h2v1h-2zm3 0h1v1h-1zm8 0h2v1h-2zm4 0h3v1h-3zm6 0h3v1h-3zm5 0h1v1h-1zm2 0h5v1h-5zm6 0h1v1h-1zm2 0h1v1h-1zm2 0h2v1h-2zm3 0h1v1h-1zm4 0h1v1h-1zm2 0h2v1h-2zm6 0h1v1h-1zm2 0h3v1h-3zm5 0h2v1h-2zm4 0h1v1h-1zm6 0h1v1h-1zm6 0h1v1h-1zm2 0h1v1h-1zm4 0h1v1h-1zm9 0h1v1h-1zm2 0h1v1h-1zm3 0h1v1h-1zm4 0h2v1h-2zm5 0h1v1h-1zm5 0h1v1h-1zm2 0h2v1h-2zm4 0h4v1h-4zm5 0h1v1h-1zm2 0h1v1h-1zm2 0h1v1h-1zm2 0h1v1h-1zm2 0h2v1h-2zm4 0h2v1h-2zm6 0h4v1h-4zm7 0h1v1h-1zm2 0h2v1h-2zm3 0h1v1h-1zm2 0h1v1h-1zm2 0h2v1h-2zm-572 1h4v1h-4zm5 0h2v1h-2zm4 0h2v1h-2zm3 0h2v1h-2zm3 0h3v1h-3zm4 0h3v1h-3zm4 0h4v1h-4zm5 0h4v1h-4zm5 0h1v1h-1zm2 0h1v1h-1zm2 0h1v1h-1zm2 0h2v1h-2zm3 0h1v1h-1zm3 0h7v1h-7zm10 0h1v1h-1zm2 0h1v1h-1zm4 0h5v1h-5zm6 0h1v1h-1zm3 0h4v1h-4zm12 0h3v1h-3zm5 0h1v1h-1zm3 0h2v1h-2zm3 0h1v1h-1zm2 0h3v1h-3zm4 0h1v1h-1zm2 0h8v1h-8zm9 0h1v1h-1zm2 0h1v1h-1zm3 0h2v1h-2zm4 0h1v1h-1zm3 0h1v1h-1zm2 0h3v1h-3zm4 0h1v1h-1zm6 0h1v1h-1zm3 0h2v1h-2zm4 0h3v1h-3zm5 0h1v1h-1zm3 0h2v1h-2zm4 0h5v1h-5zm6 0h2v1h-2zm3 0h2v1h-2zm5 0h1v1h-1zm2 0h1v1h-1zm3 0h2v1h-2zm3 0h4v1h-4zm7 0h1v1h-1zm3 0h1v1h-1zm3 0h1v1h-1zm4 0h2v1h-2zm6 0h1v1h-1zm3 0h1v1h-1zm2 0h1v1h-1zm4 0h3v1h-3zm4 0h1v1h-1zm4 0h1v1h-1zm4 0h1v1h-1zm4 0h1v1h-1zm2 0h1v1h-1zm4 0h1v1h-1zm3 0h1v1h-1zm2 0h1v1h-1zm3 0h6v1h-6zm7 0h3v1h-3zm5 0h2v1h-2zm3 0h1v1h-1zm2 0h5v1h-5zm7 0h2v1h-2zm7 0h1v1h-1zm2 0h2v1h-2zm3 0h8v1h-8zm10 0h2v1h-2zm3 0h1v1h-1zm2 0h1v1h-1zm4 0h3v1h-3zm5 0h1v1h-1zm2 0h1v1h-1zm5 0h3v1h-3zm5 0h1v1h-1zm5 0h2v1h-2zm3 0h3v1h-3zm4 0h3v1h-3zm6 0h5v1h-5zm6 0h3v1h-3zm4 0h2v1h-2zm6 0h1v1h-1zm3 0h5v1h-5zm7 0h1v1h-1zm2 0h1v1h-1zm2 0h1v1h-1zm3 0h1v1h-1zm2 0h2v1h-2zm4 0h1v1h-1zm2 0h1v1h-1zm2 0h1v1h-1zm4 0h1v1h-1zm2 0h1v1h-1zm2 0h3v1h-3zm5 0h2v1h-2zm3 0h1v1h-1zm3 0h2v1h-2zm5 0h1v1h-1zm2 0h1v1h-1zm2 0h1v1h-1zm3 0h3v1h-3zm4 0h1v1h-1zm3 0h3v1h-3zm5 0h1v1h-1zm2 0h3v1h-3zm4 0h1v1h-1zm5 0h1v1h-1zm3 0h1v1h-1zm2 0h1v1h-1zm5 0h1v1h-1zm3 0h1v1h-1zm4 0h1v1h-1zm2 0h3v1h-3zm4 0h1v1h-1zm2 0h2v1h-2zm8 0h4v1h-4zm8 0h4v1h-4zm5 0h3v1h-3zm7 0h3v1h-3zm4 0h2v1h-2zm4 0h1v1h-1zm3 0h1v1h-1zm4 0h1v1h-1zm3 0h2v1h-2zm6 0h1v1h-1zm3 0h1v1h-1zm2 0h1v1h-1zm2 0h2v1h-2zm5 0h2v1h-2zm3 0h1v1h-1zm2 0h2v1h-2zm3 0h4v1h-4zm5 0h1v1h-1zm2 0h3v1h-3zm6 0h2v1h-2zm4 0h3v1h-3zm4 0h1v1h-1zm2 0h2v1h-2zm5 0h1v1h-1zm3 0h2v1h-2zm3 0h1v1h-1zm3 0h2v1h-2zm3 0h5v1h-5zm6 0h2v1h-2zm5 0h1v1h-1zm2 0h1v1h-1zm-573 1h4v1h-4zm6 0h1v1h-1zm2 0h3v1h-3zm5 0h1v1h-1zm3 0h4v1h-4zm5 0h2v1h-2zm3 0h6v1h-6zm8 0h7v1h-7zm8 0h3v1h-3zm4 0h1v1h-1zm2 0h1v1h-1zm3 0h1v1h-1zm2 0h1v1h-1zm4 0h1v1h-1zm4 0h2v1h-2zm3 0h2v1h-2zm3 0h6v1h-6zm8 0h1v1h-1zm4 0h4v1h-4zm5 0h1v1h-1zm3 0h1v1h-1zm3 0h3v1h-3zm4 0h3v1h-3zm5 0h6v1h-6zm7 0h1v1h-1zm2 0h4v1h-4zm5 0h2v1h-2zm5 0h5v1h-5zm7 0h1v1h-1zm3 0h1v1h-1zm3 0h1v1h-1zm3 0h10v1h-10zm12 0h2v1h-2zm3 0h1v1h-1zm3 0h1v1h-1zm4 0h4v1h-4zm8 0h1v1h-1zm3 0h6v1h-6zm7 0h1v1h-1zm4 0h6v1h-6zm7 0h2v1h-2zm3 0h2v1h-2zm3 0h1v1h-1zm2 0h1v1h-1zm2 0h2v1h-2zm5 0h2v1h-2zm5 0h1v1h-1zm3 0h2v1h-2zm3 0h1v1h-1zm2 0h1v1h-1zm2 0h1v1h-1zm2 0h7v1h-7zm8 0h3v1h-3zm6 0h1v1h-1zm4 0h1v1h-1zm3 0h2v1h-2zm3 0h1v1h-1zm2 0h2v1h-2zm3 0h12v1h-12zm14 0h1v1h-1zm2 0h2v1h-2zm5 0h1v1h-1zm2 0h2v1h-2zm4 0h6v1h-6zm8 0h1v1h-1zm2 0h1v1h-1zm2 0h2v1h-2zm3 0h1v1h-1zm3 0h1v1h-1zm4 0h1v1h-1zm2 0h1v1h-1zm2 0h2v1h-2zm3 0h2v1h-2zm3 0h3v1h-3zm4 0h1v1h-1zm2 0h1v1h-1zm3 0h5v1h-5zm7 0h2v1h-2zm3 0h1v1h-1zm3 0h1v1h-1zm2 0h2v1h-2zm3 0h1v1h-1zm2 0h1v1h-1zm7 0h4v1h-4zm5 0h1v1h-1zm2 0h1v1h-1zm2 0h3v1h-3zm5 0h1v1h-1zm2 0h1v1h-1zm2 0h1v1h-1zm4 0h5v1h-5zm7 0h1v1h-1zm4 0h2v1h-2zm3 0h4v1h-4zm5 0h2v1h-2zm3 0h3v1h-3zm4 0h1v1h-1zm4 0h2v1h-2zm5 0h3v1h-3zm4 0h5v1h-5zm8 0h3v1h-3zm4 0h2v1h-2zm3 0h1v1h-1zm6 0h4v1h-4zm5 0h6v1h-6zm8 0h1v1h-1zm2 0h3v1h-3zm5 0h3v1h-3zm4 0h1v1h-1zm2 0h1v1h-1zm3 0h1v1h-1zm2 0h6v1h-6zm7 0h2v1h-2zm5 0h1v1h-1zm2 0h1v1h-1zm2 0h2v1h-2zm3 0h2v1h-2zm3 0h1v1h-1zm2 0h3v1h-3zm5 0h2v1h-2zm4 0h1v1h-1zm2 0h1v1h-1zm6 0h3v1h-3zm4 0h4v1h-4zm5 0h1v1h-1zm2 0h1v1h-1zm2 0h6v1h-6zm7 0h1v1h-1zm3 0h1v1h-1zm5 0h3v1h-3zm4 0h1v1h-1zm2 0h1v1h-1zm2 0h2v1h-2zm6 0h1v1h-1zm3 0h2v1h-2zm6 0h1v1h-1zm2 0h3v1h-3zm7 0h1v1h-1zm5 0h1v1h-1zm2 0h2v1h-2zm3 0h1v1h-1zm2 0h1v1h-1zm2 0h5v1h-5zm-567 1h1v1h-1zm3 0h1v1h-1zm2 0h4v1h-4zm5 0h5v1h-5zm7 0h4v1h-4zm7 0h7v1h-7zm8 0h6v1h-6zm7 0h2v1h-2zm3 0h2v1h-2zm7 0h1v1h-1zm2 0h5v1h-5zm6 0h1v1h-1zm2 0h1v1h-1zm2 0h7v1h-7zm8 0h2v1h-2zm3 0h2v1h-2zm4 0h3v1h-3zm4 0h1v1h-1zm2 0h1v1h-1zm2 0h2v1h-2zm5 0h3v1h-3zm5 0h3v1h-3zm7 0h1v1h-1zm2 0h1v1h-1zm2 0h1v1h-1zm2 0h3v1h-3zm5 0h1v1h-1zm3 0h4v1h-4zm6 0h1v1h-1zm2 0h1v1h-1zm2 0h2v1h-2zm3 0h2v1h-2zm3 0h2v1h-2zm4 0h1v1h-1zm3 0h1v1h-1zm2 0h1v1h-1zm4 0h6v1h-6zm8 0h5v1h-5zm8 0h2v1h-2zm3 0h1v1h-1zm2 0h8v1h-8zm9 0h6v1h-6zm7 0h4v1h-4zm5 0h2v1h-2zm4 0h4v1h-4zm6 0h5v1h-5zm6 0h4v1h-4zm5 0h4v1h-4zm5 0h1v1h-1zm6 0h6v1h-6zm8 0h1v1h-1zm3 0h1v1h-1zm3 0h5v1h-5zm6 0h3v1h-3zm6 0h1v1h-1zm4 0h3v1h-3zm4 0h4v1h-4zm5 0h1v1h-1zm2 0h1v1h-1zm2 0h1v1h-1zm3 0h1v1h-1zm2 0h9v1h-9zm14 0h1v1h-1zm3 0h2v1h-2zm3 0h2v1h-2zm3 0h4v1h-4zm5 0h1v1h-1zm3 0h1v1h-1zm4 0h10v1h-10zm12 0h1v1h-1zm2 0h1v1h-1zm3 0h5v1h-5zm7 0h1v1h-1zm2 0h1v1h-1zm2 0h4v1h-4zm7 0h1v1h-1zm2 0h1v1h-1zm4 0h4v1h-4zm5 0h1v1h-1zm3 0h6v1h-6zm7 0h6v1h-6zm7 0h1v1h-1zm2 0h1v1h-1zm3 0h1v1h-1zm4 0h4v1h-4zm5 0h1v1h-1zm2 0h1v1h-1zm5 0h5v1h-5zm7 0h5v1h-5zm13 0h1v1h-1zm2 0h1v1h-1zm2 0h5v1h-5zm8 0h4v1h-4zm10 0h5v1h-5zm6 0h2v1h-2zm3 0h1v1h-1zm5 0h2v1h-2zm3 0h2v1h-2zm4 0h2v1h-2zm3 0h2v1h-2zm3 0h4v1h-4zm8 0h2v1h-2zm3 0h1v1h-1zm3 0h2v1h-2zm3 0h1v1h-1zm2 0h1v1h-1zm2 0h1v1h-1zm3 0h1v1h-1zm3 0h2v1h-2zm5 0h1v1h-1zm3 0h1v1h-1zm3 0h1v1h-1zm3 0h2v1h-2zm5 0h1v1h-1zm4 0h1v1h-1zm3 0h1v1h-1zm2 0h11v1h-11zm13 0h1v1h-1zm2 0h1v1h-1zm4 0h1v1h-1zm2 0h1v1h-1zm2 0h1v1h-1zm4 0h2v1h-2zm3 0h2v1h-2zm3 0h1v1h-1zm3 0h2v1h-2zm6 0h2v1h-2zm11 0h1v1h-1zm2 0h1v1h-1zm4 0h1v1h-1zm2 0h2v1h-2zm3 0h1v1h-1zm-573 1h1v1h-1zm2 0h3v1h-3zm5 0h1v1h-1zm2 0h1v1h-1zm2 0h1v1h-1zm5 0h2v1h-2zm3 0h3v1h-3zm4 0h2v1h-2zm4 0h3v1h-3zm4 0h2v1h-2zm3 0h1v1h-1zm3 0h2v1h-2zm3 0h1v1h-1zm2 0h10v1h-10zm11 0h1v1h-1zm2 0h1v1h-1zm2 0h1v1h-1zm3 0h1v1h-1zm2 0h1v1h-1zm2 0h1v1h-1zm5 0h5v1h-5zm6 0h2v1h-2zm4 0h4v1h-4zm5 0h6v1h-6zm7 0h2v1h-2zm3 0h3v1h-3zm4 0h2v1h-2zm4 0h2v1h-2zm3 0h4v1h-4zm5 0h2v1h-2zm3 0h2v1h-2zm3 0h1v1h-1zm2 0h7v1h-7zm9 0h1v1h-1zm8 0h1v1h-1zm4 0h1v1h-1zm2 0h2v1h-2zm3 0h4v1h-4zm5 0h8v1h-8zm9 0h2v1h-2zm4 0h5v1h-5zm6 0h1v1h-1zm2 0h1v1h-1zm2 0h2v1h-2zm3 0h3v1h-3zm4 0h1v1h-1zm4 0h1v1h-1zm2 0h1v1h-1zm4 0h2v1h-2zm4 0h1v1h-1zm2 0h2v1h-2zm3 0h1v1h-1zm2 0h1v1h-1zm2 0h1v1h-1zm2 0h2v1h-2zm3 0h1v1h-1zm3 0h2v1h-2zm4 0h1v1h-1zm3 0h5v1h-5zm8 0h2v1h-2zm4 0h1v1h-1zm2 0h1v1h-1zm3 0h2v1h-2zm6 0h4v1h-4zm5 0h2v1h-2zm3 0h1v1h-1zm2 0h1v1h-1zm2 0h1v1h-1zm3 0h1v1h-1zm2 0h3v1h-3zm4 0h1v1h-1zm3 0h8v1h-8zm11 0h5v1h-5zm7 0h1v1h-1zm2 0h1v1h-1zm3 0h1v1h-1zm2 0h4v1h-4zm5 0h1v1h-1zm2 0h2v1h-2zm5 0h6v1h-6zm7 0h3v1h-3zm7 0h8v1h-8zm11 0h1v1h-1zm2 0h2v1h-2zm3 0h1v1h-1zm3 0h1v1h-1zm2 0h4v1h-4zm6 0h4v1h-4zm5 0h4v1h-4zm5 0h1v1h-1zm2 0h4v1h-4zm6 0h2v1h-2zm4 0h1v1h-1zm3 0h2v1h-2zm3 0h1v1h-1zm2 0h1v1h-1zm2 0h2v1h-2zm3 0h12v1h-12zm15 0h1v1h-1zm2 0h1v1h-1zm2 0h2v1h-2zm4 0h2v1h-2zm3 0h1v1h-1zm2 0h3v1h-3zm4 0h2v1h-2zm5 0h4v1h-4zm6 0h1v1h-1zm2 0h2v1h-2zm3 0h5v1h-5zm6 0h2v1h-2zm4 0h1v1h-1zm3 0h1v1h-1zm2 0h1v1h-1zm2 0h1v1h-1zm2 0h3v1h-3zm5 0h2v1h-2zm3 0h2v1h-2zm3 0h4v1h-4zm5 0h1v1h-1zm2 0h3v1h-3zm4 0h2v1h-2zm3 0h1v1h-1zm3 0h2v1h-2zm3 0h1v1h-1zm2 0h2v1h-2zm3 0h4v1h-4zm6 0h3v1h-3zm4 0h3v1h-3zm4 0h1v1h-1zm2 0h3v1h-3zm5 0h1v1h-1zm2 0h1v1h-1zm5 0h7v1h-7zm11 0h1v1h-1zm4 0h1v1h-1zm2 0h2v1h-2zm3 0h1v1h-1zm2 0h2v1h-2zm3 0h1v1h-1zm2 0h1v1h-1zm5 0h1v1h-1zm2 0h3v1h-3zm4 0h2v1h-2zm3 0h1v1h-1zm3 0h2v1h-2zm3 0h6v1h-6zm7 0h1v1h-1zm2 0h2v1h-2zm7 0h1v1h-1zm2 0h1v1h-1z" fill="#000"/>
<polygon points="226.5,484.2802013422819 228.5,475.2802013422819 230.5,484.2802013422819" fill="#b00800" opacity="0.8"/>
<g filter="url(#vblur)"><polygon points="225.5,511.2130684826909 228.5,495.2130684826909 231.5,511.2130684826909" fill="#e07000"/><rect x="227.5" y="513.2130684826909" width="2" height="22" fill="#80e020"/></g>
<polygon points="282.5,484.84395973154363 284.5,475.84395973154363 286.5,484.84395973154363" fill="#b00800" opacity="0.8"/>
<g filter="url(#vblur)"><polygon points="281.5,512.1169859044959 284.5,496.1169859044959 287.5,512.1169859044959" fill="#e07000"/><rect x="283.5" y="514.1169859044959" width="2" height="22" fill="#80e020"/></g>
<linearGradient id="rbg" gradientUnits="userSpaceOnUse" x1="0" y1="262" x2="0" y2="520"><stop offset="0" stop-color="#e60000" stop-opacity="0.6"/><stop offset="0.81" stop-color="#e60000" stop-opacity="0.6"/><stop offset="0.88" stop-color="#e60000" stop-opacity="0.75"/><stop offset="1" stop-color="#e60000" stop-opacity="0"/></linearGradient>
<linearGradient id="rbe" gradientUnits="userSpaceOnUse" x1="0" y1="262" x2="0" y2="520"><stop offset="0" stop-color="#ff1010"/><stop offset="0.88" stop-color="#ff1010"/><stop offset="1" stop-color="#ff1010" stop-opacity="0"/></linearGradient>
<rect x="515" y="262" width="11" height="258" fill="url(#rbg)"/>
<rect x="515" y="262" width="1" height="258" fill="url(#rbe)"/>
<rect x="525" y="262" width="1" height="258" fill="url(#rbe)"/>
<path d="M520 548h1v1h-1zm0 2h1v1h-1zm0 3h1v1h-1zm0 4h2v1h-2zm0 1h2v1h-2zm-1 1h1v1h-1zm3 0h1v1h-1zm-3 1h1v1h-1zm2 0h1v1h-1zm-4 1h1v1h-1zm3 0h1v1h-1zm3 0h1v1h-1zm-6 1h1v1h-1zm5 0h1v1h-1zm-4 1h1v1h-1zm3 0h3v1h-3zm1 1h2v1h-2zm-4 1h2v1h-2zm1 1h1v1h-1zm2 0h2v1h-2zm-3 1h1v1h-1zm2 0h1v1h-1zm-3 1h1v1h-1zm4 0h1v1h-1zm-6 1h2v1h-2zm3 0h1v1h-1zm3 0h1v1h-1zm4 0h1v1h-1zm-8 1h1v1h-1zm5 0h2v1h-2zm-7 1h1v1h-1zm5 0h1v1h-1zm-1 1h1v1h-1zm3 0h1v1h-1z" fill="#d01010"/>
<polygon points="338,430 337.2,500 337.7,503 337.3,506 337.7,509 337.6,512 336.4,515 336.1,518 337.4,521 336.2,524 335.9,527 337.0,530 335.8,533 336.2,536 335.3,539 335.3,542 334.1,545 334.6,548 334.7,551 333.7,554 333.8,557 333.3,560 331.8,563 332.6,566 331.9,569 331.0,572 352.5,573 353.6,570 352.5,567 352.6,564 352.5,561 351.8,558 351.9,555 350.6,552 351.0,549 350.1,546 350.7,543 350.3,540 348.6,537 348.4,534 348.3,531 349.4,528 348.3,525 348.4,522 347.6,519 347.8,516 347.5,513 347.3,510 347.6,507 347.5,504 348.0,501 347,430" fill="#000"/>
<polyline points="337,446 336.2,500 336.7,503 336.3,506 336.7,509 336.6,512 335.4,515 335.1,518 336.4,521 335.2,524 334.9,527 336.0,530 334.8,533 335.2,536 334.3,539 334.3,542 333.1,545 333.6,548 333.7,551 332.7,554 332.8,557 332.3,560 330.8,563 331.6,566 330.9,569 330.0,572" fill="none" stroke="#e8c000" stroke-width="1" opacity="0.8"/>
<polyline points="353.5,573 354.6,570 353.5,567 353.6,564 353.5,561 352.8,558 352.9,555 351.6,552 352.0,549 351.1,546 351.7,543 351.3,540 349.6,537 349.4,534 349.3,531 350.4,528 349.3,525 349.4,522 348.6,519 348.8,516 348.5,513 348.3,510 348.6,507 348.5,504 349.0,501 348,446" fill="none" stroke="#e8c000" stroke-width="1" opacity="0.8"/>
<polyline points="338,434 337.2,500 337.7,503 337.3,506 337.7,509 337.6,512 336.4,515 336.1,518 337.4,521 336.2,524 335.9,527 337.0,530 335.8,533 336.2,536 335.3,539 335.3,542 334.1,545 334.6,548 334.7,551 333.7,554 333.8,557 333.3,560 331.8,563 332.6,566 331.9,569 331.0,572" fill="none" stroke="#30d060" stroke-width="1"/>
<polyline points="352.5,573 353.6,570 352.5,567 352.6,564 352.5,561 351.8,558 351.9,555 350.6,552 351.0,549 350.1,546 350.7,543 350.3,540 348.6,537 348.4,534 348.3,531 349.4,528 348.3,525 348.4,522 347.6,519 347.8,516 347.5,513 347.3,510 347.6,507 347.5,504 348.0,501 347,434" fill="none" stroke="#30d060" stroke-width="1"/>
<polyline points="314.5,470.5 324.5,464.5 331.5,457.5 333.5,437.5 334.5,414.5 335.5,400.5 336.5,345.5 337.5,311.5 338.5,304.5 339.5,300.5 340.5,303.5 341.5,305.5 342.5,302.5 343.5,300.5 344.5,303.5 345.5,307.5 346.5,320.5 347.5,345.5 348.5,400.5 349.5,437.5 354.5,457.5 360.5,464.5 370.5,470.5" fill="none" stroke="#f8f820" stroke-width="1"/>
<polyline points="338.5,440.5 338.5,400.5 339.5,345.5 340.5,330.5 341.5,310.5 342.5,306 343.5,303.5 344.5,306.5 345.5,315.5 346.5,345.5 347.5,400.5 347.5,440.5" fill="none" stroke="#e85820" stroke-width="1"/>
<path d="M339 301h1v1h-1zM341 340h1v1h-1zM340 364h1v1h-1zM344 383h1v1h-1zM342 411h1v1h-1zM345 440h1v1h-1zM341 478h1v1h-1zM344 512h1v1h-1zM340 530h1v1h-1zM343 548h1v1h-1zM521 320h1v1h-1zM523 372h1v1h-1zM516 437h1v1h-1zM518 290h1v1h-1z" fill="#10c8c0"/>
<polyline points="507.5,471 510.5,466 513.5,458 515.5,446 516.5,430 516.5,324.5 517.5,313.5 518.5,306 519.5,301.5 520.5,301.5 521.5,306 522.5,311.5 523.5,322.5 524.5,332 524.5,472" fill="none" stroke="#ffff20" stroke-width="1"/>
<polyline points="151,471.5 154,471.9 157,468.1 160,466.8 163,467.9 166,468.7 169,472.4 172,468.1 175,470.6 178,470.8 181,473.0 184,467.1 187,471.8 190,468.7 193,467.1 196,470.9 199,472.4 202,470.6 205,466.9 208,473.4 211,469.3 214,471.1 217,471.7 220,468.5 223,469.6 226,469.1 229,467.5 232,467.3 235,471.9 238,469.7 241,473.0 244,467.4 247,469.1 250,468.3 253,473.6 256,472.6 259,473.4 262,470.7 265,467.9 268,470.1 271,468.8 274,467.4 277,471.2 280,469.3 283,468.1 286,470.9 289,473.9 292,474.0 295,470.7 298,468.2 301,472.9 304,468.3 307,471.3 310,468.1 313,474.5 314,470" fill="none" stroke="#ffff30" stroke-width="1"/>
<polyline points="370,470 373,470.9 376,474.2 379,471.8 382,471.3 385,469.8 388,473.1 391,469.7 394,471.2 397,473.2 400,472.2 403,468.9 406,469.4 409,472.8 412,473.1 415,468.7 418,475.0 421,468.9 424,469.2 427,468.7 430,471.2 433,472.4 436,474.1 439,469.3 442,473.0 445,468.9 448,472.3 451,470.0 454,470.7 457,468.6 460,473.3 463,469.2 466,473.7 469,470.7 472,472.5 475,472.9 478,471.8 481,474.5 484,474.9 487,470.4 490,470.8 493,474.6 496,469.5 499,471.5 502,471.5 505,475.4 508,469.5 511,473.2 514,474.0 517,473.8 520,468.7 523,475.3 526,470.9 529,474.7 532,473.4 535,471.7 538,474.7 541,473.6 544,471.2 547,474.0 550,472.4 553,473.9 556,473.2 559,474.5 562,470.1 565,472.5 568,469.0 571,474.6 574,474.5 577,475.0 580,469.4 583,472.9 586,472.5 589,470.0 592,470.6 595,476.0 598,475.2 601,470.9 604,475.1 607,473.9 610,472.0 613,473.9 616,471.0 619,471.3 622,469.5 625,474.0 628,473.5 631,474.7 634,473.0 637,472.6 640,471.8 643,474.9 646,472.4 649,474.1 652,475.3 655,473.2 658,474.9 661,470.6 664,472.1 667,476.3 670,471.5 673,470.9 676,470.7 679,476.1 682,471.5 685,474.1 688,474.0 691,476.6 694,474.3 697,474.5 700,471.0 703,476.3 706,476.1 709,475.0 712,476.4 715,474.8 718,474.2 721,473.9 724,468.3" fill="none" stroke="#ffff30" stroke-width="1"/>
<polyline points="151,475.7 155,486.2 159,487.5 163,478.0 167,476.5 171,479.8 175,476.9 179,480.2 183,476.9 187,478.5 191,475.9 195,481.1 199,479.6 203,484.8 207,480.7 211,478.1 215,487.6 219,486.9 223,484.5 227,478.9 231,481.1 235,481.8 239,481.3 243,476.7 247,481.9 251,485.7 255,484.9 259,486.9 263,484.8 267,485.8 271,487.2 275,487.8 279,486.3 283,481.8 287,484.8 291,484.8 295,487.5 299,485.6 303,482.3 307,479.3 311,481.0 315,480.1 319,485.3 323,486.3 327,479.4 331,483.5 335,487.2" fill="none" stroke="#f08050" stroke-width="1" opacity="0.85"/>
<polyline points="351,481.6 355,479.0 359,480.7 363,477.3 367,479.1 371,482.4 375,478.6 379,477.4 383,483.9 387,488.9 391,487.4 395,481.3 399,488.5 403,478.4 407,479.3 411,477.5 415,478.2 419,484.7 423,486.6 427,483.3 431,487.2 435,483.0 439,488.7 443,485.0 447,484.1 451,479.8 455,482.9 459,483.1 463,487.7 467,480.6 471,481.4 475,487.7 479,478.8 483,484.4 487,480.6 491,486.0 495,485.2 499,479.2 503,486.8 507,483.0 511,482.0 515,488.4 519,487.5 523,481.9 527,486.4 531,479.8 535,484.5 539,479.3 543,486.0 547,489.4 551,486.0 555,478.9 559,484.6 563,484.1 567,483.8 571,480.4 575,481.9 579,484.0 583,479.5 587,486.8 591,481.6 595,482.2 599,479.8 603,482.4 607,490.0 611,482.3 615,480.0 619,483.0 623,490.3 627,480.0 631,483.1 635,481.5 639,487.3 643,484.8 647,480.5 651,489.8 655,483.5 659,487.9 663,485.2 667,490.3 671,480.7 675,482.8 679,483.6 683,483.5 687,490.3 691,486.5 695,484.6 699,486.4 703,490.4 707,487.0 711,485.5 715,487.9 719,485.7 723,480.1" fill="none" stroke="#f08050" stroke-width="1" opacity="0.85"/>
<linearGradient id="rbo" gradientUnits="userSpaceOnUse" x1="0" y1="464" x2="0" y2="500"><stop offset="0" stop-color="#d00000" stop-opacity="0"/><stop offset="0.12" stop-color="#d00000" stop-opacity="0.9"/><stop offset="0.6" stop-color="#d00000" stop-opacity="0.8"/><stop offset="1" stop-color="#d00000" stop-opacity="0"/></linearGradient>
<rect x="516" y="464" width="9" height="36" fill="url(#rbo)"/>
<polyline points="515.5,464 515.5,472" stroke="#ffff20" stroke-width="1"/><polyline points="524.5,464 524.5,472" stroke="#ffff20" stroke-width="1"/>
<polyline points="151.5,428.5 180.5,428.5 180.5,427.5 236.5,427.5 236.5,426.5 263.5,426.5 263.5,371.5 265.5,371.5 265.5,303.5 267.5,303.5 267.5,290.5 268.5,290.5 268.5,275.5 269.5,275.5 269.5,272.5 270.5,272.5 270.5,270.5 279.5,270.5 279.5,264.5 356.5,264.5 356.5,269.5 371.5,269.5 371.5,268.5 399.5,268.5 399.5,267.5 412.5,267.5 412.5,271.5 416.5,271.5 416.5,272.5 418.5,294.5 419.5,323.5 420.5,352.5 421.5,386.5 421.5,417.5 422.5,420.5 424.5,423.5 429.5,425.5 433.5,428.5 453.5,428.5 453.5,427.5 460.5,427.5 460.5,430.5 466.5,430.5 466.5,427.5 485.5,427.5 485.5,426.5 488.5,426.5 488.5,433.5 548.5,433.5 548.5,432.5 668.5,432.5 668.5,431.5 726.5,431.5" fill="none" stroke="#f8a800" stroke-width="1"/>
<rect x="162" y="553" width="80" height="13" fill="rgba(0,20,20,0.85)"/>
</g>
<rect x="727" y="262" width="10" height="10" fill="#600000"/>
<rect x="727" y="272" width="10" height="229" fill="url(#cbar)"/>
<rect x="727" y="501" width="10" height="72" fill="#000"/>
<rect x="142" y="263" width="4" height="1" fill="#000"/>
<rect x="142" y="325" width="4" height="1" fill="#000"/>
<rect x="142" y="387" width="4" height="1" fill="#000"/>
<rect x="142" y="449" width="4" height="1" fill="#000"/>
<rect x="142" y="511" width="4" height="1" fill="#000"/>
<rect x="142" y="573" width="4" height="1" fill="#000"/>
<circle cx="9" cy="33.5" r="3.4" fill="#c4c4c4" stroke="#909090" stroke-width="0.7"/>
<path d="M6.4,35.9 Q9,37.7 11.6,35.9" fill="none" stroke="#101080" stroke-width="1.1"/>
<circle cx="8" cy="32.5" r="1" fill="#30b020"/>
<circle cx="9" cy="201.5" r="3.4" fill="#b8b8b8" stroke="#a0a0a0" stroke-width="0.7"/>
<circle cx="9" cy="265.5" r="3.4" fill="#c4c4c4" stroke="#909090" stroke-width="0.7"/>
<path d="M6.4,267.9 Q9,269.7 11.6,267.9" fill="none" stroke="#101080" stroke-width="1.1"/>
<circle cx="8" cy="264.5" r="1" fill="#30b020"/>
<circle cx="9" cy="303.5" r="3.4" fill="#c4c4c4" stroke="#909090" stroke-width="0.7"/>
<path d="M6.4,305.9 Q9,307.7 11.6,305.9" fill="none" stroke="#101080" stroke-width="1.1"/>
<circle cx="8" cy="302.5" r="1" fill="#30b020"/>
<circle cx="97" cy="594.5" r="3.4" fill="#c4c4c4" stroke="#909090" stroke-width="0.7"/>
<path d="M94.4,596.9 Q97,598.7 99.6,596.9" fill="none" stroke="#101080" stroke-width="1.1"/>
<circle cx="96" cy="593.5" r="1" fill="#30b020"/>
<circle cx="598" cy="594.5" r="3.4" fill="#c4c4c4" stroke="#909090" stroke-width="0.7"/>
<path d="M595.4,596.9 Q598,598.7 600.6,596.9" fill="none" stroke="#101080" stroke-width="1.1"/>
<circle cx="597" cy="593.5" r="1" fill="#30b020"/>
<polygon points="92,238 103,238 97.5,244" fill="#b0b0b0"/>
<line x1="97.5" y1="244" x2="103" y2="238" stroke="#2030a0" stroke-width="1"/>
<polyline points="732,37 735.5,33 739,37" fill="none" stroke="#a8a8a8" stroke-width="2"/>
<polyline points="732,213 735.5,217 739,213" fill="none" stroke="#a8a8a8" stroke-width="2"/>
<polyline points="189,242 192,246 197,238" fill="none" stroke="#000" stroke-width="2"/>
<polyline points="79.6,534.6 82.5,538.2 85.4,534.6" fill="none" stroke="#404040" stroke-width="2"/>
</svg>
<div style="position:absolute;left:270px;top:7.84px;font-size:12px;line-height:12px;height:16px;color:#000;white-space:pre;">+Peak</div>
<div style="position:absolute;left:19px;top:25.42px;font-size:12.5px;line-height:12.5px;height:16.5px;color:#000;white-space:pre;letter-spacing:0.2px">Time/div:</div>
<div style="position:absolute;left:19px;top:41.84px;font-size:12px;line-height:12px;height:16px;color:#000;white-space:pre;letter-spacing:0.45px">50.0 ms</div>
<div style="position:absolute;left:25px;top:62.34px;font-size:12px;line-height:12px;height:16px;color:#000;white-space:pre;letter-spacing:0.2px">3-D</div>
<div style="position:absolute;left:19px;top:192.84px;font-size:12px;line-height:12px;height:16px;color:#a0a0b0;white-space:pre;">Pos:</div>
<div style="position:absolute;left:19px;top:209.84px;font-size:12px;line-height:12px;height:16px;color:#a0a0b0;white-space:pre;letter-spacing:0.4px">0.0 div</div>
<div style="position:absolute;left:162.5px;top:38.69px;font-size:11px;line-height:11px;height:15px;color:#fff;white-space:pre;letter-spacing:0.05px">8/18/2014 23:43:23.728555</div>
<div style="position:absolute;left:163px;top:201.52px;font-size:11.2px;line-height:11.2px;height:15.2px;color:#f8f800;white-space:pre;">Saving 1 of 100</div>
<div style="position:absolute;left:163px;top:554.52px;font-size:11.2px;line-height:11.2px;height:15.2px;color:#f8f800;white-space:pre;">Saving 1 of 100</div>
<div style="position:absolute;left:123px;top:236.84px;font-size:12px;line-height:12px;height:16px;color:#000;white-space:pre;">Trace1</div>
<div style="position:absolute;left:202px;top:236.84px;font-size:12px;line-height:12px;height:16px;color:#000;white-space:pre;">Show</div>
<div style="position:absolute;left:243.5px;top:236.84px;font-size:12px;line-height:12px;height:16px;color:#000;white-space:pre;letter-spacing:0.1px">+Peak Normal</div>
<div style="position:absolute;left:694px;top:236.66px;font-size:12.8px;line-height:12.8px;height:16.8px;color:#000;white-space:pre;letter-spacing:0px;transform:scaleX(0.9);transform-origin:0 0">Clear</div>
<div style="position:absolute;left:19px;top:257.67px;font-size:12.2px;line-height:12.2px;height:16.2px;color:#000;white-space:pre;letter-spacing:0.3px">dB/div:</div>
<div style="position:absolute;left:19px;top:274.17px;font-size:12.2px;line-height:12.2px;height:16.2px;color:#000;white-space:pre;letter-spacing:0.3px">10.0 dB</div>
<div style="position:absolute;left:19px;top:294.84px;font-size:12px;line-height:12px;height:16px;color:#000;white-space:pre;">RBW:</div>
<div style="position:absolute;left:19px;top:311.67px;font-size:12.2px;line-height:12.2px;height:16.2px;color:#000;white-space:pre;">200 kHz</div>
<div style="position:absolute;left:60px;width:76.6px;text-align:right;top:257px;font-size:12px;line-height:12px;white-space:pre;letter-spacing:0.6px">8.0</div>
<div style="position:absolute;left:60px;width:76.6px;text-align:right;top:319px;font-size:12px;line-height:12px;white-space:pre;letter-spacing:0.6px">-12.0</div>
<div style="position:absolute;left:60px;width:76.6px;text-align:right;top:381px;font-size:12px;line-height:12px;white-space:pre;letter-spacing:0.6px">-32.0</div>
<div style="position:absolute;left:60px;width:76.6px;text-align:right;top:443px;font-size:12px;line-height:12px;white-space:pre;letter-spacing:0.6px">-52.0</div>
<div style="position:absolute;left:60px;width:76.6px;text-align:right;top:505px;font-size:12px;line-height:12px;white-space:pre;letter-spacing:0.6px">-72.0</div>
<div style="position:absolute;left:60px;width:76.6px;text-align:right;top:567px;font-size:12px;line-height:12px;white-space:pre;letter-spacing:0.6px">-92.0</div>
<div style="position:absolute;left:10px;top:530.84px;font-size:12px;line-height:12px;height:16px;color:#000;white-space:pre;">Split</div>
<div style="position:absolute;left:15px;top:589.59px;font-size:12.3px;line-height:12.3px;height:16.3px;color:#000;white-space:pre;">Autoscale</div>
<div style="position:absolute;left:107px;top:589.93px;font-size:11.9px;line-height:11.9px;height:15.9px;color:#000;white-space:pre;letter-spacing:0.1px">CF:  2.45200 GHz</div>
<div style="position:absolute;left:608px;top:589.43px;font-size:11.9px;line-height:11.9px;height:15.9px;color:#000;white-space:pre;letter-spacing:0.1px">Span:  40.00 MHz</div>
</div></body></html>
